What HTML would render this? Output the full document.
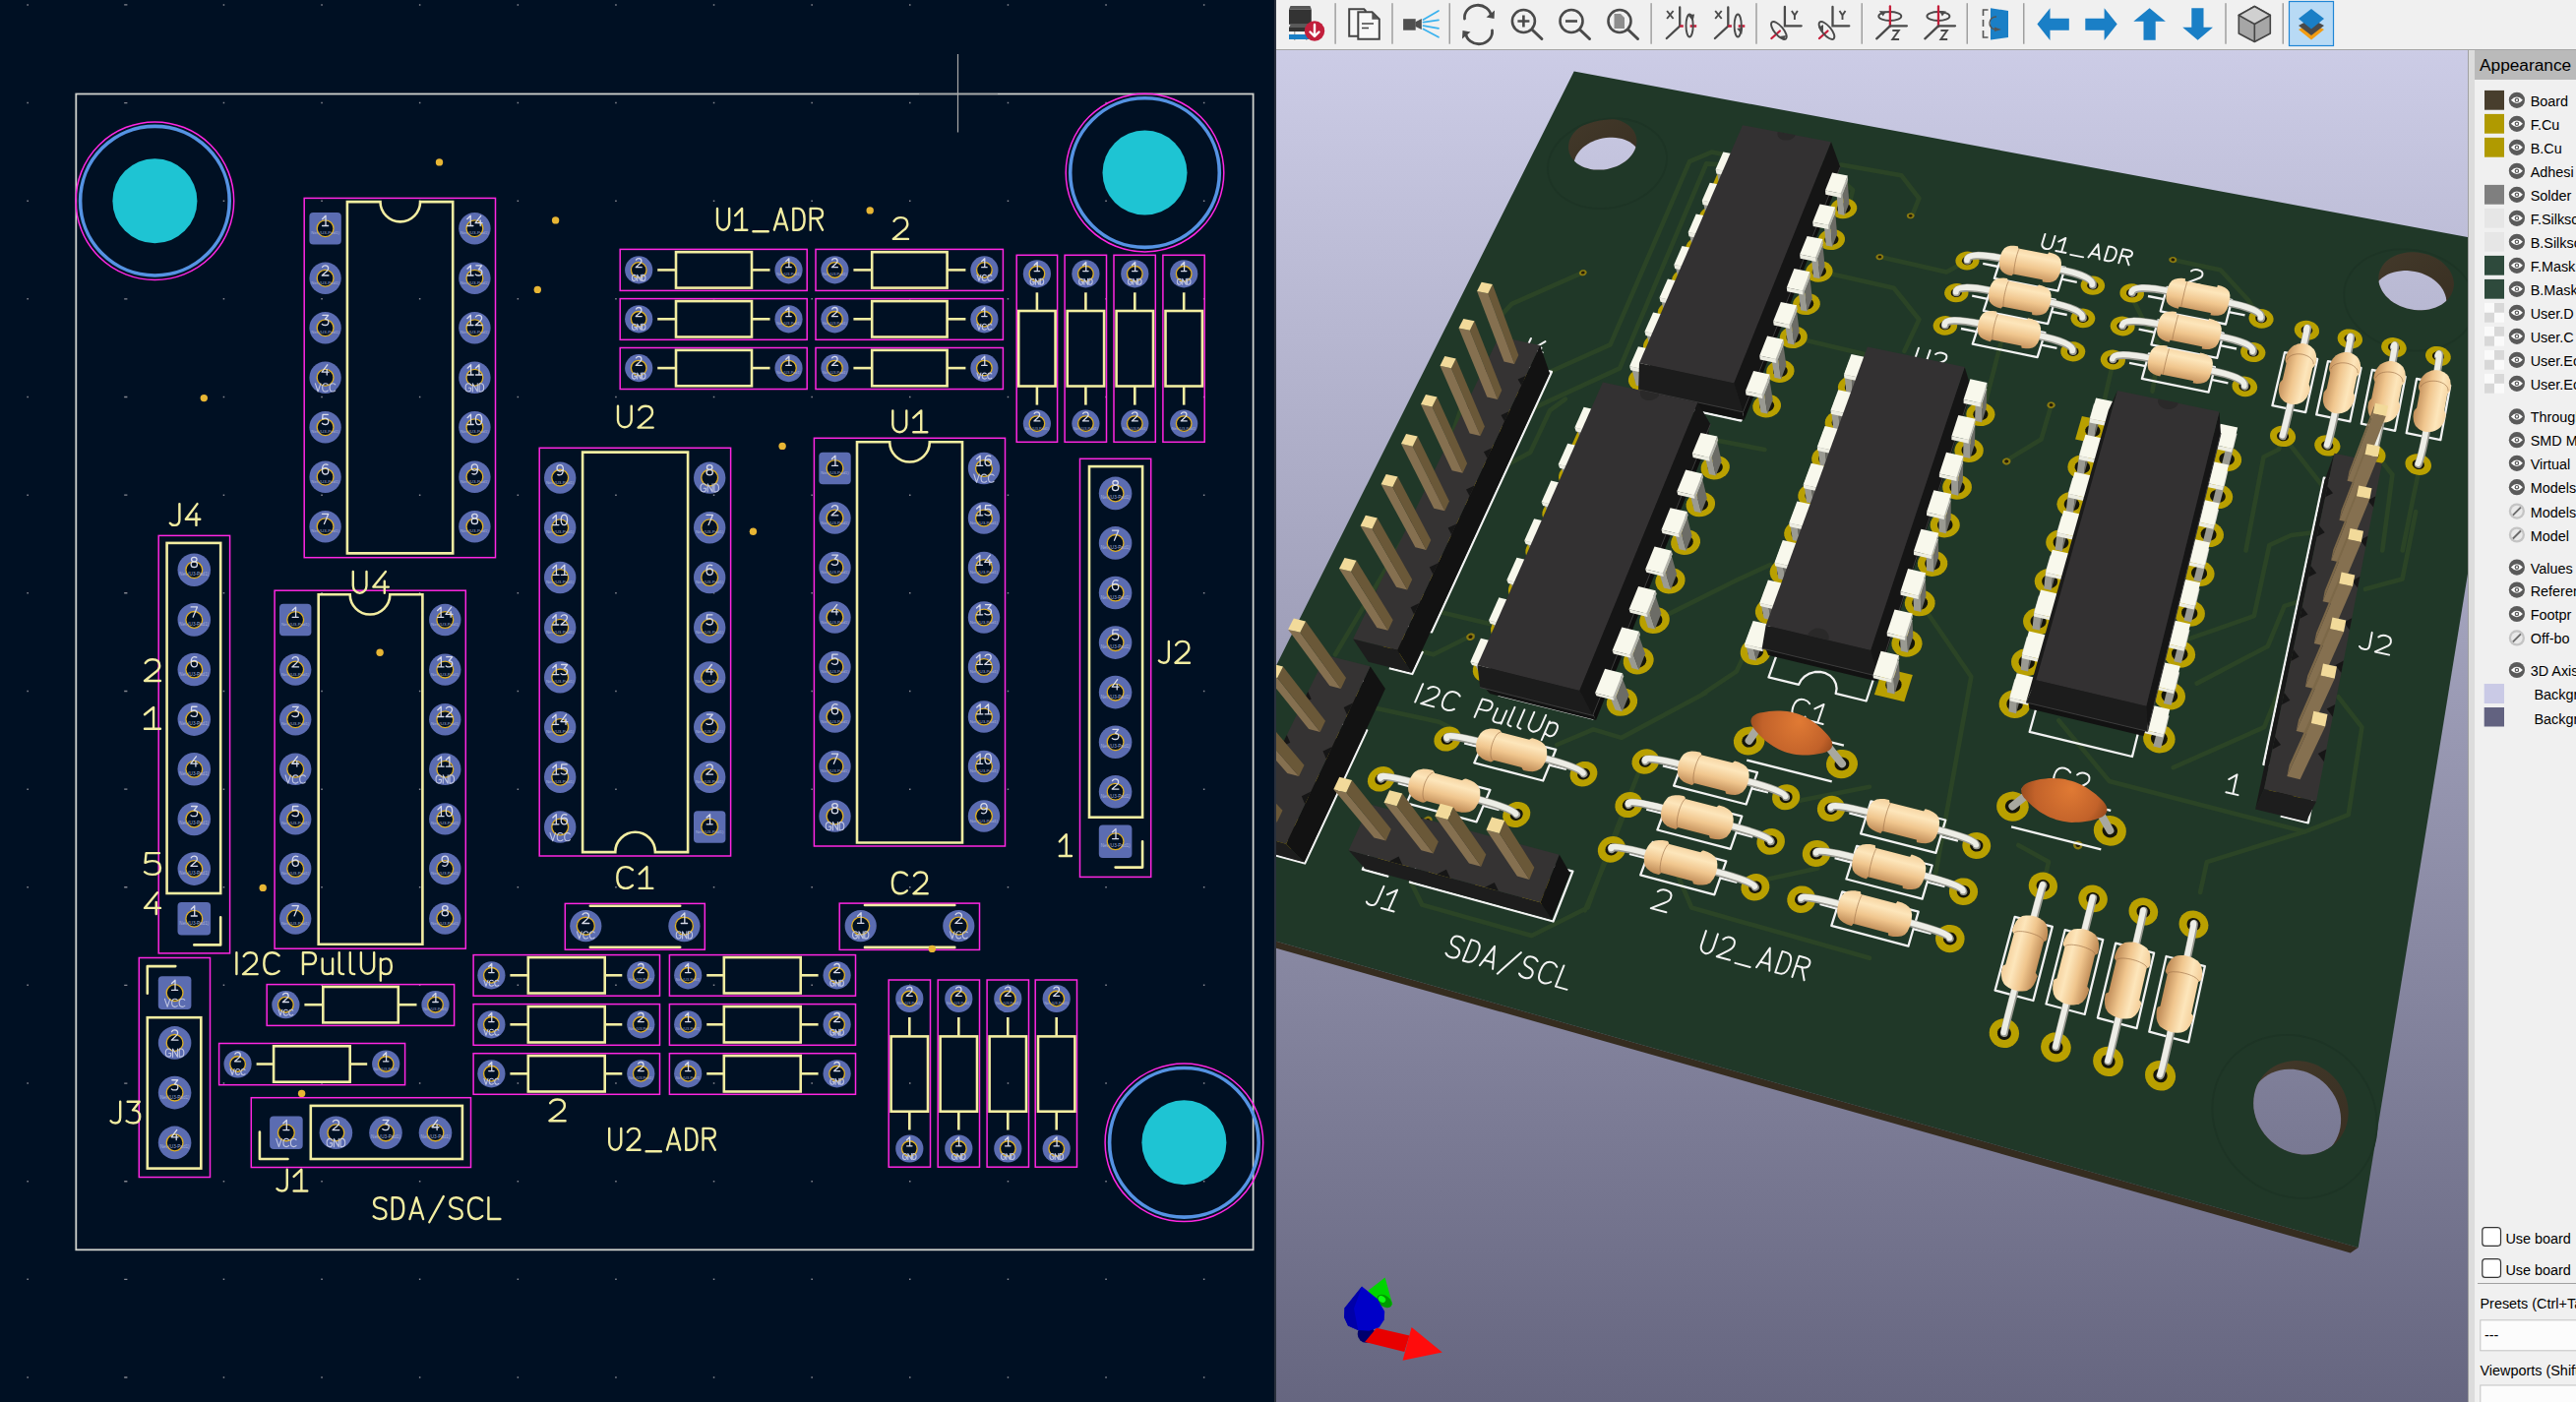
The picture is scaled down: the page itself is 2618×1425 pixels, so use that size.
<!DOCTYPE html><html><head><meta charset="utf-8"><style>
html,body{margin:0;padding:0;width:2618px;height:1425px;overflow:hidden;background:#f0f0f0;font-family:"Liberation Sans",sans-serif}
.abs{position:absolute}
</style></head><body>
<div class="abs" style="left:0;top:0;width:1295px;height:1425px;overflow:hidden">
<svg width="1295" height="1425" viewBox="0 0 1295 1425" style="position:absolute;left:0;top:0">
<rect width="1295" height="1425" fill="#001023"/>
<path d="M27.4 4.2h1.5v1.5h-1.5zM27.4 103.8h1.5v1.5h-1.5zM27.4 203.5h1.5v1.5h-1.5zM27.4 303.1h1.5v1.5h-1.5zM27.4 402.8h1.5v1.5h-1.5zM27.4 502.4h1.5v1.5h-1.5zM27.4 602.1h1.5v1.5h-1.5zM27.4 701.7h1.5v1.5h-1.5zM27.4 801.4h1.5v1.5h-1.5zM27.4 901h1.5v1.5h-1.5zM27.4 1000.6h1.5v1.5h-1.5zM27.4 1100.3h1.5v1.5h-1.5zM27.4 1200h1.5v1.5h-1.5zM27.4 1299.6h1.5v1.5h-1.5zM27.4 1399.3h1.5v1.5h-1.5zM126.2 4.2h3.2v1.4h-3.2zM126.2 103.9h3.2v1.4h-3.2zM126.2 203.5h3.2v1.4h-3.2zM126.2 303.2h3.2v1.4h-3.2zM126.2 402.8h3.2v1.4h-3.2zM126.2 502.4h3.2v1.4h-3.2zM126.2 602.1h3.2v1.4h-3.2zM126.2 701.8h3.2v1.4h-3.2zM126.2 801.4h3.2v1.4h-3.2zM126.2 901h3.2v1.4h-3.2zM126.2 1000.7h3.2v1.4h-3.2zM126.2 1100.4h3.2v1.4h-3.2zM126.2 1200h3.2v1.4h-3.2zM126.2 1299.7h3.2v1.4h-3.2zM126.2 1399.3h3.2v1.4h-3.2zM226.7 4.2h1.5v1.5h-1.5zM226.7 103.8h1.5v1.5h-1.5zM226.7 203.5h1.5v1.5h-1.5zM226.7 303.1h1.5v1.5h-1.5zM226.7 402.8h1.5v1.5h-1.5zM226.7 502.4h1.5v1.5h-1.5zM226.7 602.1h1.5v1.5h-1.5zM226.7 701.7h1.5v1.5h-1.5zM226.7 801.4h1.5v1.5h-1.5zM226.7 901h1.5v1.5h-1.5zM226.7 1000.6h1.5v1.5h-1.5zM226.7 1100.3h1.5v1.5h-1.5zM226.7 1200h1.5v1.5h-1.5zM226.7 1299.6h1.5v1.5h-1.5zM226.7 1399.3h1.5v1.5h-1.5zM326.3 4.2h1.5v1.5h-1.5zM326.3 103.8h1.5v1.5h-1.5zM326.3 203.5h1.5v1.5h-1.5zM326.3 303.1h1.5v1.5h-1.5zM326.3 402.8h1.5v1.5h-1.5zM326.3 502.4h1.5v1.5h-1.5zM326.3 602.1h1.5v1.5h-1.5zM326.3 701.7h1.5v1.5h-1.5zM326.3 801.4h1.5v1.5h-1.5zM326.3 901h1.5v1.5h-1.5zM326.3 1000.6h1.5v1.5h-1.5zM326.3 1100.3h1.5v1.5h-1.5zM326.3 1200h1.5v1.5h-1.5zM326.3 1299.6h1.5v1.5h-1.5zM326.3 1399.3h1.5v1.5h-1.5zM425.9 4.2h1.5v1.5h-1.5zM425.9 103.8h1.5v1.5h-1.5zM425.9 203.5h1.5v1.5h-1.5zM425.9 303.1h1.5v1.5h-1.5zM425.9 402.8h1.5v1.5h-1.5zM425.9 502.4h1.5v1.5h-1.5zM425.9 602.1h1.5v1.5h-1.5zM425.9 701.7h1.5v1.5h-1.5zM425.9 801.4h1.5v1.5h-1.5zM425.9 901h1.5v1.5h-1.5zM425.9 1000.6h1.5v1.5h-1.5zM425.9 1100.3h1.5v1.5h-1.5zM425.9 1200h1.5v1.5h-1.5zM425.9 1299.6h1.5v1.5h-1.5zM425.9 1399.3h1.5v1.5h-1.5zM525.6 4.2h1.5v1.5h-1.5zM525.6 103.8h1.5v1.5h-1.5zM525.6 203.5h1.5v1.5h-1.5zM525.6 303.1h1.5v1.5h-1.5zM525.6 402.8h1.5v1.5h-1.5zM525.6 502.4h1.5v1.5h-1.5zM525.6 602.1h1.5v1.5h-1.5zM525.6 701.7h1.5v1.5h-1.5zM525.6 801.4h1.5v1.5h-1.5zM525.6 901h1.5v1.5h-1.5zM525.6 1000.6h1.5v1.5h-1.5zM525.6 1100.3h1.5v1.5h-1.5zM525.6 1200h1.5v1.5h-1.5zM525.6 1299.6h1.5v1.5h-1.5zM525.6 1399.3h1.5v1.5h-1.5zM625.2 4.2h1.5v1.5h-1.5zM625.2 103.8h1.5v1.5h-1.5zM625.2 203.5h1.5v1.5h-1.5zM625.2 303.1h1.5v1.5h-1.5zM625.2 402.8h1.5v1.5h-1.5zM625.2 502.4h1.5v1.5h-1.5zM625.2 602.1h1.5v1.5h-1.5zM625.2 701.7h1.5v1.5h-1.5zM625.2 801.4h1.5v1.5h-1.5zM625.2 901h1.5v1.5h-1.5zM625.2 1000.6h1.5v1.5h-1.5zM625.2 1100.3h1.5v1.5h-1.5zM625.2 1200h1.5v1.5h-1.5zM625.2 1299.6h1.5v1.5h-1.5zM625.2 1399.3h1.5v1.5h-1.5zM724.8 4.2h1.5v1.5h-1.5zM724.8 103.8h1.5v1.5h-1.5zM724.8 203.5h1.5v1.5h-1.5zM724.8 303.1h1.5v1.5h-1.5zM724.8 402.8h1.5v1.5h-1.5zM724.8 502.4h1.5v1.5h-1.5zM724.8 602.1h1.5v1.5h-1.5zM724.8 701.7h1.5v1.5h-1.5zM724.8 801.4h1.5v1.5h-1.5zM724.8 901h1.5v1.5h-1.5zM724.8 1000.6h1.5v1.5h-1.5zM724.8 1100.3h1.5v1.5h-1.5zM724.8 1200h1.5v1.5h-1.5zM724.8 1299.6h1.5v1.5h-1.5zM724.8 1399.3h1.5v1.5h-1.5zM824.4 4.2h1.5v1.5h-1.5zM824.4 103.8h1.5v1.5h-1.5zM824.4 203.5h1.5v1.5h-1.5zM824.4 303.1h1.5v1.5h-1.5zM824.4 402.8h1.5v1.5h-1.5zM824.4 502.4h1.5v1.5h-1.5zM824.4 602.1h1.5v1.5h-1.5zM824.4 701.7h1.5v1.5h-1.5zM824.4 801.4h1.5v1.5h-1.5zM824.4 901h1.5v1.5h-1.5zM824.4 1000.6h1.5v1.5h-1.5zM824.4 1100.3h1.5v1.5h-1.5zM824.4 1200h1.5v1.5h-1.5zM824.4 1299.6h1.5v1.5h-1.5zM824.4 1399.3h1.5v1.5h-1.5zM924 4.2h1.5v1.5h-1.5zM924 103.8h1.5v1.5h-1.5zM924 203.5h1.5v1.5h-1.5zM924 303.1h1.5v1.5h-1.5zM924 402.8h1.5v1.5h-1.5zM924 502.4h1.5v1.5h-1.5zM924 602.1h1.5v1.5h-1.5zM924 701.7h1.5v1.5h-1.5zM924 801.4h1.5v1.5h-1.5zM924 901h1.5v1.5h-1.5zM924 1000.6h1.5v1.5h-1.5zM924 1100.3h1.5v1.5h-1.5zM924 1200h1.5v1.5h-1.5zM924 1299.6h1.5v1.5h-1.5zM924 1399.3h1.5v1.5h-1.5zM1023.7 4.2h1.5v1.5h-1.5zM1023.7 103.8h1.5v1.5h-1.5zM1023.7 203.5h1.5v1.5h-1.5zM1023.7 303.1h1.5v1.5h-1.5zM1023.7 402.8h1.5v1.5h-1.5zM1023.7 502.4h1.5v1.5h-1.5zM1023.7 602.1h1.5v1.5h-1.5zM1023.7 701.7h1.5v1.5h-1.5zM1023.7 801.4h1.5v1.5h-1.5zM1023.7 901h1.5v1.5h-1.5zM1023.7 1000.6h1.5v1.5h-1.5zM1023.7 1100.3h1.5v1.5h-1.5zM1023.7 1200h1.5v1.5h-1.5zM1023.7 1299.6h1.5v1.5h-1.5zM1023.7 1399.3h1.5v1.5h-1.5zM1123.3 4.2h1.5v1.5h-1.5zM1123.3 103.8h1.5v1.5h-1.5zM1123.3 203.5h1.5v1.5h-1.5zM1123.3 303.1h1.5v1.5h-1.5zM1123.3 402.8h1.5v1.5h-1.5zM1123.3 502.4h1.5v1.5h-1.5zM1123.3 602.1h1.5v1.5h-1.5zM1123.3 701.7h1.5v1.5h-1.5zM1123.3 801.4h1.5v1.5h-1.5zM1123.3 901h1.5v1.5h-1.5zM1123.3 1000.6h1.5v1.5h-1.5zM1123.3 1100.3h1.5v1.5h-1.5zM1123.3 1200h1.5v1.5h-1.5zM1123.3 1299.6h1.5v1.5h-1.5zM1123.3 1399.3h1.5v1.5h-1.5zM1222.9 4.2h1.5v1.5h-1.5zM1222.9 103.8h1.5v1.5h-1.5zM1222.9 203.5h1.5v1.5h-1.5zM1222.9 303.1h1.5v1.5h-1.5zM1222.9 402.8h1.5v1.5h-1.5zM1222.9 502.4h1.5v1.5h-1.5zM1222.9 602.1h1.5v1.5h-1.5zM1222.9 701.7h1.5v1.5h-1.5zM1222.9 801.4h1.5v1.5h-1.5zM1222.9 901h1.5v1.5h-1.5zM1222.9 1000.6h1.5v1.5h-1.5zM1222.9 1100.3h1.5v1.5h-1.5zM1222.9 1200h1.5v1.5h-1.5zM1222.9 1299.6h1.5v1.5h-1.5zM1222.9 1399.3h1.5v1.5h-1.5z" fill="#858891"/>
<rect x="77.3" y="95.5" width="1196.3" height="1174.8" fill="none" stroke="#d0d2cd" stroke-width="1.8"/>
<rect x="309.2" y="201.4" width="194.3" height="365.3" fill="none" stroke="#ff26e2" stroke-width="1.5"/>
<rect x="279.1" y="600.2" width="194.2" height="364" fill="none" stroke="#ff26e2" stroke-width="1.5"/>
<rect x="548.2" y="455.3" width="194.4" height="414.7" fill="none" stroke="#ff26e2" stroke-width="1.5"/>
<rect x="827.4" y="445.3" width="194.1" height="414.7" fill="none" stroke="#ff26e2" stroke-width="1.5"/>
<rect x="161.2" y="544.4" width="72.4" height="424.5" fill="none" stroke="#ff26e2" stroke-width="1.5"/>
<rect x="1097.5" y="466.3" width="72.2" height="425.1" fill="none" stroke="#ff26e2" stroke-width="1.5"/>
<rect x="141.3" y="973.5" width="72.2" height="223" fill="none" stroke="#ff26e2" stroke-width="1.5"/>
<rect x="255.3" y="1115.7" width="223.2" height="70.8" fill="none" stroke="#ff26e2" stroke-width="1.5"/>
<rect x="630.2" y="253.4" width="190" height="42" fill="none" stroke="#ff26e2" stroke-width="1.5"/>
<rect x="829" y="253.4" width="190.4" height="42" fill="none" stroke="#ff26e2" stroke-width="1.5"/>
<rect x="630.2" y="303.6" width="190" height="41.7" fill="none" stroke="#ff26e2" stroke-width="1.5"/>
<rect x="829" y="303.6" width="190.4" height="41.7" fill="none" stroke="#ff26e2" stroke-width="1.5"/>
<rect x="630.2" y="353.5" width="190" height="42" fill="none" stroke="#ff26e2" stroke-width="1.5"/>
<rect x="829" y="353.5" width="190.4" height="42" fill="none" stroke="#ff26e2" stroke-width="1.5"/>
<rect x="1033.2" y="259.3" width="41.4" height="190" fill="none" stroke="#ff26e2" stroke-width="1.5"/>
<rect x="1082.1" y="259.3" width="42.4" height="190" fill="none" stroke="#ff26e2" stroke-width="1.5"/>
<rect x="1132" y="259.3" width="42.3" height="190" fill="none" stroke="#ff26e2" stroke-width="1.5"/>
<rect x="1181.9" y="259.3" width="42.3" height="190" fill="none" stroke="#ff26e2" stroke-width="1.5"/>
<rect x="903.2" y="996" width="42.3" height="190.2" fill="none" stroke="#ff26e2" stroke-width="1.5"/>
<rect x="953.2" y="996" width="42.3" height="190.2" fill="none" stroke="#ff26e2" stroke-width="1.5"/>
<rect x="1003.1" y="996" width="42.4" height="190.2" fill="none" stroke="#ff26e2" stroke-width="1.5"/>
<rect x="1052.2" y="996" width="42.3" height="190.2" fill="none" stroke="#ff26e2" stroke-width="1.5"/>
<rect x="481.1" y="970.6" width="189.4" height="41.6" fill="none" stroke="#ff26e2" stroke-width="1.5"/>
<rect x="680.4" y="970.6" width="189.1" height="41.6" fill="none" stroke="#ff26e2" stroke-width="1.5"/>
<rect x="481.1" y="1020.6" width="189.4" height="41.7" fill="none" stroke="#ff26e2" stroke-width="1.5"/>
<rect x="680.4" y="1020.6" width="189.1" height="41.7" fill="none" stroke="#ff26e2" stroke-width="1.5"/>
<rect x="481.1" y="1070.7" width="189.4" height="41.6" fill="none" stroke="#ff26e2" stroke-width="1.5"/>
<rect x="680.4" y="1070.7" width="189.1" height="41.6" fill="none" stroke="#ff26e2" stroke-width="1.5"/>
<rect x="271.2" y="1000.6" width="190.4" height="41.8" fill="none" stroke="#ff26e2" stroke-width="1.5"/>
<rect x="222.6" y="1060.5" width="189" height="42.2" fill="none" stroke="#ff26e2" stroke-width="1.5"/>
<rect x="574.3" y="918.4" width="142" height="46.8" fill="none" stroke="#ff26e2" stroke-width="1.5"/>
<rect x="853.2" y="918.1" width="142.3" height="47.3" fill="none" stroke="#ff26e2" stroke-width="1.5"/>
<path d="M352.9 205.1 H386.5 A20.3 20.3 0 0 0 427.1 205.1 H460.2 V562.4 H352.9 Z" fill="none" stroke="#f2eda1" stroke-width="2.6"/>
<path d="M323.7 604.3 H355.7 A20.3 20.3 0 0 0 396.3 604.3 H429.4 V959.8 H323.7 Z" fill="none" stroke="#f2eda1" stroke-width="2.6"/>
<path d="M592.1 459.6 H699.1 V866.1 H665.9 A20.3 20.3 0 0 0 625.3 866.1 H592.1 Z" fill="none" stroke="#f2eda1" stroke-width="2.6"/>
<path d="M871 449.2 H904.2 A20.3 20.3 0 0 0 944.8 449.2 H978 V856.5 H871 Z" fill="none" stroke="#f2eda1" stroke-width="2.6"/>
<rect x="169.6" y="551.9" width="54.6" height="356.1" fill="none" stroke="#f2eda1" stroke-width="2.6"/>
<polyline points="197.3,960.4 224.2,960.4 224.2,932.2" fill="none" stroke="#f2eda1" stroke-width="2.6" stroke-linecap="round" stroke-linejoin="round"/>
<rect x="1107" y="474.1" width="54.1" height="356.6" fill="none" stroke="#f2eda1" stroke-width="2.6"/>
<polyline points="1133.6,881.6 1161.1,881.6 1161.1,855.3" fill="none" stroke="#f2eda1" stroke-width="2.6" stroke-linecap="round" stroke-linejoin="round"/>
<rect x="149.8" y="1034.2" width="54.5" height="153.4" fill="none" stroke="#f2eda1" stroke-width="2.6"/>
<polyline points="149.8,1009.8 149.8,982.1 178.3,982.1" fill="none" stroke="#f2eda1" stroke-width="2.6" stroke-linecap="round" stroke-linejoin="round"/>
<rect x="315.8" y="1123.9" width="154.1" height="54.1" fill="none" stroke="#f2eda1" stroke-width="2.6"/>
<polyline points="263.9,1150.6 263.9,1178 292.5,1178" fill="none" stroke="#f2eda1" stroke-width="2.6" stroke-linecap="round" stroke-linejoin="round"/>
<rect x="687" y="256.2" width="77" height="36.4" fill="none" stroke="#f2eda1" stroke-width="2.6"/>
<polyline points="668.2,274.4 687,274.4" fill="none" stroke="#f2eda1" stroke-width="2.6" stroke-linecap="butt" stroke-linejoin="round"/>
<polyline points="764,274.4 782.5,274.4" fill="none" stroke="#f2eda1" stroke-width="2.6" stroke-linecap="butt" stroke-linejoin="round"/>
<rect x="886.2" y="256.2" width="76.4" height="36.4" fill="none" stroke="#f2eda1" stroke-width="2.6"/>
<polyline points="867.4,274.4 886.2,274.4" fill="none" stroke="#f2eda1" stroke-width="2.6" stroke-linecap="butt" stroke-linejoin="round"/>
<polyline points="962.6,274.4 981.4,274.4" fill="none" stroke="#f2eda1" stroke-width="2.6" stroke-linecap="butt" stroke-linejoin="round"/>
<rect x="687" y="306.1" width="77" height="36.4" fill="none" stroke="#f2eda1" stroke-width="2.6"/>
<polyline points="668.2,324.3 687,324.3" fill="none" stroke="#f2eda1" stroke-width="2.6" stroke-linecap="butt" stroke-linejoin="round"/>
<polyline points="764,324.3 782.5,324.3" fill="none" stroke="#f2eda1" stroke-width="2.6" stroke-linecap="butt" stroke-linejoin="round"/>
<rect x="886.2" y="306.1" width="76.4" height="36.4" fill="none" stroke="#f2eda1" stroke-width="2.6"/>
<polyline points="867.4,324.3 886.2,324.3" fill="none" stroke="#f2eda1" stroke-width="2.6" stroke-linecap="butt" stroke-linejoin="round"/>
<polyline points="962.6,324.3 981.4,324.3" fill="none" stroke="#f2eda1" stroke-width="2.6" stroke-linecap="butt" stroke-linejoin="round"/>
<rect x="687" y="355.9" width="77" height="36.4" fill="none" stroke="#f2eda1" stroke-width="2.6"/>
<polyline points="668.2,374.1 687,374.1" fill="none" stroke="#f2eda1" stroke-width="2.6" stroke-linecap="butt" stroke-linejoin="round"/>
<polyline points="764,374.1 782.5,374.1" fill="none" stroke="#f2eda1" stroke-width="2.6" stroke-linecap="butt" stroke-linejoin="round"/>
<rect x="886.2" y="355.9" width="76.4" height="36.4" fill="none" stroke="#f2eda1" stroke-width="2.6"/>
<polyline points="867.4,374.1 886.2,374.1" fill="none" stroke="#f2eda1" stroke-width="2.6" stroke-linecap="butt" stroke-linejoin="round"/>
<polyline points="962.6,374.1 981.4,374.1" fill="none" stroke="#f2eda1" stroke-width="2.6" stroke-linecap="butt" stroke-linejoin="round"/>
<rect x="1035.2" y="316" width="37.4" height="76.5" fill="none" stroke="#f2eda1" stroke-width="2.6"/>
<polyline points="1053.9,297.3 1053.9,316" fill="none" stroke="#f2eda1" stroke-width="2.6" stroke-linecap="butt" stroke-linejoin="round"/>
<polyline points="1053.9,392.5 1053.9,411.6" fill="none" stroke="#f2eda1" stroke-width="2.6" stroke-linecap="butt" stroke-linejoin="round"/>
<rect x="1084.7" y="316" width="37.4" height="76.5" fill="none" stroke="#f2eda1" stroke-width="2.6"/>
<polyline points="1103.4,297.3 1103.4,316" fill="none" stroke="#f2eda1" stroke-width="2.6" stroke-linecap="butt" stroke-linejoin="round"/>
<polyline points="1103.4,392.5 1103.4,411.6" fill="none" stroke="#f2eda1" stroke-width="2.6" stroke-linecap="butt" stroke-linejoin="round"/>
<rect x="1134.6" y="316" width="37.4" height="76.5" fill="none" stroke="#f2eda1" stroke-width="2.6"/>
<polyline points="1153.3,297.3 1153.3,316" fill="none" stroke="#f2eda1" stroke-width="2.6" stroke-linecap="butt" stroke-linejoin="round"/>
<polyline points="1153.3,392.5 1153.3,411.6" fill="none" stroke="#f2eda1" stroke-width="2.6" stroke-linecap="butt" stroke-linejoin="round"/>
<rect x="1184.5" y="316" width="37.4" height="76.5" fill="none" stroke="#f2eda1" stroke-width="2.6"/>
<polyline points="1203.2,297.3 1203.2,316" fill="none" stroke="#f2eda1" stroke-width="2.6" stroke-linecap="butt" stroke-linejoin="round"/>
<polyline points="1203.2,392.5 1203.2,411.6" fill="none" stroke="#f2eda1" stroke-width="2.6" stroke-linecap="butt" stroke-linejoin="round"/>
<rect x="905.6" y="1053.4" width="37.4" height="76.3" fill="none" stroke="#f2eda1" stroke-width="2.6"/>
<polyline points="924.3,1034 924.3,1053.4" fill="none" stroke="#f2eda1" stroke-width="2.6" stroke-linecap="butt" stroke-linejoin="round"/>
<polyline points="924.3,1129.7 924.3,1148.5" fill="none" stroke="#f2eda1" stroke-width="2.6" stroke-linecap="butt" stroke-linejoin="round"/>
<rect x="955.6" y="1053.4" width="37.4" height="76.3" fill="none" stroke="#f2eda1" stroke-width="2.6"/>
<polyline points="974.3,1034 974.3,1053.4" fill="none" stroke="#f2eda1" stroke-width="2.6" stroke-linecap="butt" stroke-linejoin="round"/>
<polyline points="974.3,1129.7 974.3,1148.5" fill="none" stroke="#f2eda1" stroke-width="2.6" stroke-linecap="butt" stroke-linejoin="round"/>
<rect x="1005.6" y="1053.4" width="37.4" height="76.3" fill="none" stroke="#f2eda1" stroke-width="2.6"/>
<polyline points="1024.3,1034 1024.3,1053.4" fill="none" stroke="#f2eda1" stroke-width="2.6" stroke-linecap="butt" stroke-linejoin="round"/>
<polyline points="1024.3,1129.7 1024.3,1148.5" fill="none" stroke="#f2eda1" stroke-width="2.6" stroke-linecap="butt" stroke-linejoin="round"/>
<rect x="1055" y="1053.4" width="37.4" height="76.3" fill="none" stroke="#f2eda1" stroke-width="2.6"/>
<polyline points="1073.7,1034 1073.7,1053.4" fill="none" stroke="#f2eda1" stroke-width="2.6" stroke-linecap="butt" stroke-linejoin="round"/>
<polyline points="1073.7,1129.7 1073.7,1148.5" fill="none" stroke="#f2eda1" stroke-width="2.6" stroke-linecap="butt" stroke-linejoin="round"/>
<rect x="536.8" y="973.1" width="77.9" height="36.4" fill="none" stroke="#f2eda1" stroke-width="2.6"/>
<polyline points="518.4,991.3 536.8,991.3" fill="none" stroke="#f2eda1" stroke-width="2.6" stroke-linecap="butt" stroke-linejoin="round"/>
<polyline points="614.7,991.3 632.3,991.3" fill="none" stroke="#f2eda1" stroke-width="2.6" stroke-linecap="butt" stroke-linejoin="round"/>
<rect x="735.8" y="973.1" width="77.9" height="36.4" fill="none" stroke="#f2eda1" stroke-width="2.6"/>
<polyline points="718.2,991.3 735.8,991.3" fill="none" stroke="#f2eda1" stroke-width="2.6" stroke-linecap="butt" stroke-linejoin="round"/>
<polyline points="813.7,991.3 831.6,991.3" fill="none" stroke="#f2eda1" stroke-width="2.6" stroke-linecap="butt" stroke-linejoin="round"/>
<rect x="536.8" y="1023.1" width="77.9" height="36.4" fill="none" stroke="#f2eda1" stroke-width="2.6"/>
<polyline points="518.4,1041.3 536.8,1041.3" fill="none" stroke="#f2eda1" stroke-width="2.6" stroke-linecap="butt" stroke-linejoin="round"/>
<polyline points="614.7,1041.3 632.3,1041.3" fill="none" stroke="#f2eda1" stroke-width="2.6" stroke-linecap="butt" stroke-linejoin="round"/>
<rect x="735.8" y="1023.1" width="77.9" height="36.4" fill="none" stroke="#f2eda1" stroke-width="2.6"/>
<polyline points="718.2,1041.3 735.8,1041.3" fill="none" stroke="#f2eda1" stroke-width="2.6" stroke-linecap="butt" stroke-linejoin="round"/>
<polyline points="813.7,1041.3 831.6,1041.3" fill="none" stroke="#f2eda1" stroke-width="2.6" stroke-linecap="butt" stroke-linejoin="round"/>
<rect x="536.8" y="1073.1" width="77.9" height="36.4" fill="none" stroke="#f2eda1" stroke-width="2.6"/>
<polyline points="518.4,1091.3 536.8,1091.3" fill="none" stroke="#f2eda1" stroke-width="2.6" stroke-linecap="butt" stroke-linejoin="round"/>
<polyline points="614.7,1091.3 632.3,1091.3" fill="none" stroke="#f2eda1" stroke-width="2.6" stroke-linecap="butt" stroke-linejoin="round"/>
<rect x="735.8" y="1073.1" width="77.9" height="36.4" fill="none" stroke="#f2eda1" stroke-width="2.6"/>
<polyline points="718.2,1091.3 735.8,1091.3" fill="none" stroke="#f2eda1" stroke-width="2.6" stroke-linecap="butt" stroke-linejoin="round"/>
<polyline points="813.7,1091.3 831.6,1091.3" fill="none" stroke="#f2eda1" stroke-width="2.6" stroke-linecap="butt" stroke-linejoin="round"/>
<rect x="328.3" y="1003" width="76.5" height="36.4" fill="none" stroke="#f2eda1" stroke-width="2.6"/>
<polyline points="309.4,1021.2 328.3,1021.2" fill="none" stroke="#f2eda1" stroke-width="2.6" stroke-linecap="butt" stroke-linejoin="round"/>
<polyline points="404.8,1021.2 423.5,1021.2" fill="none" stroke="#f2eda1" stroke-width="2.6" stroke-linecap="butt" stroke-linejoin="round"/>
<rect x="278.1" y="1063.3" width="77.6" height="36.4" fill="none" stroke="#f2eda1" stroke-width="2.6"/>
<polyline points="260.6,1081.5 278.1,1081.5" fill="none" stroke="#f2eda1" stroke-width="2.6" stroke-linecap="butt" stroke-linejoin="round"/>
<polyline points="355.7,1081.5 373.2,1081.5" fill="none" stroke="#f2eda1" stroke-width="2.6" stroke-linecap="butt" stroke-linejoin="round"/>
<polyline points="599.8,920.8 691.2,920.8" fill="none" stroke="#f2eda1" stroke-width="2.6" stroke-linecap="round" stroke-linejoin="round"/>
<polyline points="599.8,962.8 691.2,962.8" fill="none" stroke="#f2eda1" stroke-width="2.6" stroke-linecap="round" stroke-linejoin="round"/>
<polyline points="878.9,920 970.3,920" fill="none" stroke="#f2eda1" stroke-width="2.6" stroke-linecap="round" stroke-linejoin="round"/>
<polyline points="878.9,962.9 970.3,962.9" fill="none" stroke="#f2eda1" stroke-width="2.6" stroke-linecap="round" stroke-linejoin="round"/>
<rect x="314.4" y="216" width="32.4" height="32.4" rx="4" fill="#5b6cb1"/>
<circle cx="330.6" cy="232.2" r="8.4" fill="#001023" stroke="#dcae26" stroke-width="1.35"/>
<path d="M327.54 222.67L331.01 219.30V229.50M327.54 229.50H333.66" fill="none" stroke="#d8dbea" stroke-width="1.3" stroke-linecap="round" stroke-linejoin="round"/>
<text x="330.6" y="238.2" font-size="4.4" text-anchor="middle" fill="#a6add4" font-family='"Liberation Sans", sans-serif'>Net-(U3-Pad1)</text>
<circle cx="330.6" cy="282.7" r="16.2" fill="#5b6cb1"/>
<circle cx="330.6" cy="282.7" r="8.4" fill="#001023" stroke="#dcae26" stroke-width="1.35"/>
<path d="M327.54 271.53Q328.56 269.80 330.60 269.80Q333.66 269.80 333.66 272.86Q333.66 274.39 331.82 275.92L327.23 280.00H333.97" fill="none" stroke="#d8dbea" stroke-width="1.3" stroke-linecap="round" stroke-linejoin="round"/>
<text x="330.6" y="288.7" font-size="4.4" text-anchor="middle" fill="#a6add4" font-family='"Liberation Sans", sans-serif'>Net-(U3-Pad1)</text>
<circle cx="330.6" cy="333.2" r="16.2" fill="#5b6cb1"/>
<circle cx="330.6" cy="333.2" r="8.4" fill="#001023" stroke="#dcae26" stroke-width="1.35"/>
<path d="M327.85 320.30H333.66L330.40 324.38Q333.86 324.38 333.86 327.44Q333.86 330.50 330.60 330.50Q328.56 330.50 327.34 329.48" fill="none" stroke="#d8dbea" stroke-width="1.3" stroke-linecap="round" stroke-linejoin="round"/>
<text x="330.6" y="339.2" font-size="4.4" text-anchor="middle" fill="#a6add4" font-family='"Liberation Sans", sans-serif'>Net-(U3-Pad1)</text>
<circle cx="330.6" cy="383.7" r="16.2" fill="#5b6cb1"/>
<circle cx="330.6" cy="383.7" r="8.4" fill="#001023" stroke="#dcae26" stroke-width="1.35"/>
<path d="M332.74 370.80L327.13 378.14H334.07M332.23 375.39V381.00" fill="none" stroke="#d8dbea" stroke-width="1.3" stroke-linecap="round" stroke-linejoin="round"/>
<path d="M320.43 389.80L323.14 398.00L325.84 389.80M333.31 390.95Q332.24 389.80 330.76 389.80Q327.65 389.80 327.65 393.90Q327.65 398.00 330.76 398.00Q332.24 398.00 333.31 396.85M340.77 390.95Q339.70 389.80 338.23 389.80Q335.11 389.80 335.11 393.90Q335.11 398.00 338.23 398.00Q339.70 398.00 340.77 396.85" fill="none" stroke="#c0c6e2" stroke-width="1.1" stroke-linecap="round" stroke-linejoin="round"/>
<circle cx="330.6" cy="434.2" r="16.2" fill="#5b6cb1"/>
<circle cx="330.6" cy="434.2" r="8.4" fill="#001023" stroke="#dcae26" stroke-width="1.35"/>
<path d="M333.35 421.30H328.05L327.64 425.89Q328.97 425.07 330.50 425.07Q333.76 425.07 333.76 428.24Q333.76 431.50 330.50 431.50Q328.46 431.50 327.44 430.28" fill="none" stroke="#d8dbea" stroke-width="1.3" stroke-linecap="round" stroke-linejoin="round"/>
<text x="330.6" y="440.2" font-size="4.4" text-anchor="middle" fill="#a6add4" font-family='"Liberation Sans", sans-serif'>Net-(U3-Pad1)</text>
<circle cx="330.6" cy="484.7" r="16.2" fill="#5b6cb1"/>
<circle cx="330.6" cy="484.7" r="8.4" fill="#001023" stroke="#dcae26" stroke-width="1.35"/>
<path d="M333.05 472.31Q332.03 471.80 331.01 471.80Q327.44 471.80 327.44 477.92Q327.44 482.00 330.70 482.00Q333.76 482.00 333.76 478.74Q333.76 475.68 330.70 475.68Q328.46 475.68 327.44 477.41" fill="none" stroke="#d8dbea" stroke-width="1.3" stroke-linecap="round" stroke-linejoin="round"/>
<text x="330.6" y="490.7" font-size="4.4" text-anchor="middle" fill="#a6add4" font-family='"Liberation Sans", sans-serif'>Net-(U3-Pad1)</text>
<circle cx="330.6" cy="535.2" r="16.2" fill="#5b6cb1"/>
<circle cx="330.6" cy="535.2" r="8.4" fill="#001023" stroke="#dcae26" stroke-width="1.35"/>
<path d="M327.44 522.30H333.76L329.48 532.50" fill="none" stroke="#d8dbea" stroke-width="1.3" stroke-linecap="round" stroke-linejoin="round"/>
<text x="330.6" y="541.2" font-size="4.4" text-anchor="middle" fill="#a6add4" font-family='"Liberation Sans", sans-serif'>Net-(U3-Pad1)</text>
<circle cx="482.4" cy="535.2" r="16.2" fill="#5b6cb1"/>
<circle cx="482.4" cy="535.2" r="8.4" fill="#001023" stroke="#dcae26" stroke-width="1.35"/>
<path d="M482.40 526.89Q479.65 526.89 479.65 524.54Q479.65 522.30 482.40 522.30Q485.15 522.30 485.15 524.54Q485.15 526.89 482.40 526.89Q479.24 527.09 479.24 529.64Q479.24 532.50 482.40 532.50Q485.56 532.50 485.56 529.64Q485.56 527.09 482.40 526.89Z" fill="none" stroke="#d8dbea" stroke-width="1.3" stroke-linecap="round" stroke-linejoin="round"/>
<text x="482.4" y="541.2" font-size="4.4" text-anchor="middle" fill="#a6add4" font-family='"Liberation Sans", sans-serif'>Net-(U3-Pad1)</text>
<circle cx="482.4" cy="484.7" r="16.2" fill="#5b6cb1"/>
<circle cx="482.4" cy="484.7" r="8.4" fill="#001023" stroke="#dcae26" stroke-width="1.35"/>
<path d="M485.56 476.39Q484.54 478.12 482.30 478.12Q479.24 478.12 479.24 474.96Q479.24 471.80 482.40 471.80Q485.56 471.80 485.56 475.88Q485.56 482.00 482.09 482.00Q480.77 482.00 479.95 481.49" fill="none" stroke="#d8dbea" stroke-width="1.3" stroke-linecap="round" stroke-linejoin="round"/>
<text x="482.4" y="490.7" font-size="4.4" text-anchor="middle" fill="#a6add4" font-family='"Liberation Sans", sans-serif'>Net-(U3-Pad1)</text>
<circle cx="482.4" cy="434.2" r="16.2" fill="#5b6cb1"/>
<circle cx="482.4" cy="434.2" r="8.4" fill="#001023" stroke="#dcae26" stroke-width="1.35"/>
<path d="M475.06 424.67L478.52 421.30V431.50M475.06 431.50H481.18M486.58 421.30Q489.74 421.30 489.74 426.40Q489.74 431.50 486.58 431.50Q483.42 431.50 483.42 426.40Q483.42 421.30 486.58 421.30Z" fill="none" stroke="#d8dbea" stroke-width="1.3" stroke-linecap="round" stroke-linejoin="round"/>
<text x="482.4" y="440.2" font-size="4.4" text-anchor="middle" fill="#a6add4" font-family='"Liberation Sans", sans-serif'>Net-(U3-Pad1)</text>
<circle cx="482.4" cy="383.7" r="16.2" fill="#5b6cb1"/>
<circle cx="482.4" cy="383.7" r="8.4" fill="#001023" stroke="#dcae26" stroke-width="1.35"/>
<path d="M475.16 374.17L478.63 370.80V381.00M475.16 381.00H481.28M483.52 374.17L486.99 370.80V381.00M483.52 381.00H489.64" fill="none" stroke="#d8dbea" stroke-width="1.3" stroke-linecap="round" stroke-linejoin="round"/>
<path d="M478.55 390.95Q477.64 389.80 476.09 389.80Q473.13 389.80 473.13 393.90Q473.13 398.00 476.09 398.00Q478.55 398.00 478.55 395.54V394.31H476.41M480.35 398.00V389.80L485.27 398.00V389.80M487.07 398.00V389.80H488.71Q491.67 389.80 491.67 393.90Q491.67 398.00 488.71 398.00Z" fill="none" stroke="#c0c6e2" stroke-width="1.1" stroke-linecap="round" stroke-linejoin="round"/>
<circle cx="482.4" cy="333.2" r="16.2" fill="#5b6cb1"/>
<circle cx="482.4" cy="333.2" r="8.4" fill="#001023" stroke="#dcae26" stroke-width="1.35"/>
<path d="M474.85 323.67L478.32 320.30V330.50M474.85 330.50H480.97M483.52 322.03Q484.54 320.30 486.58 320.30Q489.64 320.30 489.64 323.36Q489.64 324.89 487.81 326.42L483.22 330.50H489.95" fill="none" stroke="#d8dbea" stroke-width="1.3" stroke-linecap="round" stroke-linejoin="round"/>
<text x="482.4" y="339.2" font-size="4.4" text-anchor="middle" fill="#a6add4" font-family='"Liberation Sans", sans-serif'>Net-(U3-Pad1)</text>
<circle cx="482.4" cy="282.7" r="16.2" fill="#5b6cb1"/>
<circle cx="482.4" cy="282.7" r="8.4" fill="#001023" stroke="#dcae26" stroke-width="1.35"/>
<path d="M474.95 273.17L478.42 269.80V280.00M474.95 280.00H481.07M483.83 269.80H489.64L486.38 273.88Q489.85 273.88 489.85 276.94Q489.85 280.00 486.58 280.00Q484.54 280.00 483.32 278.98" fill="none" stroke="#d8dbea" stroke-width="1.3" stroke-linecap="round" stroke-linejoin="round"/>
<text x="482.4" y="288.7" font-size="4.4" text-anchor="middle" fill="#a6add4" font-family='"Liberation Sans", sans-serif'>Net-(U3-Pad1)</text>
<circle cx="482.4" cy="232.2" r="16.2" fill="#5b6cb1"/>
<circle cx="482.4" cy="232.2" r="8.4" fill="#001023" stroke="#dcae26" stroke-width="1.35"/>
<path d="M474.75 222.67L478.22 219.30V229.50M474.75 229.50H480.87M488.72 219.30L483.11 226.64H490.05M488.21 223.89V229.50" fill="none" stroke="#d8dbea" stroke-width="1.3" stroke-linecap="round" stroke-linejoin="round"/>
<text x="482.4" y="238.2" font-size="4.4" text-anchor="middle" fill="#a6add4" font-family='"Liberation Sans", sans-serif'>Net-(U3-Pad1)</text>
<rect x="284" y="613.8" width="32.4" height="32.4" rx="4" fill="#5b6cb1"/>
<circle cx="300.2" cy="630" r="8.4" fill="#001023" stroke="#dcae26" stroke-width="1.35"/>
<path d="M297.14 620.47L300.61 617.10V627.30M297.14 627.30H303.26" fill="none" stroke="#d8dbea" stroke-width="1.3" stroke-linecap="round" stroke-linejoin="round"/>
<text x="300.2" y="636" font-size="4.4" text-anchor="middle" fill="#a6add4" font-family='"Liberation Sans", sans-serif'>Net-(U3-Pad1)</text>
<circle cx="300.2" cy="680.6" r="16.2" fill="#5b6cb1"/>
<circle cx="300.2" cy="680.6" r="8.4" fill="#001023" stroke="#dcae26" stroke-width="1.35"/>
<path d="M297.14 669.43Q298.16 667.70 300.20 667.70Q303.26 667.70 303.26 670.76Q303.26 672.29 301.42 673.82L296.83 677.90H303.57" fill="none" stroke="#d8dbea" stroke-width="1.3" stroke-linecap="round" stroke-linejoin="round"/>
<text x="300.2" y="686.6" font-size="4.4" text-anchor="middle" fill="#a6add4" font-family='"Liberation Sans", sans-serif'>Net-(U3-Pad1)</text>
<circle cx="300.2" cy="731.2" r="16.2" fill="#5b6cb1"/>
<circle cx="300.2" cy="731.2" r="8.4" fill="#001023" stroke="#dcae26" stroke-width="1.35"/>
<path d="M297.45 718.30H303.26L300.00 722.38Q303.46 722.38 303.46 725.44Q303.46 728.50 300.20 728.50Q298.16 728.50 296.94 727.48" fill="none" stroke="#d8dbea" stroke-width="1.3" stroke-linecap="round" stroke-linejoin="round"/>
<text x="300.2" y="737.2" font-size="4.4" text-anchor="middle" fill="#a6add4" font-family='"Liberation Sans", sans-serif'>Net-(U3-Pad1)</text>
<circle cx="300.2" cy="781.8" r="16.2" fill="#5b6cb1"/>
<circle cx="300.2" cy="781.8" r="8.4" fill="#001023" stroke="#dcae26" stroke-width="1.35"/>
<path d="M302.34 768.90L296.73 776.24H303.67M301.83 773.49V779.10" fill="none" stroke="#d8dbea" stroke-width="1.3" stroke-linecap="round" stroke-linejoin="round"/>
<path d="M290.03 787.90L292.74 796.10L295.44 787.90M302.91 789.05Q301.84 787.90 300.36 787.90Q297.25 787.90 297.25 792.00Q297.25 796.10 300.36 796.10Q301.84 796.10 302.91 794.95M310.37 789.05Q309.30 787.90 307.83 787.90Q304.71 787.90 304.71 792.00Q304.71 796.10 307.83 796.10Q309.30 796.10 310.37 794.95" fill="none" stroke="#c0c6e2" stroke-width="1.1" stroke-linecap="round" stroke-linejoin="round"/>
<circle cx="300.2" cy="832.4" r="16.2" fill="#5b6cb1"/>
<circle cx="300.2" cy="832.4" r="8.4" fill="#001023" stroke="#dcae26" stroke-width="1.35"/>
<path d="M302.95 819.50H297.65L297.24 824.09Q298.57 823.27 300.10 823.27Q303.36 823.27 303.36 826.44Q303.36 829.70 300.10 829.70Q298.06 829.70 297.04 828.48" fill="none" stroke="#d8dbea" stroke-width="1.3" stroke-linecap="round" stroke-linejoin="round"/>
<text x="300.2" y="838.4" font-size="4.4" text-anchor="middle" fill="#a6add4" font-family='"Liberation Sans", sans-serif'>Net-(U3-Pad1)</text>
<circle cx="300.2" cy="883" r="16.2" fill="#5b6cb1"/>
<circle cx="300.2" cy="883" r="8.4" fill="#001023" stroke="#dcae26" stroke-width="1.35"/>
<path d="M302.65 870.61Q301.63 870.10 300.61 870.10Q297.04 870.10 297.04 876.22Q297.04 880.30 300.30 880.30Q303.36 880.30 303.36 877.04Q303.36 873.98 300.30 873.98Q298.06 873.98 297.04 875.71" fill="none" stroke="#d8dbea" stroke-width="1.3" stroke-linecap="round" stroke-linejoin="round"/>
<text x="300.2" y="889" font-size="4.4" text-anchor="middle" fill="#a6add4" font-family='"Liberation Sans", sans-serif'>Net-(U3-Pad1)</text>
<circle cx="300.2" cy="933.6" r="16.2" fill="#5b6cb1"/>
<circle cx="300.2" cy="933.6" r="8.4" fill="#001023" stroke="#dcae26" stroke-width="1.35"/>
<path d="M297.04 920.70H303.36L299.08 930.90" fill="none" stroke="#d8dbea" stroke-width="1.3" stroke-linecap="round" stroke-linejoin="round"/>
<text x="300.2" y="939.6" font-size="4.4" text-anchor="middle" fill="#a6add4" font-family='"Liberation Sans", sans-serif'>Net-(U3-Pad1)</text>
<circle cx="452.3" cy="933.6" r="16.2" fill="#5b6cb1"/>
<circle cx="452.3" cy="933.6" r="8.4" fill="#001023" stroke="#dcae26" stroke-width="1.35"/>
<path d="M452.30 925.29Q449.55 925.29 449.55 922.94Q449.55 920.70 452.30 920.70Q455.05 920.70 455.05 922.94Q455.05 925.29 452.30 925.29Q449.14 925.49 449.14 928.04Q449.14 930.90 452.30 930.90Q455.46 930.90 455.46 928.04Q455.46 925.49 452.30 925.29Z" fill="none" stroke="#d8dbea" stroke-width="1.3" stroke-linecap="round" stroke-linejoin="round"/>
<text x="452.3" y="939.6" font-size="4.4" text-anchor="middle" fill="#a6add4" font-family='"Liberation Sans", sans-serif'>Net-(U3-Pad1)</text>
<circle cx="452.3" cy="883" r="16.2" fill="#5b6cb1"/>
<circle cx="452.3" cy="883" r="8.4" fill="#001023" stroke="#dcae26" stroke-width="1.35"/>
<path d="M455.46 874.69Q454.44 876.42 452.20 876.42Q449.14 876.42 449.14 873.26Q449.14 870.10 452.30 870.10Q455.46 870.10 455.46 874.18Q455.46 880.30 451.99 880.30Q450.67 880.30 449.85 879.79" fill="none" stroke="#d8dbea" stroke-width="1.3" stroke-linecap="round" stroke-linejoin="round"/>
<text x="452.3" y="889" font-size="4.4" text-anchor="middle" fill="#a6add4" font-family='"Liberation Sans", sans-serif'>Net-(U3-Pad1)</text>
<circle cx="452.3" cy="832.4" r="16.2" fill="#5b6cb1"/>
<circle cx="452.3" cy="832.4" r="8.4" fill="#001023" stroke="#dcae26" stroke-width="1.35"/>
<path d="M444.96 822.87L448.42 819.50V829.70M444.96 829.70H451.08M456.48 819.50Q459.64 819.50 459.64 824.60Q459.64 829.70 456.48 829.70Q453.32 829.70 453.32 824.60Q453.32 819.50 456.48 819.50Z" fill="none" stroke="#d8dbea" stroke-width="1.3" stroke-linecap="round" stroke-linejoin="round"/>
<text x="452.3" y="838.4" font-size="4.4" text-anchor="middle" fill="#a6add4" font-family='"Liberation Sans", sans-serif'>Net-(U3-Pad1)</text>
<circle cx="452.3" cy="781.8" r="16.2" fill="#5b6cb1"/>
<circle cx="452.3" cy="781.8" r="8.4" fill="#001023" stroke="#dcae26" stroke-width="1.35"/>
<path d="M445.06 772.27L448.53 768.90V779.10M445.06 779.10H451.18M453.42 772.27L456.89 768.90V779.10M453.42 779.10H459.54" fill="none" stroke="#d8dbea" stroke-width="1.3" stroke-linecap="round" stroke-linejoin="round"/>
<path d="M448.45 789.05Q447.54 787.90 445.99 787.90Q443.03 787.90 443.03 792.00Q443.03 796.10 445.99 796.10Q448.45 796.10 448.45 793.64V792.41H446.31M450.25 796.10V787.90L455.17 796.10V787.90M456.97 796.10V787.90H458.61Q461.57 787.90 461.57 792.00Q461.57 796.10 458.61 796.10Z" fill="none" stroke="#c0c6e2" stroke-width="1.1" stroke-linecap="round" stroke-linejoin="round"/>
<circle cx="452.3" cy="731.2" r="16.2" fill="#5b6cb1"/>
<circle cx="452.3" cy="731.2" r="8.4" fill="#001023" stroke="#dcae26" stroke-width="1.35"/>
<path d="M444.75 721.67L448.22 718.30V728.50M444.75 728.50H450.87M453.42 720.03Q454.44 718.30 456.48 718.30Q459.54 718.30 459.54 721.36Q459.54 722.89 457.71 724.42L453.12 728.50H459.85" fill="none" stroke="#d8dbea" stroke-width="1.3" stroke-linecap="round" stroke-linejoin="round"/>
<text x="452.3" y="737.2" font-size="4.4" text-anchor="middle" fill="#a6add4" font-family='"Liberation Sans", sans-serif'>Net-(U3-Pad1)</text>
<circle cx="452.3" cy="680.6" r="16.2" fill="#5b6cb1"/>
<circle cx="452.3" cy="680.6" r="8.4" fill="#001023" stroke="#dcae26" stroke-width="1.35"/>
<path d="M444.85 671.07L448.32 667.70V677.90M444.85 677.90H450.97M453.73 667.70H459.54L456.28 671.78Q459.75 671.78 459.75 674.84Q459.75 677.90 456.48 677.90Q454.44 677.90 453.22 676.88" fill="none" stroke="#d8dbea" stroke-width="1.3" stroke-linecap="round" stroke-linejoin="round"/>
<text x="452.3" y="686.6" font-size="4.4" text-anchor="middle" fill="#a6add4" font-family='"Liberation Sans", sans-serif'>Net-(U3-Pad1)</text>
<circle cx="452.3" cy="630" r="16.2" fill="#5b6cb1"/>
<circle cx="452.3" cy="630" r="8.4" fill="#001023" stroke="#dcae26" stroke-width="1.35"/>
<path d="M444.65 620.47L448.12 617.10V627.30M444.65 627.30H450.77M458.62 617.10L453.01 624.44H459.95M458.11 621.69V627.30" fill="none" stroke="#d8dbea" stroke-width="1.3" stroke-linecap="round" stroke-linejoin="round"/>
<text x="452.3" y="636" font-size="4.4" text-anchor="middle" fill="#a6add4" font-family='"Liberation Sans", sans-serif'>Net-(U3-Pad1)</text>
<rect x="705" y="824.3" width="32.4" height="32.4" rx="4" fill="#5b6cb1"/>
<circle cx="721.2" cy="840.5" r="8.4" fill="#001023" stroke="#dcae26" stroke-width="1.35"/>
<path d="M718.14 830.97L721.61 827.60V837.80M718.14 837.80H724.26" fill="none" stroke="#d8dbea" stroke-width="1.3" stroke-linecap="round" stroke-linejoin="round"/>
<text x="721.2" y="846.5" font-size="4.4" text-anchor="middle" fill="#a6add4" font-family='"Liberation Sans", sans-serif'>Net-(U3-Pad1)</text>
<circle cx="721.2" cy="789.8" r="16.2" fill="#5b6cb1"/>
<circle cx="721.2" cy="789.8" r="8.4" fill="#001023" stroke="#dcae26" stroke-width="1.35"/>
<path d="M718.14 778.63Q719.16 776.90 721.20 776.90Q724.26 776.90 724.26 779.96Q724.26 781.49 722.42 783.02L717.83 787.10H724.57" fill="none" stroke="#d8dbea" stroke-width="1.3" stroke-linecap="round" stroke-linejoin="round"/>
<text x="721.2" y="795.8" font-size="4.4" text-anchor="middle" fill="#a6add4" font-family='"Liberation Sans", sans-serif'>Net-(U3-Pad1)</text>
<circle cx="721.2" cy="739.1" r="16.2" fill="#5b6cb1"/>
<circle cx="721.2" cy="739.1" r="8.4" fill="#001023" stroke="#dcae26" stroke-width="1.35"/>
<path d="M718.45 726.20H724.26L721.00 730.28Q724.46 730.28 724.46 733.34Q724.46 736.40 721.20 736.40Q719.16 736.40 717.94 735.38" fill="none" stroke="#d8dbea" stroke-width="1.3" stroke-linecap="round" stroke-linejoin="round"/>
<text x="721.2" y="745.1" font-size="4.4" text-anchor="middle" fill="#a6add4" font-family='"Liberation Sans", sans-serif'>Net-(U3-Pad1)</text>
<circle cx="721.2" cy="688.4" r="16.2" fill="#5b6cb1"/>
<circle cx="721.2" cy="688.4" r="8.4" fill="#001023" stroke="#dcae26" stroke-width="1.35"/>
<path d="M723.34 675.50L717.73 682.84H724.67M722.83 680.09V685.70" fill="none" stroke="#d8dbea" stroke-width="1.3" stroke-linecap="round" stroke-linejoin="round"/>
<text x="721.2" y="694.4" font-size="4.4" text-anchor="middle" fill="#a6add4" font-family='"Liberation Sans", sans-serif'>Net-(U3-Pad1)</text>
<circle cx="721.2" cy="637.7" r="16.2" fill="#5b6cb1"/>
<circle cx="721.2" cy="637.7" r="8.4" fill="#001023" stroke="#dcae26" stroke-width="1.35"/>
<path d="M723.95 624.80H718.65L718.24 629.39Q719.57 628.57 721.10 628.57Q724.36 628.57 724.36 631.74Q724.36 635.00 721.10 635.00Q719.06 635.00 718.04 633.78" fill="none" stroke="#d8dbea" stroke-width="1.3" stroke-linecap="round" stroke-linejoin="round"/>
<text x="721.2" y="643.7" font-size="4.4" text-anchor="middle" fill="#a6add4" font-family='"Liberation Sans", sans-serif'>Net-(U3-Pad1)</text>
<circle cx="721.2" cy="587" r="16.2" fill="#5b6cb1"/>
<circle cx="721.2" cy="587" r="8.4" fill="#001023" stroke="#dcae26" stroke-width="1.35"/>
<path d="M723.65 574.61Q722.63 574.10 721.61 574.10Q718.04 574.10 718.04 580.22Q718.04 584.30 721.30 584.30Q724.36 584.30 724.36 581.04Q724.36 577.98 721.30 577.98Q719.06 577.98 718.04 579.71" fill="none" stroke="#d8dbea" stroke-width="1.3" stroke-linecap="round" stroke-linejoin="round"/>
<text x="721.2" y="593" font-size="4.4" text-anchor="middle" fill="#a6add4" font-family='"Liberation Sans", sans-serif'>Net-(U3-Pad1)</text>
<circle cx="721.2" cy="536.3" r="16.2" fill="#5b6cb1"/>
<circle cx="721.2" cy="536.3" r="8.4" fill="#001023" stroke="#dcae26" stroke-width="1.35"/>
<path d="M718.04 523.40H724.36L720.08 533.60" fill="none" stroke="#d8dbea" stroke-width="1.3" stroke-linecap="round" stroke-linejoin="round"/>
<text x="721.2" y="542.3" font-size="4.4" text-anchor="middle" fill="#a6add4" font-family='"Liberation Sans", sans-serif'>Net-(U3-Pad1)</text>
<circle cx="721.2" cy="485.6" r="16.2" fill="#5b6cb1"/>
<circle cx="721.2" cy="485.6" r="8.4" fill="#001023" stroke="#dcae26" stroke-width="1.35"/>
<path d="M721.20 477.29Q718.45 477.29 718.45 474.94Q718.45 472.70 721.20 472.70Q723.95 472.70 723.95 474.94Q723.95 477.29 721.20 477.29Q718.04 477.49 718.04 480.04Q718.04 482.90 721.20 482.90Q724.36 482.90 724.36 480.04Q724.36 477.49 721.20 477.29Z" fill="none" stroke="#d8dbea" stroke-width="1.3" stroke-linecap="round" stroke-linejoin="round"/>
<path d="M717.35 492.85Q716.44 491.70 714.89 491.70Q711.93 491.70 711.93 495.80Q711.93 499.90 714.89 499.90Q717.35 499.90 717.35 497.44V496.21H715.21M719.15 499.90V491.70L724.07 499.90V491.70M725.87 499.90V491.70H727.51Q730.47 491.70 730.47 495.80Q730.47 499.90 727.51 499.90Z" fill="none" stroke="#c0c6e2" stroke-width="1.1" stroke-linecap="round" stroke-linejoin="round"/>
<circle cx="569.2" cy="485.6" r="16.2" fill="#5b6cb1"/>
<circle cx="569.2" cy="485.6" r="8.4" fill="#001023" stroke="#dcae26" stroke-width="1.35"/>
<path d="M572.36 477.29Q571.34 479.02 569.10 479.02Q566.04 479.02 566.04 475.86Q566.04 472.70 569.20 472.70Q572.36 472.70 572.36 476.78Q572.36 482.90 568.89 482.90Q567.57 482.90 566.75 482.39" fill="none" stroke="#d8dbea" stroke-width="1.3" stroke-linecap="round" stroke-linejoin="round"/>
<text x="569.2" y="491.6" font-size="4.4" text-anchor="middle" fill="#a6add4" font-family='"Liberation Sans", sans-serif'>Net-(U3-Pad1)</text>
<circle cx="569.2" cy="536.3" r="16.2" fill="#5b6cb1"/>
<circle cx="569.2" cy="536.3" r="8.4" fill="#001023" stroke="#dcae26" stroke-width="1.35"/>
<path d="M561.86 526.77L565.32 523.40V533.60M561.86 533.60H567.98M573.38 523.40Q576.54 523.40 576.54 528.50Q576.54 533.60 573.38 533.60Q570.22 533.60 570.22 528.50Q570.22 523.40 573.38 523.40Z" fill="none" stroke="#d8dbea" stroke-width="1.3" stroke-linecap="round" stroke-linejoin="round"/>
<text x="569.2" y="542.3" font-size="4.4" text-anchor="middle" fill="#a6add4" font-family='"Liberation Sans", sans-serif'>Net-(U3-Pad1)</text>
<circle cx="569.2" cy="587" r="16.2" fill="#5b6cb1"/>
<circle cx="569.2" cy="587" r="8.4" fill="#001023" stroke="#dcae26" stroke-width="1.35"/>
<path d="M561.96 577.47L565.43 574.10V584.30M561.96 584.30H568.08M570.32 577.47L573.79 574.10V584.30M570.32 584.30H576.44" fill="none" stroke="#d8dbea" stroke-width="1.3" stroke-linecap="round" stroke-linejoin="round"/>
<text x="569.2" y="593" font-size="4.4" text-anchor="middle" fill="#a6add4" font-family='"Liberation Sans", sans-serif'>Net-(U3-Pad1)</text>
<circle cx="569.2" cy="637.7" r="16.2" fill="#5b6cb1"/>
<circle cx="569.2" cy="637.7" r="8.4" fill="#001023" stroke="#dcae26" stroke-width="1.35"/>
<path d="M561.65 628.17L565.12 624.80V635.00M561.65 635.00H567.77M570.32 626.53Q571.34 624.80 573.38 624.80Q576.44 624.80 576.44 627.86Q576.44 629.39 574.61 630.92L570.02 635.00H576.75" fill="none" stroke="#d8dbea" stroke-width="1.3" stroke-linecap="round" stroke-linejoin="round"/>
<text x="569.2" y="643.7" font-size="4.4" text-anchor="middle" fill="#a6add4" font-family='"Liberation Sans", sans-serif'>Net-(U3-Pad1)</text>
<circle cx="569.2" cy="688.4" r="16.2" fill="#5b6cb1"/>
<circle cx="569.2" cy="688.4" r="8.4" fill="#001023" stroke="#dcae26" stroke-width="1.35"/>
<path d="M561.75 678.87L565.22 675.50V685.70M561.75 685.70H567.87M570.63 675.50H576.44L573.18 679.58Q576.65 679.58 576.65 682.64Q576.65 685.70 573.38 685.70Q571.34 685.70 570.12 684.68" fill="none" stroke="#d8dbea" stroke-width="1.3" stroke-linecap="round" stroke-linejoin="round"/>
<text x="569.2" y="694.4" font-size="4.4" text-anchor="middle" fill="#a6add4" font-family='"Liberation Sans", sans-serif'>Net-(U3-Pad1)</text>
<circle cx="569.2" cy="739.1" r="16.2" fill="#5b6cb1"/>
<circle cx="569.2" cy="739.1" r="8.4" fill="#001023" stroke="#dcae26" stroke-width="1.35"/>
<path d="M561.55 729.57L565.02 726.20V736.40M561.55 736.40H567.67M575.52 726.20L569.91 733.54H576.85M575.01 730.79V736.40" fill="none" stroke="#d8dbea" stroke-width="1.3" stroke-linecap="round" stroke-linejoin="round"/>
<text x="569.2" y="745.1" font-size="4.4" text-anchor="middle" fill="#a6add4" font-family='"Liberation Sans", sans-serif'>Net-(U3-Pad1)</text>
<circle cx="569.2" cy="789.8" r="16.2" fill="#5b6cb1"/>
<circle cx="569.2" cy="789.8" r="8.4" fill="#001023" stroke="#dcae26" stroke-width="1.35"/>
<path d="M561.86 780.27L565.32 776.90V787.10M561.86 787.10H567.98M576.14 776.90H570.83L570.42 781.49Q571.75 780.67 573.28 780.67Q576.54 780.67 576.54 783.84Q576.54 787.10 573.28 787.10Q571.24 787.10 570.22 785.88" fill="none" stroke="#d8dbea" stroke-width="1.3" stroke-linecap="round" stroke-linejoin="round"/>
<text x="569.2" y="795.8" font-size="4.4" text-anchor="middle" fill="#a6add4" font-family='"Liberation Sans", sans-serif'>Net-(U3-Pad1)</text>
<circle cx="569.2" cy="840.5" r="16.2" fill="#5b6cb1"/>
<circle cx="569.2" cy="840.5" r="8.4" fill="#001023" stroke="#dcae26" stroke-width="1.35"/>
<path d="M561.86 830.97L565.32 827.60V837.80M561.86 837.80H567.98M575.83 828.11Q574.81 827.60 573.79 827.60Q570.22 827.60 570.22 833.72Q570.22 837.80 573.48 837.80Q576.54 837.80 576.54 834.54Q576.54 831.48 573.48 831.48Q571.24 831.48 570.22 833.21" fill="none" stroke="#d8dbea" stroke-width="1.3" stroke-linecap="round" stroke-linejoin="round"/>
<path d="M559.03 846.60L561.74 854.80L564.44 846.60M571.91 847.75Q570.84 846.60 569.36 846.60Q566.25 846.60 566.25 850.70Q566.25 854.80 569.36 854.80Q570.84 854.80 571.91 853.65M579.37 847.75Q578.30 846.60 576.83 846.60Q573.71 846.60 573.71 850.70Q573.71 854.80 576.83 854.80Q578.30 854.80 579.37 853.65" fill="none" stroke="#c0c6e2" stroke-width="1.1" stroke-linecap="round" stroke-linejoin="round"/>
<rect x="832.3" y="459.8" width="32.4" height="32.4" rx="4" fill="#5b6cb1"/>
<circle cx="848.5" cy="476" r="8.4" fill="#001023" stroke="#dcae26" stroke-width="1.35"/>
<path d="M845.44 466.47L848.91 463.10V473.30M845.44 473.30H851.56" fill="none" stroke="#d8dbea" stroke-width="1.3" stroke-linecap="round" stroke-linejoin="round"/>
<text x="848.5" y="482" font-size="4.4" text-anchor="middle" fill="#a6add4" font-family='"Liberation Sans", sans-serif'>Net-(U3-Pad1)</text>
<circle cx="848.5" cy="526.5" r="16.2" fill="#5b6cb1"/>
<circle cx="848.5" cy="526.5" r="8.4" fill="#001023" stroke="#dcae26" stroke-width="1.35"/>
<path d="M845.44 515.33Q846.46 513.60 848.50 513.60Q851.56 513.60 851.56 516.66Q851.56 518.19 849.72 519.72L845.13 523.80H851.87" fill="none" stroke="#d8dbea" stroke-width="1.3" stroke-linecap="round" stroke-linejoin="round"/>
<text x="848.5" y="532.5" font-size="4.4" text-anchor="middle" fill="#a6add4" font-family='"Liberation Sans", sans-serif'>Net-(U3-Pad1)</text>
<circle cx="848.5" cy="577" r="16.2" fill="#5b6cb1"/>
<circle cx="848.5" cy="577" r="8.4" fill="#001023" stroke="#dcae26" stroke-width="1.35"/>
<path d="M845.75 564.10H851.56L848.30 568.18Q851.76 568.18 851.76 571.24Q851.76 574.30 848.50 574.30Q846.46 574.30 845.24 573.28" fill="none" stroke="#d8dbea" stroke-width="1.3" stroke-linecap="round" stroke-linejoin="round"/>
<text x="848.5" y="583" font-size="4.4" text-anchor="middle" fill="#a6add4" font-family='"Liberation Sans", sans-serif'>Net-(U3-Pad1)</text>
<circle cx="848.5" cy="627.5" r="16.2" fill="#5b6cb1"/>
<circle cx="848.5" cy="627.5" r="8.4" fill="#001023" stroke="#dcae26" stroke-width="1.35"/>
<path d="M850.64 614.60L845.03 621.94H851.97M850.13 619.19V624.80" fill="none" stroke="#d8dbea" stroke-width="1.3" stroke-linecap="round" stroke-linejoin="round"/>
<text x="848.5" y="633.5" font-size="4.4" text-anchor="middle" fill="#a6add4" font-family='"Liberation Sans", sans-serif'>Net-(U3-Pad1)</text>
<circle cx="848.5" cy="678" r="16.2" fill="#5b6cb1"/>
<circle cx="848.5" cy="678" r="8.4" fill="#001023" stroke="#dcae26" stroke-width="1.35"/>
<path d="M851.25 665.10H845.95L845.54 669.69Q846.87 668.87 848.40 668.87Q851.66 668.87 851.66 672.04Q851.66 675.30 848.40 675.30Q846.36 675.30 845.34 674.08" fill="none" stroke="#d8dbea" stroke-width="1.3" stroke-linecap="round" stroke-linejoin="round"/>
<text x="848.5" y="684" font-size="4.4" text-anchor="middle" fill="#a6add4" font-family='"Liberation Sans", sans-serif'>Net-(U3-Pad1)</text>
<circle cx="848.5" cy="728.5" r="16.2" fill="#5b6cb1"/>
<circle cx="848.5" cy="728.5" r="8.4" fill="#001023" stroke="#dcae26" stroke-width="1.35"/>
<path d="M850.95 716.11Q849.93 715.60 848.91 715.60Q845.34 715.60 845.34 721.72Q845.34 725.80 848.60 725.80Q851.66 725.80 851.66 722.54Q851.66 719.48 848.60 719.48Q846.36 719.48 845.34 721.21" fill="none" stroke="#d8dbea" stroke-width="1.3" stroke-linecap="round" stroke-linejoin="round"/>
<text x="848.5" y="734.5" font-size="4.4" text-anchor="middle" fill="#a6add4" font-family='"Liberation Sans", sans-serif'>Net-(U3-Pad1)</text>
<circle cx="848.5" cy="779" r="16.2" fill="#5b6cb1"/>
<circle cx="848.5" cy="779" r="8.4" fill="#001023" stroke="#dcae26" stroke-width="1.35"/>
<path d="M845.34 766.10H851.66L847.38 776.30" fill="none" stroke="#d8dbea" stroke-width="1.3" stroke-linecap="round" stroke-linejoin="round"/>
<text x="848.5" y="785" font-size="4.4" text-anchor="middle" fill="#a6add4" font-family='"Liberation Sans", sans-serif'>Net-(U3-Pad1)</text>
<circle cx="848.5" cy="829.5" r="16.2" fill="#5b6cb1"/>
<circle cx="848.5" cy="829.5" r="8.4" fill="#001023" stroke="#dcae26" stroke-width="1.35"/>
<path d="M848.50 821.19Q845.75 821.19 845.75 818.84Q845.75 816.60 848.50 816.60Q851.25 816.60 851.25 818.84Q851.25 821.19 848.50 821.19Q845.34 821.39 845.34 823.94Q845.34 826.80 848.50 826.80Q851.66 826.80 851.66 823.94Q851.66 821.39 848.50 821.19Z" fill="none" stroke="#d8dbea" stroke-width="1.3" stroke-linecap="round" stroke-linejoin="round"/>
<path d="M844.65 836.75Q843.74 835.60 842.19 835.60Q839.23 835.60 839.23 839.70Q839.23 843.80 842.19 843.80Q844.65 843.80 844.65 841.34V840.11H842.51M846.45 843.80V835.60L851.37 843.80V835.60M853.17 843.80V835.60H854.81Q857.77 835.60 857.77 839.70Q857.77 843.80 854.81 843.80Z" fill="none" stroke="#c0c6e2" stroke-width="1.1" stroke-linecap="round" stroke-linejoin="round"/>
<circle cx="1000" cy="829.5" r="16.2" fill="#5b6cb1"/>
<circle cx="1000" cy="829.5" r="8.4" fill="#001023" stroke="#dcae26" stroke-width="1.35"/>
<path d="M1003.16 821.19Q1002.14 822.92 999.90 822.92Q996.84 822.92 996.84 819.76Q996.84 816.60 1000.00 816.60Q1003.16 816.60 1003.16 820.68Q1003.16 826.80 999.69 826.80Q998.37 826.80 997.55 826.29" fill="none" stroke="#d8dbea" stroke-width="1.3" stroke-linecap="round" stroke-linejoin="round"/>
<text x="1000" y="835.5" font-size="4.4" text-anchor="middle" fill="#a6add4" font-family='"Liberation Sans", sans-serif'>Net-(U3-Pad1)</text>
<circle cx="1000" cy="779" r="16.2" fill="#5b6cb1"/>
<circle cx="1000" cy="779" r="8.4" fill="#001023" stroke="#dcae26" stroke-width="1.35"/>
<path d="M992.66 769.47L996.12 766.10V776.30M992.66 776.30H998.78M1004.18 766.10Q1007.34 766.10 1007.34 771.20Q1007.34 776.30 1004.18 776.30Q1001.02 776.30 1001.02 771.20Q1001.02 766.10 1004.18 766.10Z" fill="none" stroke="#d8dbea" stroke-width="1.3" stroke-linecap="round" stroke-linejoin="round"/>
<text x="1000" y="785" font-size="4.4" text-anchor="middle" fill="#a6add4" font-family='"Liberation Sans", sans-serif'>Net-(U3-Pad1)</text>
<circle cx="1000" cy="728.5" r="16.2" fill="#5b6cb1"/>
<circle cx="1000" cy="728.5" r="8.4" fill="#001023" stroke="#dcae26" stroke-width="1.35"/>
<path d="M992.76 718.97L996.23 715.60V725.80M992.76 725.80H998.88M1001.12 718.97L1004.59 715.60V725.80M1001.12 725.80H1007.24" fill="none" stroke="#d8dbea" stroke-width="1.3" stroke-linecap="round" stroke-linejoin="round"/>
<text x="1000" y="734.5" font-size="4.4" text-anchor="middle" fill="#a6add4" font-family='"Liberation Sans", sans-serif'>Net-(U3-Pad1)</text>
<circle cx="1000" cy="678" r="16.2" fill="#5b6cb1"/>
<circle cx="1000" cy="678" r="8.4" fill="#001023" stroke="#dcae26" stroke-width="1.35"/>
<path d="M992.45 668.47L995.92 665.10V675.30M992.45 675.30H998.57M1001.12 666.83Q1002.14 665.10 1004.18 665.10Q1007.24 665.10 1007.24 668.16Q1007.24 669.69 1005.41 671.22L1000.82 675.30H1007.55" fill="none" stroke="#d8dbea" stroke-width="1.3" stroke-linecap="round" stroke-linejoin="round"/>
<text x="1000" y="684" font-size="4.4" text-anchor="middle" fill="#a6add4" font-family='"Liberation Sans", sans-serif'>Net-(U3-Pad1)</text>
<circle cx="1000" cy="627.5" r="16.2" fill="#5b6cb1"/>
<circle cx="1000" cy="627.5" r="8.4" fill="#001023" stroke="#dcae26" stroke-width="1.35"/>
<path d="M992.55 617.97L996.02 614.60V624.80M992.55 624.80H998.67M1001.43 614.60H1007.24L1003.98 618.68Q1007.45 618.68 1007.45 621.74Q1007.45 624.80 1004.18 624.80Q1002.14 624.80 1000.92 623.78" fill="none" stroke="#d8dbea" stroke-width="1.3" stroke-linecap="round" stroke-linejoin="round"/>
<text x="1000" y="633.5" font-size="4.4" text-anchor="middle" fill="#a6add4" font-family='"Liberation Sans", sans-serif'>Net-(U3-Pad1)</text>
<circle cx="1000" cy="577" r="16.2" fill="#5b6cb1"/>
<circle cx="1000" cy="577" r="8.4" fill="#001023" stroke="#dcae26" stroke-width="1.35"/>
<path d="M992.35 567.47L995.82 564.10V574.30M992.35 574.30H998.47M1006.32 564.10L1000.71 571.44H1007.65M1005.81 568.69V574.30" fill="none" stroke="#d8dbea" stroke-width="1.3" stroke-linecap="round" stroke-linejoin="round"/>
<text x="1000" y="583" font-size="4.4" text-anchor="middle" fill="#a6add4" font-family='"Liberation Sans", sans-serif'>Net-(U3-Pad1)</text>
<circle cx="1000" cy="526.5" r="16.2" fill="#5b6cb1"/>
<circle cx="1000" cy="526.5" r="8.4" fill="#001023" stroke="#dcae26" stroke-width="1.35"/>
<path d="M992.66 516.97L996.12 513.60V523.80M992.66 523.80H998.78M1006.94 513.60H1001.63L1001.22 518.19Q1002.55 517.37 1004.08 517.37Q1007.34 517.37 1007.34 520.54Q1007.34 523.80 1004.08 523.80Q1002.04 523.80 1001.02 522.58" fill="none" stroke="#d8dbea" stroke-width="1.3" stroke-linecap="round" stroke-linejoin="round"/>
<text x="1000" y="532.5" font-size="4.4" text-anchor="middle" fill="#a6add4" font-family='"Liberation Sans", sans-serif'>Net-(U3-Pad1)</text>
<circle cx="1000" cy="476" r="16.2" fill="#5b6cb1"/>
<circle cx="1000" cy="476" r="8.4" fill="#001023" stroke="#dcae26" stroke-width="1.35"/>
<path d="M992.66 466.47L996.12 463.10V473.30M992.66 473.30H998.78M1006.63 463.61Q1005.61 463.10 1004.59 463.10Q1001.02 463.10 1001.02 469.22Q1001.02 473.30 1004.28 473.30Q1007.34 473.30 1007.34 470.04Q1007.34 466.98 1004.28 466.98Q1002.04 466.98 1001.02 468.71" fill="none" stroke="#d8dbea" stroke-width="1.3" stroke-linecap="round" stroke-linejoin="round"/>
<path d="M989.83 482.10L992.54 490.30L995.24 482.10M1002.71 483.25Q1001.64 482.10 1000.16 482.10Q997.05 482.10 997.05 486.20Q997.05 490.30 1000.16 490.30Q1001.64 490.30 1002.71 489.15M1010.17 483.25Q1009.10 482.10 1007.63 482.10Q1004.51 482.10 1004.51 486.20Q1004.51 490.30 1007.63 490.30Q1009.10 490.30 1010.17 489.15" fill="none" stroke="#c0c6e2" stroke-width="1.1" stroke-linecap="round" stroke-linejoin="round"/>
<rect x="180.5" y="916.9" width="33.6" height="33.6" rx="4" fill="#5b6cb1"/>
<circle cx="197.3" cy="933.7" r="8.4" fill="#001023" stroke="#dcae26" stroke-width="1.35"/>
<path d="M194.24 924.17L197.71 920.80V931.00M194.24 931.00H200.36" fill="none" stroke="#d8dbea" stroke-width="1.3" stroke-linecap="round" stroke-linejoin="round"/>
<text x="197.3" y="939.7" font-size="4.6" text-anchor="middle" fill="#a6add4" font-family='"Liberation Sans", sans-serif'>Net-(U3-Pad1)</text>
<circle cx="197.3" cy="883.1" r="16.8" fill="#5b6cb1"/>
<circle cx="197.3" cy="883.1" r="8.4" fill="#001023" stroke="#dcae26" stroke-width="1.35"/>
<path d="M194.24 871.89Q195.26 870.16 197.30 870.16Q200.36 870.16 200.36 873.22Q200.36 874.75 198.52 876.28L193.93 880.36H200.67" fill="none" stroke="#d8dbea" stroke-width="1.3" stroke-linecap="round" stroke-linejoin="round"/>
<text x="197.3" y="889.1" font-size="4.6" text-anchor="middle" fill="#a6add4" font-family='"Liberation Sans", sans-serif'>Net-(U3-Pad1)</text>
<circle cx="197.3" cy="832.4" r="16.8" fill="#5b6cb1"/>
<circle cx="197.3" cy="832.4" r="8.4" fill="#001023" stroke="#dcae26" stroke-width="1.35"/>
<path d="M194.55 819.52H200.36L197.10 823.60Q200.56 823.60 200.56 826.66Q200.56 829.72 197.30 829.72Q195.26 829.72 194.04 828.70" fill="none" stroke="#d8dbea" stroke-width="1.3" stroke-linecap="round" stroke-linejoin="round"/>
<text x="197.3" y="838.4" font-size="4.6" text-anchor="middle" fill="#a6add4" font-family='"Liberation Sans", sans-serif'>Net-(U3-Pad1)</text>
<circle cx="197.3" cy="781.8" r="16.8" fill="#5b6cb1"/>
<circle cx="197.3" cy="781.8" r="8.4" fill="#001023" stroke="#dcae26" stroke-width="1.35"/>
<path d="M199.44 768.88L193.83 776.22H200.77M198.93 773.47V779.08" fill="none" stroke="#d8dbea" stroke-width="1.3" stroke-linecap="round" stroke-linejoin="round"/>
<text x="197.3" y="787.8" font-size="4.6" text-anchor="middle" fill="#a6add4" font-family='"Liberation Sans", sans-serif'>Net-(U3-Pad1)</text>
<circle cx="197.3" cy="731.1" r="16.8" fill="#5b6cb1"/>
<circle cx="197.3" cy="731.1" r="8.4" fill="#001023" stroke="#dcae26" stroke-width="1.35"/>
<path d="M200.05 718.24H194.75L194.34 722.83Q195.67 722.01 197.20 722.01Q200.46 722.01 200.46 725.18Q200.46 728.44 197.20 728.44Q195.16 728.44 194.14 727.22" fill="none" stroke="#d8dbea" stroke-width="1.3" stroke-linecap="round" stroke-linejoin="round"/>
<text x="197.3" y="737.1" font-size="4.6" text-anchor="middle" fill="#a6add4" font-family='"Liberation Sans", sans-serif'>Net-(U3-Pad1)</text>
<circle cx="197.3" cy="680.5" r="16.8" fill="#5b6cb1"/>
<circle cx="197.3" cy="680.5" r="8.4" fill="#001023" stroke="#dcae26" stroke-width="1.35"/>
<path d="M199.75 668.11Q198.73 667.60 197.71 667.60Q194.14 667.60 194.14 673.72Q194.14 677.80 197.40 677.80Q200.46 677.80 200.46 674.54Q200.46 671.48 197.40 671.48Q195.16 671.48 194.14 673.21" fill="none" stroke="#d8dbea" stroke-width="1.3" stroke-linecap="round" stroke-linejoin="round"/>
<text x="197.3" y="686.5" font-size="4.6" text-anchor="middle" fill="#a6add4" font-family='"Liberation Sans", sans-serif'>Net-(U3-Pad1)</text>
<circle cx="197.3" cy="629.9" r="16.8" fill="#5b6cb1"/>
<circle cx="197.3" cy="629.9" r="8.4" fill="#001023" stroke="#dcae26" stroke-width="1.35"/>
<path d="M194.14 616.96H200.46L196.18 627.16" fill="none" stroke="#d8dbea" stroke-width="1.3" stroke-linecap="round" stroke-linejoin="round"/>
<text x="197.3" y="635.9" font-size="4.6" text-anchor="middle" fill="#a6add4" font-family='"Liberation Sans", sans-serif'>Net-(U3-Pad1)</text>
<circle cx="197.3" cy="579.2" r="16.8" fill="#5b6cb1"/>
<circle cx="197.3" cy="579.2" r="8.4" fill="#001023" stroke="#dcae26" stroke-width="1.35"/>
<path d="M197.30 570.91Q194.55 570.91 194.55 568.56Q194.55 566.32 197.30 566.32Q200.05 566.32 200.05 568.56Q200.05 570.91 197.30 570.91Q194.14 571.11 194.14 573.66Q194.14 576.52 197.30 576.52Q200.46 576.52 200.46 573.66Q200.46 571.11 197.30 570.91Z" fill="none" stroke="#d8dbea" stroke-width="1.3" stroke-linecap="round" stroke-linejoin="round"/>
<text x="197.3" y="585.2" font-size="4.6" text-anchor="middle" fill="#a6add4" font-family='"Liberation Sans", sans-serif'>Net-(U3-Pad1)</text>
<rect x="1116.8" y="838.5" width="33.6" height="33.6" rx="4" fill="#5b6cb1"/>
<circle cx="1133.6" cy="855.3" r="8.4" fill="#001023" stroke="#dcae26" stroke-width="1.35"/>
<path d="M1130.54 845.77L1134.01 842.40V852.60M1130.54 852.60H1136.66" fill="none" stroke="#d8dbea" stroke-width="1.3" stroke-linecap="round" stroke-linejoin="round"/>
<text x="1133.6" y="861.3" font-size="4.6" text-anchor="middle" fill="#a6add4" font-family='"Liberation Sans", sans-serif'>Net-(U3-Pad1)</text>
<circle cx="1133.6" cy="804.7" r="16.8" fill="#5b6cb1"/>
<circle cx="1133.6" cy="804.7" r="8.4" fill="#001023" stroke="#dcae26" stroke-width="1.35"/>
<path d="M1130.54 793.57Q1131.56 791.84 1133.60 791.84Q1136.66 791.84 1136.66 794.90Q1136.66 796.43 1134.82 797.96L1130.23 802.04H1136.97" fill="none" stroke="#d8dbea" stroke-width="1.3" stroke-linecap="round" stroke-linejoin="round"/>
<text x="1133.6" y="810.7" font-size="4.6" text-anchor="middle" fill="#a6add4" font-family='"Liberation Sans", sans-serif'>Net-(U3-Pad1)</text>
<circle cx="1133.6" cy="754.2" r="16.8" fill="#5b6cb1"/>
<circle cx="1133.6" cy="754.2" r="8.4" fill="#001023" stroke="#dcae26" stroke-width="1.35"/>
<path d="M1130.85 741.28H1136.66L1133.40 745.36Q1136.86 745.36 1136.86 748.42Q1136.86 751.48 1133.60 751.48Q1131.56 751.48 1130.34 750.46" fill="none" stroke="#d8dbea" stroke-width="1.3" stroke-linecap="round" stroke-linejoin="round"/>
<text x="1133.6" y="760.2" font-size="4.6" text-anchor="middle" fill="#a6add4" font-family='"Liberation Sans", sans-serif'>Net-(U3-Pad1)</text>
<circle cx="1133.6" cy="703.6" r="16.8" fill="#5b6cb1"/>
<circle cx="1133.6" cy="703.6" r="8.4" fill="#001023" stroke="#dcae26" stroke-width="1.35"/>
<path d="M1135.74 690.72L1130.13 698.06H1137.07M1135.23 695.31V700.92" fill="none" stroke="#d8dbea" stroke-width="1.3" stroke-linecap="round" stroke-linejoin="round"/>
<text x="1133.6" y="709.6" font-size="4.6" text-anchor="middle" fill="#a6add4" font-family='"Liberation Sans", sans-serif'>Net-(U3-Pad1)</text>
<circle cx="1133.6" cy="653.1" r="16.8" fill="#5b6cb1"/>
<circle cx="1133.6" cy="653.1" r="8.4" fill="#001023" stroke="#dcae26" stroke-width="1.35"/>
<path d="M1136.35 640.16H1131.05L1130.64 644.75Q1131.97 643.93 1133.50 643.93Q1136.76 643.93 1136.76 647.10Q1136.76 650.36 1133.50 650.36Q1131.46 650.36 1130.44 649.14" fill="none" stroke="#d8dbea" stroke-width="1.3" stroke-linecap="round" stroke-linejoin="round"/>
<text x="1133.6" y="659.1" font-size="4.6" text-anchor="middle" fill="#a6add4" font-family='"Liberation Sans", sans-serif'>Net-(U3-Pad1)</text>
<circle cx="1133.6" cy="602.5" r="16.8" fill="#5b6cb1"/>
<circle cx="1133.6" cy="602.5" r="8.4" fill="#001023" stroke="#dcae26" stroke-width="1.35"/>
<path d="M1136.05 590.11Q1135.03 589.60 1134.01 589.60Q1130.44 589.60 1130.44 595.72Q1130.44 599.80 1133.70 599.80Q1136.76 599.80 1136.76 596.54Q1136.76 593.48 1133.70 593.48Q1131.46 593.48 1130.44 595.21" fill="none" stroke="#d8dbea" stroke-width="1.3" stroke-linecap="round" stroke-linejoin="round"/>
<text x="1133.6" y="608.5" font-size="4.6" text-anchor="middle" fill="#a6add4" font-family='"Liberation Sans", sans-serif'>Net-(U3-Pad1)</text>
<circle cx="1133.6" cy="551.9" r="16.8" fill="#5b6cb1"/>
<circle cx="1133.6" cy="551.9" r="8.4" fill="#001023" stroke="#dcae26" stroke-width="1.35"/>
<path d="M1130.44 539.04H1136.76L1132.48 549.24" fill="none" stroke="#d8dbea" stroke-width="1.3" stroke-linecap="round" stroke-linejoin="round"/>
<text x="1133.6" y="557.9" font-size="4.6" text-anchor="middle" fill="#a6add4" font-family='"Liberation Sans", sans-serif'>Net-(U3-Pad1)</text>
<circle cx="1133.6" cy="501.4" r="16.8" fill="#5b6cb1"/>
<circle cx="1133.6" cy="501.4" r="8.4" fill="#001023" stroke="#dcae26" stroke-width="1.35"/>
<path d="M1133.60 493.07Q1130.85 493.07 1130.85 490.72Q1130.85 488.48 1133.60 488.48Q1136.35 488.48 1136.35 490.72Q1136.35 493.07 1133.60 493.07Q1130.44 493.27 1130.44 495.82Q1130.44 498.68 1133.60 498.68Q1136.76 498.68 1136.76 495.82Q1136.76 493.27 1133.60 493.07Z" fill="none" stroke="#d8dbea" stroke-width="1.3" stroke-linecap="round" stroke-linejoin="round"/>
<text x="1133.6" y="507.4" font-size="4.6" text-anchor="middle" fill="#a6add4" font-family='"Liberation Sans", sans-serif'>Net-(U3-Pad1)</text>
<rect x="160.8" y="992.3" width="33.6" height="33.6" rx="4" fill="#5b6cb1"/>
<circle cx="177.6" cy="1009.1" r="8.4" fill="#001023" stroke="#dcae26" stroke-width="1.35"/>
<path d="M174.54 999.57L178.01 996.20V1006.40M174.54 1006.40H180.66" fill="none" stroke="#d8dbea" stroke-width="1.3" stroke-linecap="round" stroke-linejoin="round"/>
<path d="M167.43 1015.20L170.14 1023.40L172.84 1015.20M180.31 1016.35Q179.24 1015.20 177.76 1015.20Q174.65 1015.20 174.65 1019.30Q174.65 1023.40 177.76 1023.40Q179.24 1023.40 180.31 1022.25M187.77 1016.35Q186.70 1015.20 185.23 1015.20Q182.11 1015.20 182.11 1019.30Q182.11 1023.40 185.23 1023.40Q186.70 1023.40 187.77 1022.25" fill="none" stroke="#c0c6e2" stroke-width="1.1" stroke-linecap="round" stroke-linejoin="round"/>
<circle cx="177.6" cy="1059.9" r="16.8" fill="#5b6cb1"/>
<circle cx="177.6" cy="1059.9" r="8.4" fill="#001023" stroke="#dcae26" stroke-width="1.35"/>
<path d="M174.54 1048.70Q175.56 1046.97 177.60 1046.97Q180.66 1046.97 180.66 1050.03Q180.66 1051.56 178.82 1053.09L174.23 1057.17H180.97" fill="none" stroke="#d8dbea" stroke-width="1.3" stroke-linecap="round" stroke-linejoin="round"/>
<path d="M173.75 1067.12Q172.84 1065.97 171.29 1065.97Q168.33 1065.97 168.33 1070.07Q168.33 1074.17 171.29 1074.17Q173.75 1074.17 173.75 1071.71V1070.48H171.61M175.55 1074.17V1065.97L180.47 1074.17V1065.97M182.27 1074.17V1065.97H183.91Q186.87 1065.97 186.87 1070.07Q186.87 1074.17 183.91 1074.17Z" fill="none" stroke="#c0c6e2" stroke-width="1.1" stroke-linecap="round" stroke-linejoin="round"/>
<circle cx="177.6" cy="1110.6" r="16.8" fill="#5b6cb1"/>
<circle cx="177.6" cy="1110.6" r="8.4" fill="#001023" stroke="#dcae26" stroke-width="1.35"/>
<path d="M174.85 1097.74H180.66L177.40 1101.82Q180.86 1101.82 180.86 1104.88Q180.86 1107.94 177.60 1107.94Q175.56 1107.94 174.34 1106.92" fill="none" stroke="#d8dbea" stroke-width="1.3" stroke-linecap="round" stroke-linejoin="round"/>
<text x="177.6" y="1116.6" font-size="4.6" text-anchor="middle" fill="#a6add4" font-family='"Liberation Sans", sans-serif'>Net-(U3-Pad1)</text>
<circle cx="177.6" cy="1161.4" r="16.8" fill="#5b6cb1"/>
<circle cx="177.6" cy="1161.4" r="8.4" fill="#001023" stroke="#dcae26" stroke-width="1.35"/>
<path d="M179.74 1148.51L174.13 1155.85H181.07M179.23 1153.10V1158.71" fill="none" stroke="#d8dbea" stroke-width="1.3" stroke-linecap="round" stroke-linejoin="round"/>
<text x="177.6" y="1167.4" font-size="4.6" text-anchor="middle" fill="#a6add4" font-family='"Liberation Sans", sans-serif'>Net-(U3-Pad1)</text>
<rect x="274.1" y="1134.5" width="33.6" height="33.6" rx="4" fill="#5b6cb1"/>
<circle cx="290.9" cy="1151.3" r="8.4" fill="#001023" stroke="#dcae26" stroke-width="1.35"/>
<path d="M287.84 1141.77L291.31 1138.40V1148.60M287.84 1148.60H293.96" fill="none" stroke="#d8dbea" stroke-width="1.3" stroke-linecap="round" stroke-linejoin="round"/>
<path d="M280.73 1157.40L283.44 1165.60L286.14 1157.40M293.61 1158.55Q292.54 1157.40 291.06 1157.40Q287.95 1157.40 287.95 1161.50Q287.95 1165.60 291.06 1165.60Q292.54 1165.60 293.61 1164.45M301.07 1158.55Q300.00 1157.40 298.53 1157.40Q295.41 1157.40 295.41 1161.50Q295.41 1165.60 298.53 1165.60Q300.00 1165.60 301.07 1164.45" fill="none" stroke="#c0c6e2" stroke-width="1.1" stroke-linecap="round" stroke-linejoin="round"/>
<circle cx="341.4" cy="1151.3" r="16.8" fill="#5b6cb1"/>
<circle cx="341.4" cy="1151.3" r="8.4" fill="#001023" stroke="#dcae26" stroke-width="1.35"/>
<path d="M338.37 1140.13Q339.39 1138.40 341.43 1138.40Q344.49 1138.40 344.49 1141.46Q344.49 1142.99 342.65 1144.52L338.06 1148.60H344.80" fill="none" stroke="#d8dbea" stroke-width="1.3" stroke-linecap="round" stroke-linejoin="round"/>
<path d="M337.58 1158.55Q336.67 1157.40 335.12 1157.40Q332.16 1157.40 332.16 1161.50Q332.16 1165.60 335.12 1165.60Q337.58 1165.60 337.58 1163.14V1161.91H335.44M339.38 1165.60V1157.40L344.30 1165.60V1157.40M346.10 1165.60V1157.40H347.74Q350.70 1157.40 350.70 1161.50Q350.70 1165.60 347.74 1165.60Z" fill="none" stroke="#c0c6e2" stroke-width="1.1" stroke-linecap="round" stroke-linejoin="round"/>
<circle cx="392" cy="1151.3" r="16.8" fill="#5b6cb1"/>
<circle cx="392" cy="1151.3" r="8.4" fill="#001023" stroke="#dcae26" stroke-width="1.35"/>
<path d="M389.21 1138.40H395.02L391.76 1142.48Q395.22 1142.48 395.22 1145.54Q395.22 1148.60 391.96 1148.60Q389.92 1148.60 388.70 1147.58" fill="none" stroke="#d8dbea" stroke-width="1.3" stroke-linecap="round" stroke-linejoin="round"/>
<text x="392" y="1157.3" font-size="4.6" text-anchor="middle" fill="#a6add4" font-family='"Liberation Sans", sans-serif'>Net-(U3-Pad1)</text>
<circle cx="442.5" cy="1151.3" r="16.8" fill="#5b6cb1"/>
<circle cx="442.5" cy="1151.3" r="8.4" fill="#001023" stroke="#dcae26" stroke-width="1.35"/>
<path d="M444.63 1138.40L439.02 1145.74H445.96M444.12 1142.99V1148.60" fill="none" stroke="#d8dbea" stroke-width="1.3" stroke-linecap="round" stroke-linejoin="round"/>
<text x="442.5" y="1157.3" font-size="4.6" text-anchor="middle" fill="#a6add4" font-family='"Liberation Sans", sans-serif'>Net-(U3-Pad1)</text>
<circle cx="649.2" cy="274.4" r="14.1" fill="#5b6cb1"/>
<circle cx="649.2" cy="274.4" r="7.8" fill="#001023" stroke="#dcae26" stroke-width="1.35"/>
<path d="M646.47 264.15Q647.38 262.60 649.20 262.60Q651.93 262.60 651.93 265.33Q651.93 266.69 650.29 268.06L646.20 271.70H652.20" fill="none" stroke="#d8dbea" stroke-width="1.3" stroke-linecap="round" stroke-linejoin="round"/>
<path d="M646.38 280.24Q645.72 279.40 644.58 279.40Q642.42 279.40 642.42 282.40Q642.42 285.40 644.58 285.40Q646.38 285.40 646.38 283.60V282.70H644.82M647.70 285.40V279.40L651.30 285.40V279.40M652.62 285.40V279.40H653.82Q655.98 279.40 655.98 282.40Q655.98 285.40 653.82 285.40Z" fill="none" stroke="#c0c6e2" stroke-width="1.1" stroke-linecap="round" stroke-linejoin="round"/>
<circle cx="801.5" cy="274.4" r="14.1" fill="#5b6cb1"/>
<circle cx="801.5" cy="274.4" r="7.8" fill="#001023" stroke="#dcae26" stroke-width="1.35"/>
<path d="M798.77 265.60L801.86 262.60V271.70M798.77 271.70H804.23" fill="none" stroke="#d8dbea" stroke-width="1.3" stroke-linecap="round" stroke-linejoin="round"/>
<text x="801.5" y="280.4" font-size="3.8" text-anchor="middle" fill="#a6add4" font-family='"Liberation Sans", sans-serif'>Net-(U3-Pad1)</text>
<circle cx="848.4" cy="274.4" r="14.1" fill="#5b6cb1"/>
<circle cx="848.4" cy="274.4" r="7.8" fill="#001023" stroke="#dcae26" stroke-width="1.35"/>
<path d="M845.67 264.15Q846.58 262.60 848.40 262.60Q851.13 262.60 851.13 265.33Q851.13 266.69 849.49 268.06L845.40 271.70H851.40" fill="none" stroke="#d8dbea" stroke-width="1.3" stroke-linecap="round" stroke-linejoin="round"/>
<text x="848.4" y="280.4" font-size="3.8" text-anchor="middle" fill="#a6add4" font-family='"Liberation Sans", sans-serif'>Net-(U3-Pad1)</text>
<circle cx="1000.4" cy="274.4" r="14.1" fill="#5b6cb1"/>
<circle cx="1000.4" cy="274.4" r="7.8" fill="#001023" stroke="#dcae26" stroke-width="1.35"/>
<path d="M997.67 265.60L1000.76 262.60V271.70M997.67 271.70H1003.13" fill="none" stroke="#d8dbea" stroke-width="1.3" stroke-linecap="round" stroke-linejoin="round"/>
<path d="M992.96 279.40L994.94 285.40L996.92 279.40M1002.38 280.24Q1001.60 279.40 1000.52 279.40Q998.24 279.40 998.24 282.40Q998.24 285.40 1000.52 285.40Q1001.60 285.40 1002.38 284.56M1007.84 280.24Q1007.06 279.40 1005.98 279.40Q1003.70 279.40 1003.70 282.40Q1003.70 285.40 1005.98 285.40Q1007.06 285.40 1007.84 284.56" fill="none" stroke="#c0c6e2" stroke-width="1.1" stroke-linecap="round" stroke-linejoin="round"/>
<circle cx="649.2" cy="324.3" r="14.1" fill="#5b6cb1"/>
<circle cx="649.2" cy="324.3" r="7.8" fill="#001023" stroke="#dcae26" stroke-width="1.35"/>
<path d="M646.47 314.05Q647.38 312.50 649.20 312.50Q651.93 312.50 651.93 315.23Q651.93 316.60 650.29 317.96L646.20 321.60H652.20" fill="none" stroke="#d8dbea" stroke-width="1.3" stroke-linecap="round" stroke-linejoin="round"/>
<path d="M646.38 330.14Q645.72 329.30 644.58 329.30Q642.42 329.30 642.42 332.30Q642.42 335.30 644.58 335.30Q646.38 335.30 646.38 333.50V332.60H644.82M647.70 335.30V329.30L651.30 335.30V329.30M652.62 335.30V329.30H653.82Q655.98 329.30 655.98 332.30Q655.98 335.30 653.82 335.30Z" fill="none" stroke="#c0c6e2" stroke-width="1.1" stroke-linecap="round" stroke-linejoin="round"/>
<circle cx="801.5" cy="324.3" r="14.1" fill="#5b6cb1"/>
<circle cx="801.5" cy="324.3" r="7.8" fill="#001023" stroke="#dcae26" stroke-width="1.35"/>
<path d="M798.77 315.50L801.86 312.50V321.60M798.77 321.60H804.23" fill="none" stroke="#d8dbea" stroke-width="1.3" stroke-linecap="round" stroke-linejoin="round"/>
<text x="801.5" y="330.3" font-size="3.8" text-anchor="middle" fill="#a6add4" font-family='"Liberation Sans", sans-serif'>Net-(U3-Pad1)</text>
<circle cx="848.4" cy="324.3" r="14.1" fill="#5b6cb1"/>
<circle cx="848.4" cy="324.3" r="7.8" fill="#001023" stroke="#dcae26" stroke-width="1.35"/>
<path d="M845.67 314.05Q846.58 312.50 848.40 312.50Q851.13 312.50 851.13 315.23Q851.13 316.60 849.49 317.96L845.40 321.60H851.40" fill="none" stroke="#d8dbea" stroke-width="1.3" stroke-linecap="round" stroke-linejoin="round"/>
<text x="848.4" y="330.3" font-size="3.8" text-anchor="middle" fill="#a6add4" font-family='"Liberation Sans", sans-serif'>Net-(U3-Pad1)</text>
<circle cx="1000.4" cy="324.3" r="14.1" fill="#5b6cb1"/>
<circle cx="1000.4" cy="324.3" r="7.8" fill="#001023" stroke="#dcae26" stroke-width="1.35"/>
<path d="M997.67 315.50L1000.76 312.50V321.60M997.67 321.60H1003.13" fill="none" stroke="#d8dbea" stroke-width="1.3" stroke-linecap="round" stroke-linejoin="round"/>
<path d="M992.96 329.30L994.94 335.30L996.92 329.30M1002.38 330.14Q1001.60 329.30 1000.52 329.30Q998.24 329.30 998.24 332.30Q998.24 335.30 1000.52 335.30Q1001.60 335.30 1002.38 334.46M1007.84 330.14Q1007.06 329.30 1005.98 329.30Q1003.70 329.30 1003.70 332.30Q1003.70 335.30 1005.98 335.30Q1007.06 335.30 1007.84 334.46" fill="none" stroke="#c0c6e2" stroke-width="1.1" stroke-linecap="round" stroke-linejoin="round"/>
<circle cx="649.2" cy="374.1" r="14.1" fill="#5b6cb1"/>
<circle cx="649.2" cy="374.1" r="7.8" fill="#001023" stroke="#dcae26" stroke-width="1.35"/>
<path d="M646.47 363.85Q647.38 362.30 649.20 362.30Q651.93 362.30 651.93 365.03Q651.93 366.40 650.29 367.76L646.20 371.40H652.20" fill="none" stroke="#d8dbea" stroke-width="1.3" stroke-linecap="round" stroke-linejoin="round"/>
<path d="M646.38 379.94Q645.72 379.10 644.58 379.10Q642.42 379.10 642.42 382.10Q642.42 385.10 644.58 385.10Q646.38 385.10 646.38 383.30V382.40H644.82M647.70 385.10V379.10L651.30 385.10V379.10M652.62 385.10V379.10H653.82Q655.98 379.10 655.98 382.10Q655.98 385.10 653.82 385.10Z" fill="none" stroke="#c0c6e2" stroke-width="1.1" stroke-linecap="round" stroke-linejoin="round"/>
<circle cx="801.5" cy="374.1" r="14.1" fill="#5b6cb1"/>
<circle cx="801.5" cy="374.1" r="7.8" fill="#001023" stroke="#dcae26" stroke-width="1.35"/>
<path d="M798.77 365.30L801.86 362.30V371.40M798.77 371.40H804.23" fill="none" stroke="#d8dbea" stroke-width="1.3" stroke-linecap="round" stroke-linejoin="round"/>
<text x="801.5" y="380.1" font-size="3.8" text-anchor="middle" fill="#a6add4" font-family='"Liberation Sans", sans-serif'>Net-(U3-Pad1)</text>
<circle cx="848.4" cy="374.1" r="14.1" fill="#5b6cb1"/>
<circle cx="848.4" cy="374.1" r="7.8" fill="#001023" stroke="#dcae26" stroke-width="1.35"/>
<path d="M845.67 363.85Q846.58 362.30 848.40 362.30Q851.13 362.30 851.13 365.03Q851.13 366.40 849.49 367.76L845.40 371.40H851.40" fill="none" stroke="#d8dbea" stroke-width="1.3" stroke-linecap="round" stroke-linejoin="round"/>
<text x="848.4" y="380.1" font-size="3.8" text-anchor="middle" fill="#a6add4" font-family='"Liberation Sans", sans-serif'>Net-(U3-Pad1)</text>
<circle cx="1000.4" cy="374.1" r="14.1" fill="#5b6cb1"/>
<circle cx="1000.4" cy="374.1" r="7.8" fill="#001023" stroke="#dcae26" stroke-width="1.35"/>
<path d="M997.67 365.30L1000.76 362.30V371.40M997.67 371.40H1003.13" fill="none" stroke="#d8dbea" stroke-width="1.3" stroke-linecap="round" stroke-linejoin="round"/>
<path d="M992.96 379.10L994.94 385.10L996.92 379.10M1002.38 379.94Q1001.60 379.10 1000.52 379.10Q998.24 379.10 998.24 382.10Q998.24 385.10 1000.52 385.10Q1001.60 385.10 1002.38 384.26M1007.84 379.94Q1007.06 379.10 1005.98 379.10Q1003.70 379.10 1003.70 382.10Q1003.70 385.10 1005.98 385.10Q1007.06 385.10 1007.84 384.26" fill="none" stroke="#c0c6e2" stroke-width="1.1" stroke-linecap="round" stroke-linejoin="round"/>
<circle cx="1053.9" cy="278.3" r="14.1" fill="#5b6cb1"/>
<circle cx="1053.9" cy="278.3" r="7.8" fill="#001023" stroke="#dcae26" stroke-width="1.35"/>
<path d="M1051.17 269.50L1054.26 266.50V275.60M1051.17 275.60H1056.63" fill="none" stroke="#d8dbea" stroke-width="1.3" stroke-linecap="round" stroke-linejoin="round"/>
<path d="M1051.08 284.14Q1050.42 283.30 1049.28 283.30Q1047.12 283.30 1047.12 286.30Q1047.12 289.30 1049.28 289.30Q1051.08 289.30 1051.08 287.50V286.60H1049.52M1052.40 289.30V283.30L1056.00 289.30V283.30M1057.32 289.30V283.30H1058.52Q1060.68 283.30 1060.68 286.30Q1060.68 289.30 1058.52 289.30Z" fill="none" stroke="#c0c6e2" stroke-width="1.1" stroke-linecap="round" stroke-linejoin="round"/>
<circle cx="1053.9" cy="430.6" r="14.1" fill="#5b6cb1"/>
<circle cx="1053.9" cy="430.6" r="7.8" fill="#001023" stroke="#dcae26" stroke-width="1.35"/>
<path d="M1051.17 420.35Q1052.08 418.80 1053.90 418.80Q1056.63 418.80 1056.63 421.53Q1056.63 422.90 1054.99 424.26L1050.90 427.90H1056.90" fill="none" stroke="#d8dbea" stroke-width="1.3" stroke-linecap="round" stroke-linejoin="round"/>
<text x="1053.9" y="436.6" font-size="3.8" text-anchor="middle" fill="#a6add4" font-family='"Liberation Sans", sans-serif'>Net-(U3-Pad1)</text>
<circle cx="1103.4" cy="278.3" r="14.1" fill="#5b6cb1"/>
<circle cx="1103.4" cy="278.3" r="7.8" fill="#001023" stroke="#dcae26" stroke-width="1.35"/>
<path d="M1100.67 269.50L1103.76 266.50V275.60M1100.67 275.60H1106.13" fill="none" stroke="#d8dbea" stroke-width="1.3" stroke-linecap="round" stroke-linejoin="round"/>
<path d="M1100.58 284.14Q1099.92 283.30 1098.78 283.30Q1096.62 283.30 1096.62 286.30Q1096.62 289.30 1098.78 289.30Q1100.58 289.30 1100.58 287.50V286.60H1099.02M1101.90 289.30V283.30L1105.50 289.30V283.30M1106.82 289.30V283.30H1108.02Q1110.18 283.30 1110.18 286.30Q1110.18 289.30 1108.02 289.30Z" fill="none" stroke="#c0c6e2" stroke-width="1.1" stroke-linecap="round" stroke-linejoin="round"/>
<circle cx="1103.4" cy="430.6" r="14.1" fill="#5b6cb1"/>
<circle cx="1103.4" cy="430.6" r="7.8" fill="#001023" stroke="#dcae26" stroke-width="1.35"/>
<path d="M1100.67 420.35Q1101.58 418.80 1103.40 418.80Q1106.13 418.80 1106.13 421.53Q1106.13 422.90 1104.49 424.26L1100.40 427.90H1106.40" fill="none" stroke="#d8dbea" stroke-width="1.3" stroke-linecap="round" stroke-linejoin="round"/>
<text x="1103.4" y="436.6" font-size="3.8" text-anchor="middle" fill="#a6add4" font-family='"Liberation Sans", sans-serif'>Net-(U3-Pad1)</text>
<circle cx="1153.3" cy="278.3" r="14.1" fill="#5b6cb1"/>
<circle cx="1153.3" cy="278.3" r="7.8" fill="#001023" stroke="#dcae26" stroke-width="1.35"/>
<path d="M1150.57 269.50L1153.66 266.50V275.60M1150.57 275.60H1156.03" fill="none" stroke="#d8dbea" stroke-width="1.3" stroke-linecap="round" stroke-linejoin="round"/>
<path d="M1150.48 284.14Q1149.82 283.30 1148.68 283.30Q1146.52 283.30 1146.52 286.30Q1146.52 289.30 1148.68 289.30Q1150.48 289.30 1150.48 287.50V286.60H1148.92M1151.80 289.30V283.30L1155.40 289.30V283.30M1156.72 289.30V283.30H1157.92Q1160.08 283.30 1160.08 286.30Q1160.08 289.30 1157.92 289.30Z" fill="none" stroke="#c0c6e2" stroke-width="1.1" stroke-linecap="round" stroke-linejoin="round"/>
<circle cx="1153.3" cy="430.6" r="14.1" fill="#5b6cb1"/>
<circle cx="1153.3" cy="430.6" r="7.8" fill="#001023" stroke="#dcae26" stroke-width="1.35"/>
<path d="M1150.57 420.35Q1151.48 418.80 1153.30 418.80Q1156.03 418.80 1156.03 421.53Q1156.03 422.90 1154.39 424.26L1150.30 427.90H1156.30" fill="none" stroke="#d8dbea" stroke-width="1.3" stroke-linecap="round" stroke-linejoin="round"/>
<text x="1153.3" y="436.6" font-size="3.8" text-anchor="middle" fill="#a6add4" font-family='"Liberation Sans", sans-serif'>Net-(U3-Pad1)</text>
<circle cx="1203.2" cy="278.3" r="14.1" fill="#5b6cb1"/>
<circle cx="1203.2" cy="278.3" r="7.8" fill="#001023" stroke="#dcae26" stroke-width="1.35"/>
<path d="M1200.47 269.50L1203.56 266.50V275.60M1200.47 275.60H1205.93" fill="none" stroke="#d8dbea" stroke-width="1.3" stroke-linecap="round" stroke-linejoin="round"/>
<path d="M1200.38 284.14Q1199.72 283.30 1198.58 283.30Q1196.42 283.30 1196.42 286.30Q1196.42 289.30 1198.58 289.30Q1200.38 289.30 1200.38 287.50V286.60H1198.82M1201.70 289.30V283.30L1205.30 289.30V283.30M1206.62 289.30V283.30H1207.82Q1209.98 283.30 1209.98 286.30Q1209.98 289.30 1207.82 289.30Z" fill="none" stroke="#c0c6e2" stroke-width="1.1" stroke-linecap="round" stroke-linejoin="round"/>
<circle cx="1203.2" cy="430.6" r="14.1" fill="#5b6cb1"/>
<circle cx="1203.2" cy="430.6" r="7.8" fill="#001023" stroke="#dcae26" stroke-width="1.35"/>
<path d="M1200.47 420.35Q1201.38 418.80 1203.20 418.80Q1205.93 418.80 1205.93 421.53Q1205.93 422.90 1204.29 424.26L1200.20 427.90H1206.20" fill="none" stroke="#d8dbea" stroke-width="1.3" stroke-linecap="round" stroke-linejoin="round"/>
<text x="1203.2" y="436.6" font-size="3.8" text-anchor="middle" fill="#a6add4" font-family='"Liberation Sans", sans-serif'>Net-(U3-Pad1)</text>
<circle cx="924.3" cy="1015" r="14.1" fill="#5b6cb1"/>
<circle cx="924.3" cy="1015" r="7.8" fill="#001023" stroke="#dcae26" stroke-width="1.35"/>
<path d="M921.57 1004.75Q922.48 1003.20 924.30 1003.20Q927.03 1003.20 927.03 1005.93Q927.03 1007.29 925.39 1008.66L921.30 1012.30H927.30" fill="none" stroke="#d8dbea" stroke-width="1.3" stroke-linecap="round" stroke-linejoin="round"/>
<text x="924.3" y="1021" font-size="3.8" text-anchor="middle" fill="#a6add4" font-family='"Liberation Sans", sans-serif'>Net-(U3-Pad1)</text>
<circle cx="924.3" cy="1167.5" r="14.1" fill="#5b6cb1"/>
<circle cx="924.3" cy="1167.5" r="7.8" fill="#001023" stroke="#dcae26" stroke-width="1.35"/>
<path d="M921.57 1158.70L924.66 1155.70V1164.80M921.57 1164.80H927.03" fill="none" stroke="#d8dbea" stroke-width="1.3" stroke-linecap="round" stroke-linejoin="round"/>
<path d="M921.48 1173.34Q920.82 1172.50 919.68 1172.50Q917.52 1172.50 917.52 1175.50Q917.52 1178.50 919.68 1178.50Q921.48 1178.50 921.48 1176.70V1175.80H919.92M922.80 1178.50V1172.50L926.40 1178.50V1172.50M927.72 1178.50V1172.50H928.92Q931.08 1172.50 931.08 1175.50Q931.08 1178.50 928.92 1178.50Z" fill="none" stroke="#c0c6e2" stroke-width="1.1" stroke-linecap="round" stroke-linejoin="round"/>
<circle cx="974.3" cy="1015" r="14.1" fill="#5b6cb1"/>
<circle cx="974.3" cy="1015" r="7.8" fill="#001023" stroke="#dcae26" stroke-width="1.35"/>
<path d="M971.57 1004.75Q972.48 1003.20 974.30 1003.20Q977.03 1003.20 977.03 1005.93Q977.03 1007.29 975.39 1008.66L971.30 1012.30H977.30" fill="none" stroke="#d8dbea" stroke-width="1.3" stroke-linecap="round" stroke-linejoin="round"/>
<text x="974.3" y="1021" font-size="3.8" text-anchor="middle" fill="#a6add4" font-family='"Liberation Sans", sans-serif'>Net-(U3-Pad1)</text>
<circle cx="974.3" cy="1167.5" r="14.1" fill="#5b6cb1"/>
<circle cx="974.3" cy="1167.5" r="7.8" fill="#001023" stroke="#dcae26" stroke-width="1.35"/>
<path d="M971.57 1158.70L974.66 1155.70V1164.80M971.57 1164.80H977.03" fill="none" stroke="#d8dbea" stroke-width="1.3" stroke-linecap="round" stroke-linejoin="round"/>
<path d="M971.48 1173.34Q970.82 1172.50 969.68 1172.50Q967.52 1172.50 967.52 1175.50Q967.52 1178.50 969.68 1178.50Q971.48 1178.50 971.48 1176.70V1175.80H969.92M972.80 1178.50V1172.50L976.40 1178.50V1172.50M977.72 1178.50V1172.50H978.92Q981.08 1172.50 981.08 1175.50Q981.08 1178.50 978.92 1178.50Z" fill="none" stroke="#c0c6e2" stroke-width="1.1" stroke-linecap="round" stroke-linejoin="round"/>
<circle cx="1024.3" cy="1015" r="14.1" fill="#5b6cb1"/>
<circle cx="1024.3" cy="1015" r="7.8" fill="#001023" stroke="#dcae26" stroke-width="1.35"/>
<path d="M1021.57 1004.75Q1022.48 1003.20 1024.30 1003.20Q1027.03 1003.20 1027.03 1005.93Q1027.03 1007.29 1025.39 1008.66L1021.30 1012.30H1027.30" fill="none" stroke="#d8dbea" stroke-width="1.3" stroke-linecap="round" stroke-linejoin="round"/>
<text x="1024.3" y="1021" font-size="3.8" text-anchor="middle" fill="#a6add4" font-family='"Liberation Sans", sans-serif'>Net-(U3-Pad1)</text>
<circle cx="1024.3" cy="1167.5" r="14.1" fill="#5b6cb1"/>
<circle cx="1024.3" cy="1167.5" r="7.8" fill="#001023" stroke="#dcae26" stroke-width="1.35"/>
<path d="M1021.57 1158.70L1024.66 1155.70V1164.80M1021.57 1164.80H1027.03" fill="none" stroke="#d8dbea" stroke-width="1.3" stroke-linecap="round" stroke-linejoin="round"/>
<path d="M1021.48 1173.34Q1020.82 1172.50 1019.68 1172.50Q1017.52 1172.50 1017.52 1175.50Q1017.52 1178.50 1019.68 1178.50Q1021.48 1178.50 1021.48 1176.70V1175.80H1019.92M1022.80 1178.50V1172.50L1026.40 1178.50V1172.50M1027.72 1178.50V1172.50H1028.92Q1031.08 1172.50 1031.08 1175.50Q1031.08 1178.50 1028.92 1178.50Z" fill="none" stroke="#c0c6e2" stroke-width="1.1" stroke-linecap="round" stroke-linejoin="round"/>
<circle cx="1073.7" cy="1015" r="14.1" fill="#5b6cb1"/>
<circle cx="1073.7" cy="1015" r="7.8" fill="#001023" stroke="#dcae26" stroke-width="1.35"/>
<path d="M1070.97 1004.75Q1071.88 1003.20 1073.70 1003.20Q1076.43 1003.20 1076.43 1005.93Q1076.43 1007.29 1074.79 1008.66L1070.70 1012.30H1076.70" fill="none" stroke="#d8dbea" stroke-width="1.3" stroke-linecap="round" stroke-linejoin="round"/>
<text x="1073.7" y="1021" font-size="3.8" text-anchor="middle" fill="#a6add4" font-family='"Liberation Sans", sans-serif'>Net-(U3-Pad1)</text>
<circle cx="1073.7" cy="1167.5" r="14.1" fill="#5b6cb1"/>
<circle cx="1073.7" cy="1167.5" r="7.8" fill="#001023" stroke="#dcae26" stroke-width="1.35"/>
<path d="M1070.97 1158.70L1074.06 1155.70V1164.80M1070.97 1164.80H1076.43" fill="none" stroke="#d8dbea" stroke-width="1.3" stroke-linecap="round" stroke-linejoin="round"/>
<path d="M1070.88 1173.34Q1070.22 1172.50 1069.08 1172.50Q1066.92 1172.50 1066.92 1175.50Q1066.92 1178.50 1069.08 1178.50Q1070.88 1178.50 1070.88 1176.70V1175.80H1069.32M1072.20 1178.50V1172.50L1075.80 1178.50V1172.50M1077.12 1178.50V1172.50H1078.32Q1080.48 1172.50 1080.48 1175.50Q1080.48 1178.50 1078.32 1178.50Z" fill="none" stroke="#c0c6e2" stroke-width="1.1" stroke-linecap="round" stroke-linejoin="round"/>
<circle cx="499.4" cy="991.3" r="14.1" fill="#5b6cb1"/>
<circle cx="499.4" cy="991.3" r="7.8" fill="#001023" stroke="#dcae26" stroke-width="1.35"/>
<path d="M496.67 982.50L499.76 979.50V988.60M496.67 988.60H502.13" fill="none" stroke="#d8dbea" stroke-width="1.3" stroke-linecap="round" stroke-linejoin="round"/>
<path d="M491.96 996.30L493.94 1002.30L495.92 996.30M501.38 997.14Q500.60 996.30 499.52 996.30Q497.24 996.30 497.24 999.30Q497.24 1002.30 499.52 1002.30Q500.60 1002.30 501.38 1001.46M506.84 997.14Q506.06 996.30 504.98 996.30Q502.70 996.30 502.70 999.30Q502.70 1002.30 504.98 1002.30Q506.06 1002.30 506.84 1001.46" fill="none" stroke="#c0c6e2" stroke-width="1.1" stroke-linecap="round" stroke-linejoin="round"/>
<circle cx="651.3" cy="991.3" r="14.1" fill="#5b6cb1"/>
<circle cx="651.3" cy="991.3" r="7.8" fill="#001023" stroke="#dcae26" stroke-width="1.35"/>
<path d="M648.57 981.05Q649.48 979.50 651.30 979.50Q654.03 979.50 654.03 982.23Q654.03 983.59 652.39 984.96L648.30 988.60H654.30" fill="none" stroke="#d8dbea" stroke-width="1.3" stroke-linecap="round" stroke-linejoin="round"/>
<text x="651.3" y="997.3" font-size="3.8" text-anchor="middle" fill="#a6add4" font-family='"Liberation Sans", sans-serif'>Net-(U3-Pad1)</text>
<circle cx="699.2" cy="991.3" r="14.1" fill="#5b6cb1"/>
<circle cx="699.2" cy="991.3" r="7.8" fill="#001023" stroke="#dcae26" stroke-width="1.35"/>
<path d="M696.47 982.50L699.56 979.50V988.60M696.47 988.60H701.93" fill="none" stroke="#d8dbea" stroke-width="1.3" stroke-linecap="round" stroke-linejoin="round"/>
<text x="699.2" y="997.3" font-size="3.8" text-anchor="middle" fill="#a6add4" font-family='"Liberation Sans", sans-serif'>Net-(U3-Pad1)</text>
<circle cx="850.6" cy="991.3" r="14.1" fill="#5b6cb1"/>
<circle cx="850.6" cy="991.3" r="7.8" fill="#001023" stroke="#dcae26" stroke-width="1.35"/>
<path d="M847.87 981.05Q848.78 979.50 850.60 979.50Q853.33 979.50 853.33 982.23Q853.33 983.59 851.69 984.96L847.60 988.60H853.60" fill="none" stroke="#d8dbea" stroke-width="1.3" stroke-linecap="round" stroke-linejoin="round"/>
<path d="M847.78 997.14Q847.12 996.30 845.98 996.30Q843.82 996.30 843.82 999.30Q843.82 1002.30 845.98 1002.30Q847.78 1002.30 847.78 1000.50V999.60H846.22M849.10 1002.30V996.30L852.70 1002.30V996.30M854.02 1002.30V996.30H855.22Q857.38 996.30 857.38 999.30Q857.38 1002.30 855.22 1002.30Z" fill="none" stroke="#c0c6e2" stroke-width="1.1" stroke-linecap="round" stroke-linejoin="round"/>
<circle cx="499.4" cy="1041.3" r="14.1" fill="#5b6cb1"/>
<circle cx="499.4" cy="1041.3" r="7.8" fill="#001023" stroke="#dcae26" stroke-width="1.35"/>
<path d="M496.67 1032.50L499.76 1029.50V1038.60M496.67 1038.60H502.13" fill="none" stroke="#d8dbea" stroke-width="1.3" stroke-linecap="round" stroke-linejoin="round"/>
<path d="M491.96 1046.30L493.94 1052.30L495.92 1046.30M501.38 1047.14Q500.60 1046.30 499.52 1046.30Q497.24 1046.30 497.24 1049.30Q497.24 1052.30 499.52 1052.30Q500.60 1052.30 501.38 1051.46M506.84 1047.14Q506.06 1046.30 504.98 1046.30Q502.70 1046.30 502.70 1049.30Q502.70 1052.30 504.98 1052.30Q506.06 1052.30 506.84 1051.46" fill="none" stroke="#c0c6e2" stroke-width="1.1" stroke-linecap="round" stroke-linejoin="round"/>
<circle cx="651.3" cy="1041.3" r="14.1" fill="#5b6cb1"/>
<circle cx="651.3" cy="1041.3" r="7.8" fill="#001023" stroke="#dcae26" stroke-width="1.35"/>
<path d="M648.57 1031.05Q649.48 1029.50 651.30 1029.50Q654.03 1029.50 654.03 1032.23Q654.03 1033.60 652.39 1034.96L648.30 1038.60H654.30" fill="none" stroke="#d8dbea" stroke-width="1.3" stroke-linecap="round" stroke-linejoin="round"/>
<text x="651.3" y="1047.3" font-size="3.8" text-anchor="middle" fill="#a6add4" font-family='"Liberation Sans", sans-serif'>Net-(U3-Pad1)</text>
<circle cx="699.2" cy="1041.3" r="14.1" fill="#5b6cb1"/>
<circle cx="699.2" cy="1041.3" r="7.8" fill="#001023" stroke="#dcae26" stroke-width="1.35"/>
<path d="M696.47 1032.50L699.56 1029.50V1038.60M696.47 1038.60H701.93" fill="none" stroke="#d8dbea" stroke-width="1.3" stroke-linecap="round" stroke-linejoin="round"/>
<text x="699.2" y="1047.3" font-size="3.8" text-anchor="middle" fill="#a6add4" font-family='"Liberation Sans", sans-serif'>Net-(U3-Pad1)</text>
<circle cx="850.6" cy="1041.3" r="14.1" fill="#5b6cb1"/>
<circle cx="850.6" cy="1041.3" r="7.8" fill="#001023" stroke="#dcae26" stroke-width="1.35"/>
<path d="M847.87 1031.05Q848.78 1029.50 850.60 1029.50Q853.33 1029.50 853.33 1032.23Q853.33 1033.60 851.69 1034.96L847.60 1038.60H853.60" fill="none" stroke="#d8dbea" stroke-width="1.3" stroke-linecap="round" stroke-linejoin="round"/>
<path d="M847.78 1047.14Q847.12 1046.30 845.98 1046.30Q843.82 1046.30 843.82 1049.30Q843.82 1052.30 845.98 1052.30Q847.78 1052.30 847.78 1050.50V1049.60H846.22M849.10 1052.30V1046.30L852.70 1052.30V1046.30M854.02 1052.30V1046.30H855.22Q857.38 1046.30 857.38 1049.30Q857.38 1052.30 855.22 1052.30Z" fill="none" stroke="#c0c6e2" stroke-width="1.1" stroke-linecap="round" stroke-linejoin="round"/>
<circle cx="499.4" cy="1091.3" r="14.1" fill="#5b6cb1"/>
<circle cx="499.4" cy="1091.3" r="7.8" fill="#001023" stroke="#dcae26" stroke-width="1.35"/>
<path d="M496.67 1082.50L499.76 1079.50V1088.60M496.67 1088.60H502.13" fill="none" stroke="#d8dbea" stroke-width="1.3" stroke-linecap="round" stroke-linejoin="round"/>
<path d="M491.96 1096.30L493.94 1102.30L495.92 1096.30M501.38 1097.14Q500.60 1096.30 499.52 1096.30Q497.24 1096.30 497.24 1099.30Q497.24 1102.30 499.52 1102.30Q500.60 1102.30 501.38 1101.46M506.84 1097.14Q506.06 1096.30 504.98 1096.30Q502.70 1096.30 502.70 1099.30Q502.70 1102.30 504.98 1102.30Q506.06 1102.30 506.84 1101.46" fill="none" stroke="#c0c6e2" stroke-width="1.1" stroke-linecap="round" stroke-linejoin="round"/>
<circle cx="651.3" cy="1091.3" r="14.1" fill="#5b6cb1"/>
<circle cx="651.3" cy="1091.3" r="7.8" fill="#001023" stroke="#dcae26" stroke-width="1.35"/>
<path d="M648.57 1081.05Q649.48 1079.50 651.30 1079.50Q654.03 1079.50 654.03 1082.23Q654.03 1083.60 652.39 1084.96L648.30 1088.60H654.30" fill="none" stroke="#d8dbea" stroke-width="1.3" stroke-linecap="round" stroke-linejoin="round"/>
<text x="651.3" y="1097.3" font-size="3.8" text-anchor="middle" fill="#a6add4" font-family='"Liberation Sans", sans-serif'>Net-(U3-Pad1)</text>
<circle cx="699.2" cy="1091.3" r="14.1" fill="#5b6cb1"/>
<circle cx="699.2" cy="1091.3" r="7.8" fill="#001023" stroke="#dcae26" stroke-width="1.35"/>
<path d="M696.47 1082.50L699.56 1079.50V1088.60M696.47 1088.60H701.93" fill="none" stroke="#d8dbea" stroke-width="1.3" stroke-linecap="round" stroke-linejoin="round"/>
<text x="699.2" y="1097.3" font-size="3.8" text-anchor="middle" fill="#a6add4" font-family='"Liberation Sans", sans-serif'>Net-(U3-Pad1)</text>
<circle cx="850.6" cy="1091.3" r="14.1" fill="#5b6cb1"/>
<circle cx="850.6" cy="1091.3" r="7.8" fill="#001023" stroke="#dcae26" stroke-width="1.35"/>
<path d="M847.87 1081.05Q848.78 1079.50 850.60 1079.50Q853.33 1079.50 853.33 1082.23Q853.33 1083.60 851.69 1084.96L847.60 1088.60H853.60" fill="none" stroke="#d8dbea" stroke-width="1.3" stroke-linecap="round" stroke-linejoin="round"/>
<path d="M847.78 1097.14Q847.12 1096.30 845.98 1096.30Q843.82 1096.30 843.82 1099.30Q843.82 1102.30 845.98 1102.30Q847.78 1102.30 847.78 1100.50V1099.60H846.22M849.10 1102.30V1096.30L852.70 1102.30V1096.30M854.02 1102.30V1096.30H855.22Q857.38 1096.30 857.38 1099.30Q857.38 1102.30 855.22 1102.30Z" fill="none" stroke="#c0c6e2" stroke-width="1.1" stroke-linecap="round" stroke-linejoin="round"/>
<circle cx="290.4" cy="1021.2" r="14.1" fill="#5b6cb1"/>
<circle cx="290.4" cy="1021.2" r="7.8" fill="#001023" stroke="#dcae26" stroke-width="1.35"/>
<path d="M287.67 1010.95Q288.58 1009.40 290.40 1009.40Q293.13 1009.40 293.13 1012.13Q293.13 1013.50 291.49 1014.86L287.40 1018.50H293.40" fill="none" stroke="#d8dbea" stroke-width="1.3" stroke-linecap="round" stroke-linejoin="round"/>
<path d="M282.96 1026.20L284.94 1032.20L286.92 1026.20M292.38 1027.04Q291.60 1026.20 290.52 1026.20Q288.24 1026.20 288.24 1029.20Q288.24 1032.20 290.52 1032.20Q291.60 1032.20 292.38 1031.36M297.84 1027.04Q297.06 1026.20 295.98 1026.20Q293.70 1026.20 293.70 1029.20Q293.70 1032.20 295.98 1032.20Q297.06 1032.20 297.84 1031.36" fill="none" stroke="#c0c6e2" stroke-width="1.1" stroke-linecap="round" stroke-linejoin="round"/>
<circle cx="442.5" cy="1021.2" r="14.1" fill="#5b6cb1"/>
<circle cx="442.5" cy="1021.2" r="7.8" fill="#001023" stroke="#dcae26" stroke-width="1.35"/>
<path d="M439.77 1012.40L442.86 1009.40V1018.50M439.77 1018.50H445.23" fill="none" stroke="#d8dbea" stroke-width="1.3" stroke-linecap="round" stroke-linejoin="round"/>
<text x="442.5" y="1027.2" font-size="3.8" text-anchor="middle" fill="#a6add4" font-family='"Liberation Sans", sans-serif'>Net-(U3-Pad1)</text>
<circle cx="241.6" cy="1081.5" r="14.1" fill="#5b6cb1"/>
<circle cx="241.6" cy="1081.5" r="7.8" fill="#001023" stroke="#dcae26" stroke-width="1.35"/>
<path d="M238.87 1071.25Q239.78 1069.70 241.60 1069.70Q244.33 1069.70 244.33 1072.43Q244.33 1073.80 242.69 1075.16L238.60 1078.80H244.60" fill="none" stroke="#d8dbea" stroke-width="1.3" stroke-linecap="round" stroke-linejoin="round"/>
<path d="M234.16 1086.50L236.14 1092.50L238.12 1086.50M243.58 1087.34Q242.80 1086.50 241.72 1086.50Q239.44 1086.50 239.44 1089.50Q239.44 1092.50 241.72 1092.50Q242.80 1092.50 243.58 1091.66M249.04 1087.34Q248.26 1086.50 247.18 1086.50Q244.90 1086.50 244.90 1089.50Q244.90 1092.50 247.18 1092.50Q248.26 1092.50 249.04 1091.66" fill="none" stroke="#c0c6e2" stroke-width="1.1" stroke-linecap="round" stroke-linejoin="round"/>
<circle cx="392.2" cy="1081.5" r="14.1" fill="#5b6cb1"/>
<circle cx="392.2" cy="1081.5" r="7.8" fill="#001023" stroke="#dcae26" stroke-width="1.35"/>
<path d="M389.47 1072.70L392.56 1069.70V1078.80M389.47 1078.80H394.93" fill="none" stroke="#d8dbea" stroke-width="1.3" stroke-linecap="round" stroke-linejoin="round"/>
<text x="392.2" y="1087.5" font-size="3.8" text-anchor="middle" fill="#a6add4" font-family='"Liberation Sans", sans-serif'>Net-(U3-Pad1)</text>
<circle cx="595.3" cy="941.2" r="16.1" fill="#5b6cb1"/>
<circle cx="595.3" cy="941.2" r="9.0" fill="#001023" stroke="#dcae26" stroke-width="1.35"/>
<path d="M592.12 929.70Q593.18 927.90 595.30 927.90Q598.48 927.90 598.48 931.08Q598.48 932.67 596.57 934.26L591.80 938.50H598.80" fill="none" stroke="#d8dbea" stroke-width="1.3" stroke-linecap="round" stroke-linejoin="round"/>
<path d="M586.37 946.80L588.75 954.00L591.12 946.80M597.68 947.81Q596.74 946.80 595.44 946.80Q592.71 946.80 592.71 950.40Q592.71 954.00 595.44 954.00Q596.74 954.00 597.68 952.99M604.23 947.81Q603.29 946.80 602.00 946.80Q599.26 946.80 599.26 950.40Q599.26 954.00 602.00 954.00Q603.29 954.00 604.23 952.99" fill="none" stroke="#c0c6e2" stroke-width="1.1" stroke-linecap="round" stroke-linejoin="round"/>
<circle cx="695.4" cy="941.2" r="16.1" fill="#5b6cb1"/>
<circle cx="695.4" cy="941.2" r="9.0" fill="#001023" stroke="#dcae26" stroke-width="1.35"/>
<path d="M692.22 931.40L695.82 927.90V938.50M692.22 938.50H698.58" fill="none" stroke="#d8dbea" stroke-width="1.3" stroke-linecap="round" stroke-linejoin="round"/>
<path d="M692.02 947.81Q691.22 946.80 689.86 946.80Q687.26 946.80 687.26 950.40Q687.26 954.00 689.86 954.00Q692.02 954.00 692.02 951.84V950.76H690.14M693.60 954.00V946.80L697.92 954.00V946.80M699.50 954.00V946.80H700.94Q703.54 946.80 703.54 950.40Q703.54 954.00 700.94 954.00Z" fill="none" stroke="#c0c6e2" stroke-width="1.1" stroke-linecap="round" stroke-linejoin="round"/>
<circle cx="874.7" cy="941.1" r="16.1" fill="#5b6cb1"/>
<circle cx="874.7" cy="941.1" r="9.0" fill="#001023" stroke="#dcae26" stroke-width="1.35"/>
<path d="M871.52 931.30L875.12 927.80V938.40M871.52 938.40H877.88" fill="none" stroke="#d8dbea" stroke-width="1.3" stroke-linecap="round" stroke-linejoin="round"/>
<path d="M871.32 947.71Q870.52 946.70 869.16 946.70Q866.56 946.70 866.56 950.30Q866.56 953.90 869.16 953.90Q871.32 953.90 871.32 951.74V950.66H869.44M872.90 953.90V946.70L877.22 953.90V946.70M878.80 953.90V946.70H880.24Q882.84 946.70 882.84 950.30Q882.84 953.90 880.24 953.90Z" fill="none" stroke="#c0c6e2" stroke-width="1.1" stroke-linecap="round" stroke-linejoin="round"/>
<circle cx="974.3" cy="941.1" r="16.1" fill="#5b6cb1"/>
<circle cx="974.3" cy="941.1" r="9.0" fill="#001023" stroke="#dcae26" stroke-width="1.35"/>
<path d="M971.12 929.60Q972.18 927.80 974.30 927.80Q977.48 927.80 977.48 930.98Q977.48 932.57 975.57 934.16L970.80 938.40H977.80" fill="none" stroke="#d8dbea" stroke-width="1.3" stroke-linecap="round" stroke-linejoin="round"/>
<path d="M965.37 946.70L967.75 953.90L970.12 946.70M976.68 947.71Q975.74 946.70 974.44 946.70Q971.71 946.70 971.71 950.30Q971.71 953.90 974.44 953.90Q975.74 953.90 976.68 952.89M983.23 947.71Q982.29 946.70 981.00 946.70Q978.26 946.70 978.26 950.30Q978.26 953.90 981.00 953.90Q982.29 953.90 983.23 952.89" fill="none" stroke="#c0c6e2" stroke-width="1.1" stroke-linecap="round" stroke-linejoin="round"/>
<circle cx="446.5" cy="164.9" r="3.7" fill="#e8b634"/>
<circle cx="564.6" cy="223.9" r="3.7" fill="#e8b634"/>
<circle cx="546.3" cy="294.4" r="3.7" fill="#e8b634"/>
<circle cx="207.3" cy="404.6" r="3.7" fill="#e8b634"/>
<circle cx="884.2" cy="213.9" r="3.7" fill="#e8b634"/>
<circle cx="795.1" cy="453.4" r="3.7" fill="#e8b634"/>
<circle cx="765.4" cy="540.2" r="3.7" fill="#e8b634"/>
<circle cx="386.1" cy="663.3" r="3.7" fill="#e8b634"/>
<circle cx="267.2" cy="902.4" r="3.7" fill="#e8b634"/>
<circle cx="306.6" cy="1111.4" r="3.7" fill="#e8b634"/>
<circle cx="947.3" cy="964.4" r="3.7" fill="#e8b634"/>
<path d="M358.80 580.90V595.29A6.85 7.41 0 0 0 372.51 595.29V580.90M391.93 580.90L379.36 596.60H394.90M390.79 590.71V602.70" fill="none" stroke="#f2eda1" stroke-width="2.4" stroke-linecap="round" stroke-linejoin="round"/>
<path d="M628.00 412.80V427.19A6.87 7.41 0 0 0 641.73 427.19V412.80M649.28 416.51Q651.57 412.80 656.15 412.80Q663.01 412.80 663.01 419.34Q663.01 422.61 658.89 425.88L648.60 434.60H663.70" fill="none" stroke="#f2eda1" stroke-width="2.4" stroke-linecap="round" stroke-linejoin="round"/>
<path d="M907.30 417.40V431.79A7.00 7.41 0 0 0 921.30 431.79V417.40M928.30 424.59L936.23 417.40V439.20M928.30 439.20H942.30" fill="none" stroke="#f2eda1" stroke-width="2.4" stroke-linecap="round" stroke-linejoin="round"/>
<path d="M182.40 512.10V528.23Q182.40 533.90 177.49 533.90Q174.29 533.90 172.80 531.72M200.53 512.10L188.80 527.80H203.30M199.46 521.91V533.90" fill="none" stroke="#f2eda1" stroke-width="2.4" stroke-linecap="round" stroke-linejoin="round"/>
<path d="M1187.83 651.90V668.03Q1187.83 673.70 1182.75 673.70Q1179.44 673.70 1177.90 671.52M1195.10 655.61Q1197.31 651.90 1201.72 651.90Q1208.34 651.90 1208.34 658.44Q1208.34 661.71 1204.37 664.98L1194.44 673.70H1209.00" fill="none" stroke="#f2eda1" stroke-width="2.4" stroke-linecap="round" stroke-linejoin="round"/>
<path d="M122.18 1119.70V1135.83Q122.18 1141.50 117.28 1141.50Q114.09 1141.50 112.60 1139.32M129.64 1119.70H141.77L134.96 1128.42Q142.20 1128.42 142.20 1134.96Q142.20 1141.50 135.39 1141.50Q131.13 1141.50 128.57 1139.32" fill="none" stroke="#f2eda1" stroke-width="2.4" stroke-linecap="round" stroke-linejoin="round"/>
<path d="M291.77 1188.70V1204.83Q291.77 1210.50 286.52 1210.50Q283.10 1210.50 281.50 1208.32M298.61 1195.89L306.37 1188.70V1210.50M298.61 1210.50H312.30" fill="none" stroke="#f2eda1" stroke-width="2.4" stroke-linecap="round" stroke-linejoin="round"/>
<path d="M642.92 884.15Q639.98 881.10 635.90 881.10Q627.30 881.10 627.30 892.00Q627.30 902.90 635.90 902.90Q639.98 902.90 642.92 899.85M649.72 888.29L657.41 881.10V902.90M649.72 902.90H663.30" fill="none" stroke="#f2eda1" stroke-width="2.4" stroke-linecap="round" stroke-linejoin="round"/>
<path d="M921.87 889.55Q919.05 886.50 915.14 886.50Q906.90 886.50 906.90 897.40Q906.90 908.30 915.14 908.30Q919.05 908.30 921.87 905.25M929.03 890.21Q931.20 886.50 935.54 886.50Q942.05 886.50 942.05 893.04Q942.05 896.31 938.14 899.58L928.38 908.30H942.70" fill="none" stroke="#f2eda1" stroke-width="2.4" stroke-linecap="round" stroke-linejoin="round"/>
<path d="M729.00 211.90V226.29A6.07 7.41 0 0 0 741.14 226.29V211.90M747.20 219.09L754.08 211.90V233.70M747.20 233.70H759.34M765.41 235.23H780.78M786.85 233.70L793.52 211.90L800.20 233.70M789.28 227.60H797.77M806.27 233.70V211.90H810.31Q817.59 211.90 817.59 222.80Q817.59 233.70 810.31 233.70ZM823.66 233.70V211.90H830.13Q836.00 211.90 836.00 216.91Q836.00 221.93 830.13 221.93H823.66M829.73 221.93L836.00 233.70" fill="none" stroke="#f2eda1" stroke-width="2.4" stroke-linecap="round" stroke-linejoin="round"/>
<path d="M908.49 224.81Q910.79 221.10 915.40 221.10Q922.31 221.10 922.31 227.64Q922.31 230.91 918.16 234.18L907.80 242.90H923.00" fill="none" stroke="#f2eda1" stroke-width="2.4" stroke-linecap="round" stroke-linejoin="round"/>
<path d="M147.73 673.91Q150.15 670.20 155.00 670.20Q162.27 670.20 162.27 676.74Q162.27 680.01 157.91 683.28L147.00 692.00H163.00" fill="none" stroke="#f2eda1" stroke-width="2.4" stroke-linecap="round" stroke-linejoin="round"/>
<path d="M147.00 726.19L156.07 719.00V740.80M147.00 740.80H163.00" fill="none" stroke="#f2eda1" stroke-width="2.4" stroke-linecap="round" stroke-linejoin="round"/>
<path d="M161.97 867.10H148.55L147.52 876.91Q150.87 875.17 154.74 875.17Q163.00 875.17 163.00 881.92Q163.00 888.90 154.74 888.90Q149.58 888.90 147.00 886.28" fill="none" stroke="#f2eda1" stroke-width="2.4" stroke-linecap="round" stroke-linejoin="round"/>
<path d="M159.94 907.20L147.00 922.90H163.00M158.76 917.01V929.00" fill="none" stroke="#f2eda1" stroke-width="2.4" stroke-linecap="round" stroke-linejoin="round"/>
<path d="M1076.80 855.39L1083.71 848.20V870.00M1076.80 870.00H1089.00" fill="none" stroke="#f2eda1" stroke-width="2.4" stroke-linecap="round" stroke-linejoin="round"/>
<path d="M240.40 968.30V990.10M247.71 972.01Q249.93 968.30 254.36 968.30Q261.00 968.30 261.00 974.84Q261.00 978.11 257.01 981.38L247.05 990.10H261.67M283.60 971.35Q280.72 968.30 276.73 968.30Q268.31 968.30 268.31 979.20Q268.31 990.10 276.73 990.10Q280.72 990.10 283.60 987.05M307.96 990.10V968.30H314.61Q321.03 968.30 321.03 974.19Q321.03 980.07 314.61 980.07H307.96M327.68 974.40V985.74Q327.68 990.10 332.55 990.10Q336.54 990.10 338.09 987.92M338.09 974.40V990.10M344.74 968.30V986.83Q344.74 990.10 349.17 990.10M355.81 968.30V986.83Q355.81 990.10 360.24 990.10M366.89 968.30V982.69A6.65 7.41 0 0 0 380.18 982.69V968.30M386.82 974.40V996.64M386.82 977.02Q389.04 974.40 392.36 974.40Q397.90 974.40 397.90 982.25Q397.90 990.10 392.36 990.10Q389.04 990.10 386.82 987.48" fill="none" stroke="#f2eda1" stroke-width="2.4" stroke-linecap="round" stroke-linejoin="round"/>
<path d="M392.51 1220.03Q390.03 1217.20 386.31 1217.20Q380.11 1217.20 380.11 1222.65Q380.11 1227.01 386.31 1228.10Q392.51 1229.19 392.51 1233.99Q392.51 1239.00 385.90 1239.00Q382.18 1239.00 379.70 1236.38M398.71 1239.00V1217.20H402.84Q410.27 1217.20 410.27 1228.10Q410.27 1239.00 402.84 1239.00ZM416.47 1239.00L423.29 1217.20L430.11 1239.00M418.95 1232.90H427.63M450.76 1216.11L436.30 1242.27M469.77 1220.03Q467.29 1217.20 463.57 1217.20Q457.37 1217.20 457.37 1222.65Q457.37 1227.01 463.57 1228.10Q469.77 1229.19 469.77 1233.99Q469.77 1239.00 463.16 1239.00Q459.44 1239.00 456.96 1236.38M490.22 1220.25Q487.54 1217.20 483.82 1217.20Q475.97 1217.20 475.97 1228.10Q475.97 1239.00 483.82 1239.00Q487.54 1239.00 490.22 1235.95M496.42 1217.20V1239.00H508.40" fill="none" stroke="#f2eda1" stroke-width="2.4" stroke-linecap="round" stroke-linejoin="round"/>
<path d="M559.14 1121.21Q561.59 1117.50 566.50 1117.50Q573.86 1117.50 573.86 1124.04Q573.86 1127.31 569.45 1130.58L558.40 1139.30H574.60" fill="none" stroke="#f2eda1" stroke-width="2.4" stroke-linecap="round" stroke-linejoin="round"/>
<path d="M619.20 1146.90V1161.29A6.03 7.41 0 0 0 631.27 1161.29V1146.90M637.90 1150.61Q639.92 1146.90 643.94 1146.90Q649.97 1146.90 649.97 1153.44Q649.97 1156.71 646.35 1159.98L637.30 1168.70H650.57M656.61 1170.23H671.89M677.93 1168.70L684.56 1146.90L691.20 1168.70M680.34 1162.60H688.79M697.24 1168.70V1146.90H701.26Q708.50 1146.90 708.50 1157.80Q708.50 1168.70 701.26 1168.70ZM714.53 1168.70V1146.90H720.97Q726.80 1146.90 726.80 1151.91Q726.80 1156.93 720.97 1156.93H714.53M720.57 1156.93L726.80 1168.70" fill="none" stroke="#f2eda1" stroke-width="2.4" stroke-linecap="round" stroke-linejoin="round"/>
<circle cx="157.4" cy="204.2" r="80.3" fill="none" stroke="#ff26e2" stroke-width="1.5"/>
<circle cx="157.4" cy="204.2" r="75.8" fill="none" stroke="#5593e3" stroke-width="3.6"/>
<circle cx="157.4" cy="204.2" r="43" fill="#1ec4d3"/>
<circle cx="1163.5" cy="175.6" r="80.3" fill="none" stroke="#ff26e2" stroke-width="1.5"/>
<circle cx="1163.5" cy="175.6" r="75.8" fill="none" stroke="#5593e3" stroke-width="3.6"/>
<circle cx="1163.5" cy="175.6" r="43" fill="#1ec4d3"/>
<circle cx="1203.4" cy="1161.3" r="80.3" fill="none" stroke="#ff26e2" stroke-width="1.5"/>
<circle cx="1203.4" cy="1161.3" r="75.8" fill="none" stroke="#5593e3" stroke-width="3.6"/>
<circle cx="1203.4" cy="1161.3" r="43" fill="#1ec4d3"/>
<path d="M973.5 55V134.6M934 95.5H1014" stroke="#a8a8a8" stroke-width="1.2"/>
</svg>
</div>
<div class="abs" style="left:1295px;top:0;width:2px;height:1425px;background:#29303c"></div>
<div class="abs" style="left:1297px;top:0;width:1321px;height:50px;background:#f0f0f0;border-bottom:1px solid #a5a5a5"></div>
<svg class="abs" style="left:0;top:0" width="2618" height="50" viewBox="0 0 2618 50"><rect x="1356.5" y="3.2" width="1.2" height="41.5" fill="#8c8c8c"/><rect x="1414.4" y="3.2" width="1.2" height="41.5" fill="#8c8c8c"/><rect x="1472.6" y="3.2" width="1.2" height="41.5" fill="#8c8c8c"/><rect x="1677.5" y="3.2" width="1.2" height="41.5" fill="#8c8c8c"/><rect x="1784.4" y="3.2" width="1.2" height="41.5" fill="#8c8c8c"/><rect x="1891.6" y="3.2" width="1.2" height="41.5" fill="#8c8c8c"/><rect x="1998.6" y="3.2" width="1.2" height="41.5" fill="#8c8c8c"/><rect x="2056.2" y="3.2" width="1.2" height="41.5" fill="#8c8c8c"/><rect x="2261.4" y="3.2" width="1.2" height="41.5" fill="#8c8c8c"/><rect x="2319.6" y="3.2" width="1.2" height="41.5" fill="#8c8c8c"/><path d="M1311.5 6h20l1.3 3.5H1310z" fill="#585858"/><rect x="1310" y="9.5" width="22.8" height="15.3" fill="#333"/><path d="M1311.5 25h20l1.3 3H1310z" fill="#5a5a5a"/><rect x="1310" y="28" width="22.8" height="4" fill="#333"/><rect x="1315" y="32" width="1.4" height="9" fill="#aaa"/><rect x="1327" y="32" width="1.4" height="9" fill="#aaa"/><rect x="1310" y="35" width="20" height="5" fill="#1a7fc6"/><circle cx="1336" cy="31.5" r="10.2" fill="#c21f3c"/><path d="M1336 25v11.5M1331.5 32.5l4.5 4.5l4.5 -4.5" fill="none" stroke="#fff" stroke-width="2.4" stroke-linecap="round" stroke-linejoin="round"/><path d="M1371.2 9.2h15l1.5 1.5v26h-16.5z" fill="#f7f7f7" stroke="#444" stroke-width="2"/><path d="M1380.3 12.2h14.2l7.3 7.3v20.2h-21.5z" fill="#f7f7f7" stroke="#444" stroke-width="2"/><path d="M1394.3 12.2v7.5h7.5z" fill="#555"/><path d="M1384 24h12M1384 28.5h7" stroke="#444" stroke-width="1.6"/><rect x="1426.1" y="19.2" width="12.6" height="11.5" fill="#4f4f4f"/><path d="M1438.5 22.3l6.3 -3.3v11l-6.3 -3z" fill="#4f4f4f"/><path d="M1446.5 20L1462 11M1446.5 22.7L1462 20.3M1446.5 26.2L1462 28.8M1446.5 29.5L1462 37.8" stroke="#3ab2ee" stroke-width="1.7" stroke-linecap="round"/><path d="M1488.5 19a13 12 0 0 1 27 -2.5M1516.5 31a13 12 0 0 1 -27 2.5" fill="none" stroke="#4a4a4a" stroke-width="2.8" stroke-linecap="round"/><path d="M1519 10.5l-0.5 8.5l-8 -1.5z M1486 39.5l0.5 -8.5l8 1.5z" fill="#4a4a4a"/><circle cx="1548.4" cy="21.5" r="11.5" fill="none" stroke="#4a4a4a" stroke-width="2.6"/><path d="M1556.9 30.0L1566.9 39.5" stroke="#4a4a4a" stroke-width="3" stroke-linecap="round"/><path d="M1542.4 21.5h12M1548.4 15.5v12" stroke="#4a4a4a" stroke-width="2.6"/><circle cx="1597.0" cy="21.5" r="11.5" fill="none" stroke="#4a4a4a" stroke-width="2.6"/><path d="M1605.5 30.0L1615.5 39.5" stroke="#4a4a4a" stroke-width="3" stroke-linecap="round"/><path d="M1591.0 21.5h12" stroke="#4a4a4a" stroke-width="2.6"/><circle cx="1646.0" cy="21.5" r="11.5" fill="none" stroke="#4a4a4a" stroke-width="2.6"/><path d="M1654.5 30.0L1664.5 39.5" stroke="#4a4a4a" stroke-width="3" stroke-linecap="round"/><path d="M1640.5 14.0h6.5l4 4v11h-10.5z" fill="#8e8e8e"/><path d="M1707.2 7.5V26.5L1693.8 39" fill="none" stroke="#4a4a4a" stroke-width="2.3" stroke-linecap="round"/><path d="M1707.2 26.5h3.6M1717.6 26.5h6.6" stroke="#c41e3a" stroke-width="2.3"/><path d="M1694.1 11l6.5 8M1700.6 11l-6.5 8" stroke="#4a4a4a" stroke-width="1.9"/><ellipse cx="1717.1" cy="26" rx="3.6" ry="11.5" fill="none" stroke="#4a4a4a" stroke-width="1.9"/><path d="M1715.1 15l7 -0.5l-1.5 7z" fill="#4a4a4a"/><path d="M1756.3 7.5V26.5L1742.9 39" fill="none" stroke="#4a4a4a" stroke-width="2.3" stroke-linecap="round"/><path d="M1756.3 26.5h3.6M1766.7 26.5h6.6" stroke="#c41e3a" stroke-width="2.3"/><path d="M1743.2 11l6.5 8M1749.7 11l-6.5 8" stroke="#4a4a4a" stroke-width="1.9"/><ellipse cx="1766.2" cy="26" rx="3.6" ry="11.5" fill="none" stroke="#4a4a4a" stroke-width="1.9"/><path d="M1765.2 29l6 -1l-1 7z" fill="#4a4a4a"/><path d="M1813.9 7V26.3H1830.7" fill="none" stroke="#4a4a4a" stroke-width="2.3" stroke-linecap="round"/><path d="M1800.4 39L1808.9 31.5" stroke="#c41e3a" stroke-width="2.3" stroke-linecap="round"/><path d="M1820.9 11l3 4.5l3 -4.5M1823.9 15.5v4.5" fill="none" stroke="#4a4a4a" stroke-width="1.9"/><ellipse cx="1807.9" cy="31" rx="4.5" ry="11" transform="rotate(-40 1807.9 31)" fill="none" stroke="#4a4a4a" stroke-width="1.9"/><path d="M1808.4 37l7 -1l-3 5z" fill="#4a4a4a"/><path d="M1862.5 7V26.3H1879.3" fill="none" stroke="#4a4a4a" stroke-width="2.3" stroke-linecap="round"/><path d="M1849.0 39L1857.5 31.5" stroke="#c41e3a" stroke-width="2.3" stroke-linecap="round"/><path d="M1869.5 11l3 4.5l3 -4.5M1872.5 15.5v4.5" fill="none" stroke="#4a4a4a" stroke-width="1.9"/><ellipse cx="1856.5" cy="31" rx="4.5" ry="11" transform="rotate(-40 1856.5 31)" fill="none" stroke="#4a4a4a" stroke-width="1.9"/><path d="M1848.0 28l5 -3l0 7z" fill="#4a4a4a"/><ellipse cx="1920.8" cy="16.5" rx="11.5" ry="4.5" fill="none" stroke="#4a4a4a" stroke-width="1.9"/><path d="M1920.9 6.5V27" stroke="#c41e3a" stroke-width="2.3" stroke-linecap="round"/><path d="M1920.9 26.3H1937.9M1920.9 26.3L1907.2 39.3" fill="none" stroke="#4a4a4a" stroke-width="2.3" stroke-linecap="round"/><path d="M1923.3 31h6.5l-6.5 9h6.8" fill="none" stroke="#4a4a4a" stroke-width="1.9"/><path d="M1909.8 11l7 0.5l-3 5z" fill="#4a4a4a"/><ellipse cx="1969.9" cy="16.5" rx="11.5" ry="4.5" fill="none" stroke="#4a4a4a" stroke-width="1.9"/><path d="M1970.0 6.5V27" stroke="#c41e3a" stroke-width="2.3" stroke-linecap="round"/><path d="M1970.0 26.3H1987.0M1970.0 26.3L1956.3 39.3" fill="none" stroke="#4a4a4a" stroke-width="2.3" stroke-linecap="round"/><path d="M1972.4 31h6.5l-6.5 9h6.8" fill="none" stroke="#4a4a4a" stroke-width="1.9"/><path d="M1970.9 11l7 0.5l-4 5z" fill="#4a4a4a"/><path d="M2023 8.2l18 2.8v27l-18 2.5z" fill="#1a7fc6"/><path d="M2020.5 10h-5v6M2015.5 20v7M2015.5 31v7h5" fill="none" stroke="#555" stroke-width="1.6"/><path d="M2029 17a6 6 0 0 0 -1 13" fill="none" stroke="#555" stroke-width="1.4"/><path d="M2027 27.5l7 2.5l-7 2z" fill="#555"/><path d="M2070.4 24.5l13.1 -16.3v10.5h19.3v12h-19.3v10.2z" fill="#1a7fc6"/><path d="M2151.7 24.5l-13.1 -16.3v10.5h-19.3v12h19.3v10.2z" fill="#1a7fc6"/><path d="M2184.6 8.2l16.3 13.5h-10.2v19.1h-12.2v-19.1h-10.2z" fill="#1a7fc6"/><path d="M2233.6 40.8l15.4 -13h-9.5v-19.6h-12.2v19.6h-9.1z" fill="#1a7fc6"/><path d="M2291.3 6.5l16 9v18.5l-16 8.5l-16 -8.5v-18.5z" fill="#a6a6a6" stroke="#444" stroke-width="1.6" stroke-linejoin="round"/><path d="M2275.3 15.5l16 9l16 -9l-16 -9z" fill="#d0d0d0" stroke="#444" stroke-width="1.6" stroke-linejoin="round"/><path d="M2291.3 24.5v18" stroke="#444" stroke-width="1.6"/><rect x="2326.5" y="1.5" width="45" height="45" fill="#b8daf5" stroke="#1f86d6" stroke-width="1.2"/><path d="M2349 23.5l13 6.5l-13 10.5l-13 -10.5z" fill="#f39c12"/><path d="M2349 19l13 7l-13 10l-13 -10z" fill="#4a4a4a"/><path d="M2349 9l13 10l-13 10.5l-13 -10.5z" fill="#1a7fc6"/></svg>
<div class="abs" style="left:1297px;top:51px;width:1212px;height:1374px;overflow:hidden">
<svg width="1212" height="1374" viewBox="1297 51 1212 1374" style="position:absolute;left:0;top:0">
<defs><linearGradient id="bg" gradientUnits="userSpaceOnUse" x1="0" y1="51" x2="0" y2="1425"><stop offset="0" stop-color="#ccccE6"/><stop offset="1" stop-color="#666680"/></linearGradient><linearGradient id="wall" x1="0" y1="0" x2="1" y2="1"><stop offset="0" stop-color="#43392a"/><stop offset="1" stop-color="#382f22"/></linearGradient></defs>
<rect x="1297" y="51" width="1212" height="1374" fill="url(#bg)"/>
<polygon points="1174.0,922.0 2396.7,1268.0 2388.7,1273.4 1187.7,932.7" fill="#352c1f"/>
<polygon points="1599.7,72.5 2562.0,251.0 2396.7,1268.0 1174.0,922.0" fill="#203828"/>
<clipPath id="hc0"><polygon points="1661.3,152.6 1660.0,155.0 1658.3,157.4 1656.4,159.7 1654.2,161.9 1651.8,163.9 1649.1,165.7 1646.2,167.4 1643.2,168.9 1640.0,170.1 1636.7,171.1 1633.3,171.9 1629.9,172.4 1626.5,172.6 1623.1,172.6 1619.7,172.4 1616.4,171.9 1613.3,171.1 1610.3,170.2 1607.5,168.9 1604.9,167.5 1602.5,165.9 1600.4,164.0 1598.5,162.0 1597.0,159.9 1595.8,157.6 1594.8,155.2 1594.3,152.8 1594.0,150.2 1594.1,147.7 1594.5,145.1 1595.2,142.6 1596.3,140.1 1597.7,137.6 1599.3,135.3 1601.3,133.0 1603.5,130.9 1605.9,128.9 1608.6,127.1 1611.4,125.5 1614.4,124.1 1617.6,122.9 1620.8,121.9 1624.1,121.2 1627.5,120.7 1630.9,120.4 1634.2,120.4 1637.5,120.6 1640.8,121.1 1643.9,121.8 1646.8,122.8 1649.6,124.0 1652.2,125.4 1654.6,127.0 1656.7,128.7 1658.6,130.7 1660.2,132.8 1661.4,135.1 1662.4,137.4 1663.1,139.8 1663.4,142.4 1663.3,144.9 1663.0,147.5 1662.3,150.0"/></clipPath>
<polygon points="1661.3,152.6 1660.0,155.0 1658.3,157.4 1656.4,159.7 1654.2,161.9 1651.8,163.9 1649.1,165.7 1646.2,167.4 1643.2,168.9 1640.0,170.1 1636.7,171.1 1633.3,171.9 1629.9,172.4 1626.5,172.6 1623.1,172.6 1619.7,172.4 1616.4,171.9 1613.3,171.1 1610.3,170.2 1607.5,168.9 1604.9,167.5 1602.5,165.9 1600.4,164.0 1598.5,162.0 1597.0,159.9 1595.8,157.6 1594.8,155.2 1594.3,152.8 1594.0,150.2 1594.1,147.7 1594.5,145.1 1595.2,142.6 1596.3,140.1 1597.7,137.6 1599.3,135.3 1601.3,133.0 1603.5,130.9 1605.9,128.9 1608.6,127.1 1611.4,125.5 1614.4,124.1 1617.6,122.9 1620.8,121.9 1624.1,121.2 1627.5,120.7 1630.9,120.4 1634.2,120.4 1637.5,120.6 1640.8,121.1 1643.9,121.8 1646.8,122.8 1649.6,124.0 1652.2,125.4 1654.6,127.0 1656.7,128.7 1658.6,130.7 1660.2,132.8 1661.4,135.1 1662.4,137.4 1663.1,139.8 1663.4,142.4 1663.3,144.9 1663.0,147.5 1662.3,150.0" fill="url(#wall)"/>
<polygon points="1665.7,171.7 1664.3,174.1 1662.7,176.5 1660.8,178.8 1658.7,180.9 1656.3,182.9 1653.6,184.7 1650.8,186.4 1647.8,187.8 1644.7,189.0 1641.4,190.0 1638.1,190.8 1634.7,191.3 1631.3,191.6 1628.0,191.6 1624.6,191.3 1621.4,190.8 1618.3,190.1 1615.4,189.1 1612.6,187.9 1610.0,186.4 1607.7,184.8 1605.6,183.0 1603.8,181.0 1602.2,178.9 1601.0,176.6 1600.1,174.3 1599.5,171.8 1599.3,169.3 1599.3,166.8 1599.7,164.2 1600.5,161.7 1601.5,159.2 1602.9,156.8 1604.5,154.4 1606.4,152.2 1608.6,150.1 1611.0,148.2 1613.6,146.4 1616.4,144.8 1619.4,143.4 1622.5,142.2 1625.7,141.2 1628.9,140.5 1632.3,140.0 1635.6,139.7 1638.9,139.7 1642.2,139.9 1645.3,140.4 1648.4,141.1 1651.3,142.1 1654.1,143.3 1656.6,144.6 1659.0,146.2 1661.1,148.0 1662.9,149.9 1664.5,152.0 1665.8,154.3 1666.7,156.6 1667.4,159.0 1667.7,161.5 1667.7,164.1 1667.3,166.6 1666.6,169.1" fill="url(#bg)" clip-path="url(#hc0)"/>
<polygon points="1690.5,176.5 1688.2,180.8 1685.4,185.1 1682.1,189.1 1678.2,192.9 1674.0,196.5 1669.3,199.8 1664.3,202.7 1659.0,205.3 1653.4,207.5 1647.6,209.2 1641.7,210.6 1635.7,211.5 1629.6,212.0 1623.7,212.0 1617.8,211.5 1612.0,210.6 1606.5,209.3 1601.3,207.5 1596.3,205.3 1591.8,202.8 1587.6,199.9 1584.0,196.6 1580.8,193.1 1578.1,189.3 1576.0,185.3 1574.4,181.1 1573.4,176.7 1573.0,172.3 1573.2,167.8 1573.9,163.3 1575.2,158.9 1577.1,154.5 1579.5,150.2 1582.4,146.1 1585.8,142.2 1589.7,138.5 1593.9,135.1 1598.5,131.9 1603.5,129.1 1608.7,126.7 1614.1,124.6 1619.8,122.9 1625.5,121.6 1631.3,120.8 1637.2,120.3 1643.0,120.3 1648.7,120.7 1654.3,121.5 1659.7,122.8 1664.8,124.4 1669.7,126.5 1674.2,128.9 1678.4,131.7 1682.1,134.8 1685.4,138.2 1688.2,141.9 1690.4,145.8 1692.1,149.9 1693.3,154.1 1693.9,158.5 1693.9,163.0 1693.4,167.5 1692.2,172.0" fill="none" stroke="#1d3425" stroke-width="1.8"/>
<clipPath id="hc1"><polygon points="2493.5,292.7 2492.8,295.5 2491.8,298.2 2490.4,300.8 2488.6,303.2 2486.5,305.5 2484.2,307.5 2481.5,309.4 2478.6,311.0 2475.4,312.4 2472.1,313.5 2468.6,314.4 2465.0,314.9 2461.3,315.2 2457.5,315.2 2453.7,314.9 2449.9,314.3 2446.2,313.5 2442.6,312.3 2439.1,310.9 2435.8,309.3 2432.6,307.4 2429.7,305.4 2427.1,303.1 2424.7,300.7 2422.6,298.1 2420.9,295.4 2419.5,292.6 2418.4,289.8 2417.7,286.9 2417.4,284.0 2417.4,281.1 2417.8,278.3 2418.6,275.6 2419.7,272.9 2421.1,270.4 2422.9,268.0 2425.0,265.8 2427.4,263.8 2430.0,262.0 2432.9,260.4 2436.0,259.1 2439.3,258.0 2442.7,257.2 2446.3,256.6 2449.9,256.3 2453.6,256.3 2457.3,256.6 2461.0,257.2 2464.7,258.0 2468.3,259.1 2471.7,260.4 2475.0,262.0 2478.1,263.8 2481.1,265.8 2483.7,268.1 2486.1,270.4 2488.2,273.0 2490.0,275.6 2491.5,278.4 2492.6,281.2 2493.4,284.1 2493.8,287.0 2493.9,289.9"/></clipPath>
<polygon points="2493.5,292.7 2492.8,295.5 2491.8,298.2 2490.4,300.8 2488.6,303.2 2486.5,305.5 2484.2,307.5 2481.5,309.4 2478.6,311.0 2475.4,312.4 2472.1,313.5 2468.6,314.4 2465.0,314.9 2461.3,315.2 2457.5,315.2 2453.7,314.9 2449.9,314.3 2446.2,313.5 2442.6,312.3 2439.1,310.9 2435.8,309.3 2432.6,307.4 2429.7,305.4 2427.1,303.1 2424.7,300.7 2422.6,298.1 2420.9,295.4 2419.5,292.6 2418.4,289.8 2417.7,286.9 2417.4,284.0 2417.4,281.1 2417.8,278.3 2418.6,275.6 2419.7,272.9 2421.1,270.4 2422.9,268.0 2425.0,265.8 2427.4,263.8 2430.0,262.0 2432.9,260.4 2436.0,259.1 2439.3,258.0 2442.7,257.2 2446.3,256.6 2449.9,256.3 2453.6,256.3 2457.3,256.6 2461.0,257.2 2464.7,258.0 2468.3,259.1 2471.7,260.4 2475.0,262.0 2478.1,263.8 2481.1,265.8 2483.7,268.1 2486.1,270.4 2488.2,273.0 2490.0,275.6 2491.5,278.4 2492.6,281.2 2493.4,284.1 2493.8,287.0 2493.9,289.9" fill="url(#wall)"/>
<polygon points="2486.0,311.2 2485.3,314.0 2484.2,316.6 2482.8,319.2 2481.1,321.6 2479.1,323.8 2476.7,325.9 2474.1,327.7 2471.2,329.3 2468.1,330.7 2464.8,331.8 2461.4,332.6 2457.8,333.2 2454.1,333.5 2450.4,333.5 2446.7,333.2 2443.0,332.6 2439.3,331.7 2435.7,330.6 2432.3,329.2 2429.0,327.6 2426.0,325.7 2423.1,323.7 2420.5,321.4 2418.2,319.0 2416.1,316.5 2414.4,313.8 2413.0,311.0 2412.0,308.2 2411.3,305.4 2411.0,302.5 2411.0,299.7 2411.4,296.9 2412.2,294.1 2413.3,291.5 2414.7,289.0 2416.4,286.7 2418.5,284.5 2420.9,282.5 2423.5,280.7 2426.3,279.1 2429.4,277.8 2432.6,276.7 2436.0,275.9 2439.5,275.4 2443.1,275.1 2446.7,275.1 2450.4,275.4 2454.1,275.9 2457.7,276.7 2461.2,277.8 2464.6,279.2 2467.8,280.7 2470.9,282.5 2473.7,284.5 2476.4,286.7 2478.7,289.1 2480.8,291.6 2482.6,294.2 2484.0,297.0 2485.1,299.8 2485.9,302.6 2486.3,305.5 2486.3,308.4" fill="url(#bg)" clip-path="url(#hc1)"/>
<polygon points="2514.9,316.8 2513.7,321.7 2511.9,326.4 2509.4,330.9 2506.4,335.2 2502.8,339.2 2498.6,342.9 2494.0,346.2 2488.9,349.1 2483.4,351.5 2477.5,353.5 2471.4,355.0 2465.0,356.0 2458.5,356.5 2451.9,356.5 2445.2,355.9 2438.6,354.9 2432.1,353.3 2425.8,351.3 2419.7,348.8 2413.9,345.9 2408.4,342.6 2403.4,338.9 2398.8,334.9 2394.7,330.6 2391.1,326.1 2388.1,321.3 2385.7,316.5 2383.9,311.5 2382.7,306.4 2382.2,301.3 2382.3,296.3 2383.1,291.4 2384.4,286.6 2386.4,282.0 2389.0,277.6 2392.1,273.5 2395.7,269.7 2399.9,266.2 2404.5,263.0 2409.5,260.3 2414.9,258.0 2420.6,256.1 2426.5,254.7 2432.7,253.7 2439.0,253.3 2445.4,253.3 2451.8,253.8 2458.2,254.7 2464.5,256.1 2470.7,258.0 2476.7,260.4 2482.4,263.1 2487.8,266.2 2492.9,269.7 2497.5,273.6 2501.7,277.7 2505.4,282.2 2508.6,286.8 2511.2,291.6 2513.2,296.6 2514.5,301.6 2515.3,306.7 2515.4,311.7" fill="none" stroke="#1d3425" stroke-width="1.8"/>
<clipPath id="hc2"><polygon points="2386.0,1138.2 2385.0,1142.7 2383.6,1147.0 2381.7,1151.1 2379.3,1155.0 2376.6,1158.6 2373.5,1161.9 2370.0,1164.8 2366.3,1167.3 2362.2,1169.5 2358.0,1171.2 2353.5,1172.4 2348.9,1173.2 2344.1,1173.6 2339.3,1173.4 2334.6,1172.8 2329.8,1171.7 2325.1,1170.2 2320.6,1168.3 2316.3,1165.9 2312.1,1163.1 2308.2,1160.0 2304.7,1156.5 2301.4,1152.8 2298.6,1148.8 2296.1,1144.5 2294.0,1140.1 2292.4,1135.6 2291.2,1130.9 2290.4,1126.3 2290.2,1121.6 2290.4,1117.0 2291.0,1112.4 2292.1,1108.0 2293.6,1103.8 2295.6,1099.8 2298.0,1096.0 2300.7,1092.5 2303.8,1089.4 2307.2,1086.5 2311.0,1084.1 2314.9,1082.1 2319.1,1080.4 2323.5,1079.2 2328.0,1078.4 2332.6,1078.1 2337.3,1078.2 2342.0,1078.8 2346.6,1079.8 2351.2,1081.3 2355.7,1083.1 2359.9,1085.4 2364.0,1088.1 2367.9,1091.1 2371.5,1094.4 2374.7,1098.1 2377.7,1102.0 2380.2,1106.1 2382.4,1110.5 2384.1,1115.0 2385.4,1119.6 2386.3,1124.2 2386.7,1128.9 2386.6,1133.6"/></clipPath>
<polygon points="2386.0,1138.2 2385.0,1142.7 2383.6,1147.0 2381.7,1151.1 2379.3,1155.0 2376.6,1158.6 2373.5,1161.9 2370.0,1164.8 2366.3,1167.3 2362.2,1169.5 2358.0,1171.2 2353.5,1172.4 2348.9,1173.2 2344.1,1173.6 2339.3,1173.4 2334.6,1172.8 2329.8,1171.7 2325.1,1170.2 2320.6,1168.3 2316.3,1165.9 2312.1,1163.1 2308.2,1160.0 2304.7,1156.5 2301.4,1152.8 2298.6,1148.8 2296.1,1144.5 2294.0,1140.1 2292.4,1135.6 2291.2,1130.9 2290.4,1126.3 2290.2,1121.6 2290.4,1117.0 2291.0,1112.4 2292.1,1108.0 2293.6,1103.8 2295.6,1099.8 2298.0,1096.0 2300.7,1092.5 2303.8,1089.4 2307.2,1086.5 2311.0,1084.1 2314.9,1082.1 2319.1,1080.4 2323.5,1079.2 2328.0,1078.4 2332.6,1078.1 2337.3,1078.2 2342.0,1078.8 2346.6,1079.8 2351.2,1081.3 2355.7,1083.1 2359.9,1085.4 2364.0,1088.1 2367.9,1091.1 2371.5,1094.4 2374.7,1098.1 2377.7,1102.0 2380.2,1106.1 2382.4,1110.5 2384.1,1115.0 2385.4,1119.6 2386.3,1124.2 2386.7,1128.9 2386.6,1133.6" fill="url(#wall)"/>
<polygon points="2378.5,1145.8 2377.5,1150.2 2376.0,1154.5 2374.2,1158.5 2371.9,1162.3 2369.2,1165.9 2366.1,1169.1 2362.7,1172.0 2359.0,1174.5 2355.1,1176.6 2350.9,1178.2 2346.5,1179.5 2341.9,1180.3 2337.3,1180.6 2332.6,1180.5 2327.9,1179.9 2323.2,1178.8 2318.7,1177.3 2314.2,1175.4 2310.0,1173.0 2305.9,1170.3 2302.1,1167.2 2298.6,1163.8 2295.4,1160.1 2292.6,1156.2 2290.2,1152.0 2288.2,1147.7 2286.6,1143.2 2285.4,1138.7 2284.7,1134.1 2284.4,1129.5 2284.6,1124.9 2285.3,1120.5 2286.3,1116.1 2287.9,1112.0 2289.8,1108.0 2292.1,1104.3 2294.8,1100.9 2297.9,1097.8 2301.2,1095.0 2304.9,1092.6 2308.8,1090.6 2312.9,1089.0 2317.2,1087.8 2321.6,1087.0 2326.2,1086.7 2330.8,1086.8 2335.3,1087.4 2339.9,1088.4 2344.4,1089.8 2348.8,1091.7 2353.0,1093.9 2357.0,1096.5 2360.8,1099.5 2364.3,1102.8 2367.5,1106.4 2370.3,1110.2 2372.8,1114.3 2374.9,1118.6 2376.6,1123.0 2377.9,1127.5 2378.7,1132.1 2379.1,1136.7 2379.0,1141.3" fill="url(#bg)" clip-path="url(#hc2)"/>
<polygon points="2414.7,1155.7 2413.0,1163.5 2410.5,1171.1 2407.2,1178.3 2403.2,1185.1 2398.5,1191.5 2393.1,1197.2 2387.0,1202.4 2380.5,1206.9 2373.4,1210.6 2365.9,1213.6 2358.1,1215.9 2350.0,1217.3 2341.7,1217.8 2333.3,1217.6 2324.9,1216.5 2316.6,1214.6 2308.5,1211.9 2300.6,1208.4 2293.0,1204.2 2285.8,1199.3 2279.1,1193.8 2272.9,1187.7 2267.3,1181.1 2262.4,1174.1 2258.1,1166.7 2254.6,1159.0 2251.9,1151.0 2249.9,1143.0 2248.7,1134.8 2248.3,1126.7 2248.7,1118.7 2249.9,1110.8 2251.9,1103.2 2254.6,1095.9 2258.1,1089.0 2262.2,1082.6 2267.0,1076.6 2272.4,1071.2 2278.3,1066.3 2284.7,1062.1 2291.6,1058.6 2298.8,1055.8 2306.4,1053.8 2314.1,1052.4 2322.0,1051.9 2330.1,1052.1 2338.1,1053.0 2346.1,1054.8 2354.0,1057.2 2361.6,1060.4 2369.0,1064.3 2376.1,1068.9 2382.8,1074.0 2389.0,1079.8 2394.6,1086.1 2399.7,1092.8 2404.2,1100.0 2408.0,1107.5 2411.1,1115.2 2413.4,1123.2 2414.9,1131.3 2415.6,1139.5 2415.6,1147.6" fill="none" stroke="#1d3425" stroke-width="1.8"/>
<polyline points="1871.2,167.5 1932.2,178.2 1950.4,201.7 1942.9,219.9" fill="none" stroke="#2b4426" stroke-width="4.6" stroke-linejoin="round" stroke-linecap="round"/>
<polyline points="1866.9,178.2 1883.0,193.1 1878.7,210.3" fill="none" stroke="#2b4426" stroke-width="4.6" stroke-linejoin="round" stroke-linecap="round"/>
<polyline points="1910.4,261.0 1978.2,276.6 1999.6,264.8" fill="none" stroke="#2b4426" stroke-width="4.6" stroke-linejoin="round" stroke-linecap="round"/>
<polyline points="1862.7,278.7 1924.7,292.7 1950.4,324.8 1935.4,356.9" fill="none" stroke="#2b4426" stroke-width="4.6" stroke-linejoin="round" stroke-linecap="round"/>
<polyline points="1837.0,346.2 1894.8,360.1" fill="none" stroke="#2b4426" stroke-width="4.6" stroke-linejoin="round" stroke-linecap="round"/>
<polyline points="1755.6,157.8 1739.6,154.6 1717.1,164.2 1636.5,350.4 1577.2,377.0" fill="none" stroke="#2b4426" stroke-width="4.6" stroke-linejoin="round" stroke-linecap="round"/>
<polyline points="1753.5,167.5 1734.2,166.4 1646.1,374.4 1562.8,412.9 1537.2,428.9" fill="none" stroke="#2b4426" stroke-width="4.6" stroke-linejoin="round" stroke-linecap="round"/>
<polyline points="1608.3,277.1 1536.5,308.8 1527.6,318.4" fill="none" stroke="#2b4426" stroke-width="4.6" stroke-linejoin="round" stroke-linecap="round"/>
<polyline points="2209.3,264.2 2256.8,274.5 2285.1,305.3 2299.2,328.4" fill="none" stroke="#2b4426" stroke-width="4.6" stroke-linejoin="round" stroke-linecap="round"/>
<polyline points="2282.5,559.5 2300.5,464.5 2315.9,456.8 2321.0,444.0" fill="none" stroke="#2b4426" stroke-width="4.6" stroke-linejoin="round" stroke-linecap="round"/>
<polyline points="2321.0,444.0 2359.5,492.8" fill="none" stroke="#2b4426" stroke-width="4.6" stroke-linejoin="round" stroke-linecap="round"/>
<polyline points="2421.2,469.6 2431.4,482.5 2421.2,559.5" fill="none" stroke="#2b4426" stroke-width="4.6" stroke-linejoin="round" stroke-linecap="round"/>
<polyline points="2459.7,472.2 2452.0,508.2 2441.7,559.5" fill="none" stroke="#2b4426" stroke-width="4.6" stroke-linejoin="round" stroke-linecap="round"/>
<polyline points="2084.7,411.9 2074.5,446.5 2038.5,468.4" fill="none" stroke="#2b4426" stroke-width="4.6" stroke-linejoin="round" stroke-linecap="round"/>
<polyline points="2033.4,349.0 2015.4,418.3" fill="none" stroke="#2b4426" stroke-width="4.6" stroke-linejoin="round" stroke-linecap="round"/>
<polyline points="2147.7,366.9 2136.1,418.3" fill="none" stroke="#2b4426" stroke-width="4.6" stroke-linejoin="round" stroke-linecap="round"/>
<polyline points="2166.9,302.7 2179.8,328.4 2195.2,351.5 2187.5,397.7" fill="none" stroke="#2b4426" stroke-width="4.6" stroke-linejoin="round" stroke-linecap="round"/>
<polyline points="1590.9,405.7 1575.2,417.1 1555.2,459.9 1533.8,471.3" fill="none" stroke="#2b4426" stroke-width="4.6" stroke-linejoin="round" stroke-linecap="round"/>
<polyline points="1733.5,445.6 1793.4,457.0" fill="none" stroke="#2b4426" stroke-width="4.6" stroke-linejoin="round" stroke-linecap="round"/>
<polyline points="1493.9,646.8 1456.8,665.3 1439.7,661.0" fill="none" stroke="#2b4426" stroke-width="4.6" stroke-linejoin="round" stroke-linecap="round"/>
<polyline points="1465.3,622.5 1513.8,633.9" fill="none" stroke="#2b4426" stroke-width="4.6" stroke-linejoin="round" stroke-linecap="round"/>
<polyline points="1799.1,574.0 1767.8,588.3 1696.4,623.9" fill="none" stroke="#2b4426" stroke-width="4.6" stroke-linejoin="round" stroke-linecap="round"/>
<polyline points="1730.7,705.2 1764.9,682.4 1799.1,608.2" fill="none" stroke="#2b4426" stroke-width="4.6" stroke-linejoin="round" stroke-linecap="round"/>
<polyline points="1396.9,719.5 1462.5,733.8 1479.6,742.3" fill="none" stroke="#2b4426" stroke-width="4.6" stroke-linejoin="round" stroke-linecap="round"/>
<polyline points="1357.0,665.3 1456.8,497.0 1485.3,414.2" fill="none" stroke="#2b4426" stroke-width="4.6" stroke-linejoin="round" stroke-linecap="round"/>
<polyline points="1433.9,896.8 1445.3,919.6 1556.6,951.0 1613.6,922.5 1636.4,859.7 1670.7,771.3" fill="none" stroke="#2b4426" stroke-width="4.6" stroke-linejoin="round" stroke-linecap="round"/>
<polyline points="1582.2,757.0 1619.3,741.4 1647.8,749.9 1733.4,704.3" fill="none" stroke="#2b4426" stroke-width="4.6" stroke-linejoin="round" stroke-linecap="round"/>
<polyline points="1702.0,882.5 1719.1,922.5 1900.0,973.8" fill="none" stroke="#2b4426" stroke-width="4.6" stroke-linejoin="round" stroke-linecap="round"/>
<polyline points="1827.5,814.1 1900.0,799.8" fill="none" stroke="#2b4426" stroke-width="4.6" stroke-linejoin="round" stroke-linecap="round"/>
<polyline points="1782.0,896.8 1847.5,882.5" fill="none" stroke="#2b4426" stroke-width="4.6" stroke-linejoin="round" stroke-linecap="round"/>
<polyline points="1653.5,819.8 1633.6,871.1 1610.7,925.3" fill="none" stroke="#2b4426" stroke-width="4.6" stroke-linejoin="round" stroke-linecap="round"/>
<polyline points="2222.4,650.1 2290.8,626.1 2306.3,554.2 2328.5,544.0 2357.6,540.5" fill="none" stroke="#2b4426" stroke-width="4.6" stroke-linejoin="round" stroke-linecap="round"/>
<polyline points="2232.7,694.6 2304.6,657.0 2321.7,615.9 2355.9,605.6" fill="none" stroke="#2b4426" stroke-width="4.6" stroke-linejoin="round" stroke-linecap="round"/>
<polyline points="2208.7,780.2 2301.1,739.1 2331.9,663.8" fill="none" stroke="#2b4426" stroke-width="4.6" stroke-linejoin="round" stroke-linecap="round"/>
<polyline points="2092.3,732.3 2143.6,793.9 2342.2,845.3 2386.7,828.2 2400.4,739.1 2376.5,708.3" fill="none" stroke="#2b4426" stroke-width="4.6" stroke-linejoin="round" stroke-linecap="round"/>
<polyline points="2403.9,598.8 2441.5,588.5 2455.2,520.0" fill="none" stroke="#2b4426" stroke-width="4.6" stroke-linejoin="round" stroke-linecap="round"/>
<polyline points="2236.1,906.9 2242.9,876.1 2342.2,845.3" fill="none" stroke="#2b4426" stroke-width="4.6" stroke-linejoin="round" stroke-linecap="round"/>
<polyline points="2051.2,859.0 2082.0,876.1 2061.5,965.1" fill="none" stroke="#2b4426" stroke-width="4.6" stroke-linejoin="round" stroke-linecap="round"/>
<polyline points="1958.8,622.7 2003.3,687.8 1965.6,896.6" fill="none" stroke="#2b4426" stroke-width="4.6" stroke-linejoin="round" stroke-linecap="round"/>
<polygon points="1745.6,176.2 1770.8,181.1 1762.4,200.9 1737.0,195.9" fill="#b9a000"/>
<polygon points="1760.5,189.7 1759.5,191.2 1758.0,192.5 1756.0,193.3 1753.9,193.7 1751.7,193.6 1749.8,192.9 1748.3,191.8 1747.3,190.4 1747.0,188.8 1747.4,187.2 1748.4,185.6 1750.0,184.4 1751.9,183.5 1754.0,183.2 1756.2,183.3 1758.1,184.0 1759.6,185.0 1760.5,186.5 1760.9,188.1" fill="#15150a"/>
<polygon points="1753.3,222.1 1752.0,224.3 1750.2,226.3 1747.8,227.9 1745.1,229.1 1742.1,229.8 1739.1,230.1 1736.2,229.7 1733.4,228.9 1731.1,227.6 1729.2,226.0 1727.8,223.9 1727.2,221.7 1727.1,219.4 1727.8,217.1 1729.1,214.9 1731.0,213.0 1733.3,211.4 1736.0,210.2 1738.9,209.5 1741.9,209.3 1744.9,209.6 1747.6,210.4 1750.0,211.6 1751.9,213.3 1753.2,215.3 1753.9,217.5 1753.9,219.8" fill="#b9a000"/>
<polygon points="1747.1,220.9 1746.1,222.4 1744.5,223.7 1742.6,224.6 1740.4,225.0 1738.3,224.8 1736.3,224.1 1734.8,223.0 1733.8,221.6 1733.5,219.9 1733.9,218.3 1734.9,216.7 1736.5,215.4 1738.5,214.6 1740.6,214.2 1742.8,214.3 1744.7,215.0 1746.2,216.1 1747.2,217.5 1747.5,219.2" fill="#15150a"/>
<polygon points="1739.7,254.0 1738.4,256.2 1736.5,258.2 1734.1,259.9 1731.4,261.1 1728.4,261.8 1725.4,262.0 1722.4,261.7 1719.6,260.9 1717.2,259.6 1715.3,257.8 1714.0,255.8 1713.3,253.5 1713.3,251.2 1714.0,248.8 1715.3,246.6 1717.2,244.6 1719.6,243.0 1722.3,241.8 1725.3,241.0 1728.3,240.8 1731.3,241.1 1734.0,242.0 1736.4,243.3 1738.3,245.0 1739.6,247.0 1740.3,249.3 1740.4,251.6" fill="#b9a000"/>
<polygon points="1733.5,252.7 1732.5,254.3 1730.9,255.6 1728.9,256.5 1726.7,256.8 1724.5,256.7 1722.6,256.0 1721.0,254.9 1720.1,253.4 1719.8,251.7 1720.2,250.0 1721.2,248.4 1722.8,247.1 1724.8,246.2 1726.9,245.9 1729.1,246.0 1731.1,246.7 1732.6,247.8 1733.6,249.3 1733.9,251.0" fill="#15150a"/>
<polygon points="1725.8,286.5 1724.5,288.8 1722.6,290.8 1720.2,292.5 1717.4,293.7 1714.4,294.5 1711.3,294.7 1708.3,294.4 1705.5,293.5 1703.1,292.2 1701.2,290.4 1699.8,288.3 1699.2,286.0 1699.2,283.6 1699.9,281.2 1701.2,278.9 1703.1,276.9 1705.5,275.2 1708.3,274.0 1711.3,273.2 1714.4,273.0 1717.4,273.4 1720.1,274.2 1722.5,275.5 1724.5,277.3 1725.8,279.4 1726.5,281.7 1726.5,284.1" fill="#b9a000"/>
<polygon points="1719.6,285.1 1718.5,286.8 1716.9,288.1 1714.9,289.0 1712.7,289.4 1710.5,289.2 1708.5,288.5 1707.0,287.4 1706.0,285.9 1705.7,284.1 1706.1,282.4 1707.2,280.8 1708.8,279.5 1710.8,278.6 1713.0,278.2 1715.2,278.3 1717.1,279.0 1718.7,280.2 1719.6,281.7 1720.0,283.4" fill="#15150a"/>
<polygon points="1711.7,319.7 1710.3,322.0 1708.4,324.1 1705.9,325.8 1703.1,327.1 1700.1,327.8 1696.9,328.1 1693.9,327.7 1691.1,326.8 1688.7,325.5 1686.7,323.7 1685.4,321.5 1684.7,319.2 1684.8,316.7 1685.5,314.2 1686.8,311.9 1688.8,309.9 1691.2,308.2 1694.0,306.9 1697.0,306.1 1700.1,305.9 1703.2,306.2 1706.0,307.1 1708.4,308.5 1710.3,310.3 1711.7,312.4 1712.4,314.7 1712.4,317.2" fill="#b9a000"/>
<polygon points="1705.3,318.3 1704.3,320.0 1702.6,321.3 1700.6,322.2 1698.4,322.6 1696.1,322.5 1694.1,321.8 1692.6,320.6 1691.6,319.0 1691.3,317.3 1691.8,315.5 1692.8,313.8 1694.5,312.5 1696.5,311.6 1698.7,311.2 1700.9,311.3 1702.9,312.0 1704.5,313.2 1705.4,314.8 1705.7,316.5" fill="#15150a"/>
<polygon points="1697.2,353.6 1695.8,356.0 1693.8,358.1 1691.4,359.8 1688.5,361.1 1685.4,361.9 1682.3,362.1 1679.2,361.8 1676.4,360.9 1673.9,359.5 1672.0,357.6 1670.7,355.4 1670.0,353.0 1670.0,350.5 1670.8,348.0 1672.2,345.6 1674.1,343.5 1676.6,341.8 1679.4,340.5 1682.5,339.7 1685.6,339.5 1688.7,339.8 1691.5,340.7 1693.9,342.1 1695.9,344.0 1697.2,346.1 1697.9,348.5 1697.9,351.1" fill="#b9a000"/>
<polygon points="1690.8,352.2 1689.7,353.9 1688.1,355.2 1686.0,356.2 1683.7,356.6 1681.5,356.4 1679.5,355.7 1677.9,354.5 1677.0,352.9 1676.7,351.1 1677.1,349.3 1678.2,347.6 1679.9,346.2 1681.9,345.3 1684.2,344.9 1686.4,345.0 1688.4,345.8 1690.0,347.0 1690.9,348.6 1691.2,350.3" fill="#15150a"/>
<polygon points="1682.4,388.2 1681.0,390.6 1679.0,392.8 1676.5,394.6 1673.6,395.9 1670.5,396.7 1667.3,396.9 1664.2,396.6 1661.4,395.6 1658.9,394.2 1656.9,392.3 1655.6,390.1 1654.9,387.6 1655.0,385.0 1655.7,382.5 1657.1,380.0 1659.2,377.9 1661.7,376.1 1664.5,374.8 1667.6,374.0 1670.8,373.8 1673.9,374.2 1676.7,375.1 1679.2,376.5 1681.1,378.4 1682.5,380.6 1683.2,383.1 1683.1,385.6" fill="#b9a000"/>
<polygon points="1676.0,386.8 1674.9,388.5 1673.2,389.9 1671.1,390.9 1668.8,391.3 1666.5,391.1 1664.5,390.4 1662.9,389.1 1662.0,387.5 1661.7,385.7 1662.1,383.8 1663.2,382.1 1664.9,380.7 1667.0,379.7 1669.3,379.3 1671.5,379.5 1673.6,380.2 1675.1,381.5 1676.1,383.1 1676.4,384.9" fill="#15150a"/>
<polygon points="1809.3,415.6 1808.0,418.0 1806.1,420.2 1803.6,422.1 1800.7,423.4 1797.6,424.2 1794.3,424.5 1791.2,424.1 1788.2,423.1 1785.7,421.7 1783.6,419.7 1782.1,417.4 1781.4,414.9 1781.3,412.3 1782.0,409.7 1783.3,407.2 1785.3,405.0 1787.7,403.2 1790.6,401.9 1793.7,401.1 1796.9,400.8 1800.1,401.2 1803.0,402.1 1805.6,403.6 1807.6,405.5 1809.1,407.8 1809.9,410.3 1810.0,412.9" fill="#b9a000"/>
<polygon points="1802.7,414.1 1801.7,415.8 1800.0,417.3 1797.9,418.3 1795.6,418.7 1793.3,418.5 1791.2,417.7 1789.6,416.5 1788.5,414.8 1788.2,412.9 1788.5,411.0 1789.6,409.3 1791.2,407.8 1793.3,406.9 1795.6,406.4 1797.9,406.6 1800.0,407.4 1801.7,408.6 1802.7,410.3 1803.1,412.2" fill="#15150a"/>
<polygon points="1822.9,380.2 1821.6,382.6 1819.7,384.8 1817.3,386.6 1814.4,387.9 1811.3,388.7 1808.1,388.9 1805.0,388.6 1802.1,387.6 1799.5,386.2 1797.5,384.3 1796.0,382.1 1795.3,379.6 1795.2,377.0 1795.8,374.5 1797.1,372.0 1799.1,369.9 1801.5,368.1 1804.3,366.8 1807.4,366.0 1810.6,365.8 1813.7,366.2 1816.6,367.1 1819.1,368.5 1821.2,370.4 1822.7,372.6 1823.4,375.0 1823.5,377.6" fill="#b9a000"/>
<polygon points="1816.4,378.8 1815.3,380.5 1813.7,381.9 1811.7,382.8 1809.4,383.3 1807.1,383.1 1805.0,382.3 1803.4,381.1 1802.3,379.5 1802.0,377.6 1802.3,375.8 1803.4,374.1 1805.0,372.7 1807.0,371.7 1809.3,371.3 1811.6,371.5 1813.7,372.2 1815.3,373.4 1816.4,375.1 1816.7,376.9" fill="#15150a"/>
<polygon points="1836.2,345.6 1835.0,348.0 1833.1,350.1 1830.6,351.8 1827.8,353.1 1824.8,353.9 1821.6,354.1 1818.5,353.8 1815.6,352.9 1813.1,351.5 1811.1,349.6 1809.6,347.4 1808.8,345.0 1808.8,342.5 1809.4,340.0 1810.7,337.6 1812.6,335.5 1815.0,333.8 1817.8,332.5 1820.8,331.7 1824.0,331.5 1827.0,331.9 1829.9,332.8 1832.4,334.2 1834.5,336.0 1835.9,338.1 1836.7,340.6 1836.8,343.1" fill="#b9a000"/>
<polygon points="1829.7,344.2 1828.7,345.9 1827.1,347.3 1825.1,348.2 1822.8,348.6 1820.6,348.4 1818.5,347.7 1816.9,346.5 1815.8,344.9 1815.5,343.1 1815.8,341.3 1816.9,339.6 1818.5,338.2 1820.5,337.3 1822.7,336.9 1825.0,337.1 1827.0,337.8 1828.7,339.0 1829.7,340.6 1830.1,342.4" fill="#15150a"/>
<polygon points="1849.3,311.7 1848.0,314.0 1846.1,316.1 1843.8,317.8 1841.0,319.1 1838.0,319.9 1834.8,320.1 1831.7,319.8 1828.9,318.9 1826.4,317.5 1824.4,315.7 1822.9,313.6 1822.1,311.2 1822.1,308.7 1822.7,306.3 1823.9,304.0 1825.8,301.9 1828.2,300.2 1830.9,298.9 1833.9,298.2 1837.0,298.0 1840.1,298.3 1842.9,299.2 1845.4,300.5 1847.5,302.3 1848.9,304.4 1849.7,306.8 1849.8,309.3" fill="#b9a000"/>
<polygon points="1842.8,310.3 1841.8,312.0 1840.2,313.4 1838.2,314.3 1836.0,314.7 1833.8,314.5 1831.7,313.8 1830.1,312.6 1829.1,311.1 1828.7,309.3 1829.0,307.5 1830.0,305.9 1831.6,304.5 1833.6,303.6 1835.9,303.2 1838.1,303.4 1840.1,304.1 1841.7,305.3 1842.8,306.8 1843.2,308.6" fill="#15150a"/>
<polygon points="1862.0,278.6 1860.8,280.8 1858.9,282.9 1856.6,284.5 1853.8,285.8 1850.9,286.6 1847.8,286.8 1844.7,286.4 1841.9,285.6 1839.4,284.2 1837.4,282.5 1835.9,280.4 1835.2,278.1 1835.1,275.7 1835.7,273.3 1836.9,271.0 1838.7,269.0 1841.1,267.3 1843.8,266.1 1846.8,265.3 1849.9,265.1 1852.9,265.4 1855.7,266.3 1858.2,267.6 1860.2,269.4 1861.6,271.4 1862.4,273.7 1862.6,276.1" fill="#b9a000"/>
<polygon points="1855.6,277.2 1854.7,278.8 1853.1,280.2 1851.1,281.1 1848.9,281.5 1846.7,281.3 1844.7,280.6 1843.1,279.4 1842.0,277.9 1841.7,276.2 1842.0,274.5 1843.0,272.9 1844.5,271.5 1846.5,270.6 1848.7,270.2 1850.9,270.4 1852.9,271.1 1854.5,272.2 1855.6,273.8 1856.0,275.5" fill="#15150a"/>
<polygon points="1874.5,246.1 1873.3,248.3 1871.5,250.3 1869.2,252.0 1866.4,253.2 1863.5,253.9 1860.4,254.1 1857.4,253.8 1854.6,253.0 1852.1,251.7 1850.1,249.9 1848.7,247.9 1847.9,245.6 1847.8,243.3 1848.4,240.9 1849.6,238.7 1851.4,236.7 1853.7,235.1 1856.4,233.9 1859.4,233.1 1862.4,232.9 1865.4,233.2 1868.2,234.1 1870.7,235.4 1872.7,237.1 1874.1,239.1 1874.9,241.4 1875.0,243.7" fill="#b9a000"/>
<polygon points="1868.2,244.8 1867.2,246.4 1865.7,247.7 1863.7,248.5 1861.5,248.9 1859.3,248.8 1857.3,248.1 1855.7,247.0 1854.7,245.5 1854.3,243.8 1854.6,242.1 1855.6,240.5 1857.2,239.2 1859.1,238.3 1861.3,238.0 1863.5,238.1 1865.5,238.8 1867.1,239.9 1868.1,241.4 1868.5,243.1" fill="#15150a"/>
<polygon points="1886.7,214.3 1885.5,216.5 1883.7,218.4 1881.5,220.0 1878.8,221.2 1875.9,222.0 1872.8,222.2 1869.8,221.9 1867.0,221.0 1864.6,219.8 1862.6,218.1 1861.2,216.1 1860.4,213.9 1860.3,211.5 1860.8,209.2 1862.0,207.1 1863.8,205.1 1866.1,203.5 1868.8,202.3 1871.7,201.6 1874.7,201.4 1877.7,201.7 1880.4,202.5 1882.9,203.8 1884.9,205.4 1886.3,207.4 1887.1,209.6 1887.3,212.0" fill="#b9a000"/>
<polygon points="1880.5,213.0 1879.5,214.5 1878.0,215.8 1876.1,216.7 1873.9,217.1 1871.7,216.9 1869.7,216.3 1868.2,215.2 1867.1,213.7 1866.8,212.1 1867.1,210.4 1868.0,208.8 1869.5,207.6 1871.5,206.7 1873.6,206.3 1875.8,206.5 1877.8,207.1 1879.3,208.2 1880.4,209.7 1880.8,211.3" fill="#15150a"/>
<polygon points="1606.4,432.0 1633.4,438.0 1623.2,461.3 1596.1,455.2" fill="#b9a000"/>
<polygon points="1621.8,448.1 1620.6,449.9 1618.9,451.4 1616.7,452.3 1614.4,452.8 1612.1,452.6 1610.1,451.8 1608.5,450.5 1607.5,448.8 1607.3,446.9 1607.8,445.0 1608.9,443.2 1610.7,441.7 1612.8,440.8 1615.1,440.3 1617.4,440.5 1619.4,441.3 1621.0,442.6 1622.0,444.3 1622.2,446.2" fill="#15150a"/>
<polygon points="1612.3,486.4 1610.8,489.0 1608.7,491.3 1606.1,493.2 1603.1,494.6 1599.8,495.4 1596.6,495.6 1593.4,495.2 1590.5,494.2 1588.0,492.7 1586.0,490.7 1584.7,488.3 1584.1,485.7 1584.2,482.9 1585.0,480.2 1586.5,477.7 1588.6,475.4 1591.3,473.5 1594.2,472.1 1597.4,471.3 1600.7,471.1 1603.8,471.5 1606.7,472.4 1609.2,474.0 1611.2,476.0 1612.5,478.3 1613.2,480.9 1613.1,483.7" fill="#b9a000"/>
<polygon points="1605.7,484.9 1604.5,486.7 1602.8,488.2 1600.6,489.2 1598.2,489.6 1595.9,489.4 1593.8,488.6 1592.3,487.3 1591.3,485.6 1591.1,483.6 1591.6,481.6 1592.7,479.8 1594.5,478.3 1596.7,477.3 1599.0,476.9 1601.3,477.1 1603.4,477.9 1605.0,479.2 1605.9,480.9 1606.2,482.9" fill="#15150a"/>
<polygon points="1595.9,524.0 1594.4,526.6 1592.2,529.0 1589.6,530.9 1586.6,532.4 1583.3,533.2 1580.0,533.4 1576.8,533.0 1573.8,532.0 1571.3,530.4 1569.3,528.4 1568.0,525.9 1567.4,523.2 1567.5,520.4 1568.4,517.7 1569.9,515.0 1572.1,512.7 1574.7,510.8 1577.7,509.4 1581.0,508.6 1584.3,508.3 1587.5,508.7 1590.4,509.7 1592.9,511.3 1594.9,513.3 1596.2,515.7 1596.8,518.4 1596.7,521.2" fill="#b9a000"/>
<polygon points="1589.3,522.4 1588.1,524.3 1586.3,525.8 1584.1,526.9 1581.7,527.3 1579.3,527.1 1577.3,526.3 1575.7,524.9 1574.7,523.2 1574.5,521.2 1575.0,519.1 1576.2,517.3 1578.0,515.8 1580.2,514.7 1582.5,514.3 1584.9,514.5 1586.9,515.3 1588.5,516.7 1589.5,518.4 1589.8,520.4" fill="#15150a"/>
<polygon points="1579.2,562.5 1577.6,565.2 1575.4,567.6 1572.7,569.6 1569.7,571.0 1566.4,571.9 1563.0,572.1 1559.8,571.7 1556.8,570.6 1554.3,569.0 1552.3,566.9 1551.0,564.4 1550.4,561.7 1550.5,558.8 1551.4,556.0 1552.9,553.3 1555.1,550.9 1557.8,548.9 1560.9,547.5 1564.1,546.6 1567.5,546.4 1570.7,546.8 1573.6,547.9 1576.2,549.5 1578.2,551.6 1579.5,554.0 1580.1,556.8 1580.0,559.6" fill="#b9a000"/>
<polygon points="1572.4,560.9 1571.2,562.8 1569.4,564.3 1567.2,565.4 1564.8,565.8 1562.4,565.6 1560.3,564.8 1558.7,563.4 1557.7,561.6 1557.5,559.5 1558.0,557.5 1559.3,555.6 1561.1,554.0 1563.3,553.0 1565.7,552.5 1568.1,552.7 1570.1,553.6 1571.8,555.0 1572.7,556.8 1573.0,558.8" fill="#15150a"/>
<polygon points="1562.0,601.9 1560.4,604.6 1558.2,607.1 1555.5,609.1 1552.4,610.6 1549.0,611.5 1545.6,611.7 1542.4,611.2 1539.4,610.2 1536.8,608.5 1534.8,606.3 1533.5,603.8 1532.9,601.0 1533.1,598.0 1534.0,595.1 1535.6,592.4 1537.8,590.0 1540.5,588.0 1543.6,586.5 1546.9,585.6 1550.3,585.4 1553.6,585.8 1556.5,586.9 1559.1,588.5 1561.1,590.7 1562.4,593.2 1563.0,596.0 1562.9,598.9" fill="#b9a000"/>
<polygon points="1555.2,600.2 1554.0,602.1 1552.1,603.7 1549.9,604.8 1547.4,605.3 1545.1,605.0 1542.9,604.2 1541.3,602.8 1540.4,600.9 1540.1,598.8 1540.7,596.7 1541.9,594.7 1543.8,593.2 1546.0,592.1 1548.5,591.6 1550.9,591.9 1553.0,592.7 1554.6,594.1 1555.5,596.0 1555.8,598.1" fill="#15150a"/>
<polygon points="1544.5,642.1 1542.9,644.9 1540.6,647.5 1537.8,649.5 1534.7,651.0 1531.3,651.9 1527.9,652.2 1524.6,651.7 1521.5,650.6 1519.0,648.9 1517.0,646.7 1515.6,644.1 1515.1,641.2 1515.2,638.2 1516.2,635.2 1517.8,632.4 1520.1,629.9 1522.8,627.9 1526.0,626.4 1529.3,625.5 1532.7,625.3 1536.0,625.7 1539.0,626.8 1541.6,628.5 1543.6,630.7 1544.9,633.3 1545.6,636.1 1545.4,639.1" fill="#b9a000"/>
<polygon points="1537.6,640.4 1536.4,642.4 1534.5,644.0 1532.2,645.1 1529.7,645.6 1527.3,645.4 1525.2,644.5 1523.6,643.0 1522.6,641.1 1522.4,639.0 1522.9,636.8 1524.2,634.8 1526.1,633.2 1528.4,632.1 1530.8,631.7 1533.2,631.9 1535.4,632.8 1537.0,634.2 1538.0,636.1 1538.2,638.2" fill="#15150a"/>
<polygon points="1526.6,683.4 1524.9,686.2 1522.6,688.8 1519.8,690.9 1516.6,692.5 1513.2,693.4 1509.7,693.6 1506.3,693.2 1503.3,692.0 1500.7,690.3 1498.7,688.0 1497.4,685.3 1496.8,682.4 1497.0,679.3 1497.9,676.2 1499.6,673.4 1501.9,670.8 1504.7,668.7 1507.9,667.2 1511.3,666.3 1514.7,666.1 1518.1,666.5 1521.1,667.6 1523.7,669.4 1525.7,671.6 1527.0,674.3 1527.7,677.2 1527.5,680.3" fill="#b9a000"/>
<polygon points="1519.6,681.6 1518.3,683.6 1516.4,685.3 1514.1,686.4 1511.6,686.9 1509.2,686.7 1507.0,685.8 1505.4,684.3 1504.4,682.3 1504.2,680.1 1504.8,677.9 1506.1,675.9 1508.0,674.2 1510.3,673.1 1512.8,672.6 1515.2,672.9 1517.4,673.8 1519.0,675.2 1520.0,677.2 1520.2,679.4" fill="#15150a"/>
<polygon points="1663.2,717.3 1661.6,720.3 1659.4,722.9 1656.6,725.1 1653.4,726.7 1650.0,727.6 1646.4,727.8 1643.0,727.4 1639.9,726.2 1637.2,724.4 1635.0,722.1 1633.6,719.3 1632.8,716.3 1632.9,713.1 1633.8,710.0 1635.3,707.1 1637.6,704.5 1640.4,702.4 1643.5,700.8 1647.0,699.9 1650.5,699.6 1653.9,700.1 1657.0,701.2 1659.7,703.0 1661.8,705.3 1663.3,708.0 1664.1,711.1 1664.0,714.2" fill="#b9a000"/>
<polygon points="1656.1,715.5 1654.8,717.6 1653.0,719.3 1650.6,720.5 1648.1,721.0 1645.6,720.7 1643.4,719.8 1641.7,718.2 1640.6,716.3 1640.3,714.0 1640.8,711.7 1642.1,709.6 1643.9,708.0 1646.2,706.8 1648.7,706.3 1651.2,706.6 1653.5,707.5 1655.2,709.0 1656.3,711.0 1656.6,713.3" fill="#15150a"/>
<polygon points="1679.8,675.1 1678.2,678.0 1676.0,680.6 1673.3,682.7 1670.1,684.3 1666.7,685.2 1663.3,685.4 1659.9,685.0 1656.8,683.8 1654.1,682.1 1651.9,679.8 1650.5,677.1 1649.8,674.2 1649.8,671.1 1650.6,668.0 1652.2,665.2 1654.4,662.6 1657.1,660.5 1660.3,659.0 1663.6,658.1 1667.1,657.9 1670.5,658.3 1673.6,659.4 1676.2,661.2 1678.4,663.4 1679.8,666.1 1680.6,669.0 1680.6,672.1" fill="#b9a000"/>
<polygon points="1672.7,673.4 1671.5,675.4 1669.7,677.1 1667.4,678.2 1664.9,678.7 1662.4,678.5 1660.2,677.5 1658.5,676.1 1657.4,674.1 1657.1,671.9 1657.6,669.7 1658.8,667.7 1660.7,666.0 1662.9,664.9 1665.4,664.4 1667.9,664.7 1670.1,665.6 1671.8,667.0 1672.9,669.0 1673.2,671.2" fill="#15150a"/>
<polygon points="1696.0,633.9 1694.4,636.8 1692.3,639.3 1689.6,641.3 1686.5,642.9 1683.1,643.8 1679.7,644.0 1676.3,643.5 1673.2,642.4 1670.6,640.7 1668.5,638.5 1667.0,635.9 1666.3,633.0 1666.3,630.0 1667.1,627.0 1668.6,624.2 1670.8,621.8 1673.5,619.7 1676.6,618.2 1679.9,617.3 1683.3,617.1 1686.7,617.5 1689.7,618.6 1692.4,620.3 1694.5,622.5 1696.0,625.1 1696.7,627.9 1696.7,631.0" fill="#b9a000"/>
<polygon points="1689.0,632.2 1687.8,634.2 1686.0,635.9 1683.7,637.0 1681.3,637.4 1678.8,637.2 1676.6,636.3 1674.9,634.8 1673.9,633.0 1673.6,630.8 1674.0,628.6 1675.2,626.7 1677.0,625.0 1679.3,623.9 1681.7,623.5 1684.2,623.7 1686.4,624.6 1688.1,626.0 1689.1,627.9 1689.4,630.1" fill="#15150a"/>
<polygon points="1711.8,593.7 1710.3,596.4 1708.2,598.9 1705.5,600.9 1702.4,602.4 1699.1,603.3 1695.7,603.5 1692.4,603.1 1689.4,602.0 1686.7,600.3 1684.6,598.2 1683.2,595.6 1682.4,592.8 1682.4,589.9 1683.2,587.0 1684.7,584.2 1686.8,581.8 1689.5,579.8 1692.5,578.3 1695.8,577.5 1699.2,577.2 1702.5,577.7 1705.6,578.7 1708.2,580.4 1710.3,582.5 1711.8,585.0 1712.5,587.8 1712.5,590.8" fill="#b9a000"/>
<polygon points="1704.9,592.0 1703.7,594.0 1701.9,595.6 1699.7,596.6 1697.3,597.1 1694.8,596.9 1692.7,596.0 1691.0,594.6 1689.9,592.7 1689.6,590.7 1690.1,588.5 1691.2,586.6 1693.0,585.0 1695.2,583.9 1697.7,583.5 1700.1,583.7 1702.2,584.6 1703.9,586.0 1705.0,587.8 1705.3,589.9" fill="#15150a"/>
<polygon points="1727.2,554.3 1725.8,557.0 1723.7,559.4 1721.1,561.4 1718.0,562.9 1714.8,563.7 1711.4,564.0 1708.1,563.5 1705.1,562.5 1702.5,560.9 1700.4,558.8 1698.9,556.3 1698.2,553.5 1698.2,550.7 1699.0,547.8 1700.4,545.1 1702.5,542.8 1705.1,540.8 1708.1,539.4 1711.4,538.5 1714.7,538.3 1718.0,538.7 1721.0,539.7 1723.6,541.3 1725.7,543.4 1727.2,545.9 1727.9,548.6 1728.0,551.5" fill="#b9a000"/>
<polygon points="1720.4,552.7 1719.2,554.6 1717.5,556.2 1715.3,557.2 1712.9,557.7 1710.5,557.5 1708.4,556.6 1706.7,555.2 1705.6,553.4 1705.3,551.4 1705.7,549.3 1706.9,547.4 1708.6,545.9 1710.8,544.8 1713.2,544.4 1715.6,544.6 1717.8,545.4 1719.4,546.8 1720.5,548.6 1720.8,550.6" fill="#15150a"/>
<polygon points="1742.3,515.9 1740.9,518.5 1738.9,520.9 1736.3,522.8 1733.3,524.2 1730.1,525.1 1726.7,525.3 1723.5,524.9 1720.5,523.9 1717.9,522.3 1715.8,520.2 1714.4,517.8 1713.6,515.1 1713.6,512.3 1714.3,509.5 1715.8,506.9 1717.8,504.6 1720.4,502.7 1723.4,501.3 1726.6,500.4 1729.9,500.2 1733.1,500.6 1736.1,501.6 1738.7,503.2 1740.8,505.2 1742.3,507.6 1743.0,510.3 1743.0,513.1" fill="#b9a000"/>
<polygon points="1735.6,514.3 1734.4,516.2 1732.7,517.7 1730.6,518.7 1728.2,519.2 1725.8,519.0 1723.7,518.2 1722.0,516.8 1721.0,515.0 1720.6,513.0 1721.1,511.0 1722.2,509.2 1723.9,507.6 1726.1,506.6 1728.4,506.2 1730.8,506.4 1732.9,507.2 1734.6,508.5 1735.6,510.3 1736.0,512.3" fill="#15150a"/>
<polygon points="1757.1,478.3 1755.7,480.9 1753.7,483.2 1751.1,485.1 1748.2,486.5 1745.0,487.3 1741.7,487.5 1738.5,487.1 1735.5,486.1 1732.9,484.6 1730.9,482.6 1729.4,480.2 1728.7,477.6 1728.7,474.8 1729.4,472.1 1730.8,469.6 1732.8,467.3 1735.4,465.4 1738.3,464.0 1741.5,463.2 1744.7,463.0 1747.9,463.4 1750.9,464.4 1753.5,465.9 1755.5,467.9 1757.0,470.2 1757.8,472.8 1757.8,475.6" fill="#b9a000"/>
<polygon points="1750.4,476.8 1749.3,478.6 1747.6,480.1 1745.5,481.1 1743.1,481.5 1740.8,481.3 1738.7,480.5 1737.0,479.2 1736.0,477.5 1735.6,475.5 1736.0,473.6 1737.1,471.7 1738.8,470.2 1741.0,469.2 1743.3,468.8 1745.7,469.0 1747.8,469.8 1749.4,471.1 1750.5,472.8 1750.8,474.8" fill="#15150a"/>
<polygon points="1913.7,678.8 1943.9,686.1 1935.3,713.3 1904.9,706.0" fill="#b9a000"/>
<polygon points="1932.3,697.8 1931.2,699.9 1929.5,701.6 1927.2,702.8 1924.7,703.3 1922.2,703.0 1919.8,702.1 1918.0,700.6 1916.7,698.6 1916.3,696.3 1916.6,694.1 1917.7,692.0 1919.4,690.3 1921.7,689.2 1924.2,688.7 1926.7,688.9 1929.0,689.8 1930.9,691.4 1932.1,693.3 1932.6,695.6" fill="#15150a"/>
<polygon points="1953.0,657.5 1951.7,660.4 1949.7,662.9 1947.1,665.0 1944.0,666.6 1940.6,667.5 1937.1,667.7 1933.7,667.3 1930.4,666.1 1927.6,664.4 1925.3,662.1 1923.6,659.5 1922.6,656.5 1922.4,653.4 1923.0,650.4 1924.3,647.5 1926.4,645.0 1928.9,642.9 1932.0,641.4 1935.3,640.5 1938.8,640.3 1942.2,640.7 1945.5,641.8 1948.3,643.5 1950.6,645.8 1952.3,648.4 1953.3,651.4 1953.6,654.4" fill="#b9a000"/>
<polygon points="1945.8,655.7 1944.7,657.8 1943.0,659.4 1940.8,660.6 1938.3,661.0 1935.8,660.8 1933.5,659.9 1931.6,658.4 1930.4,656.5 1929.9,654.3 1930.2,652.1 1931.3,650.0 1933.0,648.4 1935.2,647.3 1937.7,646.8 1940.2,647.0 1942.5,647.9 1944.3,649.4 1945.6,651.3 1946.1,653.5" fill="#15150a"/>
<polygon points="1966.1,616.3 1964.8,619.1 1962.8,621.6 1960.2,623.7 1957.2,625.2 1953.9,626.1 1950.4,626.3 1947.0,625.9 1943.8,624.8 1941.0,623.1 1938.7,620.9 1937.0,618.3 1936.0,615.4 1935.8,612.4 1936.4,609.4 1937.7,606.6 1939.7,604.2 1942.2,602.1 1945.2,600.6 1948.5,599.7 1952.0,599.5 1955.3,599.9 1958.5,601.0 1961.4,602.7 1963.7,604.9 1965.4,607.5 1966.4,610.3 1966.6,613.3" fill="#b9a000"/>
<polygon points="1958.9,614.6 1957.8,616.6 1956.2,618.2 1954.0,619.3 1951.5,619.8 1949.0,619.5 1946.7,618.7 1944.9,617.2 1943.7,615.3 1943.2,613.2 1943.5,611.0 1944.6,609.0 1946.2,607.4 1948.4,606.3 1950.9,605.9 1953.4,606.1 1955.6,607.0 1957.5,608.4 1958.7,610.3 1959.2,612.4" fill="#15150a"/>
<polygon points="1978.8,576.1 1977.5,578.8 1975.6,581.3 1973.1,583.3 1970.1,584.8 1966.8,585.6 1963.4,585.9 1960.0,585.4 1956.8,584.4 1954.0,582.7 1951.7,580.6 1950.1,578.0 1949.1,575.2 1948.9,572.3 1949.4,569.4 1950.7,566.7 1952.7,564.2 1955.2,562.2 1958.2,560.8 1961.4,559.9 1964.8,559.7 1968.2,560.1 1971.3,561.2 1974.1,562.8 1976.4,564.9 1978.1,567.4 1979.1,570.2 1979.3,573.2" fill="#b9a000"/>
<polygon points="1971.7,574.4 1970.7,576.4 1969.0,577.9 1966.9,579.0 1964.4,579.5 1962.0,579.3 1959.7,578.4 1957.9,577.0 1956.7,575.1 1956.2,573.1 1956.5,570.9 1957.5,569.0 1959.2,567.4 1961.3,566.4 1963.8,565.9 1966.2,566.1 1968.5,567.0 1970.3,568.4 1971.5,570.2 1972.0,572.3" fill="#15150a"/>
<polygon points="1991.3,536.8 1990.0,539.4 1988.1,541.8 1985.6,543.8 1982.7,545.3 1979.4,546.1 1976.1,546.4 1972.7,545.9 1969.6,544.9 1966.8,543.3 1964.5,541.2 1962.9,538.7 1961.9,536.0 1961.7,533.1 1962.2,530.3 1963.5,527.6 1965.4,525.2 1967.9,523.3 1970.8,521.9 1974.0,521.0 1977.4,520.8 1980.7,521.2 1983.8,522.2 1986.6,523.8 1988.9,525.9 1990.5,528.3 1991.5,531.1 1991.8,533.9" fill="#b9a000"/>
<polygon points="1984.3,535.1 1983.3,537.1 1981.6,538.6 1979.5,539.7 1977.1,540.1 1974.6,539.9 1972.4,539.1 1970.6,537.7 1969.4,535.9 1968.9,533.8 1969.2,531.8 1970.2,529.9 1971.8,528.3 1974.0,527.3 1976.4,526.8 1978.8,527.1 1981.0,527.9 1982.8,529.3 1984.0,531.1 1984.5,533.1" fill="#15150a"/>
<polygon points="2003.5,498.4 2002.2,501.0 2000.3,503.3 1997.9,505.2 1995.0,506.7 1991.8,507.5 1988.4,507.7 1985.1,507.3 1982.0,506.3 1979.3,504.8 1977.0,502.7 1975.4,500.3 1974.4,497.6 1974.2,494.8 1974.7,492.0 1975.9,489.4 1977.8,487.1 1980.3,485.2 1983.1,483.8 1986.3,483.0 1989.6,482.7 1992.9,483.1 1996.0,484.1 1998.8,485.7 2001.0,487.7 2002.7,490.1 2003.7,492.8 2003.9,495.6" fill="#b9a000"/>
<polygon points="1996.5,496.8 1995.5,498.6 1993.9,500.2 1991.8,501.2 1989.4,501.6 1987.0,501.4 1984.8,500.6 1983.0,499.3 1981.8,497.5 1981.3,495.5 1981.6,493.5 1982.6,491.6 1984.2,490.1 1986.3,489.1 1988.7,488.7 1991.1,488.9 1993.3,489.7 1995.1,491.0 1996.3,492.8 1996.8,494.8" fill="#15150a"/>
<polygon points="2015.4,460.8 2014.2,463.4 2012.3,465.6 2009.9,467.5 2007.0,468.9 2003.9,469.8 2000.6,470.0 1997.3,469.6 1994.2,468.6 1991.5,467.1 1989.2,465.1 1987.6,462.7 1986.6,460.1 1986.4,457.4 1986.9,454.7 1988.1,452.1 1989.9,449.8 1992.4,448.0 1995.2,446.6 1998.4,445.8 2001.6,445.5 2004.9,445.9 2008.0,446.9 2010.7,448.4 2012.9,450.4 2014.6,452.7 2015.6,455.4 2015.8,458.1" fill="#b9a000"/>
<polygon points="2008.5,459.3 2007.5,461.1 2005.9,462.6 2003.8,463.6 2001.5,464.0 1999.1,463.8 1996.9,463.0 1995.2,461.7 1994.0,460.0 1993.5,458.1 1993.7,456.1 1994.7,454.3 1996.3,452.8 1998.4,451.8 2000.7,451.4 2003.1,451.5 2005.3,452.3 2007.0,453.6 2008.2,455.4 2008.7,457.3" fill="#15150a"/>
<polygon points="2027.0,424.1 2025.8,426.6 2024.0,428.8 2021.6,430.7 2018.8,432.0 2015.7,432.9 2012.4,433.1 2009.1,432.7 2006.1,431.7 2003.4,430.2 2001.2,428.3 1999.5,426.0 1998.6,423.4 1998.3,420.8 1998.8,418.1 2000.0,415.6 2001.8,413.4 2004.2,411.6 2007.0,410.2 2010.1,409.4 2013.4,409.2 2016.6,409.5 2019.6,410.5 2022.3,412.0 2024.6,413.9 2026.2,416.2 2027.2,418.8 2027.5,421.4" fill="#b9a000"/>
<polygon points="2020.2,422.6 2019.2,424.4 2017.7,425.8 2015.6,426.8 2013.3,427.2 2010.9,427.0 2008.8,426.3 2007.0,425.0 2005.8,423.3 2005.3,421.4 2005.6,419.5 2006.5,417.7 2008.1,416.3 2010.2,415.3 2012.5,414.9 2014.8,415.0 2017.0,415.8 2018.7,417.1 2019.9,418.8 2020.4,420.6" fill="#15150a"/>
<polygon points="1896.0,396.3 1894.8,398.8 1892.9,401.0 1890.4,402.8 1887.6,404.1 1884.5,404.9 1881.3,405.2 1878.1,404.8 1875.1,403.9 1872.5,402.4 1870.4,400.5 1868.9,398.2 1868.1,395.7 1867.9,393.1 1868.5,390.5 1869.8,388.1 1871.7,385.9 1874.1,384.1 1876.9,382.8 1880.0,382.0 1883.2,381.8 1886.4,382.1 1889.3,383.1 1891.9,384.5 1894.0,386.4 1895.6,388.6 1896.4,391.1 1896.6,393.7" fill="#b9a000"/>
<polygon points="1889.4,394.9 1888.4,396.6 1886.8,398.1 1884.7,399.0 1882.4,399.4 1880.1,399.3 1878.0,398.5 1876.3,397.2 1875.2,395.6 1874.8,393.8 1875.1,391.9 1876.1,390.1 1877.7,388.7 1879.8,387.7 1882.1,387.3 1884.4,387.5 1886.5,388.3 1888.2,389.5 1889.3,391.1 1889.7,393.0" fill="#15150a"/>
<polygon points="1883.1,432.3 1881.8,434.8 1879.9,437.0 1877.4,438.9 1874.5,440.3 1871.4,441.1 1868.1,441.3 1864.9,440.9 1861.9,440.0 1859.3,438.5 1857.2,436.5 1855.7,434.2 1854.8,431.6 1854.7,429.0 1855.3,426.3 1856.6,423.8 1858.5,421.6 1861.0,419.8 1863.8,418.4 1867.0,417.6 1870.2,417.4 1873.4,417.7 1876.4,418.7 1879.0,420.2 1881.1,422.1 1882.6,424.4 1883.5,427.0 1883.7,429.6" fill="#b9a000"/>
<polygon points="1876.4,430.8 1875.3,432.6 1873.7,434.0 1871.6,435.0 1869.3,435.4 1867.0,435.3 1864.8,434.5 1863.2,433.2 1862.0,431.5 1861.6,429.6 1862.0,427.7 1863.0,425.9 1864.6,424.5 1866.7,423.5 1869.0,423.1 1871.4,423.2 1873.5,424.0 1875.2,425.3 1876.3,427.0 1876.7,428.9" fill="#15150a"/>
<polygon points="1869.8,469.0 1868.5,471.6 1866.6,473.9 1864.1,475.8 1861.2,477.2 1858.0,478.0 1854.7,478.2 1851.5,477.8 1848.4,476.9 1845.8,475.3 1843.7,473.3 1842.1,470.9 1841.3,468.3 1841.2,465.6 1841.8,462.9 1843.1,460.3 1845.1,458.1 1847.6,456.2 1850.5,454.8 1853.6,454.0 1856.9,453.8 1860.1,454.2 1863.1,455.1 1865.7,456.6 1867.9,458.6 1869.4,461.0 1870.3,463.6 1870.4,466.3" fill="#b9a000"/>
<polygon points="1863.1,467.5 1862.0,469.3 1860.4,470.8 1858.3,471.8 1855.9,472.3 1853.5,472.1 1851.4,471.3 1849.7,469.9 1848.6,468.2 1848.2,466.3 1848.5,464.3 1849.6,462.5 1851.2,461.0 1853.3,460.0 1855.7,459.6 1858.0,459.8 1860.2,460.6 1861.9,461.9 1863.0,463.6 1863.4,465.5" fill="#15150a"/>
<polygon points="1856.3,506.6 1855.0,509.2 1853.0,511.6 1850.5,513.5 1847.5,514.9 1844.3,515.8 1841.0,516.0 1837.7,515.6 1834.6,514.6 1832.0,513.0 1829.8,511.0 1828.3,508.5 1827.4,505.9 1827.3,503.1 1828.0,500.3 1829.3,497.7 1831.3,495.4 1833.8,493.5 1836.8,492.1 1840.0,491.2 1843.3,491.0 1846.5,491.4 1849.6,492.4 1852.2,493.9 1854.4,496.0 1855.9,498.4 1856.8,501.0 1856.9,503.8" fill="#b9a000"/>
<polygon points="1849.5,505.0 1848.4,506.9 1846.7,508.4 1844.6,509.5 1842.2,509.9 1839.8,509.7 1837.7,508.9 1835.9,507.5 1834.8,505.8 1834.4,503.8 1834.8,501.8 1835.9,499.9 1837.5,498.4 1839.7,497.4 1842.0,496.9 1844.4,497.1 1846.6,497.9 1848.3,499.3 1849.4,501.0 1849.8,503.0" fill="#15150a"/>
<polygon points="1842.5,545.1 1841.1,547.7 1839.1,550.1 1836.5,552.1 1833.5,553.6 1830.3,554.4 1826.9,554.7 1823.6,554.2 1820.5,553.2 1817.8,551.6 1815.7,549.5 1814.1,547.0 1813.3,544.3 1813.2,541.4 1813.9,538.6 1815.2,535.9 1817.3,533.5 1819.8,531.6 1822.8,530.1 1826.0,529.3 1829.4,529.0 1832.6,529.5 1835.7,530.5 1838.4,532.1 1840.6,534.2 1842.1,536.6 1843.0,539.4 1843.1,542.2" fill="#b9a000"/>
<polygon points="1835.6,543.4 1834.5,545.3 1832.8,546.9 1830.6,548.0 1828.2,548.4 1825.8,548.2 1823.6,547.4 1821.9,546.0 1820.8,544.2 1820.4,542.1 1820.7,540.1 1821.8,538.2 1823.5,536.6 1825.7,535.6 1828.1,535.1 1830.5,535.3 1832.6,536.2 1834.4,537.5 1835.5,539.3 1835.9,541.4" fill="#15150a"/>
<polygon points="1828.3,584.4 1826.9,587.1 1824.9,589.6 1822.3,591.6 1819.2,593.1 1815.9,594.0 1812.5,594.2 1809.2,593.8 1806.1,592.7 1803.4,591.0 1801.2,588.9 1799.6,586.3 1798.8,583.5 1798.7,580.6 1799.4,577.7 1800.8,575.0 1802.9,572.5 1805.5,570.6 1808.5,569.1 1811.7,568.2 1815.1,568.0 1818.4,568.4 1821.5,569.5 1824.2,571.1 1826.4,573.2 1828.0,575.8 1828.9,578.6 1829.0,581.5" fill="#b9a000"/>
<polygon points="1821.3,582.7 1820.2,584.7 1818.5,586.3 1816.3,587.3 1813.9,587.8 1811.4,587.6 1809.2,586.7 1807.5,585.3 1806.4,583.5 1806.0,581.4 1806.3,579.3 1807.5,577.3 1809.2,575.7 1811.4,574.7 1813.8,574.2 1816.2,574.4 1818.4,575.3 1820.2,576.7 1821.3,578.5 1821.7,580.6" fill="#15150a"/>
<polygon points="1813.8,624.6 1812.4,627.5 1810.3,630.0 1807.7,632.0 1804.6,633.5 1801.3,634.4 1797.8,634.7 1794.4,634.2 1791.3,633.1 1788.6,631.4 1786.4,629.2 1784.8,626.6 1784.0,623.7 1783.9,620.7 1784.6,617.8 1786.0,615.0 1788.1,612.5 1790.8,610.4 1793.8,608.9 1797.1,608.1 1800.6,607.8 1803.9,608.3 1807.0,609.3 1809.8,611.0 1812.0,613.2 1813.5,615.8 1814.4,618.7 1814.5,621.7" fill="#b9a000"/>
<polygon points="1806.8,622.9 1805.6,624.9 1803.9,626.6 1801.7,627.7 1799.2,628.1 1796.7,627.9 1794.5,627.0 1792.7,625.5 1791.6,623.7 1791.2,621.5 1791.6,619.4 1792.8,617.4 1794.5,615.8 1796.7,614.7 1799.2,614.2 1801.6,614.4 1803.8,615.3 1805.6,616.8 1806.7,618.6 1807.1,620.8" fill="#15150a"/>
<polygon points="1799.0,665.8 1797.5,668.7 1795.4,671.3 1792.7,673.4 1789.6,674.9 1786.2,675.9 1782.8,676.1 1779.3,675.6 1776.2,674.5 1773.4,672.8 1771.2,670.5 1769.6,667.8 1768.8,664.9 1768.8,661.8 1769.5,658.8 1770.9,655.9 1773.1,653.4 1775.7,651.3 1778.8,649.7 1782.2,648.8 1785.6,648.6 1789.0,649.1 1792.2,650.2 1794.9,651.9 1797.2,654.1 1798.7,656.8 1799.6,659.7 1799.7,662.8" fill="#b9a000"/>
<polygon points="1791.8,664.1 1790.7,666.1 1788.9,667.8 1786.7,668.9 1784.2,669.4 1781.7,669.2 1779.4,668.2 1777.7,666.8 1776.5,664.8 1776.1,662.6 1776.6,660.4 1777.7,658.4 1779.5,656.7 1781.7,655.6 1784.2,655.1 1786.7,655.4 1788.9,656.3 1790.7,657.8 1791.9,659.7 1792.2,661.9" fill="#15150a"/>
<polygon points="2115.9,423.1 2144.6,429.1 2138.0,452.7 2109.1,446.6" fill="#b9a000"/>
<polygon points="2134.3,439.4 2133.4,441.2 2131.9,442.6 2129.9,443.6 2127.5,444.1 2125.1,443.9 2122.9,443.1 2121.1,441.8 2119.8,440.1 2119.3,438.2 2119.4,436.2 2120.3,434.4 2121.9,432.9 2123.9,431.9 2126.2,431.5 2128.6,431.7 2130.8,432.5 2132.7,433.8 2133.9,435.5 2134.5,437.4" fill="#15150a"/>
<polygon points="2130.9,478.0 2129.7,480.6 2127.9,482.9 2125.6,484.8 2122.7,486.2 2119.5,487.0 2116.2,487.3 2112.9,486.9 2109.7,485.9 2106.9,484.3 2104.6,482.3 2102.8,479.9 2101.7,477.2 2101.4,474.5 2101.8,471.7 2102.9,469.1 2104.7,466.8 2107.1,464.9 2110.0,463.5 2113.1,462.7 2116.4,462.5 2119.7,462.9 2122.9,463.9 2125.7,465.4 2128.0,467.4 2129.8,469.8 2130.9,472.4 2131.2,475.2" fill="#b9a000"/>
<polygon points="2123.9,476.4 2122.9,478.2 2121.4,479.8 2119.3,480.8 2117.0,481.2 2114.5,481.0 2112.3,480.2 2110.4,478.9 2109.2,477.1 2108.6,475.2 2108.8,473.2 2109.7,471.3 2111.3,469.8 2113.3,468.8 2115.7,468.4 2118.1,468.6 2120.3,469.4 2122.2,470.7 2123.5,472.4 2124.0,474.4" fill="#15150a"/>
<polygon points="2120.2,515.9 2119.1,518.5 2117.2,520.9 2114.8,522.9 2111.9,524.3 2108.7,525.2 2105.4,525.4 2102.0,525.0 2098.8,524.0 2096.0,522.4 2093.6,520.3 2091.8,517.8 2090.8,515.1 2090.4,512.3 2090.9,509.5 2092.0,506.8 2093.8,504.5 2096.3,502.5 2099.1,501.1 2102.3,500.3 2105.7,500.0 2109.0,500.4 2112.2,501.5 2115.0,503.0 2117.4,505.1 2119.2,507.5 2120.2,510.2 2120.6,513.1" fill="#b9a000"/>
<polygon points="2113.1,514.3 2112.2,516.2 2110.6,517.7 2108.5,518.8 2106.1,519.2 2103.7,519.0 2101.4,518.2 2099.6,516.8 2098.3,515.0 2097.7,513.0 2097.9,511.0 2098.8,509.1 2100.4,507.5 2102.5,506.5 2104.9,506.1 2107.3,506.3 2109.6,507.1 2111.5,508.5 2112.7,510.2 2113.3,512.2" fill="#15150a"/>
<polygon points="2109.3,554.7 2108.2,557.4 2106.3,559.8 2103.9,561.8 2100.9,563.3 2097.7,564.2 2094.3,564.4 2090.9,564.0 2087.6,562.9 2084.8,561.3 2082.4,559.2 2080.6,556.6 2079.5,553.9 2079.2,551.0 2079.7,548.1 2080.8,545.4 2082.7,543.0 2085.1,541.0 2088.0,539.5 2091.3,538.7 2094.7,538.5 2098.0,538.9 2101.2,539.9 2104.1,541.5 2106.5,543.6 2108.3,546.1 2109.4,548.9 2109.7,551.8" fill="#b9a000"/>
<polygon points="2102.2,553.0 2101.2,555.0 2099.6,556.6 2097.5,557.6 2095.1,558.1 2092.6,557.9 2090.3,557.0 2088.4,555.6 2087.1,553.8 2086.6,551.7 2086.8,549.6 2087.7,547.7 2089.3,546.1 2091.5,545.1 2093.9,544.6 2096.3,544.8 2098.6,545.7 2100.5,547.1 2101.8,548.9 2102.4,550.9" fill="#15150a"/>
<polygon points="2098.2,594.4 2097.0,597.2 2095.1,599.7 2092.6,601.7 2089.7,603.2 2086.4,604.1 2082.9,604.3 2079.5,603.9 2076.2,602.8 2073.3,601.1 2070.9,598.9 2069.1,596.4 2068.1,593.5 2067.7,590.5 2068.2,587.6 2069.4,584.8 2071.3,582.4 2073.8,580.4 2076.7,578.9 2080.0,578.0 2083.4,577.8 2086.8,578.2 2090.0,579.3 2092.9,580.9 2095.3,583.1 2097.1,585.6 2098.2,588.5 2098.6,591.4" fill="#b9a000"/>
<polygon points="2090.9,592.7 2090.0,594.7 2088.3,596.3 2086.2,597.4 2083.8,597.8 2081.3,597.6 2078.9,596.7 2077.0,595.3 2075.8,593.4 2075.2,591.3 2075.4,589.2 2076.4,587.2 2078.0,585.6 2080.1,584.5 2082.6,584.1 2085.1,584.3 2087.4,585.2 2089.3,586.6 2090.6,588.5 2091.1,590.6" fill="#15150a"/>
<polygon points="2086.7,635.0 2085.5,637.9 2083.6,640.4 2081.1,642.5 2078.1,644.1 2074.8,645.0 2071.3,645.2 2067.8,644.7 2064.5,643.6 2061.6,641.9 2059.2,639.7 2057.4,637.0 2056.3,634.1 2056.0,631.1 2056.5,628.0 2057.7,625.2 2059.6,622.7 2062.1,620.6 2065.1,619.1 2068.4,618.2 2071.9,618.0 2075.3,618.4 2078.6,619.5 2081.5,621.2 2083.9,623.4 2085.7,626.1 2086.9,629.0 2087.2,632.0" fill="#b9a000"/>
<polygon points="2079.4,633.3 2078.5,635.3 2076.8,637.0 2074.6,638.1 2072.2,638.6 2069.6,638.3 2067.3,637.4 2065.4,635.9 2064.1,634.0 2063.5,631.9 2063.7,629.7 2064.7,627.7 2066.4,626.0 2068.6,624.9 2071.0,624.5 2073.5,624.7 2075.9,625.6 2077.8,627.0 2079.1,628.9 2079.7,631.1" fill="#15150a"/>
<polygon points="2075.1,676.6 2073.8,679.6 2071.9,682.2 2069.3,684.3 2066.3,685.9 2062.9,686.8 2059.4,687.0 2055.9,686.6 2052.6,685.4 2049.6,683.7 2047.2,681.4 2045.3,678.6 2044.3,675.7 2044.0,672.5 2044.4,669.5 2045.7,666.6 2047.6,664.0 2050.2,661.9 2053.2,660.3 2056.6,659.4 2060.1,659.2 2063.6,659.6 2066.9,660.8 2069.8,662.5 2072.3,664.8 2074.1,667.5 2075.2,670.4 2075.5,673.6" fill="#b9a000"/>
<polygon points="2067.7,674.9 2066.7,676.9 2065.0,678.6 2062.8,679.8 2060.3,680.2 2057.7,680.0 2055.4,679.1 2053.5,677.6 2052.1,675.6 2051.6,673.4 2051.8,671.1 2052.8,669.1 2054.5,667.4 2056.7,666.3 2059.2,665.8 2061.7,666.0 2064.1,666.9 2066.0,668.4 2067.3,670.4 2067.9,672.6" fill="#15150a"/>
<polygon points="2063.1,719.3 2061.8,722.3 2059.9,724.9 2057.3,727.1 2054.2,728.7 2050.8,729.7 2047.2,729.9 2043.6,729.4 2040.3,728.2 2037.3,726.4 2034.8,724.1 2033.0,721.3 2031.9,718.2 2031.6,715.0 2032.1,711.9 2033.4,708.9 2035.4,706.3 2038.0,704.1 2041.1,702.5 2044.4,701.6 2048.0,701.3 2051.5,701.8 2054.9,703.0 2057.8,704.8 2060.3,707.1 2062.1,709.9 2063.2,712.9 2063.6,716.1" fill="#b9a000"/>
<polygon points="2055.6,717.4 2054.6,719.6 2052.9,721.3 2050.7,722.4 2048.1,722.9 2045.6,722.7 2043.2,721.7 2041.2,720.2 2039.9,718.2 2039.3,715.9 2039.6,713.6 2040.6,711.5 2042.3,709.8 2044.5,708.6 2047.1,708.1 2049.6,708.4 2052.0,709.3 2054.0,710.9 2055.3,712.9 2055.9,715.1" fill="#15150a"/>
<polygon points="2210.3,754.5 2209.1,757.6 2207.2,760.3 2204.7,762.5 2201.6,764.2 2198.2,765.1 2194.6,765.4 2190.9,764.9 2187.5,763.7 2184.3,761.8 2181.7,759.4 2179.8,756.5 2178.5,753.4 2178.1,750.1 2178.5,746.9 2179.6,743.8 2181.5,741.1 2184.1,738.9 2187.1,737.3 2190.5,736.4 2194.1,736.1 2197.8,736.6 2201.2,737.8 2204.3,739.6 2206.9,742.0 2208.9,744.9 2210.2,748.0 2210.6,751.2" fill="#b9a000"/>
<polygon points="2202.6,752.6 2201.7,754.8 2200.0,756.6 2197.8,757.7 2195.2,758.2 2192.6,758.0 2190.1,757.0 2188.1,755.4 2186.6,753.3 2186.0,751.0 2186.1,748.7 2187.1,746.5 2188.7,744.7 2191.0,743.6 2193.5,743.1 2196.1,743.3 2198.6,744.3 2200.6,745.9 2202.1,747.9 2202.8,750.3" fill="#15150a"/>
<polygon points="2220.6,710.9 2219.5,713.8 2217.7,716.5 2215.1,718.7 2212.1,720.3 2208.7,721.2 2205.1,721.5 2201.5,721.0 2198.1,719.8 2195.0,718.0 2192.4,715.7 2190.5,712.9 2189.3,709.8 2188.8,706.6 2189.2,703.5 2190.3,700.5 2192.2,697.9 2194.7,695.7 2197.7,694.1 2201.1,693.2 2204.6,692.9 2208.2,693.4 2211.6,694.6 2214.7,696.4 2217.3,698.7 2219.3,701.5 2220.5,704.5 2221.0,707.7" fill="#b9a000"/>
<polygon points="2213.1,709.0 2212.1,711.1 2210.5,712.9 2208.3,714.0 2205.8,714.5 2203.2,714.3 2200.7,713.3 2198.7,711.8 2197.3,709.8 2196.6,707.5 2196.7,705.2 2197.7,703.1 2199.3,701.4 2201.5,700.2 2204.0,699.7 2206.6,700.0 2209.1,700.9 2211.1,702.5 2212.5,704.5 2213.2,706.7" fill="#15150a"/>
<polygon points="2230.8,668.3 2229.6,671.2 2227.8,673.8 2225.3,675.9 2222.4,677.5 2219.0,678.4 2215.5,678.7 2211.9,678.2 2208.5,677.0 2205.4,675.3 2202.9,673.0 2200.9,670.3 2199.7,667.3 2199.3,664.2 2199.6,661.1 2200.7,658.2 2202.6,655.6 2205.1,653.5 2208.0,651.9 2211.4,651.0 2214.9,650.8 2218.4,651.3 2221.8,652.4 2224.8,654.1 2227.4,656.4 2229.4,659.1 2230.6,662.1 2231.1,665.2" fill="#b9a000"/>
<polygon points="2223.3,666.5 2222.3,668.6 2220.7,670.2 2218.6,671.4 2216.1,671.9 2213.5,671.6 2211.1,670.7 2209.1,669.2 2207.7,667.2 2207.0,665.0 2207.1,662.8 2208.0,660.7 2209.7,659.0 2211.8,657.9 2214.3,657.4 2216.9,657.7 2219.3,658.6 2221.3,660.1 2222.7,662.0 2223.4,664.2" fill="#15150a"/>
<polygon points="2240.6,626.7 2239.5,629.5 2237.7,632.1 2235.3,634.1 2232.3,635.7 2229.0,636.6 2225.5,636.8 2222.0,636.4 2218.7,635.3 2215.6,633.5 2213.1,631.3 2211.2,628.7 2209.9,625.7 2209.5,622.7 2209.8,619.7 2210.9,616.9 2212.8,614.4 2215.2,612.3 2218.1,610.8 2221.4,609.9 2224.9,609.6 2228.4,610.1 2231.7,611.2 2234.7,612.9 2237.3,615.1 2239.2,617.7 2240.5,620.6 2240.9,623.7" fill="#b9a000"/>
<polygon points="2233.2,624.9 2232.3,627.0 2230.7,628.6 2228.6,629.7 2226.1,630.2 2223.6,630.0 2221.2,629.1 2219.2,627.6 2217.8,625.7 2217.1,623.5 2217.2,621.3 2218.1,619.3 2219.7,617.7 2221.9,616.6 2224.3,616.1 2226.9,616.3 2229.2,617.2 2231.2,618.7 2232.6,620.6 2233.3,622.7" fill="#15150a"/>
<polygon points="2250.3,586.1 2249.2,588.8 2247.4,591.3 2245.0,593.4 2242.1,594.9 2238.8,595.8 2235.4,596.0 2231.9,595.6 2228.6,594.5 2225.6,592.8 2223.1,590.6 2221.1,588.0 2219.9,585.2 2219.5,582.2 2219.8,579.3 2220.9,576.5 2222.7,574.1 2225.1,572.0 2228.0,570.6 2231.2,569.7 2234.7,569.4 2238.1,569.9 2241.4,570.9 2244.4,572.6 2246.9,574.7 2248.8,577.3 2250.1,580.1 2250.6,583.1" fill="#b9a000"/>
<polygon points="2242.9,584.4 2242.0,586.3 2240.5,588.0 2238.4,589.0 2235.9,589.5 2233.4,589.3 2231.0,588.4 2229.1,587.0 2227.7,585.1 2227.0,583.0 2227.1,580.9 2228.0,578.9 2229.6,577.3 2231.7,576.2 2234.1,575.7 2236.6,576.0 2239.0,576.8 2241.0,578.3 2242.4,580.1 2243.0,582.2" fill="#15150a"/>
<polygon points="2259.7,546.4 2258.6,549.1 2256.9,551.5 2254.5,553.5 2251.6,555.0 2248.4,555.9 2245.0,556.1 2241.5,555.7 2238.3,554.6 2235.3,553.0 2232.8,550.9 2230.9,548.3 2229.7,545.6 2229.2,542.7 2229.5,539.8 2230.6,537.1 2232.4,534.7 2234.7,532.7 2237.6,531.3 2240.8,530.4 2244.2,530.2 2247.6,530.6 2250.9,531.6 2253.8,533.2 2256.3,535.3 2258.2,537.8 2259.5,540.6 2260.0,543.5" fill="#b9a000"/>
<polygon points="2252.4,544.7 2251.6,546.7 2250.0,548.2 2247.9,549.3 2245.5,549.8 2243.0,549.5 2240.7,548.7 2238.7,547.3 2237.3,545.5 2236.7,543.4 2236.8,541.3 2237.7,539.4 2239.2,537.8 2241.3,536.8 2243.7,536.3 2246.2,536.5 2248.5,537.4 2250.5,538.8 2251.8,540.6 2252.5,542.6" fill="#15150a"/>
<polygon points="2268.9,507.6 2267.9,510.3 2266.1,512.6 2263.8,514.6 2261.0,516.0 2257.8,516.9 2254.4,517.1 2251.0,516.7 2247.7,515.7 2244.8,514.1 2242.3,512.0 2240.4,509.5 2239.2,506.8 2238.8,504.0 2239.1,501.2 2240.1,498.6 2241.8,496.2 2244.2,494.3 2247.0,492.8 2250.2,492.0 2253.5,491.8 2256.9,492.2 2260.1,493.2 2263.1,494.8 2265.5,496.8 2267.4,499.3 2268.7,502.0 2269.2,504.8" fill="#b9a000"/>
<polygon points="2261.7,506.0 2260.8,507.9 2259.3,509.4 2257.3,510.5 2254.9,510.9 2252.4,510.7 2250.1,509.9 2248.2,508.5 2246.8,506.7 2246.1,504.7 2246.2,502.7 2247.1,500.8 2248.6,499.3 2250.7,498.2 2253.0,497.8 2255.5,498.0 2257.8,498.8 2259.7,500.2 2261.1,501.9 2261.8,504.0" fill="#15150a"/>
<polygon points="2277.9,469.7 2276.9,472.3 2275.2,474.6 2272.9,476.5 2270.1,477.9 2266.9,478.8 2263.6,479.0 2260.2,478.6 2257.0,477.6 2254.1,476.1 2251.6,474.0 2249.7,471.6 2248.5,469.0 2248.1,466.2 2248.4,463.5 2249.4,460.9 2251.1,458.6 2253.4,456.7 2256.2,455.3 2259.3,454.5 2262.6,454.2 2266.0,454.6 2269.2,455.6 2272.1,457.1 2274.5,459.2 2276.4,461.5 2277.6,464.2 2278.1,466.9" fill="#b9a000"/>
<polygon points="2270.8,468.1 2269.9,470.0 2268.4,471.5 2266.4,472.5 2264.0,473.0 2261.6,472.8 2259.3,471.9 2257.4,470.6 2256.0,468.9 2255.4,466.9 2255.5,464.9 2256.3,463.1 2257.8,461.6 2259.8,460.6 2262.2,460.1 2264.6,460.3 2266.9,461.1 2268.8,462.4 2270.2,464.2 2270.9,466.1" fill="#15150a"/>
<polygon points="1413.9,640.3 1443.0,647.5 1430.4,674.8 1401.1,667.5" fill="#b9a000"/>
<polygon points="1429.4,659.2 1428.0,661.3 1426.1,662.9 1423.8,664.0 1421.3,664.5 1418.9,664.2 1416.8,663.3 1415.2,661.9 1414.3,660.0 1414.2,657.8 1414.8,655.6 1416.1,653.6 1418.1,652.0 1420.4,650.9 1422.9,650.4 1425.3,650.6 1427.4,651.5 1428.9,653.0 1429.8,654.9 1430.0,657.0" fill="#15150a"/>
<polygon points="1455.5,620.5 1453.8,623.3 1451.4,625.9 1448.5,628.0 1445.2,629.6 1441.7,630.5 1438.2,630.7 1434.8,630.3 1431.8,629.2 1429.2,627.4 1427.2,625.2 1425.9,622.5 1425.4,619.5 1425.6,616.5 1426.7,613.4 1428.4,610.6 1430.8,608.0 1433.7,605.9 1437.0,604.4 1440.4,603.5 1443.9,603.3 1447.3,603.7 1450.3,604.8 1452.9,606.5 1454.9,608.8 1456.2,611.4 1456.8,614.3 1456.5,617.4" fill="#b9a000"/>
<polygon points="1448.3,618.7 1447.0,620.6 1445.1,622.2 1442.8,623.3 1440.3,623.8 1437.9,623.6 1435.9,622.7 1434.3,621.2 1433.4,619.4 1433.2,617.3 1433.8,615.1 1435.2,613.2 1437.1,611.6 1439.3,610.5 1441.8,610.0 1444.2,610.3 1446.2,611.1 1447.8,612.6 1448.7,614.4 1448.9,616.5" fill="#15150a"/>
<polygon points="1473.9,580.8 1472.2,583.6 1469.9,586.1 1467.0,588.1 1463.8,589.7 1460.4,590.6 1456.9,590.8 1453.5,590.4 1450.5,589.3 1447.9,587.6 1445.9,585.4 1444.6,582.8 1444.1,579.9 1444.3,576.9 1445.4,573.9 1447.1,571.1 1449.4,568.6 1452.3,566.6 1455.5,565.1 1458.9,564.2 1462.4,564.0 1465.7,564.4 1468.7,565.5 1471.3,567.1 1473.3,569.3 1474.6,571.9 1475.1,574.8 1474.9,577.8" fill="#b9a000"/>
<polygon points="1466.8,579.0 1465.5,580.9 1463.6,582.5 1461.3,583.6 1458.9,584.0 1456.6,583.8 1454.5,582.9 1452.9,581.5 1452.0,579.7 1451.9,577.7 1452.5,575.6 1453.8,573.7 1455.6,572.1 1457.9,571.0 1460.3,570.6 1462.6,570.8 1464.7,571.6 1466.3,573.0 1467.2,574.9 1467.3,576.9" fill="#15150a"/>
<polygon points="1491.9,542.0 1490.3,544.7 1488.0,547.2 1485.1,549.2 1482.0,550.7 1478.5,551.6 1475.1,551.8 1471.8,551.4 1468.8,550.3 1466.2,548.6 1464.3,546.5 1463.0,543.9 1462.4,541.1 1462.6,538.2 1463.6,535.3 1465.3,532.6 1467.6,530.1 1470.4,528.1 1473.6,526.7 1477.0,525.8 1480.4,525.6 1483.7,526.0 1486.7,527.0 1489.2,528.7 1491.2,530.8 1492.5,533.3 1493.1,536.1 1492.9,539.0" fill="#b9a000"/>
<polygon points="1484.8,540.2 1483.6,542.1 1481.7,543.7 1479.5,544.7 1477.1,545.1 1474.8,544.9 1472.7,544.1 1471.2,542.7 1470.3,541.0 1470.1,538.9 1470.7,536.9 1471.9,535.0 1473.8,533.5 1476.0,532.5 1478.4,532.0 1480.7,532.2 1482.7,533.1 1484.3,534.4 1485.2,536.2 1485.4,538.2" fill="#15150a"/>
<polygon points="1509.5,504.0 1507.9,506.7 1505.6,509.1 1502.8,511.1 1499.7,512.5 1496.3,513.4 1492.9,513.6 1489.6,513.2 1486.7,512.2 1484.1,510.6 1482.2,508.5 1480.9,506.0 1480.3,503.2 1480.5,500.4 1481.5,497.5 1483.1,494.9 1485.4,492.5 1488.2,490.5 1491.3,489.1 1494.6,488.2 1498.0,488.0 1501.3,488.4 1504.2,489.4 1506.8,491.0 1508.7,493.1 1510.1,495.6 1510.6,498.3 1510.5,501.2" fill="#b9a000"/>
<polygon points="1502.5,502.3 1501.2,504.2 1499.4,505.7 1497.2,506.7 1494.9,507.1 1492.5,506.9 1490.5,506.1 1489.0,504.8 1488.1,503.1 1487.9,501.1 1488.4,499.1 1489.7,497.3 1491.5,495.8 1493.7,494.8 1496.1,494.3 1498.4,494.5 1500.4,495.3 1501.9,496.7 1502.8,498.4 1503.0,500.3" fill="#15150a"/>
<polygon points="1526.7,466.9 1525.1,469.5 1522.9,471.9 1520.2,473.8 1517.0,475.3 1513.7,476.1 1510.3,476.3 1507.1,475.9 1504.1,474.9 1501.6,473.4 1499.7,471.3 1498.4,468.9 1497.8,466.2 1498.0,463.4 1498.9,460.6 1500.6,458.0 1502.8,455.7 1505.5,453.8 1508.6,452.3 1511.9,451.5 1515.3,451.3 1518.5,451.7 1521.4,452.7 1523.9,454.2 1525.9,456.2 1527.2,458.7 1527.8,461.3 1527.6,464.1" fill="#b9a000"/>
<polygon points="1519.7,465.3 1518.5,467.1 1516.7,468.6 1514.6,469.6 1512.2,470.0 1509.9,469.8 1507.9,469.0 1506.4,467.7 1505.5,466.0 1505.3,464.1 1505.8,462.1 1507.1,460.3 1508.8,458.9 1511.0,457.9 1513.3,457.5 1515.6,457.6 1517.6,458.4 1519.2,459.7 1520.1,461.4 1520.3,463.3" fill="#15150a"/>
<polygon points="1543.6,430.6 1542.0,433.2 1539.8,435.5 1537.1,437.4 1534.0,438.8 1530.7,439.6 1527.4,439.9 1524.2,439.5 1521.2,438.5 1518.7,436.9 1516.8,434.9 1515.5,432.6 1514.9,429.9 1515.1,427.2 1516.0,424.5 1517.6,421.9 1519.8,419.7 1522.5,417.8 1525.5,416.4 1528.8,415.6 1532.1,415.3 1535.3,415.7 1538.2,416.7 1540.7,418.2 1542.7,420.2 1544.0,422.5 1544.6,425.2 1544.4,427.9" fill="#b9a000"/>
<polygon points="1536.6,429.0 1535.4,430.8 1533.7,432.2 1531.5,433.2 1529.2,433.6 1527.0,433.4 1525.0,432.7 1523.4,431.4 1522.5,429.7 1522.3,427.9 1522.9,426.0 1524.1,424.2 1525.8,422.8 1527.9,421.8 1530.3,421.4 1532.5,421.6 1534.5,422.3 1536.0,423.6 1536.9,425.2 1537.1,427.1" fill="#15150a"/>
<polygon points="1560.0,395.1 1558.5,397.6 1556.3,399.9 1553.6,401.7 1550.6,403.1 1547.4,403.9 1544.1,404.2 1540.9,403.8 1538.0,402.8 1535.5,401.3 1533.6,399.4 1532.3,397.0 1531.7,394.5 1531.8,391.8 1532.7,389.1 1534.3,386.6 1536.4,384.4 1539.1,382.6 1542.1,381.2 1545.3,380.4 1548.6,380.2 1551.8,380.5 1554.7,381.5 1557.1,383.0 1559.1,384.9 1560.4,387.2 1561.0,389.8 1560.9,392.4" fill="#b9a000"/>
<polygon points="1553.2,393.6 1552.0,395.3 1550.3,396.7 1548.1,397.7 1545.8,398.1 1543.6,397.9 1541.6,397.1 1540.1,395.9 1539.2,394.3 1539.0,392.4 1539.5,390.6 1540.7,388.9 1542.4,387.5 1544.5,386.5 1546.8,386.1 1549.0,386.3 1551.0,387.0 1552.5,388.2 1553.4,389.9 1553.7,391.7" fill="#15150a"/>
<polygon points="2308.7,786.5 2342.6,794.6 2336.6,825.0 2302.4,816.7" fill="#b9a000"/>
<polygon points="2331.1,807.6 2330.2,809.9 2328.6,811.7 2326.3,812.9 2323.7,813.5 2321.0,813.2 2318.5,812.2 2316.3,810.5 2314.8,808.4 2314.0,806.0 2314.1,803.5 2315.0,801.3 2316.6,799.5 2318.8,798.3 2321.4,797.8 2324.1,798.0 2326.7,799.0 2328.8,800.7 2330.4,802.8 2331.1,805.2" fill="#15150a"/>
<polygon points="2348.6,764.6 2347.5,767.8 2345.6,770.6 2343.0,772.9 2339.9,774.7 2336.3,775.7 2332.5,775.9 2328.7,775.4 2325.0,774.1 2321.7,772.2 2318.8,769.7 2316.7,766.7 2315.2,763.4 2314.6,760.0 2314.9,756.6 2316.0,753.4 2317.9,750.6 2320.5,748.3 2323.6,746.6 2327.1,745.6 2330.9,745.3 2334.7,745.8 2338.4,747.1 2341.7,749.0 2344.5,751.5 2346.7,754.5 2348.2,757.7 2348.8,761.2" fill="#b9a000"/>
<polygon points="2340.1,762.5 2339.3,764.7 2337.7,766.5 2335.5,767.7 2332.9,768.2 2330.2,767.9 2327.7,766.9 2325.6,765.3 2324.0,763.2 2323.3,760.9 2323.3,758.5 2324.2,756.3 2325.8,754.6 2328.0,753.4 2330.6,752.9 2333.2,753.1 2335.8,754.1 2337.9,755.7 2339.4,757.8 2340.2,760.1" fill="#15150a"/>
<polygon points="2357.3,720.5 2356.3,723.6 2354.4,726.4 2351.9,728.7 2348.8,730.3 2345.2,731.3 2341.5,731.6 2337.7,731.1 2334.1,729.8 2330.8,727.9 2328.0,725.5 2325.8,722.6 2324.4,719.4 2323.8,716.0 2324.0,712.7 2325.1,709.6 2327.0,706.9 2329.5,704.6 2332.6,702.9 2336.1,702.0 2339.8,701.7 2343.6,702.2 2347.2,703.4 2350.5,705.3 2353.3,707.7 2355.5,710.6 2356.9,713.8 2357.5,717.1" fill="#b9a000"/>
<polygon points="2349.0,718.5 2348.1,720.6 2346.5,722.4 2344.4,723.5 2341.8,724.0 2339.2,723.8 2336.7,722.8 2334.6,721.2 2333.1,719.2 2332.3,716.9 2332.4,714.6 2333.2,712.5 2334.8,710.7 2337.0,709.6 2339.5,709.1 2342.1,709.3 2344.6,710.3 2346.7,711.8 2348.3,713.9 2349.0,716.1" fill="#15150a"/>
<polygon points="2365.9,677.4 2364.8,680.5 2363.0,683.2 2360.5,685.4 2357.4,687.1 2354.0,688.0 2350.2,688.3 2346.5,687.8 2342.9,686.6 2339.6,684.8 2336.9,682.3 2334.7,679.5 2333.3,676.4 2332.7,673.1 2333.0,669.9 2334.0,666.9 2335.8,664.2 2338.3,662.0 2341.4,660.4 2344.8,659.4 2348.5,659.1 2352.2,659.6 2355.8,660.8 2359.1,662.6 2361.8,665.0 2364.0,667.8 2365.4,670.9 2366.1,674.2" fill="#b9a000"/>
<polygon points="2357.6,675.5 2356.8,677.6 2355.2,679.3 2353.1,680.4 2350.6,680.9 2348.0,680.7 2345.5,679.7 2343.4,678.2 2341.9,676.2 2341.1,674.0 2341.2,671.7 2342.0,669.7 2343.6,668.0 2345.7,666.8 2348.2,666.3 2350.8,666.6 2353.3,667.5 2355.4,669.0 2356.9,671.0 2357.7,673.2" fill="#15150a"/>
<polygon points="2374.2,635.4 2373.2,638.4 2371.4,641.0 2368.9,643.2 2365.9,644.8 2362.5,645.8 2358.8,646.0 2355.1,645.6 2351.5,644.4 2348.3,642.6 2345.5,640.3 2343.4,637.5 2342.0,634.4 2341.4,631.3 2341.7,628.1 2342.7,625.2 2344.5,622.5 2347.0,620.4 2350.0,618.8 2353.4,617.8 2357.0,617.6 2360.7,618.1 2364.2,619.2 2367.4,621.0 2370.2,623.3 2372.3,626.0 2373.8,629.1 2374.4,632.3" fill="#b9a000"/>
<polygon points="2366.1,633.5 2365.2,635.6 2363.7,637.2 2361.6,638.4 2359.1,638.8 2356.5,638.6 2354.1,637.7 2352.0,636.2 2350.5,634.3 2349.7,632.1 2349.8,629.9 2350.6,627.9 2352.2,626.2 2354.3,625.1 2356.7,624.6 2359.3,624.8 2361.8,625.7 2363.8,627.2 2365.3,629.1 2366.1,631.3" fill="#15150a"/>
<polygon points="2382.3,594.4 2381.3,597.3 2379.6,599.9 2377.1,602.0 2374.1,603.6 2370.8,604.5 2367.1,604.8 2363.5,604.3 2360.0,603.2 2356.7,601.4 2354.0,599.2 2351.9,596.5 2350.5,593.5 2349.9,590.4 2350.2,587.3 2351.2,584.4 2352.9,581.8 2355.4,579.7 2358.4,578.2 2361.7,577.3 2365.3,577.0 2368.9,577.5 2372.4,578.6 2375.6,580.3 2378.4,582.6 2380.5,585.2 2381.9,588.2 2382.5,591.3" fill="#b9a000"/>
<polygon points="2374.3,592.6 2373.5,594.6 2372.0,596.2 2369.9,597.3 2367.4,597.7 2364.9,597.5 2362.4,596.6 2360.4,595.2 2358.9,593.3 2358.2,591.2 2358.2,589.0 2359.0,587.0 2360.5,585.4 2362.6,584.3 2365.1,583.9 2367.6,584.1 2370.0,585.0 2372.1,586.4 2373.5,588.3 2374.3,590.4" fill="#15150a"/>
<polygon points="2390.3,554.3 2389.3,557.2 2387.6,559.7 2385.2,561.8 2382.2,563.3 2378.9,564.3 2375.3,564.5 2371.7,564.1 2368.2,562.9 2365.0,561.2 2362.3,559.0 2360.2,556.4 2358.8,553.5 2358.2,550.4 2358.5,547.4 2359.5,544.6 2361.2,542.1 2363.6,540.0 2366.5,538.5 2369.9,537.6 2373.4,537.4 2377.0,537.8 2380.5,538.9 2383.6,540.6 2386.3,542.8 2388.4,545.4 2389.8,548.3 2390.5,551.3" fill="#b9a000"/>
<polygon points="2382.3,552.5 2381.5,554.5 2380.0,556.1 2378.0,557.2 2375.6,557.6 2373.0,557.4 2370.6,556.5 2368.6,555.1 2367.1,553.3 2366.4,551.2 2366.4,549.1 2367.2,547.2 2368.7,545.6 2370.8,544.5 2373.2,544.1 2375.7,544.3 2378.1,545.1 2380.1,546.5 2381.6,548.4 2382.3,550.4" fill="#15150a"/>
<polygon points="2398.0,515.2 2397.1,518.0 2395.4,520.4 2393.0,522.5 2390.1,524.0 2386.8,524.9 2383.2,525.1 2379.7,524.7 2376.2,523.6 2373.1,522.0 2370.4,519.8 2368.3,517.2 2367.0,514.4 2366.4,511.4 2366.6,508.5 2367.5,505.7 2369.3,503.3 2371.6,501.2 2374.5,499.8 2377.8,498.9 2381.3,498.6 2384.9,499.0 2388.3,500.1 2391.4,501.7 2394.1,503.9 2396.2,506.5 2397.6,509.3 2398.2,512.2" fill="#b9a000"/>
<polygon points="2390.2,513.4 2389.4,515.4 2387.9,516.9 2385.9,518.0 2383.5,518.4 2381.0,518.2 2378.6,517.4 2376.6,516.0 2375.2,514.2 2374.4,512.2 2374.4,510.1 2375.2,508.2 2376.7,506.7 2378.7,505.6 2381.1,505.2 2383.6,505.4 2386.0,506.2 2388.0,507.6 2389.4,509.4 2390.2,511.4" fill="#15150a"/>
<polygon points="1367.7,697.5 1397.0,704.9 1383.8,733.1 1354.3,725.5" fill="#b9a000"/>
<polygon points="1383.0,717.0 1381.7,719.1 1379.7,720.8 1377.3,721.9 1374.8,722.4 1372.3,722.2 1370.2,721.2 1368.6,719.7 1367.8,717.7 1367.6,715.5 1368.3,713.2 1369.7,711.2 1371.7,709.5 1374.0,708.4 1376.6,707.9 1379.0,708.1 1381.1,709.0 1382.7,710.6 1383.6,712.5 1383.7,714.8" fill="#15150a"/>
<polygon points="1370.3,762.0 1368.4,765.1 1365.8,767.9 1362.8,770.2 1359.3,771.9 1355.7,772.8 1352.0,773.1 1348.5,772.6 1345.4,771.3 1342.7,769.4 1340.7,767.0 1339.5,764.1 1339.0,760.9 1339.3,757.6 1340.5,754.3 1342.4,751.2 1344.9,748.4 1348.0,746.2 1351.4,744.5 1355.0,743.6 1358.7,743.3 1362.1,743.8 1365.3,745.0 1367.9,746.9 1369.9,749.3 1371.2,752.2 1371.7,755.4 1371.4,758.7" fill="#b9a000"/>
<polygon points="1362.8,760.0 1361.4,762.2 1359.4,763.9 1356.9,765.1 1354.4,765.6 1351.9,765.3 1349.8,764.3 1348.2,762.8 1347.3,760.8 1347.2,758.5 1347.9,756.2 1349.3,754.0 1351.3,752.3 1353.7,751.1 1356.3,750.7 1358.7,750.9 1360.9,751.9 1362.4,753.4 1363.3,755.4 1363.5,757.7" fill="#15150a"/>
<polygon points="1349.6,806.1 1347.6,809.3 1345.1,812.2 1341.9,814.5 1338.4,816.2 1334.7,817.2 1331.0,817.5 1327.5,816.9 1324.3,815.7 1321.7,813.7 1319.7,811.2 1318.4,808.2 1317.9,804.9 1318.3,801.5 1319.5,798.2 1321.4,795.0 1324.0,792.2 1327.1,789.9 1330.6,788.2 1334.3,787.2 1338.0,786.9 1341.5,787.5 1344.6,788.7 1347.3,790.6 1349.3,793.1 1350.6,796.1 1351.1,799.3 1350.7,802.8" fill="#b9a000"/>
<polygon points="1342.0,804.1 1340.6,806.3 1338.5,808.1 1336.1,809.3 1333.5,809.7 1331.0,809.5 1328.8,808.5 1327.2,806.9 1326.3,804.8 1326.3,802.5 1327.0,800.1 1328.4,797.9 1330.5,796.2 1332.9,795.0 1335.5,794.5 1338.0,794.7 1340.1,795.7 1341.7,797.3 1342.6,799.4 1342.7,801.7" fill="#15150a"/>
<polygon points="1328.4,851.4 1326.4,854.6 1323.8,857.5 1320.6,859.9 1317.0,861.7 1313.3,862.7 1309.5,862.9 1306.0,862.4 1302.8,861.1 1300.1,859.1 1298.1,856.5 1296.8,853.4 1296.4,850.1 1296.8,846.6 1298.0,843.1 1300.0,839.9 1302.6,837.0 1305.8,834.6 1309.3,832.9 1313.0,831.9 1316.7,831.7 1320.3,832.2 1323.5,833.5 1326.2,835.4 1328.2,838.0 1329.5,841.0 1329.9,844.4 1329.6,847.9" fill="#b9a000"/>
<polygon points="1320.7,849.3 1319.2,851.5 1317.2,853.3 1314.7,854.5 1312.1,855.0 1309.5,854.8 1307.4,853.8 1305.8,852.1 1304.9,850.0 1304.8,847.6 1305.5,845.1 1307.0,842.9 1309.1,841.1 1311.6,839.9 1314.2,839.4 1316.7,839.7 1318.9,840.7 1320.5,842.3 1321.4,844.4 1321.4,846.8" fill="#15150a"/>
<polygon points="1412.1,846.7 1442.9,855.0 1429.5,885.7 1398.4,877.2" fill="#b9a000"/>
<polygon points="1428.4,868.1 1427.0,870.4 1425.0,872.2 1422.5,873.5 1419.9,874.0 1417.3,873.7 1415.1,872.7 1413.4,871.0 1412.4,868.8 1412.3,866.4 1413.0,863.9 1414.4,861.7 1416.4,859.8 1418.9,858.6 1421.5,858.1 1424.1,858.4 1426.3,859.4 1428.0,861.1 1428.9,863.2 1429.1,865.6" fill="#15150a"/>
<polygon points="1483.1,882.9 1481.3,886.3 1478.7,889.2 1475.6,891.7 1472.1,893.4 1468.3,894.5 1464.5,894.7 1460.8,894.2 1457.5,892.8 1454.7,890.8 1452.5,888.1 1451.1,885.0 1450.5,881.6 1450.8,878.0 1451.9,874.5 1453.8,871.2 1456.3,868.2 1459.4,865.8 1462.9,864.1 1466.7,863.0 1470.4,862.8 1474.1,863.3 1477.4,864.6 1480.2,866.7 1482.4,869.3 1483.8,872.4 1484.4,875.8 1484.2,879.4" fill="#b9a000"/>
<polygon points="1475.3,880.8 1473.9,883.0 1471.8,884.9 1469.4,886.2 1466.7,886.7 1464.1,886.4 1461.9,885.3 1460.2,883.7 1459.2,881.5 1459.0,879.0 1459.6,876.5 1461.1,874.3 1463.1,872.4 1465.5,871.2 1468.2,870.7 1470.8,871.0 1473.0,872.0 1474.7,873.7 1475.7,875.8 1475.9,878.3" fill="#15150a"/>
<polygon points="1530.5,895.7 1528.7,899.1 1526.2,902.1 1523.0,904.5 1519.5,906.3 1515.7,907.4 1511.9,907.6 1508.2,907.1 1504.9,905.7 1502.0,903.6 1499.8,901.0 1498.3,897.8 1497.7,894.4 1497.9,890.8 1499.0,887.2 1500.8,883.8 1503.3,880.9 1506.4,878.5 1509.9,876.7 1513.7,875.6 1517.5,875.4 1521.1,875.9 1524.5,877.3 1527.3,879.3 1529.5,882.0 1531.0,885.1 1531.7,888.5 1531.5,892.1" fill="#b9a000"/>
<polygon points="1522.6,893.5 1521.2,895.8 1519.2,897.7 1516.7,899.0 1514.0,899.5 1511.4,899.2 1509.2,898.2 1507.4,896.5 1506.4,894.3 1506.2,891.8 1506.8,889.3 1508.2,887.0 1510.2,885.1 1512.7,883.9 1515.3,883.4 1517.9,883.6 1520.2,884.7 1521.9,886.4 1522.9,888.6 1523.2,891.0" fill="#15150a"/>
<polygon points="1578.3,908.6 1576.5,912.0 1574.0,915.0 1570.9,917.5 1567.4,919.3 1563.6,920.4 1559.8,920.6 1556.1,920.1 1552.7,918.7 1549.8,916.6 1547.5,913.9 1546.0,910.7 1545.3,907.3 1545.5,903.6 1546.5,900.0 1548.3,896.7 1550.8,893.7 1553.9,891.2 1557.4,889.4 1561.1,888.4 1564.9,888.1 1568.6,888.7 1572.0,890.0 1574.9,892.1 1577.2,894.8 1578.7,897.9 1579.4,901.4 1579.3,905.0" fill="#b9a000"/>
<polygon points="1570.3,906.4 1569.0,908.8 1567.0,910.6 1564.5,911.9 1561.8,912.4 1559.2,912.1 1556.9,911.1 1555.1,909.4 1554.1,907.2 1553.8,904.7 1554.4,902.1 1555.8,899.8 1557.8,897.9 1560.2,896.7 1562.9,896.2 1565.5,896.5 1567.8,897.5 1569.6,899.2 1570.6,901.4 1570.9,903.9" fill="#15150a"/>
<polygon points="2011.1,267.3 2010.1,269.3 2008.6,271.1 2006.6,272.5 2004.3,273.6 2001.7,274.3 1999.0,274.4 1996.3,274.2 1993.8,273.4 1991.6,272.3 1989.7,270.7 1988.4,268.9 1987.6,266.9 1987.4,264.8 1987.8,262.7 1988.8,260.8 1990.3,259.0 1992.3,257.6 1994.7,256.5 1997.2,255.8 1999.9,255.6 2002.6,255.9 2005.1,256.7 2007.3,257.8 2009.2,259.3 2010.5,261.1 2011.3,263.1 2011.5,265.2" fill="#b9a000"/>
<polygon points="2004.8,266.0 2004.1,267.3 2003.0,268.3 2001.5,269.0 1999.8,269.3 1998.0,269.2 1996.4,268.6 1995.1,267.7 1994.3,266.6 1993.9,265.3 1994.1,263.9 1994.8,262.7 1996.0,261.6 1997.5,260.9 1999.2,260.6 2000.9,260.8 2002.5,261.3 2003.8,262.2 2004.7,263.3 2005.0,264.7" fill="#15150a"/>
<polygon points="2138.8,292.5 2137.9,294.5 2136.4,296.3 2134.5,297.8 2132.1,298.9 2129.5,299.5 2126.8,299.7 2124.1,299.4 2121.5,298.7 2119.1,297.5 2117.2,295.9 2115.8,294.1 2114.9,292.0 2114.6,289.9 2114.9,287.8 2115.9,285.7 2117.3,284.0 2119.3,282.5 2121.6,281.4 2124.2,280.7 2126.9,280.5 2129.6,280.8 2132.2,281.6 2134.5,282.8 2136.5,284.3 2137.9,286.1 2138.8,288.2 2139.1,290.3" fill="#b9a000"/>
<polygon points="2132.4,291.1 2131.7,292.4 2130.6,293.4 2129.1,294.2 2127.3,294.5 2125.6,294.3 2123.9,293.8 2122.6,292.9 2121.6,291.7 2121.2,290.3 2121.4,289.0 2122.0,287.7 2123.2,286.6 2124.7,285.9 2126.4,285.6 2128.1,285.8 2129.8,286.3 2131.1,287.2 2132.1,288.4 2132.5,289.7" fill="#15150a"/>
<polygon points="2178.8,300.3 2177.9,302.4 2176.4,304.2 2174.5,305.7 2172.1,306.8 2169.5,307.4 2166.8,307.6 2164.0,307.3 2161.4,306.6 2159.1,305.4 2157.1,303.8 2155.6,301.9 2154.7,299.9 2154.4,297.7 2154.7,295.6 2155.6,293.6 2157.1,291.8 2159.0,290.3 2161.3,289.2 2163.9,288.5 2166.6,288.3 2169.4,288.6 2172.0,289.4 2174.3,290.6 2176.3,292.1 2177.8,294.0 2178.7,296.0 2179.0,298.2" fill="#b9a000"/>
<polygon points="2172.3,299.0 2171.6,300.3 2170.5,301.3 2169.0,302.0 2167.3,302.3 2165.5,302.2 2163.8,301.7 2162.5,300.7 2161.5,299.5 2161.1,298.2 2161.2,296.8 2161.8,295.5 2163.0,294.5 2164.5,293.8 2166.2,293.5 2168.0,293.6 2169.6,294.1 2171.0,295.0 2171.9,296.2 2172.4,297.6" fill="#15150a"/>
<polygon points="2310.4,326.2 2309.5,328.3 2308.1,330.2 2306.2,331.7 2303.9,332.8 2301.3,333.5 2298.5,333.7 2295.7,333.4 2293.0,332.6 2290.6,331.4 2288.5,329.8 2286.9,327.9 2285.9,325.8 2285.5,323.6 2285.7,321.4 2286.5,319.3 2287.9,317.5 2289.8,316.0 2292.1,314.8 2294.8,314.2 2297.5,314.0 2300.3,314.3 2303.0,315.1 2305.4,316.3 2307.5,317.9 2309.1,319.7 2310.1,321.8 2310.6,324.0" fill="#b9a000"/>
<polygon points="2303.7,324.9 2303.1,326.2 2302.0,327.3 2300.5,328.0 2298.8,328.3 2297.0,328.2 2295.3,327.6 2293.8,326.7 2292.8,325.4 2292.3,324.0 2292.3,322.6 2293.0,321.3 2294.1,320.3 2295.5,319.5 2297.3,319.2 2299.1,319.3 2300.8,319.9 2302.2,320.8 2303.2,322.1 2303.8,323.5" fill="#15150a"/>
<polygon points="2000.1,300.0 1999.1,302.0 1997.5,303.8 1995.5,305.3 1993.2,306.4 1990.5,307.1 1987.8,307.3 1985.1,307.0 1982.6,306.2 1980.3,305.0 1978.5,303.5 1977.1,301.6 1976.3,299.6 1976.1,297.4 1976.6,295.3 1977.6,293.3 1979.1,291.5 1981.1,290.0 1983.5,288.9 1986.1,288.3 1988.8,288.1 1991.5,288.3 1994.0,289.1 1996.3,290.3 1998.1,291.8 1999.5,293.7 2000.3,295.7 2000.5,297.9" fill="#b9a000"/>
<polygon points="1993.7,298.7 1993.0,299.9 1991.8,301.0 1990.3,301.7 1988.6,302.0 1986.8,301.9 1985.2,301.3 1983.9,300.4 1983.1,299.2 1982.7,297.9 1982.9,296.5 1983.6,295.2 1984.8,294.2 1986.3,293.5 1988.0,293.2 1989.8,293.3 1991.4,293.8 1992.7,294.7 1993.6,295.9 1993.9,297.3" fill="#15150a"/>
<polygon points="2129.0,325.8 2128.0,327.9 2126.6,329.7 2124.6,331.2 2122.2,332.4 2119.6,333.0 2116.8,333.2 2114.1,332.9 2111.4,332.1 2109.1,330.9 2107.2,329.3 2105.7,327.4 2104.8,325.3 2104.5,323.2 2104.9,321.0 2105.8,318.9 2107.3,317.1 2109.3,315.6 2111.6,314.5 2114.2,313.8 2117.0,313.6 2119.7,313.9 2122.3,314.7 2124.7,315.9 2126.6,317.5 2128.1,319.4 2129.0,321.4 2129.3,323.6" fill="#b9a000"/>
<polygon points="2122.5,324.4 2121.8,325.7 2120.6,326.8 2119.1,327.5 2117.4,327.9 2115.6,327.7 2113.9,327.2 2112.6,326.2 2111.6,325.0 2111.2,323.6 2111.4,322.2 2112.0,320.9 2113.2,319.9 2114.7,319.1 2116.4,318.8 2118.2,319.0 2119.9,319.5 2121.2,320.4 2122.2,321.7 2122.6,323.0" fill="#15150a"/>
<polygon points="2169.3,333.9 2168.4,336.0 2166.9,337.8 2165.0,339.3 2162.6,340.5 2160.0,341.2 2157.2,341.4 2154.4,341.0 2151.8,340.3 2149.4,339.0 2147.4,337.4 2145.9,335.5 2145.0,333.4 2144.7,331.2 2145.0,329.0 2145.9,327.0 2147.4,325.1 2149.4,323.6 2151.7,322.5 2154.3,321.8 2157.1,321.6 2159.9,321.9 2162.5,322.7 2164.9,323.9 2166.8,325.5 2168.3,327.4 2169.3,329.5 2169.6,331.7" fill="#b9a000"/>
<polygon points="2162.8,332.5 2162.1,333.8 2161.0,334.9 2159.4,335.6 2157.7,335.9 2155.9,335.8 2154.2,335.2 2152.8,334.3 2151.9,333.1 2151.4,331.7 2151.6,330.3 2152.2,329.0 2153.4,327.9 2154.9,327.2 2156.6,326.9 2158.4,327.0 2160.1,327.6 2161.5,328.5 2162.4,329.7 2162.9,331.1" fill="#15150a"/>
<polygon points="2302.2,360.5 2301.4,362.6 2300.0,364.5 2298.0,366.1 2295.7,367.2 2293.0,367.9 2290.2,368.1 2287.4,367.8 2284.7,367.0 2282.2,365.7 2280.1,364.1 2278.5,362.2 2277.5,360.0 2277.1,357.8 2277.3,355.5 2278.1,353.4 2279.6,351.5 2281.5,350.0 2283.8,348.8 2286.5,348.2 2289.3,348.0 2292.1,348.3 2294.8,349.1 2297.3,350.3 2299.3,351.9 2300.9,353.9 2302.0,356.0 2302.4,358.3" fill="#b9a000"/>
<polygon points="2295.5,359.1 2294.9,360.4 2293.8,361.5 2292.3,362.3 2290.5,362.6 2288.7,362.5 2286.9,361.9 2285.5,360.9 2284.5,359.7 2284.0,358.3 2284.0,356.8 2284.6,355.5 2285.8,354.4 2287.3,353.6 2289.0,353.3 2290.8,353.5 2292.6,354.0 2294.0,355.0 2295.0,356.2 2295.6,357.7" fill="#15150a"/>
<polygon points="1988.8,333.3 1987.8,335.4 1986.2,337.2 1984.2,338.7 1981.8,339.8 1979.2,340.5 1976.4,340.7 1973.7,340.4 1971.1,339.6 1968.8,338.4 1967.0,336.8 1965.6,334.9 1964.8,332.8 1964.6,330.6 1965.1,328.5 1966.1,326.4 1967.7,324.6 1969.7,323.1 1972.1,322.0 1974.7,321.3 1977.5,321.1 1980.2,321.4 1982.7,322.2 1985.0,323.4 1986.9,325.0 1988.2,326.8 1989.0,328.9 1989.2,331.1" fill="#b9a000"/>
<polygon points="1982.4,331.9 1981.7,333.2 1980.5,334.3 1978.9,335.0 1977.2,335.3 1975.4,335.2 1973.8,334.6 1972.5,333.7 1971.6,332.5 1971.3,331.1 1971.5,329.7 1972.2,328.4 1973.4,327.3 1974.9,326.6 1976.7,326.3 1978.4,326.4 1980.1,327.0 1981.4,327.9 1982.2,329.1 1982.6,330.5" fill="#15150a"/>
<polygon points="2118.9,359.8 2118.0,361.9 2116.5,363.8 2114.5,365.3 2112.1,366.5 2109.4,367.2 2106.6,367.4 2103.9,367.1 2101.2,366.3 2098.8,365.0 2096.9,363.4 2095.4,361.4 2094.5,359.3 2094.3,357.1 2094.6,354.8 2095.6,352.8 2097.1,350.9 2099.1,349.4 2101.5,348.2 2104.1,347.5 2106.9,347.3 2109.7,347.6 2112.3,348.4 2114.6,349.7 2116.6,351.3 2118.1,353.2 2119.0,355.3 2119.3,357.6" fill="#b9a000"/>
<polygon points="2112.4,358.4 2111.7,359.7 2110.5,360.8 2109.0,361.6 2107.2,361.9 2105.4,361.7 2103.8,361.2 2102.4,360.2 2101.4,359.0 2101.0,357.6 2101.2,356.1 2101.8,354.8 2103.0,353.7 2104.6,353.0 2106.3,352.7 2108.1,352.8 2109.8,353.4 2111.1,354.3 2112.1,355.6 2112.5,357.0" fill="#15150a"/>
<polygon points="2159.7,368.1 2158.8,370.2 2157.3,372.1 2155.3,373.7 2152.9,374.8 2150.2,375.5 2147.4,375.7 2144.6,375.4 2141.9,374.6 2139.5,373.3 2137.6,371.7 2136.1,369.7 2135.1,367.6 2134.8,365.3 2135.1,363.1 2136.1,361.0 2137.6,359.1 2139.6,357.6 2142.0,356.4 2144.6,355.7 2147.4,355.6 2150.2,355.9 2152.8,356.7 2155.2,357.9 2157.2,359.5 2158.7,361.5 2159.7,363.6 2160.0,365.9" fill="#b9a000"/>
<polygon points="2153.1,366.7 2152.4,368.0 2151.2,369.1 2149.7,369.9 2147.9,370.2 2146.1,370.1 2144.4,369.5 2143.0,368.5 2142.1,367.3 2141.6,365.8 2141.8,364.4 2142.4,363.1 2143.6,362.0 2145.1,361.2 2146.9,360.9 2148.7,361.0 2150.4,361.6 2151.8,362.6 2152.7,363.8 2153.2,365.2" fill="#15150a"/>
<polygon points="2293.9,395.4 2293.1,397.6 2291.6,399.5 2289.7,401.1 2287.3,402.3 2284.6,403.0 2281.8,403.2 2278.9,402.9 2276.1,402.1 2273.7,400.8 2271.6,399.1 2270.0,397.1 2268.9,394.9 2268.5,392.6 2268.7,390.3 2269.6,388.2 2271.0,386.3 2273.0,384.7 2275.4,383.5 2278.0,382.8 2280.9,382.6 2283.7,382.9 2286.4,383.7 2288.9,385.0 2291.0,386.7 2292.6,388.7 2293.7,390.9 2294.1,393.2" fill="#b9a000"/>
<polygon points="2287.1,394.0 2286.5,395.4 2285.4,396.5 2283.8,397.3 2282.1,397.6 2280.2,397.4 2278.5,396.8 2277.0,395.9 2276.0,394.6 2275.5,393.1 2275.5,391.6 2276.2,390.3 2277.3,389.2 2278.8,388.4 2280.6,388.1 2282.4,388.2 2284.2,388.8 2285.6,389.8 2286.7,391.1 2287.2,392.5" fill="#15150a"/>
<polygon points="2356.9,338.2 2356.1,340.3 2354.7,342.1 2352.8,343.7 2350.5,344.8 2347.8,345.5 2345.0,345.7 2342.2,345.4 2339.5,344.6 2337.0,343.4 2334.9,341.8 2333.3,339.8 2332.2,337.7 2331.8,335.5 2332.0,333.3 2332.8,331.2 2334.2,329.3 2336.1,327.8 2338.4,326.7 2341.0,326.0 2343.8,325.8 2346.6,326.1 2349.3,326.9 2351.8,328.1 2353.9,329.7 2355.5,331.6 2356.6,333.8 2357.0,336.0" fill="#b9a000"/>
<polygon points="2350.2,336.8 2349.6,338.1 2348.5,339.2 2347.0,339.9 2345.2,340.3 2343.4,340.1 2341.7,339.6 2340.2,338.6 2339.2,337.4 2338.7,336.0 2338.7,334.5 2339.3,333.2 2340.4,332.1 2341.9,331.4 2343.6,331.1 2345.4,331.2 2347.1,331.8 2348.6,332.7 2349.7,334.0 2350.2,335.4" fill="#15150a"/>
<polygon points="2332.9,446.1 2332.0,448.4 2330.6,450.3 2328.6,452.0 2326.2,453.2 2323.5,453.9 2320.6,454.1 2317.7,453.8 2314.9,452.9 2312.3,451.6 2310.2,449.9 2308.5,447.8 2307.4,445.5 2307.0,443.1 2307.2,440.8 2308.0,438.6 2309.5,436.6 2311.5,435.0 2313.9,433.8 2316.6,433.0 2319.4,432.8 2322.3,433.2 2325.1,434.0 2327.7,435.3 2329.8,437.1 2331.5,439.1 2332.6,441.4 2333.1,443.8" fill="#b9a000"/>
<polygon points="2326.0,444.6 2325.3,446.0 2324.2,447.2 2322.6,448.0 2320.8,448.3 2319.0,448.2 2317.2,447.5 2315.7,446.5 2314.6,445.2 2314.1,443.7 2314.1,442.2 2314.7,440.8 2315.9,439.6 2317.4,438.8 2319.2,438.5 2321.1,438.7 2322.9,439.3 2324.4,440.3 2325.4,441.6 2326.0,443.1" fill="#15150a"/>
<polygon points="2400.9,346.9 2400.1,349.0 2398.7,350.8 2396.8,352.4 2394.5,353.5 2391.9,354.2 2389.1,354.4 2386.2,354.1 2383.5,353.3 2381.0,352.1 2378.8,350.4 2377.2,348.5 2376.1,346.4 2375.6,344.1 2375.8,341.9 2376.5,339.8 2377.9,338.0 2379.8,336.4 2382.1,335.3 2384.7,334.6 2387.5,334.4 2390.3,334.7 2393.1,335.5 2395.6,336.7 2397.7,338.3 2399.4,340.3 2400.5,342.4 2401.0,344.6" fill="#b9a000"/>
<polygon points="2394.1,345.5 2393.5,346.8 2392.4,347.9 2390.9,348.6 2389.2,348.9 2387.4,348.8 2385.6,348.2 2384.1,347.3 2383.1,346.0 2382.5,344.6 2382.5,343.2 2383.1,341.9 2384.2,340.8 2385.7,340.0 2387.4,339.7 2389.3,339.9 2391.0,340.4 2392.5,341.4 2393.5,342.6 2394.1,344.0" fill="#15150a"/>
<polygon points="2378.3,455.6 2377.4,457.8 2376.0,459.8 2374.1,461.5 2371.7,462.7 2368.9,463.4 2366.0,463.6 2363.1,463.3 2360.2,462.4 2357.7,461.1 2355.5,459.3 2353.8,457.2 2352.7,454.9 2352.2,452.5 2352.4,450.2 2353.2,447.9 2354.6,445.9 2356.6,444.3 2359.0,443.1 2361.7,442.4 2364.6,442.2 2367.5,442.5 2370.3,443.4 2372.9,444.7 2375.1,446.4 2376.8,448.5 2377.9,450.8 2378.4,453.2" fill="#b9a000"/>
<polygon points="2371.3,454.0 2370.7,455.5 2369.5,456.6 2368.0,457.4 2366.2,457.7 2364.3,457.6 2362.5,457.0 2361.0,456.0 2359.9,454.6 2359.3,453.1 2359.3,451.6 2359.9,450.1 2361.1,449.0 2362.6,448.2 2364.4,447.9 2366.3,448.0 2368.1,448.6 2369.6,449.7 2370.7,451.0 2371.3,452.5" fill="#15150a"/>
<polygon points="2445.6,355.7 2444.8,357.8 2443.5,359.7 2441.6,361.3 2439.3,362.4 2436.7,363.1 2433.8,363.3 2431.0,363.0 2428.2,362.2 2425.7,360.9 2423.5,359.3 2421.8,357.3 2420.7,355.2 2420.1,352.9 2420.3,350.7 2421.0,348.6 2422.4,346.7 2424.2,345.2 2426.5,344.0 2429.2,343.3 2432.0,343.1 2434.8,343.4 2437.6,344.2 2440.1,345.5 2442.3,347.1 2444.0,349.0 2445.1,351.2 2445.7,353.4" fill="#b9a000"/>
<polygon points="2438.8,354.3 2438.2,355.6 2437.1,356.7 2435.6,357.5 2433.9,357.8 2432.0,357.6 2430.3,357.1 2428.8,356.1 2427.7,354.8 2427.1,353.4 2427.1,352.0 2427.7,350.6 2428.7,349.5 2430.2,348.8 2432.0,348.5 2433.8,348.6 2435.6,349.2 2437.1,350.2 2438.2,351.4 2438.7,352.8" fill="#15150a"/>
<polygon points="2424.4,465.1 2423.6,467.4 2422.2,469.4 2420.3,471.1 2417.9,472.3 2415.1,473.1 2412.2,473.3 2409.2,472.9 2406.4,472.0 2403.8,470.7 2401.5,468.9 2399.8,466.8 2398.6,464.5 2398.1,462.1 2398.3,459.7 2399.1,457.5 2400.5,455.5 2402.4,453.8 2404.8,452.6 2407.5,451.9 2410.4,451.7 2413.4,452.0 2416.2,452.9 2418.8,454.2 2421.1,455.9 2422.8,458.0 2424.0,460.3 2424.5,462.7" fill="#b9a000"/>
<polygon points="2417.4,463.6 2416.8,465.0 2415.7,466.2 2414.1,467.0 2412.3,467.3 2410.4,467.2 2408.6,466.6 2407.0,465.5 2405.9,464.2 2405.3,462.7 2405.3,461.1 2405.9,459.7 2407.0,458.5 2408.6,457.7 2410.4,457.4 2412.3,457.6 2414.1,458.2 2415.6,459.2 2416.8,460.5 2417.4,462.1" fill="#15150a"/>
<polygon points="2490.7,364.6 2489.9,366.7 2488.6,368.6 2486.8,370.2 2484.5,371.3 2481.8,372.0 2479.0,372.2 2476.1,371.9 2473.3,371.1 2470.7,369.8 2468.5,368.2 2466.8,366.2 2465.6,364.1 2465.0,361.8 2465.1,359.5 2465.9,357.4 2467.2,355.5 2469.1,354.0 2471.4,352.8 2474.0,352.1 2476.8,351.9 2479.7,352.2 2482.5,353.0 2485.0,354.3 2487.2,355.9 2489.0,357.9 2490.2,360.0 2490.7,362.3" fill="#b9a000"/>
<polygon points="2483.8,363.2 2483.3,364.5 2482.2,365.6 2480.7,366.4 2478.9,366.7 2477.1,366.5 2475.3,366.0 2473.8,365.0 2472.7,363.7 2472.1,362.3 2472.0,360.8 2472.6,359.5 2473.6,358.4 2475.1,357.6 2476.9,357.3 2478.7,357.5 2480.5,358.0 2482.0,359.0 2483.2,360.3 2483.8,361.7" fill="#15150a"/>
<polygon points="2470.9,474.8 2470.2,477.1 2468.8,479.1 2466.9,480.8 2464.5,482.0 2461.7,482.8 2458.8,483.0 2455.8,482.6 2452.9,481.8 2450.3,480.4 2448.0,478.6 2446.2,476.5 2445.0,474.2 2444.5,471.7 2444.6,469.3 2445.3,467.1 2446.7,465.0 2448.7,463.4 2451.1,462.2 2453.8,461.4 2456.7,461.2 2459.7,461.6 2462.5,462.4 2465.2,463.8 2467.4,465.5 2469.2,467.6 2470.4,470.0 2471.0,472.4" fill="#b9a000"/>
<polygon points="2463.8,473.3 2463.3,474.7 2462.2,475.9 2460.6,476.7 2458.8,477.0 2456.9,476.9 2455.0,476.2 2453.5,475.2 2452.3,473.8 2451.7,472.3 2451.7,470.8 2452.3,469.3 2453.4,468.1 2454.9,467.3 2456.7,467.0 2458.7,467.2 2460.5,467.8 2462.1,468.8 2463.2,470.2 2463.8,471.7" fill="#15150a"/>
<polygon points="2090.6,904.0 2089.5,906.9 2087.7,909.5 2085.3,911.6 2082.5,913.1 2079.4,914.0 2076.1,914.2 2072.8,913.7 2069.8,912.6 2067.0,910.8 2064.7,908.5 2063.0,905.8 2062.0,902.9 2061.7,899.8 2062.2,896.7 2063.3,893.9 2065.1,891.3 2067.5,889.3 2070.3,887.7 2073.4,886.8 2076.6,886.6 2079.9,887.1 2082.9,888.2 2085.7,890.0 2088.0,892.3 2089.7,894.9 2090.7,897.9 2091.0,901.0" fill="#b9a000"/>
<polygon points="2082.9,902.0 2082.1,903.8 2080.7,905.3 2078.9,906.3 2076.9,906.7 2074.8,906.5 2072.8,905.7 2071.2,904.3 2070.1,902.6 2069.6,900.6 2069.8,898.7 2070.6,896.8 2072.0,895.4 2073.8,894.4 2075.9,894.0 2078.0,894.2 2079.9,895.0 2081.5,896.4 2082.6,898.1 2083.1,900.0" fill="#15150a"/>
<polygon points="2051.6,1054.1 2050.4,1057.3 2048.5,1060.0 2046.1,1062.3 2043.1,1063.9 2039.9,1064.9 2036.5,1065.1 2033.1,1064.6 2029.9,1063.3 2027.0,1061.4 2024.7,1058.9 2023.0,1056.0 2021.9,1052.8 2021.7,1049.4 2022.1,1046.1 2023.4,1043.0 2025.3,1040.3 2027.7,1038.1 2030.7,1036.4 2033.9,1035.5 2037.3,1035.3 2040.7,1035.8 2043.8,1037.0 2046.7,1038.9 2049.0,1041.4 2050.8,1044.3 2051.8,1047.5 2052.1,1050.8" fill="#b9a000"/>
<polygon points="2043.7,1052.0 2042.8,1053.9 2041.4,1055.5 2039.5,1056.6 2037.3,1057.0 2035.1,1056.8 2033.1,1055.9 2031.5,1054.4 2030.3,1052.5 2029.9,1050.4 2030.1,1048.3 2031.0,1046.3 2032.4,1044.7 2034.3,1043.7 2036.4,1043.2 2038.6,1043.5 2040.6,1044.4 2042.3,1045.8 2043.4,1047.7 2043.9,1049.8" fill="#15150a"/>
<polygon points="2141.5,917.1 2140.4,920.0 2138.6,922.6 2136.3,924.7 2133.5,926.2 2130.3,927.1 2127.0,927.3 2123.7,926.9 2120.6,925.7 2117.8,923.9 2115.5,921.6 2113.8,918.9 2112.7,915.9 2112.3,912.8 2112.7,909.7 2113.9,906.8 2115.6,904.3 2118.0,902.2 2120.8,900.6 2123.9,899.7 2127.2,899.5 2130.4,900.0 2133.5,901.2 2136.3,902.9 2138.6,905.2 2140.4,907.9 2141.5,910.9 2141.9,914.0" fill="#b9a000"/>
<polygon points="2133.7,915.0 2132.9,916.9 2131.6,918.4 2129.8,919.4 2127.7,919.8 2125.6,919.5 2123.6,918.7 2122.0,917.4 2120.8,915.6 2120.3,913.6 2120.5,911.6 2121.3,909.8 2122.7,908.3 2124.5,907.4 2126.5,906.9 2128.6,907.2 2130.6,908.0 2132.2,909.3 2133.4,911.1 2133.9,913.0" fill="#15150a"/>
<polygon points="2104.3,1068.5 2103.2,1071.6 2101.3,1074.4 2098.8,1076.7 2095.9,1078.3 2092.6,1079.3 2089.2,1079.5 2085.8,1079.0 2082.6,1077.7 2079.7,1075.8 2077.3,1073.3 2075.5,1070.3 2074.4,1067.1 2074.1,1063.7 2074.6,1060.4 2075.7,1057.3 2077.6,1054.5 2080.1,1052.2 2083.0,1050.6 2086.2,1049.6 2089.6,1049.4 2093.0,1049.9 2096.3,1051.2 2099.1,1053.1 2101.5,1055.6 2103.3,1058.5 2104.4,1061.8 2104.8,1065.1" fill="#b9a000"/>
<polygon points="2096.3,1066.3 2095.5,1068.2 2094.0,1069.8 2092.1,1070.9 2090.0,1071.3 2087.8,1071.1 2085.7,1070.2 2084.0,1068.7 2082.9,1066.8 2082.4,1064.7 2082.6,1062.5 2083.4,1060.5 2084.9,1059.0 2086.8,1057.9 2088.9,1057.5 2091.1,1057.7 2093.1,1058.6 2094.8,1060.1 2096.0,1062.0 2096.5,1064.1" fill="#15150a"/>
<polygon points="2192.8,930.2 2191.8,933.2 2190.0,935.8 2187.7,937.9 2184.9,939.5 2181.8,940.4 2178.4,940.6 2175.1,940.1 2172.0,938.9 2169.1,937.1 2166.8,934.8 2165.0,932.1 2163.8,929.0 2163.5,925.9 2163.8,922.8 2164.9,919.9 2166.6,917.3 2169.0,915.2 2171.8,913.7 2174.9,912.8 2178.2,912.5 2181.5,913.0 2184.6,914.2 2187.5,916.0 2189.8,918.3 2191.6,921.0 2192.8,924.0 2193.2,927.1" fill="#b9a000"/>
<polygon points="2185.0,928.2 2184.2,930.0 2182.9,931.5 2181.1,932.5 2179.0,933.0 2176.9,932.7 2174.9,931.9 2173.2,930.5 2172.0,928.8 2171.5,926.8 2171.6,924.8 2172.4,922.9 2173.8,921.4 2175.6,920.4 2177.7,920.0 2179.8,920.2 2181.8,921.1 2183.4,922.4 2184.6,924.2 2185.1,926.2" fill="#15150a"/>
<polygon points="2157.6,1082.9 2156.5,1086.1 2154.6,1088.9 2152.2,1091.2 2149.2,1092.9 2146.0,1093.9 2142.5,1094.1 2139.1,1093.6 2135.8,1092.3 2132.9,1090.3 2130.4,1087.8 2128.6,1084.8 2127.5,1081.5 2127.1,1078.1 2127.5,1074.8 2128.6,1071.6 2130.5,1068.8 2132.9,1066.6 2135.9,1064.9 2139.1,1063.9 2142.5,1063.7 2145.9,1064.2 2149.2,1065.5 2152.1,1067.5 2154.6,1070.0 2156.4,1072.9 2157.6,1076.2 2158.0,1079.6" fill="#b9a000"/>
<polygon points="2149.5,1080.7 2148.6,1082.7 2147.2,1084.3 2145.3,1085.4 2143.2,1085.8 2140.9,1085.6 2138.9,1084.7 2137.2,1083.2 2136.0,1081.3 2135.4,1079.1 2135.6,1076.9 2136.4,1074.9 2137.9,1073.3 2139.7,1072.3 2141.9,1071.8 2144.1,1072.1 2146.2,1073.0 2147.9,1074.5 2149.1,1076.4 2149.6,1078.5" fill="#15150a"/>
<polygon points="2244.1,943.4 2243.1,946.3 2241.3,949.0 2239.0,951.1 2236.2,952.7 2233.1,953.6 2229.7,953.8 2226.4,953.3 2223.2,952.1 2220.3,950.3 2217.9,948.0 2216.1,945.2 2214.9,942.2 2214.5,939.0 2214.8,935.9 2215.8,932.9 2217.5,930.3 2219.9,928.2 2222.7,926.6 2225.8,925.7 2229.1,925.5 2232.4,926.0 2235.6,927.2 2238.5,929.0 2240.9,931.3 2242.7,934.0 2243.9,937.1 2244.4,940.2" fill="#b9a000"/>
<polygon points="2236.2,941.3 2235.4,943.2 2234.1,944.7 2232.3,945.7 2230.2,946.1 2228.0,945.9 2226.0,945.0 2224.3,943.7 2223.1,941.9 2222.6,939.9 2222.7,937.9 2223.4,936.0 2224.8,934.5 2226.6,933.5 2228.7,933.1 2230.8,933.3 2232.8,934.1 2234.5,935.5 2235.7,937.3 2236.3,939.3" fill="#15150a"/>
<polygon points="2210.7,1097.4 2209.6,1100.6 2207.8,1103.4 2205.4,1105.7 2202.5,1107.4 2199.2,1108.4 2195.7,1108.6 2192.2,1108.1 2188.9,1106.8 2185.9,1104.8 2183.5,1102.2 2181.6,1099.2 2180.4,1095.9 2180.0,1092.5 2180.3,1089.1 2181.4,1085.9 2183.3,1083.1 2185.7,1080.8 2188.6,1079.2 2191.9,1078.2 2195.3,1078.0 2198.8,1078.5 2202.0,1079.8 2205.0,1081.8 2207.5,1084.3 2209.4,1087.3 2210.6,1090.6 2211.1,1094.0" fill="#b9a000"/>
<polygon points="2202.5,1095.1 2201.7,1097.1 2200.3,1098.8 2198.4,1099.9 2196.3,1100.3 2194.0,1100.0 2191.9,1099.1 2190.2,1097.6 2189.0,1095.7 2188.4,1093.5 2188.5,1091.3 2189.3,1089.3 2190.7,1087.7 2192.6,1086.6 2194.8,1086.2 2197.0,1086.4 2199.1,1087.3 2200.8,1088.8 2202.1,1090.8 2202.6,1092.9" fill="#15150a"/>
<polygon points="1685.4,777.3 1684.1,779.9 1682.1,782.3 1679.6,784.2 1676.8,785.7 1673.8,786.5 1670.6,786.7 1667.6,786.3 1664.8,785.2 1662.4,783.6 1660.5,781.5 1659.2,779.0 1658.5,776.3 1658.6,773.5 1659.3,770.6 1660.7,768.0 1662.6,765.7 1665.1,763.7 1667.9,762.3 1670.9,761.5 1674.0,761.3 1677.1,761.7 1679.8,762.8 1682.2,764.4 1684.2,766.4 1685.5,768.9 1686.2,771.6 1686.1,774.5" fill="#b9a000"/>
<polygon points="1678.4,775.4 1677.4,777.1 1675.9,778.5 1674.1,779.4 1672.1,779.8 1670.1,779.6 1668.4,778.8 1667.0,777.6 1666.2,776.0 1665.9,774.2 1666.3,772.4 1667.3,770.7 1668.7,769.4 1670.6,768.4 1672.5,768.1 1674.5,768.3 1676.3,769.0 1677.6,770.2 1678.5,771.8 1678.7,773.6" fill="#15150a"/>
<polygon points="1828.6,813.7 1827.3,816.4 1825.4,818.8 1823.0,820.8 1820.2,822.3 1817.1,823.1 1813.9,823.3 1810.8,822.9 1807.9,821.8 1805.4,820.1 1803.4,818.0 1801.9,815.4 1801.1,812.6 1801.1,809.7 1801.7,806.8 1803.0,804.1 1804.9,801.7 1807.3,799.8 1810.1,798.3 1813.2,797.5 1816.3,797.3 1819.4,797.7 1822.3,798.8 1824.8,800.4 1826.8,802.5 1828.3,805.1 1829.1,807.9 1829.2,810.8" fill="#b9a000"/>
<polygon points="1821.3,811.8 1820.4,813.5 1819.0,814.9 1817.2,815.8 1815.1,816.2 1813.1,816.0 1811.3,815.2 1809.9,814.0 1808.9,812.3 1808.6,810.5 1808.9,808.6 1809.8,806.9 1811.3,805.5 1813.1,804.6 1815.1,804.2 1817.1,804.4 1818.9,805.2 1820.4,806.4 1821.3,808.1 1821.6,809.9" fill="#15150a"/>
<polygon points="1874.6,825.4 1873.3,828.1 1871.4,830.5 1869.0,832.5 1866.2,834.0 1863.1,834.9 1860.0,835.1 1856.8,834.6 1853.9,833.5 1851.3,831.9 1849.3,829.7 1847.8,827.1 1847.0,824.3 1846.9,821.4 1847.5,818.5 1848.7,815.7 1850.6,813.3 1853.0,811.3 1855.8,809.9 1858.9,809.0 1862.0,808.8 1865.1,809.3 1868.1,810.3 1870.6,812.0 1872.7,814.1 1874.2,816.7 1875.0,819.5 1875.2,822.4" fill="#b9a000"/>
<polygon points="1867.3,823.5 1866.4,825.2 1864.9,826.6 1863.1,827.5 1861.1,827.9 1859.1,827.7 1857.2,826.9 1855.8,825.7 1854.8,824.0 1854.5,822.2 1854.7,820.3 1855.6,818.5 1857.1,817.1 1858.9,816.2 1860.9,815.8 1862.9,816.0 1864.7,816.8 1866.2,818.1 1867.2,819.7 1867.5,821.6" fill="#15150a"/>
<polygon points="2022.7,863.0 2021.6,865.8 2019.8,868.3 2017.4,870.4 2014.6,871.9 2011.5,872.8 2008.2,873.0 2005.0,872.5 2002.0,871.4 1999.3,869.7 1997.1,867.4 1995.5,864.8 1994.6,861.9 1994.3,858.9 1994.8,855.9 1996.0,853.1 1997.8,850.6 2000.2,848.6 2003.0,847.1 2006.0,846.2 2009.3,846.0 2012.4,846.5 2015.4,847.6 2018.1,849.3 2020.3,851.5 2022.0,854.1 2022.9,857.0 2023.2,860.0" fill="#b9a000"/>
<polygon points="2015.2,861.1 2014.4,862.8 2013.0,864.3 2011.2,865.2 2009.1,865.6 2007.0,865.4 2005.1,864.6 2003.6,863.3 2002.5,861.6 2002.1,859.7 2002.3,857.8 2003.2,856.0 2004.6,854.6 2006.4,853.6 2008.4,853.2 2010.5,853.4 2012.4,854.2 2013.9,855.5 2015.0,857.2 2015.4,859.1" fill="#15150a"/>
<polygon points="1668.6,821.5 1667.2,824.2 1665.2,826.6 1662.7,828.6 1659.9,830.1 1656.8,830.9 1653.6,831.1 1650.5,830.7 1647.7,829.6 1645.3,827.9 1643.4,825.8 1642.0,823.2 1641.4,820.4 1641.5,817.5 1642.2,814.6 1643.6,811.9 1645.6,809.5 1648.1,807.6 1651.0,806.1 1654.0,805.3 1657.2,805.1 1660.2,805.5 1663.0,806.6 1665.5,808.2 1667.4,810.4 1668.7,812.9 1669.4,815.7 1669.4,818.6" fill="#b9a000"/>
<polygon points="1661.5,819.6 1660.5,821.3 1659.0,822.7 1657.2,823.7 1655.1,824.0 1653.1,823.8 1651.4,823.1 1650.0,821.8 1649.1,820.2 1648.9,818.3 1649.3,816.4 1650.3,814.7 1651.8,813.3 1653.6,812.4 1655.6,812.0 1657.6,812.2 1659.4,813.0 1660.8,814.3 1661.6,815.9 1661.9,817.7" fill="#15150a"/>
<polygon points="1813.3,859.0 1812.0,861.7 1810.1,864.2 1807.6,866.3 1804.7,867.8 1801.6,868.6 1798.4,868.8 1795.3,868.4 1792.4,867.3 1789.8,865.6 1787.8,863.3 1786.3,860.7 1785.5,857.9 1785.5,854.9 1786.1,851.9 1787.5,849.1 1789.4,846.7 1791.8,844.7 1794.7,843.2 1797.8,842.3 1801.0,842.1 1804.1,842.6 1807.0,843.7 1809.5,845.4 1811.6,847.6 1813.1,850.1 1813.8,853.0 1813.9,856.0" fill="#b9a000"/>
<polygon points="1806.0,857.0 1805.0,858.8 1803.6,860.2 1801.7,861.2 1799.7,861.6 1797.7,861.4 1795.8,860.6 1794.4,859.3 1793.4,857.6 1793.1,855.7 1793.4,853.8 1794.4,852.0 1795.8,850.6 1797.7,849.6 1799.7,849.2 1801.7,849.5 1803.5,850.2 1805.0,851.5 1805.9,853.2 1806.3,855.1" fill="#15150a"/>
<polygon points="1859.8,871.0 1858.5,873.8 1856.6,876.3 1854.2,878.4 1851.3,879.9 1848.2,880.7 1845.0,881.0 1841.8,880.5 1838.8,879.4 1836.3,877.6 1834.2,875.4 1832.7,872.8 1831.9,869.9 1831.8,866.9 1832.4,863.9 1833.7,861.1 1835.6,858.6 1838.0,856.6 1840.9,855.1 1844.0,854.2 1847.2,854.0 1850.3,854.5 1853.3,855.6 1855.8,857.3 1857.9,859.5 1859.4,862.1 1860.3,865.0 1860.4,868.0" fill="#b9a000"/>
<polygon points="1852.4,869.0 1851.5,870.8 1850.0,872.3 1848.2,873.2 1846.1,873.6 1844.1,873.4 1842.2,872.6 1840.7,871.3 1839.8,869.6 1839.4,867.7 1839.7,865.8 1840.7,864.0 1842.1,862.6 1843.9,861.6 1846.0,861.2 1848.0,861.4 1849.9,862.2 1851.4,863.5 1852.3,865.2 1852.7,867.1" fill="#15150a"/>
<polygon points="2009.6,909.8 2008.4,912.7 2006.6,915.2 2004.2,917.3 2001.3,918.9 1998.2,919.8 1994.9,920.0 1991.6,919.5 1988.6,918.4 1985.9,916.6 1983.7,914.3 1982.0,911.6 1981.1,908.6 1980.9,905.5 1981.4,902.5 1982.6,899.6 1984.4,897.1 1986.8,895.0 1989.6,893.5 1992.8,892.6 1996.0,892.4 1999.2,892.8 2002.3,894.0 2005.0,895.7 2007.2,898.0 2008.8,900.7 2009.8,903.6 2010.1,906.7" fill="#b9a000"/>
<polygon points="2002.0,907.8 2001.1,909.6 1999.7,911.1 1997.9,912.1 1995.8,912.5 1993.7,912.2 1991.8,911.4 1990.2,910.1 1989.2,908.3 1988.7,906.4 1989.0,904.4 1989.8,902.6 1991.2,901.1 1993.1,900.1 1995.1,899.7 1997.2,900.0 1999.1,900.8 2000.7,902.1 2001.7,903.8 2002.2,905.8" fill="#15150a"/>
<polygon points="1651.4,866.8 1650.0,869.6 1647.9,872.0 1645.4,874.1 1642.5,875.6 1639.4,876.5 1636.2,876.7 1633.1,876.2 1630.2,875.1 1627.8,873.4 1625.8,871.2 1624.5,868.5 1623.9,865.7 1623.9,862.7 1624.7,859.7 1626.2,857.0 1628.2,854.5 1630.7,852.5 1633.6,851.0 1636.7,850.2 1639.9,849.9 1643.0,850.4 1645.8,851.5 1648.3,853.2 1650.2,855.4 1651.5,858.0 1652.2,860.8 1652.2,863.8" fill="#b9a000"/>
<polygon points="1644.2,864.8 1643.2,866.6 1641.7,868.0 1639.8,869.0 1637.7,869.4 1635.7,869.2 1633.9,868.4 1632.5,867.1 1631.7,865.4 1631.5,863.5 1631.9,861.6 1632.9,859.8 1634.4,858.4 1636.3,857.5 1638.3,857.1 1640.3,857.3 1642.1,858.1 1643.5,859.4 1644.3,861.0 1644.6,862.9" fill="#15150a"/>
<polygon points="1797.6,905.4 1796.3,908.2 1794.3,910.8 1791.8,912.9 1788.9,914.4 1785.8,915.3 1782.5,915.5 1779.3,915.0 1776.4,913.9 1773.8,912.1 1771.8,909.8 1770.3,907.2 1769.5,904.2 1769.5,901.2 1770.2,898.1 1771.5,895.3 1773.5,892.8 1776.0,890.7 1778.9,889.2 1782.0,888.3 1785.2,888.1 1788.4,888.6 1791.3,889.7 1793.9,891.4 1796.0,893.7 1797.4,896.3 1798.2,899.3 1798.3,902.3" fill="#b9a000"/>
<polygon points="1790.2,903.4 1789.3,905.2 1787.8,906.7 1785.9,907.6 1783.8,908.0 1781.8,907.8 1779.9,907.0 1778.5,905.7 1777.5,903.9 1777.2,902.0 1777.5,900.0 1778.5,898.2 1780.0,896.8 1781.8,895.8 1783.9,895.4 1785.9,895.6 1787.8,896.4 1789.3,897.8 1790.2,899.5 1790.5,901.4" fill="#15150a"/>
<polygon points="1844.6,917.8 1843.3,920.7 1841.4,923.2 1838.9,925.3 1836.0,926.9 1832.8,927.8 1829.6,928.0 1826.4,927.5 1823.4,926.3 1820.8,924.6 1818.7,922.3 1817.2,919.6 1816.4,916.6 1816.3,913.5 1816.9,910.5 1818.2,907.6 1820.2,905.1 1822.7,903.0 1825.6,901.5 1828.7,900.6 1831.9,900.4 1835.1,900.8 1838.1,902.0 1840.7,903.7 1842.8,906.0 1844.3,908.7 1845.1,911.6 1845.3,914.7" fill="#b9a000"/>
<polygon points="1837.1,915.8 1836.2,917.6 1834.7,919.1 1832.9,920.1 1830.8,920.5 1828.7,920.2 1826.9,919.4 1825.4,918.1 1824.4,916.3 1824.0,914.4 1824.4,912.4 1825.3,910.6 1826.8,909.1 1828.6,908.1 1830.7,907.7 1832.8,908.0 1834.6,908.8 1836.1,910.1 1837.1,911.8 1837.5,913.8" fill="#15150a"/>
<polygon points="1996.1,957.8 1994.9,960.7 1993.0,963.4 1990.6,965.5 1987.7,967.1 1984.5,968.0 1981.2,968.2 1977.9,967.7 1974.8,966.5 1972.1,964.7 1969.9,962.4 1968.2,959.6 1967.3,956.5 1967.0,953.4 1967.6,950.2 1968.8,947.3 1970.7,944.7 1973.1,942.6 1976.0,941.0 1979.1,940.1 1982.4,939.9 1985.7,940.4 1988.8,941.5 1991.5,943.3 1993.7,945.7 1995.4,948.4 1996.4,951.5 1996.6,954.6" fill="#b9a000"/>
<polygon points="1988.4,955.7 1987.5,957.6 1986.1,959.1 1984.2,960.1 1982.2,960.5 1980.0,960.3 1978.1,959.4 1976.5,958.0 1975.4,956.3 1975.0,954.3 1975.2,952.2 1976.1,950.4 1977.6,948.9 1979.4,947.9 1981.5,947.4 1983.6,947.7 1985.6,948.5 1987.1,949.9 1988.2,951.7 1988.6,953.7" fill="#15150a"/>
<polygon points="1483.7,754.3 1482.2,756.9 1480.2,759.3 1477.7,761.2 1474.8,762.6 1471.8,763.4 1468.7,763.6 1465.7,763.2 1463.0,762.1 1460.8,760.6 1459.0,758.5 1457.8,756.1 1457.4,753.4 1457.6,750.6 1458.4,747.8 1460.0,745.2 1462.0,742.9 1464.5,741.0 1467.4,739.6 1470.4,738.8 1473.5,738.6 1476.4,739.0 1479.1,740.1 1481.4,741.6 1483.1,743.7 1484.3,746.1 1484.8,748.8 1484.6,751.6" fill="#b9a000"/>
<polygon points="1476.9,752.5 1475.8,754.2 1474.3,755.5 1472.5,756.4 1470.5,756.8 1468.6,756.6 1466.9,755.9 1465.6,754.6 1464.9,753.1 1464.7,751.3 1465.2,749.5 1466.3,747.9 1467.8,746.6 1469.6,745.7 1471.6,745.3 1473.5,745.5 1475.2,746.2 1476.5,747.4 1477.2,749.0 1477.4,750.7" fill="#15150a"/>
<polygon points="1622.5,790.0 1621.1,792.7 1619.1,795.0 1616.6,797.0 1613.7,798.4 1610.7,799.3 1607.5,799.5 1604.5,799.0 1601.7,798.0 1599.4,796.3 1597.5,794.2 1596.2,791.7 1595.6,789.0 1595.7,786.1 1596.5,783.3 1597.9,780.6 1599.9,778.3 1602.4,776.4 1605.2,774.9 1608.3,774.1 1611.4,773.9 1614.4,774.3 1617.2,775.4 1619.6,777.0 1621.4,779.1 1622.7,781.6 1623.3,784.3 1623.3,787.1" fill="#b9a000"/>
<polygon points="1615.5,788.1 1614.5,789.8 1613.0,791.2 1611.1,792.1 1609.1,792.5 1607.2,792.3 1605.4,791.5 1604.1,790.3 1603.3,788.7 1603.1,786.9 1603.5,785.1 1604.5,783.4 1606.0,782.0 1607.8,781.1 1609.8,780.7 1611.7,780.9 1613.5,781.7 1614.8,782.9 1615.6,784.5 1615.9,786.3" fill="#15150a"/>
<polygon points="1416.5,795.2 1414.9,797.8 1412.8,800.2 1410.2,802.1 1407.3,803.6 1404.2,804.4 1401.1,804.6 1398.2,804.2 1395.5,803.1 1393.2,801.5 1391.5,799.4 1390.4,796.9 1389.9,794.2 1390.2,791.3 1391.1,788.5 1392.7,785.8 1394.8,783.5 1397.4,781.6 1400.3,780.1 1403.4,779.3 1406.4,779.1 1409.4,779.5 1412.1,780.6 1414.3,782.2 1416.1,784.3 1417.2,786.7 1417.7,789.5 1417.4,792.3" fill="#b9a000"/>
<polygon points="1409.6,793.3 1408.5,795.0 1407.0,796.4 1405.1,797.3 1403.1,797.7 1401.2,797.5 1399.5,796.7 1398.2,795.5 1397.5,793.9 1397.4,792.1 1397.9,790.2 1399.0,788.6 1400.6,787.2 1402.4,786.3 1404.4,785.9 1406.4,786.1 1408.0,786.8 1409.3,788.1 1410.0,789.7 1410.1,791.5" fill="#15150a"/>
<polygon points="1554.3,831.4 1552.8,834.1 1550.8,836.5 1548.2,838.5 1545.3,840.0 1542.2,840.9 1539.0,841.1 1536.0,840.6 1533.2,839.5 1530.9,837.9 1529.0,835.7 1527.8,833.1 1527.2,830.3 1527.4,827.4 1528.2,824.5 1529.7,821.8 1531.8,819.4 1534.3,817.4 1537.2,816.0 1540.3,815.1 1543.4,814.9 1546.5,815.4 1549.2,816.4 1551.6,818.1 1553.4,820.2 1554.7,822.8 1555.3,825.6 1555.1,828.5" fill="#b9a000"/>
<polygon points="1547.2,829.5 1546.2,831.2 1544.7,832.6 1542.8,833.6 1540.8,833.9 1538.8,833.7 1537.1,833.0 1535.7,831.7 1534.9,830.1 1534.8,828.2 1535.2,826.3 1536.3,824.6 1537.8,823.2 1539.6,822.3 1541.7,821.9 1543.6,822.1 1545.4,822.9 1546.7,824.1 1547.5,825.8 1547.7,827.6" fill="#15150a"/>
<polygon points="1792.7,756.7 1791.2,759.7 1789.1,762.4 1786.4,764.6 1783.2,766.2 1779.7,767.2 1776.2,767.4 1772.7,766.9 1769.5,765.7 1766.6,763.9 1764.4,761.5 1762.8,758.7 1762.0,755.6 1761.9,752.4 1762.7,749.2 1764.2,746.2 1766.3,743.6 1769.0,741.4 1772.2,739.8 1775.6,738.9 1779.2,738.6 1782.6,739.1 1785.8,740.3 1788.6,742.1 1790.9,744.4 1792.5,747.2 1793.4,750.3 1793.4,753.5" fill="#b9a000"/>
<polygon points="1784.7,754.7 1783.6,756.6 1782.0,758.1 1779.9,759.2 1777.6,759.6 1775.3,759.4 1773.3,758.5 1771.7,757.1 1770.6,755.3 1770.3,753.2 1770.7,751.2 1771.7,749.2 1773.4,747.7 1775.4,746.7 1777.7,746.2 1780.0,746.4 1782.0,747.3 1783.6,748.7 1784.7,750.5 1785.0,752.6" fill="#15150a"/>
<polygon points="1887.3,780.3 1885.9,783.4 1883.8,786.1 1881.1,788.3 1877.9,790.0 1874.5,790.9 1870.9,791.2 1867.3,790.7 1864.0,789.4 1861.1,787.6 1858.8,785.2 1857.1,782.3 1856.2,779.2 1856.0,775.9 1856.7,772.7 1858.1,769.6 1860.2,766.9 1862.9,764.7 1866.1,763.1 1869.5,762.1 1873.1,761.9 1876.6,762.4 1879.9,763.6 1882.8,765.4 1885.1,767.8 1886.8,770.7 1887.8,773.8 1888.0,777.1" fill="#b9a000"/>
<polygon points="1879.1,778.2 1878.1,780.2 1876.5,781.7 1874.4,782.8 1872.1,783.3 1869.8,783.0 1867.7,782.2 1866.0,780.7 1864.9,778.9 1864.5,776.8 1864.9,774.7 1865.9,772.7 1867.5,771.1 1869.5,770.1 1871.8,769.6 1874.1,769.9 1876.2,770.7 1877.9,772.2 1879.0,774.0 1879.4,776.1" fill="#15150a"/>
<polygon points="2061.3,823.6 2060.0,826.7 2058.0,829.5 2055.3,831.8 2052.2,833.5 2048.7,834.5 2045.0,834.8 2041.4,834.2 2037.9,833.0 2034.9,831.1 2032.4,828.6 2030.5,825.6 2029.4,822.4 2029.1,819.0 2029.6,815.7 2030.9,812.6 2032.9,809.8 2035.6,807.5 2038.7,805.9 2042.2,804.9 2045.8,804.6 2049.4,805.2 2052.9,806.4 2055.9,808.3 2058.4,810.8 2060.3,813.7 2061.4,816.9 2061.8,820.3" fill="#b9a000"/>
<polygon points="2052.8,821.4 2051.9,823.4 2050.3,825.1 2048.2,826.2 2045.9,826.6 2043.5,826.4 2041.4,825.5 2039.6,824.0 2038.4,822.1 2037.8,819.9 2038.1,817.8 2039.0,815.8 2040.6,814.1 2042.6,813.0 2044.9,812.6 2047.3,812.8 2049.5,813.7 2051.3,815.2 2052.5,817.1 2053.0,819.3" fill="#15150a"/>
<polygon points="2160.5,848.3 2159.3,851.5 2157.3,854.4 2154.7,856.7 2151.5,858.4 2148.0,859.4 2144.3,859.7 2140.6,859.1 2137.1,857.9 2134.0,855.9 2131.3,853.4 2129.4,850.4 2128.2,847.1 2127.8,843.7 2128.2,840.3 2129.4,837.1 2131.4,834.3 2134.0,832.0 2137.2,830.3 2140.7,829.3 2144.3,829.1 2148.0,829.6 2151.5,830.8 2154.6,832.8 2157.2,835.3 2159.2,838.2 2160.5,841.5 2160.9,844.9" fill="#b9a000"/>
<polygon points="2151.9,846.1 2151.0,848.2 2149.4,849.8 2147.4,850.9 2145.0,851.4 2142.6,851.2 2140.4,850.2 2138.5,848.7 2137.2,846.8 2136.6,844.6 2136.8,842.4 2137.7,840.4 2139.3,838.7 2141.3,837.6 2143.6,837.2 2146.0,837.4 2148.3,838.3 2150.1,839.8 2151.4,841.7 2152.0,843.9" fill="#15150a"/>
<polygon points="1865.2,165.8 1864.5,166.8 1863.4,167.5 1861.9,167.9 1860.5,167.9 1859.2,167.4 1858.2,166.6 1857.8,165.5 1858.0,164.4 1858.7,163.4 1859.8,162.6 1861.2,162.3 1862.7,162.3 1864.0,162.8 1864.9,163.6 1865.3,164.7" fill="#8a7a10"/>
<polygon points="1863.3,165.4 1862.8,166.0 1862.0,166.3 1861.0,166.4 1860.3,166.0 1859.8,165.4 1859.9,164.7 1860.3,164.1 1861.2,163.7 1862.1,163.7 1862.9,164.0 1863.3,164.6" fill="#241c08"/>
<polygon points="1945.5,220.1 1944.8,221.1 1943.6,221.9 1942.2,222.3 1940.7,222.3 1939.3,221.8 1938.4,220.9 1937.9,219.8 1938.0,218.6 1938.7,217.6 1939.9,216.8 1941.3,216.4 1942.8,216.5 1944.1,217.0 1945.1,217.8 1945.6,218.9" fill="#8a7a10"/>
<polygon points="1943.5,219.7 1943.0,220.3 1942.2,220.7 1941.2,220.7 1940.4,220.3 1939.9,219.7 1940.0,219.0 1940.4,218.3 1941.3,217.9 1942.2,217.9 1943.1,218.3 1943.5,218.9" fill="#241c08"/>
<polygon points="1914.1,262.0 1913.4,263.0 1912.3,263.8 1910.8,264.2 1909.3,264.2 1907.9,263.7 1907.0,262.8 1906.5,261.7 1906.6,260.5 1907.3,259.4 1908.5,258.6 1910.0,258.2 1911.5,258.3 1912.8,258.8 1913.8,259.7 1914.3,260.8" fill="#8a7a10"/>
<polygon points="1912.2,261.5 1911.7,262.2 1910.8,262.6 1909.9,262.6 1909.0,262.2 1908.6,261.6 1908.6,260.8 1909.1,260.2 1909.9,259.8 1910.9,259.8 1911.7,260.1 1912.2,260.8" fill="#241c08"/>
<polygon points="1612.4,278.0 1611.6,279.1 1610.4,279.9 1608.9,280.3 1607.4,280.2 1606.1,279.7 1605.2,278.8 1604.9,277.7 1605.2,276.5 1606.0,275.4 1607.2,274.6 1608.7,274.2 1610.2,274.3 1611.4,274.8 1612.3,275.7 1612.7,276.8" fill="#8a7a10"/>
<polygon points="1610.5,277.5 1609.9,278.2 1609.1,278.6 1608.1,278.6 1607.3,278.2 1606.9,277.6 1607.0,276.8 1607.6,276.2 1608.5,275.8 1609.4,275.8 1610.2,276.1 1610.6,276.8" fill="#241c08"/>
<polygon points="2212.2,264.9 2211.6,266.0 2210.5,266.8 2209.1,267.2 2207.5,267.1 2206.1,266.6 2205.0,265.7 2204.4,264.6 2204.4,263.4 2205.0,262.3 2206.1,261.5 2207.6,261.1 2209.1,261.1 2210.6,261.6 2211.7,262.5 2212.2,263.7" fill="#8a7a10"/>
<polygon points="2210.2,264.4 2209.7,265.1 2208.9,265.5 2207.9,265.5 2207.1,265.1 2206.5,264.5 2206.5,263.7 2206.9,263.0 2207.7,262.6 2208.7,262.6 2209.6,263.0 2210.1,263.6" fill="#241c08"/>
<polygon points="2088.6,412.5 2087.9,413.7 2086.7,414.6 2085.2,415.1 2083.6,415.0 2082.1,414.4 2081.0,413.4 2080.5,412.2 2080.5,410.9 2081.2,409.7 2082.4,408.8 2083.9,408.4 2085.5,408.4 2087.0,409.0 2088.1,410.0 2088.6,411.2" fill="#8a7a10"/>
<polygon points="2086.5,412.1 2086.0,412.8 2085.1,413.2 2084.1,413.2 2083.2,412.8 2082.7,412.1 2082.6,411.2 2083.1,410.5 2084.0,410.1 2085.0,410.1 2085.9,410.5 2086.5,411.2" fill="#241c08"/>
<polygon points="2043.3,469.9 2042.6,471.1 2041.4,472.0 2039.8,472.5 2038.2,472.4 2036.7,471.8 2035.6,470.8 2035.0,469.5 2035.1,468.1 2035.8,466.9 2037.1,466.0 2038.6,465.5 2040.3,465.6 2041.7,466.2 2042.8,467.2 2043.4,468.5" fill="#8a7a10"/>
<polygon points="2041.2,469.4 2040.7,470.1 2039.8,470.6 2038.7,470.6 2037.8,470.1 2037.3,469.4 2037.3,468.5 2037.8,467.8 2038.7,467.3 2039.7,467.3 2040.6,467.8 2041.2,468.5" fill="#241c08"/>
<polygon points="1680.7,487.9 1679.9,489.1 1678.6,490.0 1677.0,490.5 1675.4,490.4 1674.0,489.8 1673.0,488.8 1672.6,487.5 1672.9,486.1 1673.7,484.9 1675.0,484.0 1676.6,483.6 1678.2,483.6 1679.6,484.2 1680.5,485.2 1680.9,486.5" fill="#8a7a10"/>
<polygon points="1678.6,487.4 1678.1,488.1 1677.1,488.6 1676.1,488.6 1675.2,488.2 1674.8,487.4 1674.9,486.5 1675.5,485.8 1676.4,485.4 1677.4,485.3 1678.3,485.8 1678.7,486.5" fill="#241c08"/>
<polygon points="1498.5,648.2 1497.6,649.6 1496.2,650.5 1494.5,651.0 1492.9,650.9 1491.5,650.3 1490.5,649.1 1490.2,647.7 1490.5,646.2 1491.5,644.9 1492.9,643.9 1494.5,643.4 1496.2,643.5 1497.6,644.2 1498.5,645.3 1498.9,646.7" fill="#8a7a10"/>
<polygon points="1496.4,647.6 1495.8,648.5 1494.8,648.9 1493.7,648.9 1492.9,648.5 1492.4,647.6 1492.6,646.7 1493.2,645.9 1494.2,645.4 1495.3,645.4 1496.2,645.9 1496.6,646.7" fill="#241c08"/>
<polygon points="1455.2,835.0 1454.2,836.5 1452.7,837.6 1451.0,838.1 1449.2,838.0 1447.7,837.3 1446.7,836.0 1446.4,834.4 1446.8,832.8 1447.8,831.3 1449.3,830.2 1451.1,829.6 1452.8,829.8 1454.3,830.5 1455.3,831.8 1455.6,833.3" fill="#8a7a10"/>
<polygon points="1453.0,834.4 1452.3,835.3 1451.2,835.8 1450.1,835.8 1449.2,835.3 1448.8,834.4 1449.0,833.3 1449.7,832.4 1450.7,831.9 1451.8,831.9 1452.7,832.4 1453.2,833.3" fill="#241c08"/>
<polygon points="2116.4,860.1 2115.7,861.7 2114.3,862.8 2112.6,863.4 2110.7,863.2 2109.0,862.5 2107.8,861.2 2107.1,859.5 2107.2,857.8 2108.0,856.3 2109.3,855.2 2111.1,854.6 2112.9,854.7 2114.6,855.5 2115.9,856.8 2116.5,858.4" fill="#8a7a10"/>
<polygon points="2114.0,859.5 2113.5,860.4 2112.5,861.0 2111.3,861.0 2110.3,860.4 2109.7,859.5 2109.6,858.4 2110.2,857.4 2111.2,856.9 2112.3,856.9 2113.4,857.5 2114.0,858.4" fill="#241c08"/>
<polygon points="1778.4,175.2 1804.6,180.2 1803.8,183.9 1804.4,187.4 1806.2,190.7 1809.3,193.3 1813.2,195.2 1817.8,196.0 1822.6,195.9 1827.2,194.7 1831.2,192.6 1834.4,189.8 1836.5,186.4 1862.7,191.4 1769.3,427.7 1679.3,408.1" fill="none" stroke="#f2f2f2" stroke-width="2.3" stroke-linejoin="round"/>
<polygon points="1642.3,432.4 1669.1,438.3 1668.0,442.6 1668.4,446.8 1670.3,450.6 1673.4,453.8 1677.6,456.0 1682.5,457.1 1687.6,456.9 1692.7,455.6 1697.2,453.2 1700.8,449.8 1703.2,445.8 1731.2,452.0 1618.7,730.5 1523.5,706.6" fill="none" stroke="#f2f2f2" stroke-width="2.3" stroke-linejoin="round"/>
<polygon points="1908.2,379.2 1999.7,398.4 1896.7,712.5 1865.7,704.9 1866.6,699.9 1865.8,695.0 1863.6,690.5 1860.0,686.8 1855.3,684.2 1850.0,682.9 1844.4,683.0 1839.0,684.6 1834.2,687.4 1830.5,691.2 1828.1,695.8 1797.5,688.4" fill="none" stroke="#f2f2f2" stroke-width="2.3" stroke-linejoin="round"/>
<polygon points="2152.3,422.5 2181.8,428.7 2181.4,433.0 2182.6,437.2 2185.1,441.1 2188.8,444.3 2193.5,446.5 2198.7,447.6 2204.0,447.5 2209.0,446.1 2213.2,443.7 2216.3,440.3 2218.1,436.3 2248.0,442.5 2167.0,769.0 2062.7,743.8" fill="none" stroke="#f2f2f2" stroke-width="2.3" stroke-linejoin="round"/>
<polygon points="1532.8,368.3 1576.9,377.9 1455.0,642.4 1407.9,630.8" fill="none" stroke="#f2f2f2" stroke-width="2.3" stroke-linejoin="round"/>
<polyline points="1411.8,679.1 1435.3,685.0 1446.0,661.9" fill="none" stroke="#f2f2f2" stroke-width="2.3" stroke-linejoin="round"/>
<polygon points="2361.8,485.7 2412.2,496.4 2354.9,790.1 2300.4,777.0" fill="none" stroke="#f2f2f2" stroke-width="2.3" stroke-linejoin="round"/>
<polyline points="2317.7,829.4 2345.9,836.3 2350.5,812.3" fill="none" stroke="#f2f2f2" stroke-width="2.3" stroke-linejoin="round"/>
<polygon points="1341.2,729.8 1389.2,742.3 1326.1,877.5 1276.6,863.9" fill="none" stroke="#f2f2f2" stroke-width="2.3" stroke-linejoin="round"/>
<polyline points="1351.0,709.4 1362.0,686.5 1386.9,692.8" fill="none" stroke="#f2f2f2" stroke-width="2.3" stroke-linejoin="round"/>
<polygon points="1454.5,847.3 1598.4,885.7 1578.5,936.5 1432.9,896.7" fill="none" stroke="#f2f2f2" stroke-width="2.3" stroke-linejoin="round"/>
<polyline points="1396.1,858.6 1384.8,883.6 1411.3,890.8" fill="none" stroke="#f2f2f2" stroke-width="2.3" stroke-linejoin="round"/>
<polygon points="2034.7,259.2 2098.9,271.8 2091.5,295.7 2026.9,282.9" fill="none" stroke="#f2f2f2" stroke-width="2.3" stroke-linejoin="round"/>
<polyline points="2015.2,267.9 2030.8,271.0" fill="none" stroke="#f2f2f2" stroke-width="2.3" stroke-linejoin="round"/>
<polyline points="2095.2,283.7 2110.8,286.8" fill="none" stroke="#f2f2f2" stroke-width="2.3" stroke-linejoin="round"/>
<polygon points="2202.4,292.0 2268.2,304.9 2262.0,329.5 2195.7,316.3" fill="none" stroke="#f2f2f2" stroke-width="2.3" stroke-linejoin="round"/>
<polyline points="2183.0,301.0 2199.1,304.1" fill="none" stroke="#f2f2f2" stroke-width="2.3" stroke-linejoin="round"/>
<polyline points="2265.1,317.1 2281.5,320.4" fill="none" stroke="#f2f2f2" stroke-width="2.3" stroke-linejoin="round"/>
<polygon points="2023.9,291.8 2088.7,304.7 2081.2,329.1 2015.9,315.9" fill="none" stroke="#f2f2f2" stroke-width="2.3" stroke-linejoin="round"/>
<polyline points="2004.2,300.6 2019.9,303.8" fill="none" stroke="#f2f2f2" stroke-width="2.3" stroke-linejoin="round"/>
<polyline points="2085.0,316.8 2100.7,320.0" fill="none" stroke="#f2f2f2" stroke-width="2.3" stroke-linejoin="round"/>
<polygon points="2193.2,325.5 2259.7,338.7 2253.3,363.8 2186.4,350.3" fill="none" stroke="#f2f2f2" stroke-width="2.3" stroke-linejoin="round"/>
<polyline points="2173.6,334.6 2189.8,337.8" fill="none" stroke="#f2f2f2" stroke-width="2.3" stroke-linejoin="round"/>
<polyline points="2256.5,351.2 2273.0,354.5" fill="none" stroke="#f2f2f2" stroke-width="2.3" stroke-linejoin="round"/>
<polygon points="2012.9,324.9 2078.4,338.2 2070.6,363.1 2004.8,349.6" fill="none" stroke="#f2f2f2" stroke-width="2.3" stroke-linejoin="round"/>
<polyline points="1993.0,334.0 2008.9,337.2" fill="none" stroke="#f2f2f2" stroke-width="2.3" stroke-linejoin="round"/>
<polyline points="2074.5,350.6 2090.4,353.8" fill="none" stroke="#f2f2f2" stroke-width="2.3" stroke-linejoin="round"/>
<polygon points="2183.9,359.5 2251.0,373.1 2244.5,398.7 2176.9,384.9" fill="none" stroke="#f2f2f2" stroke-width="2.3" stroke-linejoin="round"/>
<polyline points="2164.0,368.8 2180.4,372.2" fill="none" stroke="#f2f2f2" stroke-width="2.3" stroke-linejoin="round"/>
<polyline points="2247.7,385.9 2264.4,389.3" fill="none" stroke="#f2f2f2" stroke-width="2.3" stroke-linejoin="round"/>
<polygon points="2322.0,358.2 2355.2,364.9 2343.2,419.1 2309.4,412.2" fill="none" stroke="#f2f2f2" stroke-width="2.3" stroke-linejoin="round"/>
<polyline points="2341.5,348.6 2338.6,361.6" fill="none" stroke="#f2f2f2" stroke-width="2.3" stroke-linejoin="round"/>
<polyline points="2326.3,415.7 2323.2,429.5" fill="none" stroke="#f2f2f2" stroke-width="2.3" stroke-linejoin="round"/>
<polygon points="2366.0,367.1 2399.6,373.8 2388.3,428.4 2354.2,421.4" fill="none" stroke="#f2f2f2" stroke-width="2.3" stroke-linejoin="round"/>
<polyline points="2385.6,357.4 2382.8,370.4" fill="none" stroke="#f2f2f2" stroke-width="2.3" stroke-linejoin="round"/>
<polyline points="2371.2,424.9 2368.3,438.8" fill="none" stroke="#f2f2f2" stroke-width="2.3" stroke-linejoin="round"/>
<polygon points="2410.9,376.0 2444.7,382.8 2434.1,437.8 2399.8,430.7" fill="none" stroke="#f2f2f2" stroke-width="2.3" stroke-linejoin="round"/>
<polyline points="2430.4,366.2 2427.8,379.4" fill="none" stroke="#f2f2f2" stroke-width="2.3" stroke-linejoin="round"/>
<polyline points="2416.9,434.2 2414.2,448.2" fill="none" stroke="#f2f2f2" stroke-width="2.3" stroke-linejoin="round"/>
<polygon points="2456.1,385.0 2490.2,391.8 2480.3,447.2 2445.7,440.1" fill="none" stroke="#f2f2f2" stroke-width="2.3" stroke-linejoin="round"/>
<polyline points="2475.5,375.2 2473.1,388.4" fill="none" stroke="#f2f2f2" stroke-width="2.3" stroke-linejoin="round"/>
<polyline points="2463.0,443.7 2460.4,457.8" fill="none" stroke="#f2f2f2" stroke-width="2.3" stroke-linejoin="round"/>
<polygon points="2047.7,931.9 2085.8,941.9 2066.4,1017.0 2027.6,1006.6" fill="none" stroke="#f2f2f2" stroke-width="2.3" stroke-linejoin="round"/>
<polyline points="2071.6,918.3 2066.7,936.9" fill="none" stroke="#f2f2f2" stroke-width="2.3" stroke-linejoin="round"/>
<polyline points="2047.0,1011.8 2042.0,1030.7" fill="none" stroke="#f2f2f2" stroke-width="2.3" stroke-linejoin="round"/>
<polygon points="2098.7,945.2 2137.2,955.2 2118.7,1031.0 2079.5,1020.5" fill="none" stroke="#f2f2f2" stroke-width="2.3" stroke-linejoin="round"/>
<polyline points="2122.6,931.5 2117.9,950.2" fill="none" stroke="#f2f2f2" stroke-width="2.3" stroke-linejoin="round"/>
<polyline points="2099.1,1025.8 2094.3,1044.9" fill="none" stroke="#f2f2f2" stroke-width="2.3" stroke-linejoin="round"/>
<polygon points="2150.2,958.6 2189.1,968.7 2171.5,1045.2 2131.9,1034.6" fill="none" stroke="#f2f2f2" stroke-width="2.3" stroke-linejoin="round"/>
<polyline points="2174.0,944.7 2169.6,963.7" fill="none" stroke="#f2f2f2" stroke-width="2.3" stroke-linejoin="round"/>
<polyline points="2151.7,1039.9 2147.2,1059.1" fill="none" stroke="#f2f2f2" stroke-width="2.3" stroke-linejoin="round"/>
<polygon points="2201.6,972.0 2240.8,982.2 2224.2,1059.3 2184.3,1048.6" fill="none" stroke="#f2f2f2" stroke-width="2.3" stroke-linejoin="round"/>
<polyline points="2225.4,958.0 2221.2,977.1" fill="none" stroke="#f2f2f2" stroke-width="2.3" stroke-linejoin="round"/>
<polyline points="2204.2,1053.9 2199.9,1073.4" fill="none" stroke="#f2f2f2" stroke-width="2.3" stroke-linejoin="round"/>
<polygon points="1713.0,766.8 1786.0,785.2 1774.6,817.5 1701.1,798.7" fill="none" stroke="#f2f2f2" stroke-width="2.3" stroke-linejoin="round"/>
<polyline points="1689.9,778.3 1707.1,782.7" fill="none" stroke="#f2f2f2" stroke-width="2.3" stroke-linejoin="round"/>
<polyline points="1780.3,801.3 1797.0,805.5" fill="none" stroke="#f2f2f2" stroke-width="2.3" stroke-linejoin="round"/>
<polygon points="1901.5,814.4 1977.3,833.5 1967.4,866.8 1891.1,847.3" fill="none" stroke="#f2f2f2" stroke-width="2.3" stroke-linejoin="round"/>
<polyline points="1879.3,826.4 1896.3,830.8" fill="none" stroke="#f2f2f2" stroke-width="2.3" stroke-linejoin="round"/>
<polyline points="1972.3,850.1 1990.0,854.6" fill="none" stroke="#f2f2f2" stroke-width="2.3" stroke-linejoin="round"/>
<polygon points="1696.6,810.8 1770.3,829.7 1758.7,862.8 1684.4,843.5" fill="none" stroke="#f2f2f2" stroke-width="2.3" stroke-linejoin="round"/>
<polyline points="1673.2,822.6 1690.5,827.0" fill="none" stroke="#f2f2f2" stroke-width="2.3" stroke-linejoin="round"/>
<polyline points="1764.5,846.2 1781.4,850.6" fill="none" stroke="#f2f2f2" stroke-width="2.3" stroke-linejoin="round"/>
<polygon points="1887.1,859.8 1963.7,879.5 1953.6,913.7 1876.4,893.5" fill="none" stroke="#f2f2f2" stroke-width="2.3" stroke-linejoin="round"/>
<polyline points="1864.6,872.1 1881.8,876.6" fill="none" stroke="#f2f2f2" stroke-width="2.3" stroke-linejoin="round"/>
<polyline points="1958.6,896.5 1976.5,901.1" fill="none" stroke="#f2f2f2" stroke-width="2.3" stroke-linejoin="round"/>
<polygon points="1679.7,855.8 1754.3,875.4 1742.3,909.3 1667.2,889.3" fill="none" stroke="#f2f2f2" stroke-width="2.3" stroke-linejoin="round"/>
<polyline points="1656.0,867.9 1673.5,872.5" fill="none" stroke="#f2f2f2" stroke-width="2.3" stroke-linejoin="round"/>
<polyline points="1748.3,892.3 1765.4,896.8" fill="none" stroke="#f2f2f2" stroke-width="2.3" stroke-linejoin="round"/>
<polygon points="1872.3,906.3 1949.7,926.6 1939.4,961.7 1861.3,940.9" fill="none" stroke="#f2f2f2" stroke-width="2.3" stroke-linejoin="round"/>
<polyline points="1849.5,919.0 1866.9,923.6" fill="none" stroke="#f2f2f2" stroke-width="2.3" stroke-linejoin="round"/>
<polyline points="1944.6,944.1 1962.6,948.8" fill="none" stroke="#f2f2f2" stroke-width="2.3" stroke-linejoin="round"/>
<polygon points="1511.9,744.1 1581.2,761.8 1568.2,793.5 1498.3,775.4" fill="none" stroke="#f2f2f2" stroke-width="2.3" stroke-linejoin="round"/>
<polyline points="1488.1,755.3 1505.1,759.7" fill="none" stroke="#f2f2f2" stroke-width="2.3" stroke-linejoin="round"/>
<polyline points="1574.7,777.6 1591.9,782.0" fill="none" stroke="#f2f2f2" stroke-width="2.3" stroke-linejoin="round"/>
<polygon points="1443.8,784.4 1514.4,802.9 1500.6,835.3 1429.5,816.4" fill="none" stroke="#f2f2f2" stroke-width="2.3" stroke-linejoin="round"/>
<polyline points="1420.8,796.2 1436.7,800.4" fill="none" stroke="#f2f2f2" stroke-width="2.3" stroke-linejoin="round"/>
<polyline points="1507.5,819.0 1523.6,823.2" fill="none" stroke="#f2f2f2" stroke-width="2.3" stroke-linejoin="round"/>
<polyline points="1788.1,736.3 1873.9,757.6" fill="none" stroke="#f2f2f2" stroke-width="2.3" stroke-linejoin="round"/>
<polyline points="1775.2,772.6 1861.7,794.4" fill="none" stroke="#f2f2f2" stroke-width="2.3" stroke-linejoin="round"/>
<polyline points="2054.8,801.6 2145.2,823.9" fill="none" stroke="#f2f2f2" stroke-width="2.3" stroke-linejoin="round"/>
<polyline points="2044.1,840.4 2135.3,863.3" fill="none" stroke="#f2f2f2" stroke-width="2.3" stroke-linejoin="round"/>
<path d="M358.80 580.90V595.29A6.85 7.41 0 0 0 372.51 595.29V580.90M391.93 580.90L379.36 596.60H394.90M390.79 590.71V602.70" fill="none" stroke="#f2f2f2" stroke-width="2.0" vector-effect="non-scaling-stroke" stroke-linecap="round" stroke-linejoin="round" transform="matrix(0.83839 0.18427 -0.29846 0.71328 1551.34 -57.85)"/>
<path d="M628.00 412.80V427.19A6.87 7.41 0 0 0 641.73 427.19V412.80M649.28 416.51Q651.57 412.80 656.15 412.80Q663.01 412.80 663.01 419.34Q663.01 422.61 658.89 425.88L648.60 434.60H663.70" fill="none" stroke="#f2f2f2" stroke-width="2.0" vector-effect="non-scaling-stroke" stroke-linecap="round" stroke-linejoin="round" transform="matrix(0.84921 0.17602 -0.23619 0.68861 1514.14 -41.07)"/>
<path d="M907.30 417.40V431.79A7.00 7.41 0 0 0 921.30 431.79V417.40M928.30 424.59L936.23 417.40V439.20M928.30 439.20H942.30" fill="none" stroke="#f2f2f2" stroke-width="2.0" vector-effect="non-scaling-stroke" stroke-linecap="round" stroke-linejoin="round" transform="matrix(0.89044 0.18485 -0.18906 0.71725 1461.60 -60.23)"/>
<path d="M182.40 512.10V528.23Q182.40 533.90 177.49 533.90Q174.29 533.90 172.80 531.72M200.53 512.10L188.80 527.80H203.30M199.46 521.91V533.90" fill="none" stroke="#f2f2f2" stroke-width="2.0" vector-effect="non-scaling-stroke" stroke-linecap="round" stroke-linejoin="round" transform="matrix(0.80261 0.17219 -0.31769 0.67493 1572.24 -33.01)"/>
<path d="M1187.83 651.90V668.03Q1187.83 673.70 1182.75 673.70Q1179.44 673.70 1177.90 671.52M1195.10 655.61Q1197.31 651.90 1201.72 651.90Q1208.34 651.90 1208.34 658.44Q1208.34 661.71 1204.37 664.98L1194.44 673.70H1209.00" fill="none" stroke="#f2f2f2" stroke-width="2.0" vector-effect="non-scaling-stroke" stroke-linecap="round" stroke-linejoin="round" transform="matrix(0.98082 0.22107 -0.15438 0.83028 1346.32 -160.99)"/>
<path d="M122.18 1119.70V1135.83Q122.18 1141.50 117.28 1141.50Q114.09 1141.50 112.60 1139.32M129.64 1119.70H141.77L134.96 1128.42Q142.20 1128.42 142.20 1134.96Q142.20 1141.50 135.39 1141.50Q131.13 1141.50 128.57 1139.32" fill="none" stroke="#f2f2f2" stroke-width="2.0" vector-effect="non-scaling-stroke" stroke-linecap="round" stroke-linejoin="round" transform="matrix(0.88963 0.23840 -0.42832 0.87881 1652.41 -216.05)"/>
<path d="M291.77 1188.70V1204.83Q291.77 1210.50 286.52 1210.50Q283.10 1210.50 281.50 1208.32M298.61 1195.89L306.37 1188.70V1210.50M298.61 1210.50H312.30" fill="none" stroke="#f2f2f2" stroke-width="2.0" vector-effect="non-scaling-stroke" stroke-linecap="round" stroke-linejoin="round" transform="matrix(0.93120 0.25630 -0.41152 0.93394 1623.95 -284.15)"/>
<path d="M642.92 884.15Q639.98 881.10 635.90 881.10Q627.30 881.10 627.30 892.00Q627.30 902.90 635.90 902.90Q639.98 902.90 642.92 899.85M649.72 888.29L657.41 881.10V902.90M649.72 902.90H663.30" fill="none" stroke="#f2f2f2" stroke-width="2.0" vector-effect="non-scaling-stroke" stroke-linecap="round" stroke-linejoin="round" transform="matrix(0.93238 0.22837 -0.29180 0.85034 1497.74 -183.34)"/>
<path d="M921.87 889.55Q919.05 886.50 915.14 886.50Q906.90 886.50 906.90 897.40Q906.90 908.30 915.14 908.30Q919.05 908.30 921.87 905.25M929.03 890.21Q931.20 886.50 935.54 886.50Q942.05 886.50 942.05 893.04Q942.05 896.31 938.14 899.58L928.38 908.30H942.70" fill="none" stroke="#f2f2f2" stroke-width="2.0" vector-effect="non-scaling-stroke" stroke-linecap="round" stroke-linejoin="round" transform="matrix(0.98314 0.24128 -0.23485 0.89098 1406.82 -229.87)"/>
<path d="M729.00 211.90V226.29A6.07 7.41 0 0 0 741.14 226.29V211.90M747.20 219.09L754.08 211.90V233.70M747.20 233.70H759.34M765.41 235.23H780.78M786.85 233.70L793.52 211.90L800.20 233.70M789.28 227.60H797.77M806.27 233.70V211.90H810.31Q817.59 211.90 817.59 222.80Q817.59 233.70 810.31 233.70ZM823.66 233.70V211.90H830.13Q836.00 211.90 836.00 216.91Q836.00 221.93 830.13 221.93H823.66M829.73 221.93L836.00 233.70" fill="none" stroke="#f2f2f2" stroke-width="2.0" vector-effect="non-scaling-stroke" stroke-linecap="round" stroke-linejoin="round" transform="matrix(0.83576 0.16177 -0.19609 0.64449 1510.69 -16.55)"/>
<path d="M908.49 224.81Q910.79 221.10 915.40 221.10Q922.31 221.10 922.31 227.64Q922.31 230.91 918.16 234.18L907.80 242.90H923.00" fill="none" stroke="#f2f2f2" stroke-width="2.0" vector-effect="non-scaling-stroke" stroke-linecap="round" stroke-linejoin="round" transform="matrix(0.85530 0.16606 -0.17534 0.65849 1489.37 -23.39)"/>
<path d="M147.73 673.91Q150.15 670.20 155.00 670.20Q162.27 670.20 162.27 676.74Q162.27 680.01 157.91 683.28L147.00 692.00H163.00" fill="none" stroke="#f2f2f2" stroke-width="2.0" vector-effect="non-scaling-stroke" stroke-linecap="round" stroke-linejoin="round" transform="matrix(0.82131 0.18633 -0.34490 0.71884 1585.46 -61.94)"/>
<path d="M147.00 726.19L156.07 719.00V740.80M147.00 740.80H163.00" fill="none" stroke="#f2f2f2" stroke-width="2.0" vector-effect="non-scaling-stroke" stroke-linecap="round" stroke-linejoin="round" transform="matrix(0.82867 0.19132 -0.35232 0.73431 1589.56 -73.64)"/>
<path d="M161.97 867.10H148.55L147.52 876.91Q150.87 875.17 154.74 875.17Q163.00 875.17 163.00 881.92Q163.00 888.90 154.74 888.90Q149.58 888.90 147.00 886.28" fill="none" stroke="#f2f2f2" stroke-width="2.0" vector-effect="non-scaling-stroke" stroke-linecap="round" stroke-linejoin="round" transform="matrix(0.85178 0.20755 -0.37638 0.78445 1605.36 -116.55)"/>
<path d="M159.94 907.20L147.00 922.90H163.00M158.76 917.01V929.00" fill="none" stroke="#f2f2f2" stroke-width="2.0" vector-effect="non-scaling-stroke" stroke-linecap="round" stroke-linejoin="round" transform="matrix(0.85826 0.21225 -0.38331 0.79891 1610.59 -130.27)"/>
<path d="M1076.80 855.39L1083.71 848.20V870.00M1076.80 870.00H1089.00" fill="none" stroke="#f2f2f2" stroke-width="2.0" vector-effect="non-scaling-stroke" stroke-linecap="round" stroke-linejoin="round" transform="matrix(1.00423 0.24300 -0.19556 0.89692 1351.12 -236.81)"/>
<path d="M240.40 968.30V990.10M247.71 972.01Q249.93 968.30 254.36 968.30Q261.00 968.30 261.00 974.84Q261.00 978.11 257.01 981.38L247.05 990.10H261.67M283.60 971.35Q280.72 968.30 276.73 968.30Q268.31 968.30 268.31 979.20Q268.31 990.10 276.73 990.10Q280.72 990.10 283.60 987.05M307.96 990.10V968.30H314.61Q321.03 968.30 321.03 974.19Q321.03 980.07 314.61 980.07H307.96M327.68 974.40V985.74Q327.68 990.10 332.55 990.10Q336.54 990.10 338.09 987.92M338.09 974.40V990.10M344.74 968.30V986.83Q344.74 990.10 349.17 990.10M355.81 968.30V986.83Q355.81 990.10 360.24 990.10M366.89 968.30V982.69A6.65 7.41 0 0 0 380.18 982.69V968.30M386.82 974.40V996.64M386.82 977.02Q389.04 974.40 392.36 974.40Q397.90 974.40 397.90 982.25Q397.90 990.10 392.36 990.10Q389.04 990.10 386.82 987.48" fill="none" stroke="#f2f2f2" stroke-width="2.0" vector-effect="non-scaling-stroke" stroke-linecap="round" stroke-linejoin="round" transform="matrix(0.89434 0.22627 -0.36606 0.84257 1585.62 -175.07)"/>
<path d="M392.51 1220.03Q390.03 1217.20 386.31 1217.20Q380.11 1217.20 380.11 1222.65Q380.11 1227.01 386.31 1228.10Q392.51 1229.19 392.51 1233.99Q392.51 1239.00 385.90 1239.00Q382.18 1239.00 379.70 1236.38M398.71 1239.00V1217.20H402.84Q410.27 1217.20 410.27 1228.10Q410.27 1239.00 402.84 1239.00ZM416.47 1239.00L423.29 1217.20L430.11 1239.00M418.95 1232.90H427.63M450.76 1216.11L436.30 1242.27M469.77 1220.03Q467.29 1217.20 463.57 1217.20Q457.37 1217.20 457.37 1222.65Q457.37 1227.01 463.57 1228.10Q469.77 1229.19 469.77 1233.99Q469.77 1239.00 463.16 1239.00Q459.44 1239.00 456.96 1236.38M490.22 1220.25Q487.54 1217.20 483.82 1217.20Q475.97 1217.20 475.97 1228.10Q475.97 1239.00 483.82 1239.00Q487.54 1239.00 490.22 1235.95M496.42 1217.20V1239.00H508.40" fill="none" stroke="#f2f2f2" stroke-width="2.0" vector-effect="non-scaling-stroke" stroke-linecap="round" stroke-linejoin="round" transform="matrix(0.96375 0.26823 -0.38799 0.97072 1583.28 -333.24)"/>
<path d="M559.14 1121.21Q561.59 1117.50 566.50 1117.50Q573.86 1117.50 573.86 1124.04Q573.86 1127.31 569.45 1130.58L558.40 1139.30H574.60" fill="none" stroke="#f2f2f2" stroke-width="2.0" vector-effect="non-scaling-stroke" stroke-linecap="round" stroke-linejoin="round" transform="matrix(0.96598 0.25864 -0.34425 0.94221 1530.59 -294.78)"/>
<path d="M619.20 1146.90V1161.29A6.03 7.41 0 0 0 631.27 1161.29V1146.90M637.90 1150.61Q639.92 1146.90 643.94 1146.90Q649.97 1146.90 649.97 1153.44Q649.97 1156.71 646.35 1159.98L637.30 1168.70H650.57M656.61 1170.23H671.89M677.93 1168.70L684.56 1146.90L691.20 1168.70M680.34 1162.60H688.79M697.24 1168.70V1146.90H701.26Q708.50 1146.90 708.50 1157.80Q708.50 1168.70 701.26 1168.70ZM714.53 1168.70V1146.90H720.97Q726.80 1146.90 726.80 1151.91Q726.80 1156.93 720.97 1156.93H714.53M720.57 1156.93L726.80 1168.70" fill="none" stroke="#f2f2f2" stroke-width="2.0" vector-effect="non-scaling-stroke" stroke-linecap="round" stroke-linejoin="round" transform="matrix(0.99252 0.26878 -0.32640 0.97339 1493.71 -336.72)"/>
<path d="M2035.7 263.0Q1999.6 255.9 1999.5 264.7" fill="none" stroke="#9a9a92" stroke-width="8.0" stroke-linecap="round"/><path d="M2035.2 262.4Q1999.1 255.3 1999.0 264.1" fill="none" stroke="#ededE6" stroke-width="5.8" stroke-linecap="round"/>
<path d="M2091.2 273.8Q2127.9 281.0 2126.9 289.8" fill="none" stroke="#9a9a92" stroke-width="8.0" stroke-linecap="round"/><path d="M2090.7 273.2Q2127.4 280.4 2126.4 289.2" fill="none" stroke="#ededE6" stroke-width="5.8" stroke-linecap="round"/>
<linearGradient id="rg0" gradientUnits="userSpaceOnUse" x1="2067.0" y1="249.7" x2="2059.7" y2="287.0"><stop offset="0" stop-color="#f3cd98"/><stop offset="0.3" stop-color="#fde6bb"/><stop offset="0.6" stop-color="#f0c68e"/><stop offset="1" stop-color="#b8834f"/></linearGradient>
<polygon points="2041.5,276.1 2041.5,274.4 2041.7,272.2 2042.0,269.6 2042.4,266.8 2043.0,263.9 2043.7,261.0 2044.4,258.3 2045.1,255.9 2045.8,254.0 2046.4,252.6 2047.0,251.8 2047.4,251.7 2085.0,259.0 2085.2,259.6 2085.3,260.7 2085.2,262.4 2085.0,264.6 2084.6,267.2 2084.1,270.0 2083.5,272.9 2082.8,275.7 2082.2,278.4 2081.5,280.8 2080.8,282.7 2080.2,284.1 2079.7,284.9 2079.3,285.1 2041.9,277.7 2041.6,277.2" fill="url(#rg0)"/>
<polygon points="2031.9,268.3 2032.0,266.4 2032.1,265.5 2032.2,264.5 2032.4,263.3 2032.6,262.1 2032.9,261.0 2033.2,259.9 2033.5,258.9 2033.7,258.1 2034.4,256.3 2034.8,255.4 2035.1,255.0 2036.6,252.9 2037.1,252.3 2039.7,250.7 2040.1,250.6 2043.3,249.8 2046.9,249.7 2050.7,250.2 2051.0,250.8 2051.2,252.1 2051.1,254.1 2050.9,256.7 2050.5,259.6 2050.0,262.9 2049.3,266.2 2048.6,269.6 2047.8,272.6 2046.9,275.4 2046.2,277.6 2045.4,279.2 2044.8,280.1 2044.3,280.3 2040.7,279.4 2037.4,277.9 2034.8,276.0 2033.0,273.5 2032.7,273.1 2032.0,270.0 2031.9,269.3" fill="url(#rg0)"/>
<polygon points="2075.7,284.8 2075.7,282.8 2076.0,280.3 2076.4,277.3 2077.0,274.0 2077.7,270.6 2078.5,267.2 2079.3,264.1 2080.1,261.3 2080.9,259.0 2081.6,257.4 2082.1,256.5 2082.6,256.4 2086.2,257.4 2089.5,258.8 2092.2,260.8 2094.0,263.2 2094.2,263.6 2094.9,266.8 2094.9,267.5 2094.9,269.7 2094.8,270.4 2094.7,271.3 2094.6,272.3 2094.4,273.4 2094.1,274.6 2093.8,275.8 2093.6,276.9 2093.3,277.9 2093.0,278.6 2092.3,280.5 2091.9,281.3 2091.6,281.8 2089.6,284.5 2087.0,286.0 2086.6,286.2 2083.4,287.0 2079.8,287.1 2076.0,286.6 2075.8,286.1" fill="url(#rg0)"/>
<polyline points="2052.6,252.6 2052.2,252.9 2051.9,253.4 2051.4,254.3 2051.0,255.5 2050.5,256.9 2050.0,258.5 2049.5,260.3 2049.0,262.3 2048.5,264.3 2048.1,266.4 2047.7,268.5 2047.4,270.5 2047.1,272.3 2046.9,274.0 2046.8,275.5 2046.8,276.8 2046.8,277.8 2046.9,278.4 2047.1,278.8" fill="none" stroke="#9c7048" stroke-width="0.9" opacity="0.7"/>
<path d="M2205.2 296.2Q2168.1 288.9 2166.8 297.7" fill="none" stroke="#9a9a92" stroke-width="8.0" stroke-linecap="round"/><path d="M2204.7 295.6Q2167.6 288.3 2166.3 297.1" fill="none" stroke="#ededE6" stroke-width="5.8" stroke-linecap="round"/>
<path d="M2262.5 307.4Q2300.3 314.9 2298.1 323.5" fill="none" stroke="#9a9a92" stroke-width="8.0" stroke-linecap="round"/><path d="M2262.0 306.8Q2299.8 314.3 2297.6 322.9" fill="none" stroke="#ededE6" stroke-width="5.8" stroke-linecap="round"/>
<linearGradient id="rg1" gradientUnits="userSpaceOnUse" x1="2237.4" y1="283.2" x2="2230.1" y2="320.5"><stop offset="0" stop-color="#f3cd98"/><stop offset="0.3" stop-color="#fde6bb"/><stop offset="0.6" stop-color="#f0c68e"/><stop offset="1" stop-color="#b8834f"/></linearGradient>
<polygon points="2211.3,310.7 2211.5,309.6 2211.8,307.9 2212.2,305.8 2212.7,303.2 2213.4,300.4 2214.1,297.4 2214.8,294.5 2215.4,291.7 2216.1,289.3 2216.6,287.3 2217.1,285.9 2217.4,285.0 2217.6,284.9 2256.4,292.4 2256.3,292.9 2256.1,294.0 2255.8,295.7 2255.3,297.9 2254.7,300.4 2254.0,303.2 2253.3,306.2 2252.6,309.1 2251.9,311.8 2251.3,314.2 2250.8,316.2 2250.4,317.6 2250.1,318.5 2250.0,318.8 2211.3,311.1" fill="url(#rg1)"/>
<polygon points="2201.4,303.3 2201.5,300.9 2201.5,300.4 2201.6,299.7 2201.8,298.9 2202.0,297.8 2202.3,296.7 2202.5,295.5 2202.8,294.3 2203.1,293.2 2203.4,292.2 2203.6,291.4 2203.8,290.8 2203.9,290.4 2204.9,288.2 2207.1,285.4 2207.2,285.3 2210.1,283.7 2213.4,282.9 2217.1,282.8 2221.0,283.3 2221.0,283.9 2220.8,285.2 2220.5,287.1 2220.0,289.7 2219.3,292.6 2218.6,295.9 2217.8,299.3 2217.0,302.6 2216.2,305.8 2215.5,308.6 2214.8,310.9 2214.3,312.6 2214.0,313.6 2213.8,313.8 2210.1,312.8 2206.7,311.3 2204.0,309.4 2202.2,306.9 2201.4,303.6" fill="url(#rg1)"/>
<polygon points="2246.6,320.3 2246.6,319.8 2246.8,318.6 2247.2,316.6 2247.8,314.1 2248.5,311.1 2249.3,307.8 2250.1,304.4 2250.9,301.0 2251.7,297.8 2252.4,294.9 2253.1,292.6 2253.5,290.9 2253.8,289.9 2253.9,289.7 2257.7,290.7 2261.1,292.2 2263.8,294.2 2265.7,296.7 2266.4,300.0 2266.3,302.6 2266.3,302.8 2266.1,303.9 2265.3,306.9 2265.0,308.1 2264.7,309.3 2264.5,310.4 2264.2,311.4 2263.8,312.8 2263.8,313.2 2263.7,313.3 2262.6,315.6 2260.4,318.4 2257.6,319.9 2254.2,320.7 2250.4,320.8" fill="url(#rg1)"/>
<polyline points="2223.1,285.8 2222.9,286.1 2222.7,286.7 2222.4,287.6 2222.1,288.8 2221.7,290.3 2221.2,292.0 2220.7,293.8 2220.2,295.8 2219.7,297.9 2219.3,300.0 2218.8,302.1 2218.3,304.1 2217.9,305.9 2217.6,307.6 2217.3,309.1 2217.0,310.4 2216.9,311.3 2216.8,312.0 2216.8,312.3" fill="none" stroke="#9c7048" stroke-width="0.9" opacity="0.7"/>
<polygon points="1756.2,161.3 1750.8,173.5 1754.5,195.5 1759.7,183.3" fill="#6c6c66"/>
<polygon points="1744.5,172.3 1750.8,173.5 1754.5,195.5 1748.3,194.3" fill="#9a9a92"/>
<polygon points="1749.9,160.1 1756.2,161.3 1750.8,173.5 1744.5,172.3" fill="#c8c8c0"/>
<polygon points="1751.3,154.4 1766.6,157.3 1759.0,175.0 1743.6,172.0" fill="#f8f8ec"/>
<polygon points="1766.6,157.3 1759.0,175.0 1759.6,179.3 1767.3,161.7" fill="#b4b4ac"/>
<polygon points="1743.6,172.0 1759.0,175.0 1759.6,179.3 1744.4,176.4" fill="#ededE2"/>
<polygon points="1742.6,192.6 1737.1,205.1 1741.0,226.7 1746.4,214.4" fill="#6c6c66"/>
<polygon points="1730.8,203.8 1737.1,205.1 1741.0,226.7 1734.8,225.5" fill="#9a9a92"/>
<polygon points="1736.2,191.3 1742.6,192.6 1737.1,205.1 1730.8,203.8" fill="#c8c8c0"/>
<polygon points="1737.7,185.7 1753.1,188.6 1745.3,206.7 1729.8,203.7" fill="#f8f8ec"/>
<polygon points="1753.1,188.6 1745.3,206.7 1746.0,211.0 1753.8,193.0" fill="#b4b4ac"/>
<polygon points="1729.8,203.7 1745.3,206.7 1746.0,211.0 1730.6,207.9" fill="#ededE2"/>
<polygon points="1728.7,224.5 1723.1,237.3 1727.3,258.7 1732.8,246.0" fill="#6c6c66"/>
<polygon points="1716.7,236.0 1723.1,237.3 1727.3,258.7 1721.0,257.4" fill="#9a9a92"/>
<polygon points="1722.3,223.2 1728.7,224.5 1723.1,237.3 1716.7,236.0" fill="#c8c8c0"/>
<polygon points="1723.7,217.6 1739.3,220.6 1731.3,239.1 1715.7,235.9" fill="#f8f8ec"/>
<polygon points="1739.3,220.6 1731.3,239.1 1732.1,243.3 1740.0,224.9" fill="#b4b4ac"/>
<polygon points="1715.7,235.9 1731.3,239.1 1732.1,243.3 1716.5,240.2" fill="#ededE2"/>
<polygon points="1714.5,257.1 1708.8,270.2 1713.3,291.2 1718.9,278.3" fill="#6c6c66"/>
<polygon points="1702.4,268.9 1708.8,270.2 1713.3,291.2 1706.9,289.9" fill="#9a9a92"/>
<polygon points="1708.0,255.8 1714.5,257.1 1708.8,270.2 1702.4,268.9" fill="#c8c8c0"/>
<polygon points="1709.5,250.1 1725.2,253.3 1717.0,272.1 1701.3,268.9" fill="#f8f8ec"/>
<polygon points="1725.2,253.3 1717.0,272.1 1717.9,276.3 1726.0,257.5" fill="#b4b4ac"/>
<polygon points="1701.3,268.9 1717.0,272.1 1717.9,276.3 1702.2,273.1" fill="#ededE2"/>
<polygon points="1700.0,290.5 1694.2,303.8 1699.0,324.5 1704.7,311.3" fill="#6c6c66"/>
<polygon points="1687.7,302.4 1694.2,303.8 1699.0,324.5 1692.6,323.2" fill="#9a9a92"/>
<polygon points="1693.5,289.1 1700.0,290.5 1694.2,303.8 1687.7,302.4" fill="#c8c8c0"/>
<polygon points="1694.9,283.4 1710.8,286.7 1702.5,305.9 1686.5,302.6" fill="#f8f8ec"/>
<polygon points="1710.8,286.7 1702.5,305.9 1703.4,310.0 1711.6,290.8" fill="#b4b4ac"/>
<polygon points="1686.5,302.6 1702.5,305.9 1703.4,310.0 1687.5,306.7" fill="#ededE2"/>
<polygon points="1685.2,324.5 1679.3,338.1 1684.4,358.5 1690.2,345.0" fill="#6c6c66"/>
<polygon points="1672.7,336.7 1679.3,338.1 1684.4,358.5 1677.9,357.1" fill="#9a9a92"/>
<polygon points="1678.6,323.1 1685.2,324.5 1679.3,338.1 1672.7,336.7" fill="#c8c8c0"/>
<polygon points="1680.1,317.4 1696.0,320.8 1687.6,340.4 1671.5,337.0" fill="#f8f8ec"/>
<polygon points="1696.0,320.8 1687.6,340.4 1688.5,344.4 1697.0,324.8" fill="#b4b4ac"/>
<polygon points="1671.5,337.0 1687.6,340.4 1688.5,344.4 1672.5,341.1" fill="#ededE2"/>
<polygon points="1670.1,359.3 1664.1,373.2 1669.4,393.2 1675.4,379.4" fill="#6c6c66"/>
<polygon points="1657.4,371.8 1664.1,373.2 1669.4,393.2 1662.9,391.8" fill="#9a9a92"/>
<polygon points="1663.5,357.9 1670.1,359.3 1664.1,373.2 1657.4,371.8" fill="#c8c8c0"/>
<polygon points="1664.9,352.2 1681.0,355.6 1672.3,375.7 1656.1,372.2" fill="#f8f8ec"/>
<polygon points="1681.0,355.6 1672.3,375.7 1673.4,379.6 1682.0,359.6" fill="#b4b4ac"/>
<polygon points="1656.1,372.2 1672.3,375.7 1673.4,379.6 1657.2,376.2" fill="#ededE2"/>
<polygon points="1771.6,153.1 1867.9,171.4 1770.8,416.7 1667.7,394.4" fill="#222"/>
<polygon points="1867.9,171.4 1867.8,186.0 1772.7,427.1 1770.8,416.7" fill="#0e0e0e"/>
<polygon points="1770.8,416.7 1772.7,427.1 1672.4,405.3 1667.7,394.4" fill="#121212"/>
<polygon points="1771.0,127.3 1861.0,144.2 1762.3,389.6 1666.0,369.0" fill="#333132"/>
<polygon points="1861.0,144.2 1870.3,169.9 1771.6,419.2 1762.3,389.6" fill="#151515"/>
<polygon points="1762.3,389.6 1771.6,419.2 1665.1,396.1 1666.0,369.0" fill="#1c1c1c"/>
<polygon points="1824.7,137.3 1823.8,138.9 1822.4,140.3 1820.6,141.4 1818.5,142.2 1816.3,142.6 1814.0,142.6 1811.9,142.2 1809.9,141.4 1808.4,140.3 1807.2,138.9 1806.6,137.3 1806.4,135.6 1806.9,133.9" fill="#2a2929"/>
<polyline points="1665.0,395.9 1771.6,418.9 1870.2,169.6" fill="none" stroke="#3c3c3c" stroke-width="1"/>
<polygon points="1877.7,184.5 1872.8,197.0 1874.6,218.9 1879.4,206.5" fill="#6c6c66"/>
<polygon points="1866.4,195.8 1872.8,197.0 1874.6,218.9 1868.2,217.6" fill="#9a9a92"/>
<polygon points="1871.3,183.3 1877.7,184.5 1872.8,197.0 1866.4,195.8" fill="#c8c8c0"/>
<polygon points="1877.8,178.5 1870.7,196.5 1871.0,200.9 1878.1,182.9" fill="#b4b4ac"/>
<polygon points="1862.1,175.6 1877.8,178.5 1870.7,196.5 1855.0,193.5" fill="#f8f8ec"/>
<polygon points="1855.0,193.5 1870.7,196.5 1871.0,200.9 1855.4,197.8" fill="#ededE2"/>
<polygon points="1865.2,216.5 1860.2,229.2 1862.2,250.8 1867.1,238.1" fill="#6c6c66"/>
<polygon points="1853.7,227.9 1860.2,229.2 1862.2,250.8 1855.8,249.5" fill="#9a9a92"/>
<polygon points="1858.7,215.2 1865.2,216.5 1860.2,229.2 1853.7,227.9" fill="#c8c8c0"/>
<polygon points="1865.2,210.4 1858.0,228.8 1858.4,233.1 1865.6,214.7" fill="#b4b4ac"/>
<polygon points="1849.5,207.4 1865.2,210.4 1858.0,228.8 1842.2,225.7" fill="#f8f8ec"/>
<polygon points="1842.2,225.7 1858.0,228.8 1858.4,233.1 1842.7,230.0" fill="#ededE2"/>
<polygon points="1852.5,249.0 1847.4,262.1 1849.6,283.3 1854.6,270.4" fill="#6c6c66"/>
<polygon points="1840.8,260.8 1847.4,262.1 1849.6,283.3 1843.1,282.0" fill="#9a9a92"/>
<polygon points="1845.9,247.7 1852.5,249.0 1847.4,262.1 1840.8,260.8" fill="#c8c8c0"/>
<polygon points="1852.5,243.0 1845.1,261.8 1845.6,266.0 1852.9,247.2" fill="#b4b4ac"/>
<polygon points="1836.6,239.9 1852.5,243.0 1845.1,261.8 1829.1,258.6" fill="#f8f8ec"/>
<polygon points="1829.1,258.6 1845.1,261.8 1845.6,266.0 1829.6,262.8" fill="#ededE2"/>
<polygon points="1839.5,282.3 1834.2,295.6 1836.7,316.5 1841.8,303.4" fill="#6c6c66"/>
<polygon points="1827.6,294.3 1834.2,295.6 1836.7,316.5 1830.1,315.2" fill="#9a9a92"/>
<polygon points="1832.8,281.0 1839.5,282.3 1834.2,295.6 1827.6,294.3" fill="#c8c8c0"/>
<polygon points="1839.4,276.3 1831.9,295.5 1832.4,299.6 1839.9,280.5" fill="#b4b4ac"/>
<polygon points="1823.4,273.1 1839.4,276.3 1831.9,295.5 1815.8,292.2" fill="#f8f8ec"/>
<polygon points="1815.8,292.2 1831.9,295.5 1832.4,299.6 1816.3,296.3" fill="#ededE2"/>
<polygon points="1826.1,316.4 1820.8,330.0 1823.5,350.5 1828.7,337.0" fill="#6c6c66"/>
<polygon points="1814.1,328.6 1820.8,330.0 1823.5,350.5 1816.9,349.1" fill="#9a9a92"/>
<polygon points="1819.5,315.0 1826.1,316.4 1820.8,330.0 1814.1,328.6" fill="#c8c8c0"/>
<polygon points="1826.1,310.3 1818.4,329.9 1819.0,333.9 1826.6,314.4" fill="#b4b4ac"/>
<polygon points="1809.9,307.0 1826.1,310.3 1818.4,329.9 1802.1,326.5" fill="#f8f8ec"/>
<polygon points="1802.1,326.5 1818.4,329.9 1819.0,333.9 1802.7,330.6" fill="#ededE2"/>
<polygon points="1812.5,351.1 1807.1,365.0 1810.1,385.2 1815.4,371.4" fill="#6c6c66"/>
<polygon points="1800.3,363.6 1807.1,365.0 1810.1,385.2 1803.4,383.8" fill="#9a9a92"/>
<polygon points="1805.8,349.7 1812.5,351.1 1807.1,365.0 1800.3,363.6" fill="#c8c8c0"/>
<polygon points="1812.5,345.0 1804.6,365.1 1805.2,369.0 1813.1,349.1" fill="#b4b4ac"/>
<polygon points="1796.1,341.6 1812.5,345.0 1804.6,365.1 1788.2,361.6" fill="#f8f8ec"/>
<polygon points="1788.2,361.6 1804.6,365.1 1805.2,369.0 1788.8,365.6" fill="#ededE2"/>
<polygon points="1798.6,386.7 1793.1,400.9 1796.3,420.6 1801.8,406.6" fill="#6c6c66"/>
<polygon points="1786.2,399.4 1793.1,400.9 1796.3,420.6 1789.6,419.2" fill="#9a9a92"/>
<polygon points="1791.8,385.2 1798.6,386.7 1793.1,400.9 1786.2,399.4" fill="#c8c8c0"/>
<polygon points="1798.6,380.5 1790.5,401.0 1791.2,404.9 1799.2,384.5" fill="#b4b4ac"/>
<polygon points="1782.1,377.0 1798.6,380.5 1790.5,401.0 1773.9,397.5" fill="#f8f8ec"/>
<polygon points="1773.9,397.5 1790.5,401.0 1791.2,404.9 1774.6,401.4" fill="#ededE2"/>
<path d="M2024.8 295.9Q1988.4 288.7 1988.3 297.3" fill="none" stroke="#9a9a92" stroke-width="8.0" stroke-linecap="round"/><path d="M2024.3 295.3Q1987.9 288.1 1987.8 296.7" fill="none" stroke="#ededE6" stroke-width="5.8" stroke-linecap="round"/>
<path d="M2080.8 307.1Q2117.9 314.5 2116.9 323.1" fill="none" stroke="#9a9a92" stroke-width="8.0" stroke-linecap="round"/><path d="M2080.3 306.5Q2117.4 313.9 2116.4 322.5" fill="none" stroke="#ededE6" stroke-width="5.8" stroke-linecap="round"/>
<linearGradient id="rg2" gradientUnits="userSpaceOnUse" x1="2056.4" y1="282.9" x2="2049.0" y2="320.1"><stop offset="0" stop-color="#f3cd98"/><stop offset="0.3" stop-color="#fde6bb"/><stop offset="0.6" stop-color="#f0c68e"/><stop offset="1" stop-color="#b8834f"/></linearGradient>
<polygon points="2030.6,307.6 2030.8,305.4 2031.1,302.9 2031.5,300.1 2032.1,297.1 2032.8,294.2 2033.5,291.5 2034.2,289.0 2034.9,287.1 2035.6,285.6 2036.1,284.8 2036.6,284.6 2074.5,292.2 2074.8,292.6 2074.9,293.7 2074.8,295.4 2074.6,297.6 2074.2,300.1 2073.7,302.9 2073.1,305.8 2072.5,308.7 2071.8,311.4 2071.1,313.8 2070.4,315.8 2069.8,317.2 2069.3,318.1 2068.9,318.3 2031.1,310.8 2030.8,310.3 2030.6,309.2" fill="url(#rg2)"/>
<polygon points="2021.0,301.4 2021.1,299.4 2021.1,298.6 2021.2,297.5 2021.4,296.4 2021.7,295.2 2021.9,294.0 2022.2,292.9 2022.5,291.9 2023.0,290.4 2023.5,289.2 2023.9,288.4 2024.2,287.9 2026.2,285.2 2028.8,283.7 2029.2,283.5 2032.5,282.7 2036.1,282.6 2039.9,283.1 2040.3,283.6 2040.4,284.9 2040.4,286.9 2040.2,289.4 2039.8,292.4 2039.3,295.6 2038.7,299.0 2037.9,302.3 2037.1,305.4 2036.2,308.2 2035.4,310.5 2034.7,312.2 2034.0,313.2 2033.5,313.4 2029.9,312.4 2026.6,310.9 2023.9,309.0 2021.8,306.2 2021.1,303.0 2021.0,302.3" fill="url(#rg2)"/>
<polygon points="2065.1,318.1 2065.2,316.2 2065.4,313.7 2065.8,310.8 2066.4,307.5 2067.1,304.0 2067.9,300.6 2068.7,297.4 2069.5,294.6 2070.3,292.3 2071.1,290.6 2071.7,289.7 2072.1,289.4 2075.8,290.5 2079.1,291.9 2081.8,293.9 2083.7,296.4 2083.9,296.8 2084.6,300.0 2084.6,300.6 2084.5,302.9 2084.5,303.6 2084.4,304.4 2084.3,305.5 2084.1,306.6 2083.8,307.8 2083.5,309.0 2083.2,310.1 2083.0,311.1 2082.7,311.9 2081.9,313.7 2081.6,314.6 2081.3,315.1 2079.3,317.8 2079.0,317.9 2076.2,319.5 2073.0,320.3 2069.3,320.4 2065.5,319.9 2065.2,319.4" fill="url(#rg2)"/>
<polyline points="2041.8,285.6 2041.5,285.9 2041.1,286.5 2040.6,287.4 2040.1,288.6 2039.6,290.0 2039.1,291.7 2038.6,293.6 2038.1,295.5 2037.6,297.6 2037.2,299.7 2036.8,301.7 2036.5,303.7 2036.3,305.6 2036.1,307.3 2036.0,308.8 2036.0,310.0 2036.0,310.9 2036.2,311.6 2036.4,311.9" fill="none" stroke="#9c7048" stroke-width="0.9" opacity="0.7"/>
<path d="M2196.0 330.1Q2158.4 322.6 2157.2 331.2" fill="none" stroke="#9a9a92" stroke-width="8.0" stroke-linecap="round"/><path d="M2195.5 329.5Q2157.9 322.0 2156.7 330.6" fill="none" stroke="#ededE6" stroke-width="5.8" stroke-linecap="round"/>
<path d="M2253.8 341.6Q2292.0 349.2 2289.8 357.7" fill="none" stroke="#9a9a92" stroke-width="8.0" stroke-linecap="round"/><path d="M2253.3 341.0Q2291.5 348.6 2289.3 357.1" fill="none" stroke="#ededE6" stroke-width="5.8" stroke-linecap="round"/>
<linearGradient id="rg3" gradientUnits="userSpaceOnUse" x1="2228.5" y1="317.2" x2="2221.1" y2="354.4"><stop offset="0" stop-color="#f3cd98"/><stop offset="0.3" stop-color="#fde6bb"/><stop offset="0.6" stop-color="#f0c68e"/><stop offset="1" stop-color="#b8834f"/></linearGradient>
<polygon points="2202.1,344.7 2202.3,343.7 2202.6,342.0 2203.0,339.9 2203.5,337.4 2204.1,334.5 2204.8,331.6 2205.5,328.6 2206.2,325.8 2206.9,323.3 2207.4,321.3 2207.9,319.8 2208.2,318.9 2208.4,318.7 2247.6,326.4 2247.6,326.9 2247.4,327.9 2247.0,329.6 2246.6,331.7 2246.0,334.3 2245.3,337.1 2244.6,340.0 2243.9,342.9 2243.2,345.7 2242.6,348.1 2242.0,350.2 2241.6,351.7 2241.3,352.6 2241.2,352.9 2202.2,345.1" fill="url(#rg3)"/>
<polygon points="2192.1,337.2 2192.2,334.8 2192.2,334.3 2192.3,333.7 2192.5,332.8 2192.7,331.8 2193.0,330.6 2193.2,329.4 2193.5,328.2 2194.1,326.1 2194.3,325.2 2194.5,324.6 2194.6,324.3 2195.7,322.0 2197.8,319.3 2198.0,319.1 2200.8,317.5 2204.2,316.7 2208.0,316.6 2211.9,317.1 2211.9,317.6 2211.7,318.9 2211.4,320.8 2210.9,323.3 2210.3,326.3 2209.6,329.5 2208.8,332.9 2207.9,336.3 2207.1,339.5 2206.4,342.3 2205.7,344.7 2205.2,346.4 2204.8,347.5 2204.6,347.8 2200.9,346.8 2197.5,345.3 2194.8,343.3 2192.9,340.8 2192.1,337.4" fill="url(#rg3)"/>
<polygon points="2237.7,354.5 2237.8,354.0 2238.0,352.9 2238.4,351.0 2238.9,348.5 2239.6,345.5 2240.4,342.2 2241.2,338.8 2242.1,335.3 2242.9,332.1 2243.6,329.2 2244.2,326.8 2244.7,325.0 2245.0,324.0 2245.2,323.7 2249.0,324.7 2252.4,326.2 2255.1,328.2 2257.0,330.8 2257.8,334.1 2257.7,336.7 2257.7,336.9 2257.6,337.3 2257.4,338.0 2257.0,339.9 2256.4,342.2 2256.1,343.4 2255.6,345.5 2255.2,347.0 2255.1,347.4 2255.0,347.5 2253.9,349.8 2251.7,352.6 2248.8,354.1 2245.4,354.9 2241.6,355.0" fill="url(#rg3)"/>
<polyline points="2214.0,319.7 2213.8,320.0 2213.6,320.7 2213.3,321.6 2212.9,322.9 2212.5,324.4 2212.1,326.1 2211.6,328.0 2211.1,330.0 2210.6,332.1 2210.1,334.2 2209.6,336.2 2209.1,338.2 2208.7,340.1 2208.4,341.8 2208.1,343.3 2207.9,344.5 2207.7,345.4 2207.7,346.0 2207.7,346.3" fill="none" stroke="#9c7048" stroke-width="0.9" opacity="0.7"/>
<path d="M2476.0 383.8Q2481.6 353.2 2478.0 361.8" fill="none" stroke="#9a9a92" stroke-width="8.0" stroke-linecap="round"/><path d="M2475.5 383.2Q2481.1 352.6 2477.5 361.2" fill="none" stroke="#ededE6" stroke-width="5.8" stroke-linecap="round"/>
<path d="M2467.3 431.6Q2461.4 463.8 2457.9 471.8" fill="none" stroke="#9a9a92" stroke-width="8.0" stroke-linecap="round"/><path d="M2466.8 431.0Q2460.9 463.2 2457.4 471.2" fill="none" stroke="#ededE6" stroke-width="5.8" stroke-linecap="round"/>
<linearGradient id="rg9" gradientUnits="userSpaceOnUse" x1="2490.4" y1="411.0" x2="2453.0" y2="404.2"><stop offset="0" stop-color="#f3cd98"/><stop offset="0.3" stop-color="#fde6bb"/><stop offset="0.6" stop-color="#f0c68e"/><stop offset="1" stop-color="#b8834f"/></linearGradient>
<polygon points="2454.6,422.9 2460.6,390.7 2461.1,388.8 2462.2,387.0 2463.9,385.4 2466.2,384.1 2468.9,383.2 2471.9,382.8 2475.1,382.7 2478.2,383.1 2481.2,383.9 2483.8,385.1 2485.9,386.6 2487.5,388.4 2488.4,390.3 2488.7,392.3 2482.9,424.7 2482.4,426.6 2481.3,428.3 2479.5,429.8 2477.2,431.0 2474.4,431.9 2471.4,432.3 2468.3,432.3 2465.2,431.9 2462.2,431.1 2459.6,429.9 2457.5,428.4 2455.9,426.7 2454.9,424.8" fill="url(#rg9)"/>
<polygon points="2457.9,393.0 2458.4,390.8 2459.3,387.7 2460.6,384.9 2461.8,383.0 2463.6,380.9 2465.3,379.4 2467.5,378.2 2469.2,377.4 2471.4,376.6 2473.9,376.2 2476.5,376.2 2479.0,376.5 2481.4,377.2 2483.6,378.2 2485.4,379.4 2486.8,380.6 2488.3,382.3 2489.2,384.2 2490.2,386.6 2490.8,391.7 2490.5,394.9 2490.0,397.1 2488.6,399.1 2486.6,400.9 2483.9,402.4 2480.7,403.4 2477.3,403.9 2473.7,403.9 2470.1,403.5 2466.7,402.6 2463.7,401.2 2461.2,399.4 2459.3,397.4 2458.2,395.2" fill="url(#rg9)"/>
<polygon points="2452.5,423.5 2452.8,420.3 2453.3,418.1 2454.6,416.1 2456.6,414.3 2459.3,412.8 2462.4,411.8 2466.0,411.3 2469.7,411.3 2473.3,411.7 2476.8,412.7 2479.9,414.1 2482.4,415.9 2484.3,417.9 2485.4,420.1 2485.7,422.4 2485.1,424.6 2484.3,427.7 2482.9,430.5 2481.6,432.4 2479.9,434.5 2478.1,436.0 2475.9,437.2 2474.2,438.0 2471.9,438.7 2469.5,439.1 2466.9,439.1 2464.3,438.7 2461.9,438.0 2459.7,437.1 2457.9,435.8 2456.6,434.6 2455.0,432.9 2454.0,431.1 2453.1,428.6 2452.8,426.5" fill="url(#rg9)"/>
<polyline points="2460.1,393.3 2460.8,392.0 2461.8,390.8 2463.2,389.8 2464.8,388.9 2466.6,388.2 2468.6,387.6 2470.7,387.3 2473.0,387.2 2475.2,387.3 2477.4,387.6 2479.5,388.2 2481.5,388.9 2483.3,389.8 2484.8,390.9 2486.1,392.1 2487.1,393.3 2487.7,394.7 2488.0,396.1 2487.9,397.5" fill="none" stroke="#9c7048" stroke-width="0.9" opacity="0.7"/>
<path d="M2430.3 374.7Q2436.3 344.3 2433.0 352.9" fill="none" stroke="#9a9a92" stroke-width="8.0" stroke-linecap="round"/><path d="M2429.8 374.1Q2435.8 343.7 2432.5 352.3" fill="none" stroke="#ededE6" stroke-width="5.8" stroke-linecap="round"/>
<path d="M2420.9 422.2Q2414.6 454.1 2411.4 462.2" fill="none" stroke="#9a9a92" stroke-width="8.0" stroke-linecap="round"/><path d="M2420.4 421.6Q2414.1 453.5 2410.9 461.6" fill="none" stroke="#ededE6" stroke-width="5.8" stroke-linecap="round"/>
<linearGradient id="rg8" gradientUnits="userSpaceOnUse" x1="2444.3" y1="402.0" x2="2407.0" y2="394.6"><stop offset="0" stop-color="#f3cd98"/><stop offset="0.3" stop-color="#fde6bb"/><stop offset="0.6" stop-color="#f0c68e"/><stop offset="1" stop-color="#b8834f"/></linearGradient>
<polygon points="2408.5,413.5 2408.9,411.6 2415.3,379.6 2416.4,377.8 2418.0,376.3 2420.2,375.0 2422.9,374.1 2425.8,373.6 2428.9,373.5 2432.0,373.9 2434.9,374.7 2437.6,375.9 2439.8,377.4 2441.4,379.2 2442.3,381.1 2442.7,383.1 2436.4,415.3 2436.1,417.2 2435.0,418.9 2433.3,420.4 2431.0,421.6 2428.4,422.5 2425.4,422.9 2422.3,423.0 2419.3,422.6 2416.3,421.7 2413.7,420.6 2411.6,419.1 2409.9,417.4 2408.9,415.5" fill="url(#rg8)"/>
<polygon points="2412.3,383.8 2412.7,381.6 2413.6,378.5 2415.0,375.8 2416.1,373.9 2417.9,371.8 2419.5,370.3 2421.7,369.0 2423.4,368.3 2425.5,367.5 2427.9,367.1 2430.5,367.1 2433.0,367.4 2435.4,368.0 2437.6,369.0 2439.3,370.3 2440.7,371.4 2442.3,373.1 2443.2,375.0 2444.2,377.4 2444.5,379.5 2444.8,382.5 2444.4,385.6 2444.0,387.9 2442.7,389.9 2440.8,391.7 2438.2,393.2 2435.1,394.2 2431.7,394.8 2428.1,394.8 2424.6,394.3 2421.2,393.4 2418.2,392.1 2415.7,390.3 2413.8,388.3 2412.7,386.1" fill="url(#rg8)"/>
<polygon points="2406.4,414.1 2406.8,411.0 2407.2,408.8 2408.4,406.7 2410.3,404.9 2412.9,403.5 2416.0,402.4 2419.4,401.9 2423.1,401.9 2426.7,402.3 2430.1,403.3 2433.2,404.7 2435.8,406.4 2437.7,408.5 2438.8,410.7 2439.2,412.9 2438.7,415.1 2437.8,418.3 2436.4,421.1 2435.3,423.0 2433.5,425.1 2431.8,426.6 2429.6,427.7 2427.9,428.6 2425.7,429.3 2423.3,429.6 2420.8,429.6 2418.2,429.3 2415.8,428.6 2413.7,427.6 2411.8,426.4 2410.6,425.2 2408.9,423.5 2407.9,421.7 2407.0,419.2 2406.7,417.1" fill="url(#rg8)"/>
<polyline points="2414.3,384.1 2414.9,382.9 2415.9,381.7 2417.2,380.6 2418.7,379.7 2420.5,378.9 2422.5,378.4 2424.6,378.1 2426.8,378.0 2429.0,378.1 2431.1,378.4 2433.3,378.9 2435.2,379.6 2437.0,380.6 2438.6,381.6 2439.9,382.8 2440.9,384.1 2441.5,385.5 2441.9,386.9 2441.9,388.2" fill="none" stroke="#9c7048" stroke-width="0.9" opacity="0.7"/>
<path d="M2013.7 329.5Q1976.9 322.0 1976.9 330.6" fill="none" stroke="#9a9a92" stroke-width="8.0" stroke-linecap="round"/><path d="M2013.2 328.9Q1976.4 321.4 1976.4 330.0" fill="none" stroke="#ededE6" stroke-width="5.8" stroke-linecap="round"/>
<path d="M2070.2 341.0Q2107.7 348.6 2106.8 357.0" fill="none" stroke="#9a9a92" stroke-width="8.0" stroke-linecap="round"/><path d="M2069.7 340.4Q2107.2 348.0 2106.3 356.4" fill="none" stroke="#ededE6" stroke-width="5.8" stroke-linecap="round"/>
<linearGradient id="rg4" gradientUnits="userSpaceOnUse" x1="2045.7" y1="316.6" x2="2038.1" y2="353.8"><stop offset="0" stop-color="#f3cd98"/><stop offset="0.3" stop-color="#fde6bb"/><stop offset="0.6" stop-color="#f0c68e"/><stop offset="1" stop-color="#b8834f"/></linearGradient>
<polygon points="2019.5,341.4 2019.7,339.3 2020.0,336.8 2020.4,333.9 2021.0,331.0 2021.7,328.1 2022.4,325.3 2023.1,322.8 2023.8,320.8 2024.5,319.3 2025.1,318.4 2025.6,318.2 2063.9,325.9 2064.2,326.3 2064.3,327.4 2064.2,329.0 2064.0,331.2 2063.7,333.7 2063.2,336.5 2062.6,339.4 2061.9,342.3 2061.2,345.1 2060.5,347.5 2059.8,349.5 2059.2,351.0 2058.6,352.0 2058.2,352.2 2020.1,344.5 2019.7,344.1 2019.5,343.0" fill="url(#rg4)"/>
<polygon points="2009.8,335.0 2009.9,333.8 2010.0,332.2 2010.1,331.2 2010.3,330.0 2010.5,328.9 2010.8,327.7 2011.0,326.5 2011.3,325.6 2011.7,324.7 2012.3,322.9 2012.7,322.0 2013.1,321.5 2015.0,318.8 2017.7,317.2 2018.2,317.0 2021.5,316.2 2025.1,316.1 2028.9,316.6 2029.3,317.1 2029.5,318.4 2029.5,320.3 2029.3,322.8 2029.0,325.7 2028.4,329.0 2027.8,332.4 2027.0,335.7 2026.2,338.9 2025.3,341.7 2024.5,344.0 2023.7,345.8 2023.0,346.9 2022.5,347.2 2018.8,346.1 2015.5,344.6 2012.8,342.7 2012.5,342.3 2010.7,339.8 2009.9,336.6 2009.8,336.0" fill="url(#rg4)"/>
<polygon points="2054.4,352.2 2054.4,350.3 2054.7,347.8 2055.1,344.9 2055.6,341.6 2056.3,338.1 2057.1,334.7 2057.9,331.5 2058.8,328.6 2059.6,326.2 2060.3,324.5 2061.0,323.5 2061.4,323.2 2065.2,324.2 2068.5,325.7 2071.2,327.7 2073.1,330.2 2073.3,330.6 2074.1,333.8 2074.1,334.4 2074.0,336.7 2074.0,337.4 2073.9,338.2 2073.8,339.3 2073.6,340.4 2073.3,341.6 2073.0,342.8 2072.7,343.9 2072.4,344.9 2072.2,345.7 2071.1,348.4 2070.8,349.0 2068.7,351.6 2068.4,351.9 2065.7,353.4 2062.3,354.2 2058.7,354.3 2054.8,353.8 2054.5,353.4" fill="url(#rg4)"/>
<polyline points="2030.8,319.2 2030.5,319.5 2030.1,320.2 2029.6,321.1 2029.1,322.4 2028.6,323.8 2028.1,325.5 2027.6,327.4 2027.1,329.4 2026.6,331.5 2026.1,333.6 2025.8,335.7 2025.5,337.6 2025.2,339.5 2025.0,341.2 2024.9,342.6 2024.9,343.8 2025.0,344.8 2025.2,345.4 2025.4,345.7" fill="none" stroke="#9c7048" stroke-width="0.9" opacity="0.7"/>
<path d="M2384.9 365.7Q2391.3 335.5 2388.4 344.1" fill="none" stroke="#9a9a92" stroke-width="8.0" stroke-linecap="round"/><path d="M2384.4 365.1Q2390.8 334.9 2387.9 343.5" fill="none" stroke="#ededE6" stroke-width="5.8" stroke-linecap="round"/>
<path d="M2374.9 412.8Q2368.2 444.5 2365.4 452.6" fill="none" stroke="#9a9a92" stroke-width="8.0" stroke-linecap="round"/><path d="M2374.4 412.2Q2367.7 443.9 2364.9 452.0" fill="none" stroke="#ededE6" stroke-width="5.8" stroke-linecap="round"/>
<linearGradient id="rg7" gradientUnits="userSpaceOnUse" x1="2398.6" y1="393.0" x2="2361.4" y2="385.1"><stop offset="0" stop-color="#f3cd98"/><stop offset="0.3" stop-color="#fde6bb"/><stop offset="0.6" stop-color="#f0c68e"/><stop offset="1" stop-color="#b8834f"/></linearGradient>
<polygon points="2362.8,404.3 2363.1,402.4 2370.0,370.6 2370.9,368.8 2372.5,367.2 2374.7,365.9 2377.2,365.0 2380.1,364.5 2383.2,364.4 2386.2,364.8 2389.1,365.6 2391.8,366.8 2394.0,368.3 2395.6,370.1 2396.7,372.0 2397.0,374.0 2396.7,375.9 2390.1,407.8 2389.1,409.6 2387.4,411.1 2385.3,412.3 2382.7,413.2 2379.8,413.6 2376.8,413.7 2373.7,413.3 2370.8,412.5 2368.2,411.3 2366.0,409.8 2364.3,408.1 2363.3,406.2" fill="url(#rg7)"/>
<polygon points="2367.0,374.8 2367.3,372.5 2368.2,369.5 2370.7,364.8 2372.5,362.8 2374.1,361.2 2376.2,360.0 2377.9,359.2 2380.0,358.5 2382.4,358.1 2384.9,358.0 2387.4,358.3 2389.8,359.0 2391.9,359.9 2393.7,361.2 2395.0,362.3 2396.6,364.1 2397.6,365.9 2398.5,368.3 2398.9,370.4 2399.1,373.4 2398.7,376.5 2398.3,378.7 2397.2,380.8 2395.3,382.6 2392.8,384.1 2389.8,385.1 2386.5,385.7 2383.0,385.7 2379.5,385.3 2376.2,384.3 2373.1,383.0 2370.6,381.2 2368.7,379.2 2367.5,377.0" fill="url(#rg7)"/>
<polygon points="2360.8,404.9 2361.2,401.7 2361.5,399.5 2362.6,397.4 2364.4,395.6 2366.9,394.2 2369.9,393.1 2373.3,392.6 2376.8,392.5 2380.4,393.0 2383.9,393.9 2386.9,395.3 2389.5,397.1 2391.5,399.1 2392.7,401.3 2393.1,403.6 2392.8,405.8 2391.8,408.9 2390.4,411.7 2389.3,413.6 2387.5,415.7 2385.9,417.2 2383.8,418.4 2382.0,419.2 2379.9,419.9 2377.5,420.3 2375.0,420.3 2372.5,419.9 2370.1,419.3 2368.0,418.3 2366.1,417.1 2364.9,415.9 2363.3,414.2 2362.2,412.4 2361.4,409.9 2360.9,407.9" fill="url(#rg7)"/>
<polyline points="2368.9,375.0 2369.5,373.7 2370.4,372.6 2371.6,371.5 2373.1,370.6 2374.8,369.8 2376.8,369.3 2378.8,368.9 2380.9,368.8 2383.1,368.9 2385.3,369.2 2387.4,369.8 2389.3,370.5 2391.1,371.4 2392.7,372.5 2394.0,373.7 2395.1,374.9 2395.8,376.3 2396.1,377.7 2396.2,379.1" fill="none" stroke="#9c7048" stroke-width="0.9" opacity="0.7"/>
<path d="M2340.3 356.8Q2347.1 326.8 2344.5 335.4" fill="none" stroke="#9a9a92" stroke-width="8.0" stroke-linecap="round"/><path d="M2339.8 356.2Q2346.6 326.2 2344.0 334.8" fill="none" stroke="#ededE6" stroke-width="5.8" stroke-linecap="round"/>
<path d="M2329.7 403.6Q2322.6 435.1 2320.1 443.2" fill="none" stroke="#9a9a92" stroke-width="8.0" stroke-linecap="round"/><path d="M2329.2 403.0Q2322.1 434.5 2319.6 442.6" fill="none" stroke="#ededE6" stroke-width="5.8" stroke-linecap="round"/>
<linearGradient id="rg6" gradientUnits="userSpaceOnUse" x1="2353.6" y1="384.2" x2="2316.5" y2="375.8"><stop offset="0" stop-color="#f3cd98"/><stop offset="0.3" stop-color="#fde6bb"/><stop offset="0.6" stop-color="#f0c68e"/><stop offset="1" stop-color="#b8834f"/></linearGradient>
<polygon points="2317.9,395.1 2318.1,393.2 2325.4,361.6 2326.3,359.8 2327.8,358.2 2329.8,356.9 2332.3,356.0 2335.2,355.5 2338.2,355.4 2341.2,355.8 2344.1,356.6 2346.7,357.8 2348.9,359.3 2350.6,361.1 2351.7,363.0 2352.1,365.0 2351.9,366.9 2344.8,398.6 2343.9,400.4 2342.4,401.9 2340.3,403.2 2337.8,404.0 2334.9,404.5 2332.0,404.5 2328.9,404.1 2326.1,403.3 2323.4,402.1 2321.2,400.7 2319.5,398.9 2318.4,397.1" fill="url(#rg6)"/>
<polygon points="2322.5,365.8 2322.7,363.6 2323.7,360.6 2324.7,358.5 2326.1,355.9 2327.9,353.9 2329.4,352.4 2331.4,351.1 2333.2,350.4 2335.2,349.6 2337.6,349.2 2340.0,349.1 2342.5,349.4 2344.9,350.1 2347.0,351.0 2348.8,352.3 2350.0,353.4 2351.7,355.1 2352.7,357.0 2353.6,359.3 2354.0,361.5 2354.2,364.4 2353.5,369.8 2352.4,371.8 2350.6,373.7 2348.2,375.1 2345.3,376.2 2342.1,376.7 2338.6,376.8 2335.1,376.4 2331.8,375.4 2328.8,374.1 2326.2,372.3 2324.3,370.3 2323.0,368.1" fill="url(#rg6)"/>
<polygon points="2315.8,395.7 2316.1,393.6 2316.5,390.4 2317.5,388.3 2319.3,386.5 2321.7,385.0 2324.6,384.0 2327.9,383.4 2331.4,383.3 2335.0,383.8 2338.4,384.8 2341.4,386.1 2344.1,387.9 2346.0,389.9 2347.3,392.2 2347.8,394.4 2347.5,396.6 2346.6,399.7 2345.5,401.8 2344.1,404.4 2342.2,406.5 2340.8,408.0 2338.7,409.2 2336.9,410.0 2334.8,410.7 2332.5,411.1 2330.1,411.1 2327.6,410.7 2325.2,410.1 2323.0,409.1 2321.2,407.9 2319.8,406.5 2318.4,405.0 2317.3,403.2 2316.5,400.8 2316.0,398.7" fill="url(#rg6)"/>
<polyline points="2324.2,366.1 2324.8,364.8 2325.7,363.6 2326.8,362.5 2328.3,361.6 2329.9,360.8 2331.8,360.3 2333.8,359.9 2335.9,359.8 2338.0,359.9 2340.2,360.2 2342.3,360.8 2344.2,361.5 2346.0,362.4 2347.6,363.5 2348.9,364.6 2350.0,365.9 2350.7,367.3 2351.2,368.7 2351.2,370.1" fill="none" stroke="#9c7048" stroke-width="0.9" opacity="0.7"/>
<path d="M2186.5 364.6Q2148.6 356.9 2147.4 365.3" fill="none" stroke="#9a9a92" stroke-width="8.0" stroke-linecap="round"/><path d="M2186.0 364.0Q2148.1 356.3 2146.9 364.7" fill="none" stroke="#ededE6" stroke-width="5.8" stroke-linecap="round"/>
<path d="M2245.0 376.4Q2283.6 384.2 2281.4 392.6" fill="none" stroke="#9a9a92" stroke-width="8.0" stroke-linecap="round"/><path d="M2244.5 375.8Q2283.1 383.6 2280.9 392.0" fill="none" stroke="#ededE6" stroke-width="5.8" stroke-linecap="round"/>
<linearGradient id="rg5" gradientUnits="userSpaceOnUse" x1="2219.4" y1="351.9" x2="2211.9" y2="389.1"><stop offset="0" stop-color="#f3cd98"/><stop offset="0.3" stop-color="#fde6bb"/><stop offset="0.6" stop-color="#f0c68e"/><stop offset="1" stop-color="#b8834f"/></linearGradient>
<polygon points="2192.8,379.4 2192.9,378.4 2193.1,376.8 2193.6,374.7 2194.1,372.2 2194.7,369.4 2195.4,366.4 2196.1,363.4 2196.8,360.6 2197.5,358.1 2198.1,355.9 2198.5,354.4 2198.9,353.4 2199.1,353.2 2238.7,361.1 2238.7,361.5 2238.5,362.5 2238.1,364.1 2237.7,366.3 2237.1,368.8 2236.4,371.6 2235.7,374.5 2235.0,377.5 2234.3,380.3 2233.7,382.8 2233.1,384.9 2232.7,386.4 2232.4,387.4 2232.2,387.8 2192.8,379.7" fill="url(#rg5)"/>
<polygon points="2182.6,371.8 2182.7,369.3 2182.8,368.9 2182.8,368.2 2183.0,367.4 2183.2,366.4 2183.5,365.2 2183.7,364.0 2184.0,362.8 2184.3,361.6 2184.6,360.6 2184.8,359.8 2185.0,359.1 2185.2,358.8 2186.2,356.5 2186.3,356.3 2188.6,353.5 2191.4,351.9 2194.8,351.2 2198.7,351.1 2202.6,351.6 2202.6,352.1 2202.5,353.2 2202.2,355.1 2201.7,357.6 2201.1,360.5 2200.3,363.8 2199.5,367.2 2198.7,370.6 2197.9,373.8 2197.1,376.7 2196.5,379.1 2195.9,381.0 2195.5,382.1 2195.3,382.5 2191.5,381.4 2188.1,379.9 2185.3,377.9 2183.4,375.4 2182.7,372.0" fill="url(#rg5)"/>
<polygon points="2228.7,389.3 2228.7,388.9 2228.9,387.8 2229.3,386.0 2229.9,383.5 2230.5,380.6 2231.3,377.3 2232.1,373.8 2233.0,370.4 2233.8,367.1 2234.6,364.1 2235.2,361.7 2235.7,359.8 2236.1,358.7 2236.2,358.4 2240.1,359.4 2243.5,361.0 2246.3,363.0 2248.2,365.6 2248.9,368.9 2248.8,371.5 2248.8,371.6 2248.6,372.7 2248.4,373.6 2247.9,375.8 2247.6,376.9 2247.0,379.3 2246.8,380.3 2246.5,381.2 2246.4,381.8 2246.2,382.2 2246.2,382.4 2245.1,384.7 2242.8,387.5 2239.9,389.0 2236.5,389.8 2232.7,389.9" fill="url(#rg5)"/>
<polyline points="2204.7,354.2 2204.5,354.6 2204.3,355.3 2204.0,356.3 2203.6,357.6 2203.2,359.1 2202.7,360.9 2202.2,362.8 2201.7,364.8 2201.2,366.9 2200.7,369.0 2200.2,371.1 2199.8,373.1 2199.4,375.0 2199.0,376.6 2198.8,378.1 2198.5,379.3 2198.4,380.2 2198.4,380.7 2198.4,381.0" fill="none" stroke="#9c7048" stroke-width="0.9" opacity="0.7"/>
<polygon points="1565.2,351.1 1420.2,660.8 1434.7,683.8 1575.0,379.5" fill="#121212"/>
<polygon points="1523.5,342.1 1565.2,351.1 1420.2,660.8 1375.1,649.5" fill="#353333"/>
<polygon points="1375.1,649.5 1420.2,660.8 1434.7,683.8 1390.7,672.7" fill="#1d1d1d"/>
<polygon points="1550.8,381.7 1542.6,385.4 1546.2,391.7" fill="#161616"/>
<polygon points="1508.7,372.5 1512.2,378.8 1504.0,382.5" fill="#161616"/>
<polygon points="1533.8,418.1 1525.5,421.9 1529.0,428.3" fill="#161616"/>
<polygon points="1491.3,408.7 1494.7,415.0 1486.4,418.8" fill="#161616"/>
<polygon points="1516.3,455.3 1507.9,459.2 1511.5,465.8" fill="#161616"/>
<polygon points="1473.4,445.6 1476.9,452.2 1468.4,456.0" fill="#161616"/>
<polygon points="1498.5,493.4 1490.0,497.4 1493.5,504.1" fill="#161616"/>
<polygon points="1455.2,483.4 1458.6,490.1 1450.1,494.1" fill="#161616"/>
<polygon points="1480.3,532.4 1471.6,536.4 1475.1,543.3" fill="#161616"/>
<polygon points="1436.5,522.1 1440.0,529.0 1431.3,533.0" fill="#161616"/>
<polygon points="1461.6,572.3 1452.8,576.4 1456.3,583.5" fill="#161616"/>
<polygon points="1417.4,561.7 1420.8,568.7 1412.1,572.8" fill="#161616"/>
<polygon points="1442.4,613.1 1433.6,617.3 1437.1,624.6" fill="#161616"/>
<polygon points="1397.9,602.2 1401.3,609.4 1392.4,613.6" fill="#161616"/>
<polygon points="1516.9,289.0 1512.3,298.3 1539.1,369.9 1543.3,360.9" fill="#6a5838"/>
<polygon points="1501.1,295.9 1512.3,298.3 1539.1,369.9 1528.5,367.6" fill="#857050"/>
<polygon points="1505.7,286.7 1516.9,289.0 1512.3,298.3 1501.1,295.9" fill="#f2da9a"/>
<polygon points="1498.5,326.3 1493.8,335.8 1522.0,406.0 1526.3,396.8" fill="#6a5838"/>
<polygon points="1482.5,333.4 1493.8,335.8 1522.0,406.0 1511.3,403.6" fill="#857050"/>
<polygon points="1487.3,323.9 1498.5,326.3 1493.8,335.8 1482.5,333.4" fill="#f2da9a"/>
<polygon points="1479.7,364.4 1474.9,374.2 1504.5,442.9 1508.9,433.6" fill="#6a5838"/>
<polygon points="1463.5,371.7 1474.9,374.2 1504.5,442.9 1493.7,440.5" fill="#857050"/>
<polygon points="1468.3,362.0 1479.7,364.4 1474.9,374.2 1463.5,371.7" fill="#f2da9a"/>
<polygon points="1460.5,403.5 1455.5,413.5 1486.6,480.7 1491.1,471.1" fill="#6a5838"/>
<polygon points="1444.0,410.9 1455.5,413.5 1486.6,480.7 1475.7,478.2" fill="#857050"/>
<polygon points="1449.0,401.0 1460.5,403.5 1455.5,413.5 1444.0,410.9" fill="#f2da9a"/>
<polygon points="1440.7,443.5 1435.7,453.8 1468.3,519.3 1472.9,509.5" fill="#6a5838"/>
<polygon points="1424.0,451.1 1435.7,453.8 1468.3,519.3 1457.3,516.8" fill="#857050"/>
<polygon points="1429.1,440.9 1440.7,443.5 1435.7,453.8 1424.0,451.1" fill="#f2da9a"/>
<polygon points="1403.6,492.3 1415.3,495.1 1449.5,558.9 1438.4,556.2" fill="#857050"/>
<polygon points="1420.5,484.6 1415.3,495.1 1449.5,558.9 1454.3,548.9" fill="#6a5838"/>
<polygon points="1408.7,481.9 1420.5,484.6 1415.3,495.1 1403.6,492.3" fill="#f2da9a"/>
<polygon points="1382.6,534.6 1394.5,537.4 1430.3,599.4 1419.1,596.7" fill="#857050"/>
<polygon points="1399.8,526.6 1394.5,537.4 1430.3,599.4 1435.2,589.1" fill="#6a5838"/>
<polygon points="1387.9,523.8 1399.8,526.6 1394.5,537.4 1382.6,534.6" fill="#f2da9a"/>
<polygon points="1361.0,577.9 1373.1,580.8 1410.7,640.8 1399.4,638.0" fill="#857050"/>
<polygon points="1378.5,569.8 1373.1,580.8 1410.7,640.8 1415.7,630.3" fill="#6a5838"/>
<polygon points="1366.5,566.9 1378.5,569.8 1373.1,580.8 1361.0,577.9" fill="#f2da9a"/>
<polygon points="1615.0,421.0 1608.6,435.5 1615.0,454.7 1621.3,440.5" fill="#6c6c66"/>
<polygon points="1601.9,434.0 1608.6,435.5 1615.0,454.7 1608.4,453.3" fill="#9a9a92"/>
<polygon points="1608.3,419.6 1615.0,421.0 1608.6,435.5 1601.9,434.0" fill="#c8c8c0"/>
<polygon points="1609.6,413.8 1626.1,417.4 1616.9,438.3 1600.4,434.6" fill="#f8f8ec"/>
<polygon points="1626.1,417.4 1616.9,438.3 1618.2,442.1 1627.3,421.3" fill="#b4b4ac"/>
<polygon points="1600.4,434.6 1616.9,438.3 1618.2,442.1 1601.7,438.4" fill="#ededE2"/>
<polygon points="1598.6,458.0 1592.1,472.8 1598.9,491.6 1605.3,477.0" fill="#6c6c66"/>
<polygon points="1585.3,471.2 1592.1,472.8 1598.9,491.6 1592.2,490.1" fill="#9a9a92"/>
<polygon points="1591.8,456.5 1598.6,458.0 1592.1,472.8 1585.3,471.2" fill="#c8c8c0"/>
<polygon points="1593.2,450.8 1609.8,454.5 1600.4,475.8 1583.7,472.0" fill="#f8f8ec"/>
<polygon points="1609.8,454.5 1600.4,475.8 1601.7,479.5 1611.1,458.3" fill="#b4b4ac"/>
<polygon points="1583.7,472.0 1600.4,475.8 1601.7,479.5 1585.1,475.8" fill="#ededE2"/>
<polygon points="1581.9,495.9 1575.2,511.0 1582.3,529.3 1588.9,514.4" fill="#6c6c66"/>
<polygon points="1568.3,509.4 1575.2,511.0 1582.3,529.3 1575.6,527.8" fill="#9a9a92"/>
<polygon points="1575.0,494.3 1581.9,495.9 1575.2,511.0 1568.3,509.4" fill="#c8c8c0"/>
<polygon points="1576.3,488.6 1593.1,492.4 1583.5,514.2 1566.6,510.3" fill="#f8f8ec"/>
<polygon points="1593.1,492.4 1583.5,514.2 1584.9,517.8 1594.5,496.1" fill="#b4b4ac"/>
<polygon points="1566.6,510.3 1583.5,514.2 1584.9,517.8 1568.1,514.0" fill="#ededE2"/>
<polygon points="1564.7,534.6 1557.9,550.0 1565.4,567.9 1572.1,552.7" fill="#6c6c66"/>
<polygon points="1550.9,548.4 1557.9,550.0 1565.4,567.9 1558.6,566.3" fill="#9a9a92"/>
<polygon points="1557.8,533.0 1564.7,534.6 1557.9,550.0 1550.9,548.4" fill="#c8c8c0"/>
<polygon points="1559.1,527.2 1576.0,531.1 1566.2,553.5 1549.2,549.5" fill="#f8f8ec"/>
<polygon points="1576.0,531.1 1566.2,553.5 1567.7,557.0 1577.5,534.7" fill="#b4b4ac"/>
<polygon points="1549.2,549.5 1566.2,553.5 1567.7,557.0 1550.7,553.0" fill="#ededE2"/>
<polygon points="1547.1,574.2 1540.1,590.0 1548.1,607.4 1554.9,591.8" fill="#6c6c66"/>
<polygon points="1533.1,588.3 1540.1,590.0 1548.1,607.4 1541.2,605.7" fill="#9a9a92"/>
<polygon points="1540.2,572.5 1547.1,574.2 1540.1,590.0 1533.1,588.3" fill="#c8c8c0"/>
<polygon points="1541.5,566.8 1558.6,570.8 1548.5,593.7 1531.3,589.6" fill="#f8f8ec"/>
<polygon points="1558.6,570.8 1548.5,593.7 1550.1,597.1 1560.1,574.3" fill="#b4b4ac"/>
<polygon points="1531.3,589.6 1548.5,593.7 1550.1,597.1 1532.9,593.0" fill="#ededE2"/>
<polygon points="1529.2,614.7 1522.0,630.9 1530.4,647.8 1537.4,631.8" fill="#6c6c66"/>
<polygon points="1514.9,629.2 1522.0,630.9 1530.4,647.8 1523.4,646.0" fill="#9a9a92"/>
<polygon points="1522.1,613.0 1529.2,614.7 1522.0,630.9 1514.9,629.2" fill="#c8c8c0"/>
<polygon points="1523.4,607.3 1540.7,611.4 1530.4,634.9 1513.0,630.6" fill="#f8f8ec"/>
<polygon points="1540.7,611.4 1530.4,634.9 1532.0,638.2 1542.3,614.8" fill="#b4b4ac"/>
<polygon points="1513.0,630.6 1530.4,634.9 1532.0,638.2 1514.7,634.0" fill="#ededE2"/>
<polygon points="1510.8,656.3 1503.4,672.8 1512.3,689.1 1519.4,672.7" fill="#6c6c66"/>
<polygon points="1496.3,671.1 1503.4,672.8 1512.3,689.1 1505.2,687.3" fill="#9a9a92"/>
<polygon points="1503.6,654.5 1510.8,656.3 1503.4,672.8 1496.3,671.1" fill="#c8c8c0"/>
<polygon points="1504.9,648.8 1522.4,653.0 1511.8,677.0 1494.3,672.7" fill="#f8f8ec"/>
<polygon points="1522.4,653.0 1511.8,677.0 1513.5,680.2 1524.0,656.3" fill="#b4b4ac"/>
<polygon points="1494.3,672.7 1511.8,677.0 1513.5,680.2 1496.0,675.9" fill="#ededE2"/>
<polygon points="1632.7,410.6 1735.9,433.2 1618.0,724.5 1507.1,696.7" fill="#222"/>
<polygon points="1735.9,433.2 1737.1,446.3 1622.0,732.1 1618.0,724.5" fill="#0e0e0e"/>
<polygon points="1618.0,724.5 1622.0,732.1 1514.1,705.0 1507.1,696.7" fill="#121212"/>
<polygon points="1629.0,388.4 1725.5,409.3 1605.3,701.9 1501.5,676.1" fill="#333132"/>
<polygon points="1725.5,409.3 1738.5,431.4 1618.8,727.5 1605.3,701.9" fill="#151515"/>
<polygon points="1605.3,701.9 1618.8,727.5 1504.2,698.8 1501.5,676.1" fill="#1c1c1c"/>
<polygon points="1686.5,400.8 1685.4,402.7 1683.8,404.3 1681.8,405.6 1679.6,406.6 1677.1,407.0 1674.7,407.0 1672.4,406.5 1670.3,405.5 1668.7,404.2 1667.5,402.5 1666.9,400.6 1666.9,398.6 1667.4,396.7" fill="#2a2929"/>
<polyline points="1504.0,698.6 1618.7,727.3 1738.4,431.1" fill="none" stroke="#3c3c3c" stroke-width="1"/>
<polygon points="1745.5,449.8 1739.6,464.5 1743.8,483.5 1749.6,469.0" fill="#6c6c66"/>
<polygon points="1732.6,463.0 1739.6,464.5 1743.8,483.5 1737.0,482.0" fill="#9a9a92"/>
<polygon points="1738.6,448.2 1745.5,449.8 1739.6,464.5 1732.6,463.0" fill="#c8c8c0"/>
<polygon points="1745.3,443.6 1736.8,464.9 1737.6,468.7 1746.1,447.4" fill="#b4b4ac"/>
<polygon points="1728.5,439.9 1745.3,443.6 1736.8,464.9 1719.8,461.1" fill="#f8f8ec"/>
<polygon points="1719.8,461.1 1736.8,464.9 1737.6,468.7 1720.7,464.9" fill="#ededE2"/>
<polygon points="1730.4,487.6 1724.3,502.7 1728.9,521.2 1734.8,506.3" fill="#6c6c66"/>
<polygon points="1717.3,501.1 1724.3,502.7 1728.9,521.2 1722.0,519.7" fill="#9a9a92"/>
<polygon points="1723.4,486.0 1730.4,487.6 1724.3,502.7 1717.3,501.1" fill="#c8c8c0"/>
<polygon points="1730.2,481.4 1721.5,503.2 1722.4,506.8 1731.1,485.1" fill="#b4b4ac"/>
<polygon points="1713.2,477.6 1730.2,481.4 1721.5,503.2 1704.3,499.3" fill="#f8f8ec"/>
<polygon points="1704.3,499.3 1721.5,503.2 1722.4,506.8 1705.3,503.0" fill="#ededE2"/>
<polygon points="1714.9,526.3 1708.7,541.7 1713.6,559.8 1719.6,544.5" fill="#6c6c66"/>
<polygon points="1701.6,540.1 1708.7,541.7 1713.6,559.8 1706.6,558.2" fill="#9a9a92"/>
<polygon points="1707.9,524.6 1714.9,526.3 1708.7,541.7 1701.6,540.1" fill="#c8c8c0"/>
<polygon points="1714.7,520.1 1705.8,542.4 1706.7,545.9 1715.6,523.7" fill="#b4b4ac"/>
<polygon points="1697.5,516.2 1714.7,520.1 1705.8,542.4 1688.5,538.4" fill="#f8f8ec"/>
<polygon points="1688.5,538.4 1705.8,542.4 1706.7,545.9 1689.5,542.0" fill="#ededE2"/>
<polygon points="1699.1,565.8 1692.7,581.7 1698.0,599.2 1704.1,583.6" fill="#6c6c66"/>
<polygon points="1685.6,580.0 1692.7,581.7 1698.0,599.2 1690.9,597.5" fill="#9a9a92"/>
<polygon points="1692.0,564.2 1699.1,565.8 1692.7,581.7 1685.6,580.0" fill="#c8c8c0"/>
<polygon points="1698.8,559.7 1689.7,582.5 1690.7,585.9 1699.8,563.2" fill="#b4b4ac"/>
<polygon points="1681.5,555.6 1698.8,559.7 1689.7,582.5 1672.2,578.4" fill="#f8f8ec"/>
<polygon points="1672.2,578.4 1689.7,582.5 1690.7,585.9 1673.3,581.8" fill="#ededE2"/>
<polygon points="1682.9,606.4 1676.4,622.6 1682.0,639.6 1688.3,623.6" fill="#6c6c66"/>
<polygon points="1669.2,620.8 1676.4,622.6 1682.0,639.6 1674.9,637.9" fill="#9a9a92"/>
<polygon points="1675.7,604.7 1682.9,606.4 1676.4,622.6 1669.2,620.8" fill="#c8c8c0"/>
<polygon points="1682.6,600.2 1673.3,623.5 1674.4,626.9 1683.7,603.6" fill="#b4b4ac"/>
<polygon points="1665.1,596.0 1682.6,600.2 1673.3,623.5 1655.6,619.3" fill="#f8f8ec"/>
<polygon points="1655.6,619.3 1673.3,623.5 1674.4,626.9 1656.8,622.7" fill="#ededE2"/>
<polygon points="1666.3,647.9 1659.6,664.5 1665.6,680.9 1672.1,664.5" fill="#6c6c66"/>
<polygon points="1652.4,662.7 1659.6,664.5 1665.6,680.9 1658.4,679.1" fill="#9a9a92"/>
<polygon points="1659.0,646.1 1666.3,647.9 1659.6,664.5 1652.4,662.7" fill="#c8c8c0"/>
<polygon points="1666.0,641.7 1656.4,665.6 1657.6,668.8 1667.1,645.0" fill="#b4b4ac"/>
<polygon points="1648.3,637.4 1666.0,641.7 1656.4,665.6 1638.6,661.2" fill="#f8f8ec"/>
<polygon points="1638.6,661.2 1656.4,665.6 1657.6,668.8 1639.8,664.5" fill="#ededE2"/>
<polygon points="1649.3,690.4 1642.5,707.4 1648.8,723.2 1655.5,706.4" fill="#6c6c66"/>
<polygon points="1635.1,705.5 1642.5,707.4 1648.8,723.2 1641.6,721.4" fill="#9a9a92"/>
<polygon points="1641.9,688.6 1649.3,690.4 1642.5,707.4 1635.1,705.5" fill="#c8c8c0"/>
<polygon points="1649.0,684.2 1639.2,708.7 1640.4,711.8 1650.2,687.4" fill="#b4b4ac"/>
<polygon points="1631.1,679.8 1649.0,684.2 1639.2,708.7 1621.1,704.2" fill="#f8f8ec"/>
<polygon points="1621.1,704.2 1639.2,708.7 1640.4,711.8 1622.5,707.3" fill="#ededE2"/>
<polygon points="1886.6,367.3 1881.4,381.4 1883.1,401.4 1888.2,387.5" fill="#6c6c66"/>
<polygon points="1874.5,379.9 1881.4,381.4 1883.1,401.4 1876.4,400.0" fill="#9a9a92"/>
<polygon points="1879.7,365.8 1886.6,367.3 1881.4,381.4 1874.5,379.9" fill="#c8c8c0"/>
<polygon points="1898.2,363.6 1890.8,383.9 1891.1,387.9 1898.5,367.6" fill="#b4b4ac"/>
<polygon points="1881.5,360.1 1898.2,363.6 1890.8,383.9 1874.0,380.4" fill="#f8f8ec"/>
<polygon points="1874.0,380.4 1890.8,383.9 1891.1,387.9 1874.4,384.3" fill="#ededE2"/>
<polygon points="1873.3,403.4 1868.1,417.8 1870.0,437.4 1875.2,423.2" fill="#6c6c66"/>
<polygon points="1861.1,416.3 1868.1,417.8 1870.0,437.4 1863.2,435.9" fill="#9a9a92"/>
<polygon points="1866.4,401.9 1873.3,403.4 1868.1,417.8 1861.1,416.3" fill="#c8c8c0"/>
<polygon points="1885.1,399.7 1877.5,420.5 1877.9,424.4 1885.4,403.7" fill="#b4b4ac"/>
<polygon points="1868.2,396.2 1885.1,399.7 1877.5,420.5 1860.5,416.9" fill="#f8f8ec"/>
<polygon points="1860.5,416.9 1877.5,420.5 1877.9,424.4 1860.9,420.8" fill="#ededE2"/>
<polygon points="1859.8,440.4 1854.4,455.1 1856.6,474.3 1861.9,459.7" fill="#6c6c66"/>
<polygon points="1847.4,453.5 1854.4,455.1 1856.6,474.3 1849.7,472.7" fill="#9a9a92"/>
<polygon points="1852.8,438.8 1859.8,440.4 1854.4,455.1 1847.4,453.5" fill="#c8c8c0"/>
<polygon points="1871.6,436.7 1863.9,458.0 1864.3,461.8 1872.0,440.6" fill="#b4b4ac"/>
<polygon points="1854.6,433.1 1871.6,436.7 1863.9,458.0 1846.8,454.3" fill="#f8f8ec"/>
<polygon points="1846.8,454.3 1863.9,458.0 1864.3,461.8 1847.2,458.1" fill="#ededE2"/>
<polygon points="1846.0,478.2 1840.5,493.2 1842.9,511.9 1848.3,497.1" fill="#6c6c66"/>
<polygon points="1833.4,491.6 1840.5,493.2 1842.9,511.9 1836.0,510.4" fill="#9a9a92"/>
<polygon points="1838.9,476.6 1846.0,478.2 1840.5,493.2 1833.4,491.6" fill="#c8c8c0"/>
<polygon points="1857.9,474.6 1850.0,496.4 1850.4,500.1 1858.3,478.4" fill="#b4b4ac"/>
<polygon points="1840.7,470.8 1857.9,474.6 1850.0,496.4 1832.7,492.5" fill="#f8f8ec"/>
<polygon points="1832.7,492.5 1850.0,496.4 1850.4,500.1 1833.2,496.2" fill="#ededE2"/>
<polygon points="1831.8,516.8 1826.2,532.2 1828.9,550.5 1834.4,535.3" fill="#6c6c66"/>
<polygon points="1819.0,530.6 1826.2,532.2 1828.9,550.5 1821.9,548.9" fill="#9a9a92"/>
<polygon points="1824.7,515.2 1831.8,516.8 1826.2,532.2 1819.0,530.6" fill="#c8c8c0"/>
<polygon points="1843.8,513.3 1835.7,535.6 1836.3,539.2 1844.3,517.0" fill="#b4b4ac"/>
<polygon points="1826.4,509.4 1843.8,513.3 1835.7,535.6 1818.2,531.6" fill="#f8f8ec"/>
<polygon points="1818.2,531.6 1835.7,535.6 1836.3,539.2 1818.8,535.2" fill="#ededE2"/>
<polygon points="1817.3,556.4 1811.5,572.2 1814.6,589.9 1820.2,574.3" fill="#6c6c66"/>
<polygon points="1804.3,570.5 1811.5,572.2 1814.6,589.9 1807.5,588.3" fill="#9a9a92"/>
<polygon points="1810.1,554.8 1817.3,556.4 1811.5,572.2 1804.3,570.5" fill="#c8c8c0"/>
<polygon points="1829.4,553.0 1821.2,575.8 1821.7,579.3 1830.0,556.5" fill="#b4b4ac"/>
<polygon points="1811.8,549.0 1829.4,553.0 1821.2,575.8 1803.5,571.7" fill="#f8f8ec"/>
<polygon points="1803.5,571.7 1821.2,575.8 1821.7,579.3 1804.1,575.2" fill="#ededE2"/>
<polygon points="1802.5,596.9 1796.6,613.1 1799.9,630.3 1805.7,614.3" fill="#6c6c66"/>
<polygon points="1789.2,611.4 1796.6,613.1 1799.9,630.3 1792.7,628.6" fill="#9a9a92"/>
<polygon points="1795.2,595.2 1802.5,596.9 1796.6,613.1 1789.2,611.4" fill="#c8c8c0"/>
<polygon points="1814.7,593.6 1806.2,616.9 1806.9,620.3 1815.3,597.0" fill="#b4b4ac"/>
<polygon points="1796.9,589.4 1814.7,593.6 1806.2,616.9 1788.3,612.7" fill="#f8f8ec"/>
<polygon points="1788.3,612.7 1806.2,616.9 1806.9,620.3 1789.0,616.1" fill="#ededE2"/>
<polygon points="1787.3,638.4 1781.2,655.0 1784.9,671.6 1790.8,655.3" fill="#6c6c66"/>
<polygon points="1773.8,653.2 1781.2,655.0 1784.9,671.6 1777.7,669.8" fill="#9a9a92"/>
<polygon points="1779.9,636.7 1787.3,638.4 1781.2,655.0 1773.8,653.2" fill="#c8c8c0"/>
<polygon points="1799.6,635.1 1790.9,659.0 1791.6,662.3 1800.3,638.5" fill="#b4b4ac"/>
<polygon points="1781.7,630.9 1799.6,635.1 1790.9,659.0 1772.9,654.7" fill="#f8f8ec"/>
<polygon points="1772.9,654.7 1790.9,659.0 1791.6,662.3 1773.6,658.0" fill="#ededE2"/>
<polygon points="1895.7,375.3 2001.3,397.4 1907.2,684.5 1793.5,657.3" fill="#222"/>
<polygon points="2001.3,397.4 1999.7,410.9 1907.7,692.6 1907.2,684.5" fill="#0e0e0e"/>
<polygon points="1907.2,684.5 1907.7,692.6 1797.2,666.0 1793.5,657.3" fill="#121212"/>
<polygon points="1996.7,372.9 2003.7,395.7 1908.3,687.5 1901.1,661.1" fill="#151515"/>
<polygon points="1897.9,352.4 1996.7,372.9 1901.1,661.1 1794.6,635.8" fill="#333132"/>
<polygon points="1901.1,661.1 1908.3,687.5 1790.7,659.3 1794.6,635.8" fill="#1c1c1c"/>
<polygon points="1858.2,650.8 1858.6,648.5 1858.5,646.1 1857.6,643.9 1856.3,642.0 1854.4,640.4 1852.1,639.3 1849.6,638.7 1846.9,638.6 1844.3,639.1 1841.9,640.2 1839.8,641.7 1838.1,643.6 1837.0,645.8" fill="#2a2929"/>
<polyline points="1790.7,659.1 1908.3,687.3 2003.8,395.4" fill="none" stroke="#3c3c3c" stroke-width="1"/>
<polygon points="2019.3,395.0 2014.7,409.4 2014.1,429.2 2018.6,415.0" fill="#6c6c66"/>
<polygon points="2007.6,407.9 2014.7,409.4 2014.1,429.2 2007.1,427.7" fill="#9a9a92"/>
<polygon points="2012.3,393.6 2019.3,395.0 2014.7,409.4 2007.6,407.9" fill="#c8c8c0"/>
<polygon points="2019.5,388.9 2012.8,409.6 2012.7,413.5 2019.4,392.8" fill="#b4b4ac"/>
<polygon points="2002.4,385.3 2019.5,388.9 2012.8,409.6 1995.6,406.0" fill="#f8f8ec"/>
<polygon points="1995.6,406.0 2012.8,409.6 2012.7,413.5 1995.6,409.9" fill="#ededE2"/>
<polygon points="2007.4,431.9 2002.7,446.7 2002.3,466.0 2006.9,451.5" fill="#6c6c66"/>
<polygon points="1995.5,445.1 2002.7,446.7 2002.3,466.0 1995.2,464.5" fill="#9a9a92"/>
<polygon points="2000.3,430.4 2007.4,431.9 2002.7,446.7 1995.5,445.1" fill="#c8c8c0"/>
<polygon points="2007.6,425.8 2000.8,447.0 2000.7,450.8 2007.5,429.6" fill="#b4b4ac"/>
<polygon points="1990.3,422.1 2007.6,425.8 2000.8,447.0 1983.4,443.2" fill="#f8f8ec"/>
<polygon points="1983.4,443.2 2000.8,447.0 2000.7,450.8 1983.4,447.1" fill="#ededE2"/>
<polygon points="1995.2,469.7 1990.4,484.8 1990.2,503.7 1994.9,488.8" fill="#6c6c66"/>
<polygon points="1983.2,483.2 1990.4,484.8 1990.2,503.7 1983.1,502.1" fill="#9a9a92"/>
<polygon points="1988.1,468.2 1995.2,469.7 1990.4,484.8 1983.2,483.2" fill="#c8c8c0"/>
<polygon points="1995.4,463.5 1988.4,485.2 1988.4,489.0 1995.4,467.3" fill="#b4b4ac"/>
<polygon points="1978.0,459.7 1995.4,463.5 1988.4,485.2 1970.9,481.4" fill="#f8f8ec"/>
<polygon points="1970.9,481.4 1988.4,485.2 1988.4,489.0 1970.9,485.1" fill="#ededE2"/>
<polygon points="1982.8,508.4 1977.8,523.8 1977.8,542.2 1982.7,527.0" fill="#6c6c66"/>
<polygon points="1970.5,522.1 1977.8,523.8 1977.8,542.2 1970.7,540.6" fill="#9a9a92"/>
<polygon points="1975.5,506.8 1982.8,508.4 1977.8,523.8 1970.5,522.1" fill="#c8c8c0"/>
<polygon points="1983.0,502.1 1975.8,524.4 1975.8,528.0 1982.9,505.8" fill="#b4b4ac"/>
<polygon points="1965.3,498.3 1983.0,502.1 1975.8,524.4 1958.0,520.4" fill="#f8f8ec"/>
<polygon points="1958.0,520.4 1975.8,524.4 1975.8,528.0 1958.1,524.1" fill="#ededE2"/>
<polygon points="1970.0,547.9 1964.9,563.7 1965.2,581.6 1970.2,566.0" fill="#6c6c66"/>
<polygon points="1957.6,562.0 1964.9,563.7 1965.2,581.6 1958.0,579.9" fill="#9a9a92"/>
<polygon points="1962.7,546.3 1970.0,547.9 1964.9,563.7 1957.6,562.0" fill="#c8c8c0"/>
<polygon points="1970.2,541.7 1962.9,564.4 1962.9,568.0 1970.2,545.3" fill="#b4b4ac"/>
<polygon points="1952.4,537.7 1970.2,541.7 1962.9,564.4 1944.9,560.3" fill="#f8f8ec"/>
<polygon points="1944.9,560.3 1962.9,564.4 1962.9,568.0 1945.0,563.9" fill="#ededE2"/>
<polygon points="1957.0,588.4 1951.8,604.5 1952.3,621.9 1957.4,606.0" fill="#6c6c66"/>
<polygon points="1944.3,602.8 1951.8,604.5 1952.3,621.9 1945.0,620.2" fill="#9a9a92"/>
<polygon points="1949.6,586.7 1957.0,588.4 1951.8,604.5 1944.3,602.8" fill="#c8c8c0"/>
<polygon points="1957.1,582.2 1949.6,605.4 1949.7,608.9 1957.2,585.7" fill="#b4b4ac"/>
<polygon points="1939.1,578.0 1957.1,582.2 1949.6,605.4 1931.5,601.3" fill="#f8f8ec"/>
<polygon points="1931.5,601.3 1949.6,605.4 1949.7,608.9 1931.6,604.7" fill="#ededE2"/>
<polygon points="1943.6,629.9 1938.3,646.4 1939.0,663.2 1944.3,646.9" fill="#6c6c66"/>
<polygon points="1930.8,644.6 1938.3,646.4 1939.0,663.2 1931.7,661.5" fill="#9a9a92"/>
<polygon points="1936.1,628.1 1943.6,629.9 1938.3,646.4 1930.8,644.6" fill="#c8c8c0"/>
<polygon points="1943.7,623.6 1936.0,647.5 1936.2,650.8 1943.9,627.0" fill="#b4b4ac"/>
<polygon points="1925.5,619.4 1943.7,623.6 1936.0,647.5 1917.7,643.1" fill="#f8f8ec"/>
<polygon points="1917.7,643.1 1936.0,647.5 1936.2,650.8 1917.9,646.5" fill="#ededE2"/>
<polygon points="1929.9,672.3 1924.5,689.3 1925.5,705.5 1930.8,688.8" fill="#6c6c66"/>
<polygon points="1916.9,687.5 1924.5,689.3 1925.5,705.5 1918.0,703.7" fill="#9a9a92"/>
<polygon points="1922.4,670.5 1929.9,672.3 1924.5,689.3 1916.9,687.5" fill="#c8c8c0"/>
<polygon points="1930.0,666.1 1922.1,690.5 1922.4,693.7 1930.2,669.4" fill="#b4b4ac"/>
<polygon points="1911.6,661.7 1930.0,666.1 1922.1,690.5 1903.6,686.1" fill="#f8f8ec"/>
<polygon points="1903.6,686.1 1922.1,690.5 1922.4,693.7 1903.9,689.3" fill="#ededE2"/>
<polygon points="2135.1,411.8 2131.0,426.4 2128.3,446.1 2132.4,431.7" fill="#6c6c66"/>
<polygon points="2123.8,424.9 2131.0,426.4 2128.3,446.1 2121.2,444.6" fill="#9a9a92"/>
<polygon points="2128.0,410.3 2135.1,411.8 2131.0,426.4 2123.8,424.9" fill="#c8c8c0"/>
<polygon points="2147.4,408.1 2141.5,429.1 2140.9,433.0 2146.8,412.0" fill="#b4b4ac"/>
<polygon points="2130.1,404.5 2147.4,408.1 2141.5,429.1 2124.1,425.5" fill="#f8f8ec"/>
<polygon points="2124.1,425.5 2141.5,429.1 2140.9,433.0 2123.6,429.4" fill="#ededE2"/>
<polygon points="2266.3,439.1 2262.6,454.0 2257.6,473.5 2261.2,458.7" fill="#74746e"/>
<polygon points="2262.6,454.0 2270.0,455.6 2264.9,475.0 2257.6,473.5" fill="#9a9a92"/>
<polygon points="2266.3,439.1 2273.6,440.7 2270.0,455.6 2262.6,454.0" fill="#c8c8c0"/>
<polygon points="2256.5,430.8 2251.2,452.2 2250.3,456.0 2255.6,434.7" fill="#c0c0b8"/>
<polygon points="2256.5,430.8 2274.2,434.4 2269.0,455.9 2251.2,452.2" fill="#f8f8ec"/>
<polygon points="2251.2,452.2 2269.0,455.9 2268.0,459.8 2250.3,456.0" fill="#ededE2"/>
<polygon points="2124.5,449.1 2120.2,464.0 2117.7,483.2 2121.9,468.5" fill="#6c6c66"/>
<polygon points="2113.0,462.5 2120.2,464.0 2117.7,483.2 2110.6,481.7" fill="#9a9a92"/>
<polygon points="2117.3,447.6 2124.5,449.1 2120.2,464.0 2113.0,462.5" fill="#c8c8c0"/>
<polygon points="2136.9,445.4 2130.8,467.0 2130.3,470.8 2136.3,449.3" fill="#b4b4ac"/>
<polygon points="2119.4,441.7 2136.9,445.4 2130.8,467.0 2113.3,463.2" fill="#f8f8ec"/>
<polygon points="2113.3,463.2 2130.8,467.0 2130.3,470.8 2112.8,467.0" fill="#ededE2"/>
<polygon points="2257.0,477.2 2253.3,492.4 2248.4,511.4 2252.0,496.4" fill="#74746e"/>
<polygon points="2253.3,492.4 2260.8,494.0 2255.7,513.0 2248.4,511.4" fill="#9a9a92"/>
<polygon points="2257.0,477.2 2264.4,478.8 2260.8,494.0 2253.3,492.4" fill="#c8c8c0"/>
<polygon points="2247.2,468.8 2241.7,490.7 2240.8,494.4 2246.2,472.6" fill="#c0c0b8"/>
<polygon points="2247.2,468.8 2265.0,472.5 2259.7,494.5 2241.7,490.7" fill="#f8f8ec"/>
<polygon points="2241.7,490.7 2259.7,494.5 2258.7,498.3 2240.8,494.4" fill="#ededE2"/>
<polygon points="2113.6,487.2 2109.3,502.5 2106.9,521.3 2111.2,506.2" fill="#6c6c66"/>
<polygon points="2101.9,500.9 2109.3,502.5 2106.9,521.3 2099.7,519.7" fill="#9a9a92"/>
<polygon points="2106.3,485.7 2113.6,487.2 2109.3,502.5 2101.9,500.9" fill="#c8c8c0"/>
<polygon points="2126.1,483.6 2119.9,505.7 2119.4,509.4 2125.6,487.4" fill="#b4b4ac"/>
<polygon points="2108.5,479.8 2126.1,483.6 2119.9,505.7 2102.2,501.8" fill="#f8f8ec"/>
<polygon points="2102.2,501.8 2119.9,505.7 2119.4,509.4 2101.7,505.5" fill="#ededE2"/>
<polygon points="2247.5,516.2 2243.7,531.8 2238.9,550.2 2242.7,534.8" fill="#74746e"/>
<polygon points="2243.7,531.8 2251.3,533.4 2246.4,551.9 2238.9,550.2" fill="#9a9a92"/>
<polygon points="2247.5,516.2 2255.1,517.8 2251.3,533.4 2243.7,531.8" fill="#c8c8c0"/>
<polygon points="2237.6,507.6 2232.0,530.1 2231.1,533.7 2236.6,511.4" fill="#c0c0b8"/>
<polygon points="2237.6,507.6 2255.6,511.5 2250.2,534.0 2232.0,530.1" fill="#f8f8ec"/>
<polygon points="2232.0,530.1 2250.2,534.0 2249.2,537.7 2231.1,533.7" fill="#ededE2"/>
<polygon points="2102.5,526.3 2098.0,541.9 2095.9,560.2 2100.3,544.8" fill="#6c6c66"/>
<polygon points="2090.6,540.3 2098.0,541.9 2095.9,560.2 2088.6,558.5" fill="#9a9a92"/>
<polygon points="2095.1,524.7 2102.5,526.3 2098.0,541.9 2090.6,540.3" fill="#c8c8c0"/>
<polygon points="2115.1,522.7 2108.8,545.3 2108.3,548.9 2114.6,526.4" fill="#b4b4ac"/>
<polygon points="2097.3,518.8 2115.1,522.7 2108.8,545.3 2090.8,541.3" fill="#f8f8ec"/>
<polygon points="2090.8,541.3 2108.8,545.3 2108.3,548.9 2090.4,544.9" fill="#ededE2"/>
<polygon points="2237.8,556.1 2234.0,572.0 2229.3,590.0 2233.1,574.2" fill="#74746e"/>
<polygon points="2234.0,572.0 2241.6,573.7 2236.8,591.6 2229.3,590.0" fill="#9a9a92"/>
<polygon points="2237.8,556.1 2245.4,557.7 2241.6,573.7 2234.0,572.0" fill="#c8c8c0"/>
<polygon points="2227.7,547.4 2222.1,570.4 2221.2,574.0 2226.9,551.1" fill="#c0c0b8"/>
<polygon points="2227.7,547.4 2246.0,551.5 2240.5,574.5 2222.1,570.4" fill="#f8f8ec"/>
<polygon points="2222.1,570.4 2240.5,574.5 2239.5,578.1 2221.2,574.0" fill="#ededE2"/>
<polygon points="2091.1,566.3 2086.5,582.2 2084.6,600.0 2089.0,584.2" fill="#6c6c66"/>
<polygon points="2079.0,580.5 2086.5,582.2 2084.6,600.0 2077.2,598.3" fill="#9a9a92"/>
<polygon points="2083.6,564.6 2091.1,566.3 2086.5,582.2 2079.0,580.5" fill="#c8c8c0"/>
<polygon points="2103.8,562.8 2097.3,585.9 2096.9,589.4 2103.4,566.3" fill="#b4b4ac"/>
<polygon points="2085.8,558.7 2103.8,562.8 2097.3,585.9 2079.2,581.8" fill="#f8f8ec"/>
<polygon points="2079.2,581.8 2097.3,585.9 2096.9,589.4 2078.8,585.3" fill="#ededE2"/>
<polygon points="2227.9,596.9 2223.9,613.3 2219.4,630.6 2223.3,614.5" fill="#74746e"/>
<polygon points="2223.9,613.3 2231.7,615.0 2227.0,632.4 2219.4,630.6" fill="#9a9a92"/>
<polygon points="2227.9,596.9 2235.6,598.6 2231.7,615.0 2223.9,613.3" fill="#c8c8c0"/>
<polygon points="2217.7,588.2 2211.9,611.7 2211.0,615.2 2216.8,591.7" fill="#c0c0b8"/>
<polygon points="2217.7,588.2 2236.2,592.3 2230.5,615.9 2211.9,611.7" fill="#f8f8ec"/>
<polygon points="2211.9,611.7 2230.5,615.9 2229.6,619.4 2211.0,615.2" fill="#ededE2"/>
<polygon points="2079.4,607.2 2074.7,623.5 2073.0,640.7 2077.6,624.6" fill="#6c6c66"/>
<polygon points="2067.2,621.8 2074.7,623.5 2073.0,640.7 2065.5,639.0" fill="#9a9a92"/>
<polygon points="2071.9,605.4 2079.4,607.2 2074.7,623.5 2067.2,621.8" fill="#c8c8c0"/>
<polygon points="2092.3,603.7 2085.6,627.4 2085.2,630.8 2091.9,607.2" fill="#b4b4ac"/>
<polygon points="2074.1,599.6 2092.3,603.7 2085.6,627.4 2067.3,623.2" fill="#f8f8ec"/>
<polygon points="2067.3,623.2 2085.6,627.4 2085.2,630.8 2067.0,626.6" fill="#ededE2"/>
<polygon points="2217.8,638.7 2213.7,655.5 2209.3,672.3 2213.3,655.8" fill="#74746e"/>
<polygon points="2213.7,655.5 2221.5,657.3 2216.9,674.1 2209.3,672.3" fill="#9a9a92"/>
<polygon points="2217.8,638.7 2225.5,640.5 2221.5,657.3 2213.7,655.5" fill="#c8c8c0"/>
<polygon points="2207.4,630.0 2201.5,654.1 2200.6,657.4 2206.6,633.3" fill="#c0c0b8"/>
<polygon points="2207.4,630.0 2226.1,634.2 2220.3,658.4 2201.5,654.1" fill="#f8f8ec"/>
<polygon points="2201.5,654.1 2220.3,658.4 2219.4,661.7 2200.6,657.4" fill="#ededE2"/>
<polygon points="2067.5,649.1 2062.7,665.9 2061.1,682.4 2065.8,665.9" fill="#6c6c66"/>
<polygon points="2055.0,664.1 2062.7,665.9 2061.1,682.4 2053.6,680.7" fill="#9a9a92"/>
<polygon points="2059.8,647.3 2067.5,649.1 2062.7,665.9 2055.0,664.1" fill="#c8c8c0"/>
<polygon points="2080.5,645.7 2073.6,670.0 2073.3,673.3 2080.1,649.1" fill="#b4b4ac"/>
<polygon points="2062.0,641.5 2080.5,645.7 2073.6,670.0 2055.1,665.6" fill="#f8f8ec"/>
<polygon points="2055.1,665.6 2073.6,670.0 2073.3,673.3 2054.8,668.9" fill="#ededE2"/>
<polygon points="2207.3,681.6 2203.2,698.8 2198.9,714.9 2203.0,698.0" fill="#74746e"/>
<polygon points="2203.2,698.8 2211.1,700.6 2206.6,716.8 2198.9,714.9" fill="#9a9a92"/>
<polygon points="2207.3,681.6 2215.2,683.4 2211.1,700.6 2203.2,698.8" fill="#c8c8c0"/>
<polygon points="2196.9,672.7 2190.8,697.4 2190.0,700.6 2196.0,676.0" fill="#c0c0b8"/>
<polygon points="2196.9,672.7 2215.7,677.1 2209.8,701.9 2190.8,697.4" fill="#f8f8ec"/>
<polygon points="2190.8,697.4 2209.8,701.9 2208.9,705.1 2190.0,700.6" fill="#ededE2"/>
<polygon points="2055.2,692.0 2050.3,709.2 2049.0,725.2 2053.8,708.2" fill="#6c6c66"/>
<polygon points="2042.6,707.4 2050.3,709.2 2049.0,725.2 2041.4,723.3" fill="#9a9a92"/>
<polygon points="2047.5,690.2 2055.2,692.0 2050.3,709.2 2042.6,707.4" fill="#c8c8c0"/>
<polygon points="2068.3,688.7 2061.3,713.6 2061.0,716.8 2068.0,692.0" fill="#b4b4ac"/>
<polygon points="2049.7,684.3 2068.3,688.7 2061.3,713.6 2042.6,709.1" fill="#f8f8ec"/>
<polygon points="2042.6,709.1 2061.3,713.6 2061.0,716.8 2042.4,712.3" fill="#ededE2"/>
<polygon points="2196.7,725.5 2192.4,743.1 2188.3,758.6 2192.5,741.3" fill="#74746e"/>
<polygon points="2192.4,743.1 2200.4,745.0 2196.1,760.5 2188.3,758.6" fill="#9a9a92"/>
<polygon points="2196.7,725.5 2204.6,727.4 2200.4,745.0 2192.4,743.1" fill="#c8c8c0"/>
<polygon points="2186.0,716.6 2179.8,741.9 2179.0,745.0 2185.3,719.7" fill="#c0c0b8"/>
<polygon points="2186.0,716.6 2205.2,721.1 2199.0,746.5 2179.8,741.9" fill="#f8f8ec"/>
<polygon points="2179.8,741.9 2199.0,746.5 2198.2,749.6 2179.0,745.0" fill="#ededE2"/>
<polygon points="2144.1,419.4 2254.6,442.5 2181.2,740.5 2061.7,712.0" fill="#222"/>
<polygon points="2181.2,740.5 2178.3,748.0 2062.2,720.2 2061.7,712.0" fill="#121212"/>
<polygon points="2069.3,691.3 2059.0,714.1 2142.9,416.8 2152.0,397.0" fill="#1a1a1a"/>
<polygon points="2255.5,418.4 2257.0,440.6 2182.5,743.6 2181.3,717.8" fill="#151515"/>
<polygon points="2152.0,397.0 2255.5,418.4 2181.3,717.8 2069.3,691.3" fill="#333132"/>
<polygon points="2181.3,717.8 2182.5,743.6 2059.0,714.1 2069.3,691.3" fill="#1c1c1c"/>
<polygon points="2213.8,409.6 2213.0,411.6 2211.6,413.2 2209.8,414.6 2207.6,415.5 2205.1,416.0 2202.6,416.0 2200.1,415.5 2197.9,414.5 2195.9,413.1 2194.4,411.4 2193.4,409.5 2193.1,407.4 2193.3,405.4" fill="#2a2929"/>
<polyline points="2059.0,713.9 2182.6,743.4 2257.1,440.4" fill="none" stroke="#3c3c3c" stroke-width="1"/>
<polygon points="1392.6,677.3 1307.1,857.7 1325.5,876.5 1407.9,700.0" fill="#121212"/>
<polygon points="1347.4,666.0 1392.6,677.3 1307.1,857.7 1260.1,844.9" fill="#353333"/>
<polygon points="1260.1,844.9 1307.1,857.7 1325.5,876.5 1279.7,864.0" fill="#1d1d1d"/>
<polygon points="1374.9,714.6 1365.7,719.0 1369.1,726.7" fill="#161616"/>
<polygon points="1329.3,702.9 1332.7,710.6 1323.5,715.0" fill="#161616"/>
<polygon points="1353.8,759.0 1344.5,763.5 1347.9,771.5" fill="#161616"/>
<polygon points="1307.8,747.0 1311.2,754.8 1301.8,759.3" fill="#161616"/>
<polygon points="1332.3,804.5 1322.8,809.2 1326.2,817.3" fill="#161616"/>
<polygon points="1285.8,792.2 1289.1,800.2 1279.6,804.8" fill="#161616"/>
<polygon points="1309.1,639.8 1321.3,642.8 1362.8,699.9 1351.3,697.0" fill="#857050"/>
<polygon points="1327.0,631.4 1321.3,642.8 1362.8,699.9 1368.0,689.1" fill="#6a5838"/>
<polygon points="1314.8,628.4 1327.0,631.4 1321.3,642.8 1309.1,639.8" fill="#f2da9a"/>
<polygon points="1285.9,686.0 1298.2,689.1 1341.7,744.0 1330.1,741.0" fill="#857050"/>
<polygon points="1304.0,677.4 1298.2,689.1 1341.7,744.0 1347.0,732.8" fill="#6a5838"/>
<polygon points="1291.7,674.3 1304.0,677.4 1298.2,689.1 1285.9,686.0" fill="#f2da9a"/>
<polygon points="1262.0,733.4 1274.5,736.6 1320.1,789.1 1308.4,786.0" fill="#857050"/>
<polygon points="1280.5,724.6 1274.5,736.6 1320.1,789.1 1325.5,777.7" fill="#6a5838"/>
<polygon points="1268.1,721.4 1280.5,724.6 1274.5,736.6 1262.0,733.4" fill="#f2da9a"/>
<polygon points="1237.5,782.0 1250.1,785.4 1297.9,835.4 1286.1,832.2" fill="#857050"/>
<polygon points="1256.3,773.0 1250.1,785.4 1297.9,835.4 1303.5,823.7" fill="#6a5838"/>
<polygon points="1243.7,769.7 1256.3,773.0 1250.1,785.4 1237.5,782.0" fill="#f2da9a"/>
<polygon points="2372.5,460.7 2301.0,801.9 2292.1,822.5 2362.6,488.0" fill="#181818"/>
<polygon points="2372.5,460.7 2420.8,470.7 2354.0,814.7 2301.0,801.9" fill="#353333"/>
<polygon points="2301.0,801.9 2354.0,814.7 2343.6,835.0 2292.1,822.5" fill="#1d1d1d"/>
<polygon points="2414.2,504.6 2406.3,508.6 2412.1,515.6" fill="#161616"/>
<polygon points="2365.4,494.2 2371.0,501.2 2363.1,505.2" fill="#161616"/>
<polygon points="2406.4,544.8 2398.4,549.0 2404.2,556.1" fill="#161616"/>
<polygon points="2357.1,534.2 2362.7,541.3 2354.7,545.4" fill="#161616"/>
<polygon points="2398.4,586.0 2390.3,590.3 2396.1,597.6" fill="#161616"/>
<polygon points="2348.5,575.1 2354.2,582.4 2346.1,586.6" fill="#161616"/>
<polygon points="2390.2,628.3 2382.0,632.6 2387.9,640.2" fill="#161616"/>
<polygon points="2339.7,617.0 2345.5,624.4 2337.3,628.8" fill="#161616"/>
<polygon points="2381.8,671.6 2373.5,676.0 2379.4,683.7" fill="#161616"/>
<polygon points="2330.7,659.9 2336.5,667.6 2328.2,672.0" fill="#161616"/>
<polygon points="2373.2,715.9 2364.7,720.5 2370.7,728.4" fill="#161616"/>
<polygon points="2321.5,704.0 2327.4,711.8 2318.9,716.3" fill="#161616"/>
<polygon points="2364.3,761.4 2355.8,766.1 2361.8,774.2" fill="#161616"/>
<polygon points="2312.1,749.1 2318.0,757.1 2309.4,761.8" fill="#161616"/>
<polygon points="2413.9,409.8 2411.9,420.1 2385.5,488.8 2387.5,479.0" fill="#7c6848"/>
<polygon points="2411.9,420.1 2424.9,422.7 2397.8,491.4 2385.5,488.8" fill="#857050"/>
<polygon points="2413.9,409.8 2427.0,412.4 2424.9,422.7 2411.9,420.1" fill="#f2da9a"/>
<polygon points="2405.7,451.1 2403.5,461.7 2377.4,528.7 2379.5,518.6" fill="#7c6848"/>
<polygon points="2403.5,461.7 2416.8,464.4 2389.8,531.3 2377.4,528.7" fill="#857050"/>
<polygon points="2405.7,451.1 2418.9,453.8 2416.8,464.4 2403.5,461.7" fill="#f2da9a"/>
<polygon points="2397.2,493.5 2395.0,504.3 2369.1,569.5 2371.2,559.1" fill="#7c6848"/>
<polygon points="2395.0,504.3 2408.4,507.1 2381.6,572.2 2369.1,569.5" fill="#857050"/>
<polygon points="2397.2,493.5 2410.5,496.3 2408.4,507.1 2395.0,504.3" fill="#f2da9a"/>
<polygon points="2388.5,536.9 2386.3,548.0 2360.6,611.3 2362.7,600.6" fill="#7c6848"/>
<polygon points="2386.3,548.0 2399.8,551.0 2373.2,614.1 2360.6,611.3" fill="#857050"/>
<polygon points="2388.5,536.9 2402.0,539.8 2399.8,551.0 2386.3,548.0" fill="#f2da9a"/>
<polygon points="2379.6,581.5 2377.3,593.0 2351.8,654.1 2354.1,643.2" fill="#7c6848"/>
<polygon points="2377.3,593.0 2391.0,596.0 2364.7,657.0 2351.8,654.1" fill="#857050"/>
<polygon points="2379.6,581.5 2393.3,584.6 2391.0,596.0 2377.3,593.0" fill="#f2da9a"/>
<polygon points="2370.4,627.4 2368.1,639.1 2342.9,698.0 2345.2,686.8" fill="#7c6848"/>
<polygon points="2368.1,639.1 2382.0,642.2 2355.9,701.0 2342.9,698.0" fill="#857050"/>
<polygon points="2370.4,627.4 2384.3,630.5 2382.0,642.2 2368.1,639.1" fill="#f2da9a"/>
<polygon points="2361.0,674.4 2358.6,686.4 2333.7,743.0 2336.1,731.5" fill="#7c6848"/>
<polygon points="2358.6,686.4 2372.7,689.7 2346.9,746.1 2333.7,743.0" fill="#857050"/>
<polygon points="2361.0,674.4 2375.0,677.6 2372.7,689.7 2358.6,686.4" fill="#f2da9a"/>
<polygon points="2351.3,722.7 2348.9,735.1 2324.3,789.1 2326.7,777.4" fill="#7c6848"/>
<polygon points="2348.9,735.1 2363.1,738.4 2337.6,792.3 2324.3,789.1" fill="#857050"/>
<polygon points="2351.3,722.7 2365.5,726.0 2363.1,738.4 2348.9,735.1" fill="#f2da9a"/>
<path d="M1506.1 754.6Q1466.9 744.6 1470.9 750.9" fill="none" stroke="#9a9a92" stroke-width="8.0" stroke-linecap="round"/><path d="M1505.6 754.0Q1466.4 744.0 1470.4 750.3" fill="none" stroke="#ededE6" stroke-width="5.8" stroke-linecap="round"/>
<path d="M1566.5 770.1Q1606.4 780.3 1609.4 786.4" fill="none" stroke="#9a9a92" stroke-width="8.0" stroke-linecap="round"/><path d="M1566.0 769.5Q1605.9 779.7 1608.9 785.8" fill="none" stroke="#ededE6" stroke-width="5.8" stroke-linecap="round"/>
<linearGradient id="rg20" gradientUnits="userSpaceOnUse" x1="1540.9" y1="743.9" x2="1531.5" y2="780.7"><stop offset="0" stop-color="#f3cd98"/><stop offset="0.3" stop-color="#fde6bb"/><stop offset="0.6" stop-color="#f0c68e"/><stop offset="1" stop-color="#b8834f"/></linearGradient>
<polygon points="1509.2,763.3 1509.5,760.3 1510.1,757.1 1511.0,753.9 1512.2,750.9 1513.5,748.2 1514.9,745.9 1516.4,744.3 1517.8,743.2 1519.2,742.9 1560.0,753.3 1561.1,753.7 1562.0,754.8 1562.6,756.5 1562.9,758.7 1562.9,761.4 1562.5,764.4 1561.9,767.5 1561.0,770.7 1559.9,773.7 1558.7,776.4 1557.3,778.6 1555.9,780.3 1554.5,781.4 1553.3,781.8 1512.5,771.3 1511.3,771.0 1510.3,769.9 1509.6,768.2 1509.3,766.0" fill="url(#rg20)"/>
<polygon points="1500.1,757.7 1500.2,755.9 1500.6,754.0 1501.1,752.2 1501.8,750.4 1502.6,748.8 1503.6,747.1 1504.8,745.3 1506.0,743.9 1507.2,743.1 1510.0,741.6 1511.3,741.2 1514.8,740.6 1518.8,740.7 1522.8,741.4 1524.2,741.9 1525.2,743.1 1526.0,745.1 1526.4,747.7 1526.4,750.8 1526.1,754.3 1525.4,757.9 1524.3,761.6 1523.0,765.0 1521.5,768.1 1519.9,770.7 1518.2,772.7 1516.5,774.0 1515.0,774.4 1513.6,774.0 1509.7,772.7 1506.3,770.9 1503.5,768.6 1502.6,767.6 1501.0,765.0 1500.4,763.6 1500.1,761.8 1500.1,759.5" fill="url(#rg20)"/>
<polygon points="1546.2,774.1 1546.5,770.6 1547.3,766.9 1548.3,763.1 1549.6,759.6 1551.1,756.4 1552.7,753.8 1554.4,751.8 1556.0,750.6 1557.5,750.2 1561.4,751.5 1562.7,752.0 1566.2,753.8 1568.9,756.0 1569.8,757.1 1571.4,759.7 1571.9,761.1 1572.1,762.9 1572.2,765.4 1572.2,767.0 1572.0,768.7 1571.7,770.6 1571.1,772.5 1570.5,774.2 1569.7,775.8 1568.9,777.2 1567.5,779.3 1566.4,780.7 1565.3,781.6 1562.5,783.1 1561.2,783.5 1557.7,784.2 1553.7,784.1 1549.6,783.3 1548.3,783.0 1547.3,781.8 1546.5,779.9 1546.2,777.2" fill="url(#rg20)"/>
<polyline points="1524.9,744.3 1524.0,744.5 1523.0,745.0 1521.9,745.9 1520.9,747.1 1519.9,748.6 1518.9,750.4 1518.0,752.3 1517.2,754.4 1516.4,756.6 1515.8,758.9 1515.4,761.2 1515.1,763.4 1515.0,765.4 1515.0,767.3 1515.2,769.0 1515.6,770.4 1516.1,771.6 1516.7,772.4 1517.5,772.8" fill="none" stroke="#9c7048" stroke-width="0.9" opacity="0.7"/>
<path d="M1437.7 795.7Q1399.1 785.6 1403.6 791.6" fill="none" stroke="#9a9a92" stroke-width="8.0" stroke-linecap="round"/><path d="M1437.2 795.1Q1398.6 785.0 1403.1 791.0" fill="none" stroke="#ededE6" stroke-width="5.8" stroke-linecap="round"/>
<path d="M1498.2 811.6Q1537.6 821.9 1541.1 827.8" fill="none" stroke="#9a9a92" stroke-width="8.0" stroke-linecap="round"/><path d="M1497.7 811.0Q1537.1 821.3 1540.6 827.2" fill="none" stroke="#ededE6" stroke-width="5.8" stroke-linecap="round"/>
<linearGradient id="rg21" gradientUnits="userSpaceOnUse" x1="1472.7" y1="785.3" x2="1463.0" y2="822.0"><stop offset="0" stop-color="#f3cd98"/><stop offset="0.3" stop-color="#fde6bb"/><stop offset="0.6" stop-color="#f0c68e"/><stop offset="1" stop-color="#b8834f"/></linearGradient>
<polygon points="1440.2,804.8 1440.5,801.8 1441.1,798.6 1442.0,795.4 1443.2,792.3 1444.6,789.5 1446.1,787.2 1447.7,785.5 1449.3,784.4 1450.8,784.0 1452.1,784.3 1493.0,794.9 1494.0,795.9 1494.7,797.6 1495.1,799.8 1495.2,802.5 1494.9,805.4 1494.3,808.6 1493.4,811.8 1492.2,814.8 1490.9,817.6 1489.4,820.0 1487.9,821.8 1486.4,822.9 1485.0,823.4 1483.7,823.2 1442.7,812.3 1441.6,811.4 1440.8,809.7 1440.3,807.5" fill="url(#rg21)"/>
<polygon points="1431.1,800.9 1431.3,799.0 1431.4,797.2 1431.8,795.4 1432.3,793.5 1433.0,791.6 1433.8,790.0 1434.7,788.4 1436.0,786.5 1437.3,785.0 1438.7,784.1 1441.4,782.6 1442.9,782.2 1446.4,781.6 1450.4,781.7 1454.4,782.4 1456.0,782.8 1457.2,784.0 1458.1,785.9 1458.6,788.5 1458.7,791.6 1458.4,795.0 1457.7,798.7 1456.7,802.4 1455.3,805.9 1453.7,809.1 1452.0,811.8 1450.1,813.9 1448.3,815.2 1446.6,815.7 1445.0,815.4 1441.1,814.1 1437.7,812.3 1435.0,810.0 1433.9,809.0 1432.3,806.3 1431.6,805.0 1431.2,803.1" fill="url(#rg21)"/>
<polygon points="1477.2,816.0 1477.5,812.4 1478.2,808.7 1479.3,804.9 1480.7,801.3 1482.2,798.1 1484.0,795.4 1485.8,793.3 1487.6,792.0 1489.2,791.5 1490.7,791.8 1494.6,793.2 1498.1,795.0 1500.8,797.3 1501.8,798.3 1503.4,801.0 1504.0,802.3 1504.3,804.1 1504.3,806.3 1504.3,808.2 1504.2,810.0 1503.8,811.9 1503.2,813.8 1502.6,815.6 1501.8,817.2 1500.9,818.6 1499.6,820.7 1498.3,822.2 1497.1,823.2 1494.3,824.7 1493.0,825.2 1489.4,825.8 1485.4,825.7 1479.8,824.6 1478.6,823.5 1477.8,821.7 1477.3,819.1" fill="url(#rg21)"/>
<polyline points="1456.5,785.3 1455.5,785.6 1454.4,786.2 1453.3,787.2 1452.1,788.4 1451.0,790.0 1450.0,791.8 1449.0,793.8 1448.1,795.9 1447.4,798.2 1446.8,800.5 1446.4,802.8 1446.1,805.0 1446.0,807.0 1446.1,808.9 1446.4,810.6 1446.8,812.0 1447.4,813.0 1448.1,813.8" fill="none" stroke="#9c7048" stroke-width="0.9" opacity="0.7"/>
<path d="M1710.2 777.8Q1669.8 767.6 1672.3 773.8" fill="none" stroke="#9a9a92" stroke-width="8.0" stroke-linecap="round"/><path d="M1709.7 777.2Q1669.3 767.0 1671.8 773.2" fill="none" stroke="#ededE6" stroke-width="5.8" stroke-linecap="round"/>
<path d="M1772.6 793.6Q1813.8 804.1 1815.1 810.0" fill="none" stroke="#9a9a92" stroke-width="8.0" stroke-linecap="round"/><path d="M1772.1 793.0Q1813.3 803.5 1814.6 809.4" fill="none" stroke="#ededE6" stroke-width="5.8" stroke-linecap="round"/>
<linearGradient id="rg14" gradientUnits="userSpaceOnUse" x1="1745.9" y1="767.3" x2="1736.6" y2="804.1"><stop offset="0" stop-color="#f3cd98"/><stop offset="0.3" stop-color="#fde6bb"/><stop offset="0.6" stop-color="#f0c68e"/><stop offset="1" stop-color="#b8834f"/></linearGradient>
<polygon points="1715.0,789.5 1715.1,786.8 1715.6,783.8 1716.2,780.5 1717.1,777.3 1718.2,774.2 1719.3,771.5 1720.5,769.2 1721.6,767.4 1722.7,766.4 1723.7,766.0 1765.9,776.6 1766.6,777.0 1767.1,778.0 1767.3,779.7 1767.3,781.9 1767.1,784.6 1766.7,787.6 1766.0,790.8 1765.1,794.0 1764.1,797.0 1763.0,799.8 1761.9,802.1 1760.8,803.9 1759.8,805.0 1758.9,805.5 1716.8,794.7 1716.0,794.4 1715.4,793.4 1715.0,791.8" fill="url(#rg14)"/>
<polygon points="1704.9,782.6 1705.0,781.0 1705.2,779.2 1705.6,777.4 1706.1,775.5 1706.7,773.6 1707.4,772.0 1708.1,770.7 1708.8,769.6 1710.7,767.1 1711.6,766.2 1714.6,764.6 1715.5,764.3 1719.2,763.6 1723.2,763.7 1727.4,764.5 1728.3,764.9 1729.0,766.1 1729.3,768.1 1729.4,770.7 1729.2,773.8 1728.7,777.3 1727.9,781.0 1726.9,784.6 1725.7,788.2 1724.5,791.3 1723.1,794.0 1721.8,796.0 1720.5,797.4 1719.4,797.9 1715.3,796.5 1714.4,796.2 1710.8,794.4 1708.0,792.0 1706.1,789.2 1705.6,788.4 1705.3,787.0 1704.9,784.0" fill="url(#rg14)"/>
<polygon points="1753.3,801.0 1753.6,797.9 1754.2,794.3 1755.0,790.5 1756.0,786.8 1757.1,783.2 1758.4,780.0 1759.7,777.2 1761.0,775.2 1762.2,773.9 1763.2,773.5 1767.3,774.8 1768.1,775.2 1771.8,777.0 1774.7,779.3 1776.6,782.2 1777.0,783.0 1777.5,786.4 1777.6,787.4 1777.6,788.8 1777.5,790.3 1777.2,792.1 1776.8,794.0 1776.3,795.9 1775.7,797.7 1775.1,799.4 1774.4,800.7 1773.8,801.8 1771.8,804.3 1771.0,805.3 1770.3,805.6 1768.0,806.8 1767.2,807.2 1763.5,807.9 1759.4,807.8 1755.2,807.0 1754.3,806.7 1753.7,805.5 1753.4,803.6" fill="url(#rg14)"/>
<polyline points="1729.6,767.4 1729.0,767.6 1728.2,768.2 1727.4,769.1 1726.6,770.4 1725.8,771.9 1725.0,773.7 1724.2,775.7 1723.4,777.9 1722.8,780.1 1722.2,782.4 1721.7,784.7 1721.3,786.9 1721.1,789.0 1720.9,790.9 1721.0,792.6 1721.1,794.0 1721.4,795.1 1721.7,795.9 1722.2,796.3" fill="none" stroke="#9c7048" stroke-width="0.9" opacity="0.7"/>
<path d="M1693.5 822.5Q1652.7 812.0 1655.3 817.9" fill="none" stroke="#9a9a92" stroke-width="8.0" stroke-linecap="round"/><path d="M1693.0 821.9Q1652.2 811.4 1654.8 817.3" fill="none" stroke="#ededE6" stroke-width="5.8" stroke-linecap="round"/>
<path d="M1756.5 838.8Q1798.2 849.6 1799.6 855.2" fill="none" stroke="#9a9a92" stroke-width="8.0" stroke-linecap="round"/><path d="M1756.0 838.2Q1797.7 849.0 1799.1 854.6" fill="none" stroke="#ededE6" stroke-width="5.8" stroke-linecap="round"/>
<linearGradient id="rg16" gradientUnits="userSpaceOnUse" x1="1729.7" y1="812.2" x2="1720.2" y2="849.0"><stop offset="0" stop-color="#f3cd98"/><stop offset="0.3" stop-color="#fde6bb"/><stop offset="0.6" stop-color="#f0c68e"/><stop offset="1" stop-color="#b8834f"/></linearGradient>
<polygon points="1698.2,834.7 1698.3,832.0 1698.8,829.0 1699.5,825.7 1700.3,822.4 1701.4,819.3 1702.6,816.5 1703.8,814.1 1705.0,812.2 1706.1,811.1 1707.1,810.6 1749.8,821.6 1750.5,821.8 1751.1,822.8 1751.3,824.4 1751.4,826.6 1751.2,829.3 1750.7,832.3 1750.0,835.5 1749.2,838.7 1748.1,841.8 1747.0,844.7 1745.9,847.1 1744.8,849.0 1743.7,850.2 1742.8,850.7 1742.0,850.5 1699.3,839.5 1698.7,838.5 1698.3,836.9" fill="url(#rg16)"/>
<polygon points="1688.0,827.6 1688.1,826.0 1688.4,824.2 1688.8,822.3 1689.3,820.3 1689.9,818.5 1690.6,816.8 1691.3,815.4 1692.1,814.3 1694.0,811.8 1694.9,810.8 1697.9,809.3 1698.9,808.8 1702.6,808.2 1706.7,808.3 1710.9,809.1 1711.9,809.4 1712.6,810.5 1713.0,812.4 1713.1,815.0 1712.9,818.1 1712.4,821.6 1711.6,825.3 1710.6,829.0 1709.4,832.6 1708.0,835.9 1706.7,838.7 1705.3,840.8 1704.0,842.2 1702.8,842.9 1701.8,842.6 1697.7,841.2 1694.1,839.4 1691.2,837.0 1690.6,836.1 1688.8,833.3 1688.5,832.0 1688.1,828.9" fill="url(#rg16)"/>
<polygon points="1737.0,846.6 1737.2,843.4 1737.8,839.9 1738.6,836.1 1739.6,832.3 1740.8,828.6 1742.1,825.3 1743.5,822.5 1744.8,820.3 1746.0,818.9 1747.1,818.4 1752.1,820.0 1755.8,821.9 1758.7,824.2 1760.6,827.1 1761.0,827.9 1761.2,829.3 1761.7,832.4 1761.7,833.7 1761.6,835.3 1761.3,837.1 1760.9,839.0 1760.4,840.9 1759.8,842.7 1759.1,844.4 1758.5,845.9 1757.8,847.0 1755.8,849.5 1755.0,850.5 1754.2,851.0 1751.1,852.5 1747.3,853.2 1743.2,853.1 1739.0,852.3 1738.0,852.0 1737.4,851.0 1737.0,849.1" fill="url(#rg16)"/>
<polyline points="1713.1,812.0 1712.4,812.3 1711.7,813.0 1710.9,814.0 1710.0,815.3 1709.2,816.9 1708.3,818.8 1707.5,820.8 1706.7,823.0 1706.1,825.3 1705.5,827.6 1705.0,829.9 1704.6,832.2 1704.4,834.2 1704.2,836.1 1704.3,837.8 1704.4,839.2 1704.7,840.2 1705.1,841.0 1705.6,841.3" fill="none" stroke="#9c7048" stroke-width="0.9" opacity="0.7"/>
<radialGradient id="cg0" gradientUnits="userSpaceOnUse" cx="1820.8" cy="740.2" r="55" fx="1828.8" fy="733.2"><stop offset="0" stop-color="#e07a34"/><stop offset="0.6" stop-color="#c2622a"/><stop offset="1" stop-color="#7a3a14"/></radialGradient>
<path d="M1777.6 752.7L1785.7 740.7" stroke="#a8a8a0" stroke-width="8" stroke-linecap="round"/><path d="M1872.0 776.3L1857.8 758.6" stroke="#a8a8a0" stroke-width="8" stroke-linecap="round"/>
<polygon points="1779.4,732.7 1779.9,730.5 1781.0,728.6 1782.9,726.9 1785.4,725.5 1788.5,724.5 1792.3,723.9 1797.8,722.9 1801.4,722.7 1806.1,722.4 1809.5,722.5 1813.0,722.8 1816.1,723.1 1819.1,723.6 1822.2,724.2 1825.3,725.1 1828.4,726.1 1831.5,727.3 1834.4,728.6 1837.1,730.1 1839.6,731.6 1842.5,733.5 1845.3,735.5 1847.8,737.5 1851.5,740.8 1853.9,743.2 1857.9,747.5 1860.0,750.3 1861.5,753.0 1862.2,755.5 1862.2,757.8 1861.5,759.9 1860.1,761.7 1858.0,763.3 1855.4,764.5 1852.1,765.4 1846.4,766.5 1843.2,767.0 1838.1,767.4 1835.1,767.5 1831.8,767.4 1828.2,767.2 1825.4,767.0 1822.4,766.5 1819.4,765.8 1816.3,765.0 1813.3,764.0 1810.3,762.8 1807.5,761.5 1804.8,760.1 1802.2,758.6 1800.0,757.1 1796.7,754.8 1794.3,752.9 1790.7,749.6 1788.2,747.2 1784.5,743.0 1782.3,740.3 1780.6,737.6 1779.7,735.1" fill="url(#cg0)"/>
<polygon points="1370.6,864.3 1565.5,917.2 1577.1,934.8 1387.3,883.0" fill="#1d1d1d"/>
<polygon points="1392.0,817.4 1584.8,868.7 1565.5,917.2 1370.6,864.3" fill="#353333"/>
<polygon points="1584.8,868.7 1565.5,917.2 1577.1,934.8 1595.7,887.5" fill="#121212"/>
<polygon points="1411.9,875.4 1421.5,870.6 1425.3,879.1" fill="#161616"/>
<polygon points="1432.8,828.3 1436.6,836.5 1446.1,831.8" fill="#161616"/>
<polygon points="1460.3,888.6 1469.9,883.7 1473.8,892.2" fill="#161616"/>
<polygon points="1480.8,841.0 1484.6,849.3 1494.1,844.5" fill="#161616"/>
<polygon points="1509.3,901.8 1518.8,897.0 1522.9,905.5" fill="#161616"/>
<polygon points="1529.1,853.9 1533.2,862.2 1542.6,857.4" fill="#161616"/>
<polygon points="1355.3,802.2 1368.2,805.6 1408.5,854.6 1396.5,851.4" fill="#857050"/>
<polygon points="1374.0,793.1 1368.2,805.6 1408.5,854.6 1413.8,842.8" fill="#6a5838"/>
<polygon points="1361.2,789.7 1374.0,793.1 1368.2,805.6 1355.3,802.2" fill="#f2da9a"/>
<polygon points="1406.5,815.8 1419.5,819.2 1456.7,867.6 1444.5,864.3" fill="#857050"/>
<polygon points="1425.2,806.6 1419.5,819.2 1456.7,867.6 1461.8,855.6" fill="#6a5838"/>
<polygon points="1412.2,803.2 1425.2,806.6 1419.5,819.2 1406.5,815.8" fill="#f2da9a"/>
<polygon points="1458.3,829.5 1471.4,833.0 1505.3,880.7 1493.0,877.4" fill="#857050"/>
<polygon points="1476.9,820.2 1471.4,833.0 1505.3,880.7 1510.3,868.6" fill="#6a5838"/>
<polygon points="1463.8,816.8 1476.9,820.2 1471.4,833.0 1458.3,829.5" fill="#f2da9a"/>
<polygon points="1510.5,843.4 1523.8,846.9 1554.3,893.9 1541.9,890.6" fill="#857050"/>
<polygon points="1529.2,834.0 1523.8,846.9 1554.3,893.9 1559.3,881.7" fill="#6a5838"/>
<polygon points="1516.0,830.5 1529.2,834.0 1523.8,846.9 1510.5,843.4" fill="#f2da9a"/>
<path d="M1676.4 868.3Q1635.1 857.5 1637.9 863.1" fill="none" stroke="#9a9a92" stroke-width="8.0" stroke-linecap="round"/><path d="M1675.9 867.7Q1634.6 856.9 1637.4 862.5" fill="none" stroke="#ededE6" stroke-width="5.8" stroke-linecap="round"/>
<path d="M1740.1 885.1Q1782.2 896.2 1783.8 901.6" fill="none" stroke="#9a9a92" stroke-width="8.0" stroke-linecap="round"/><path d="M1739.6 884.5Q1781.7 895.6 1783.3 901.0" fill="none" stroke="#ededE6" stroke-width="5.8" stroke-linecap="round"/>
<linearGradient id="rg18" gradientUnits="userSpaceOnUse" x1="1713.0" y1="858.3" x2="1703.3" y2="895.1"><stop offset="0" stop-color="#f3cd98"/><stop offset="0.3" stop-color="#fde6bb"/><stop offset="0.6" stop-color="#f0c68e"/><stop offset="1" stop-color="#b8834f"/></linearGradient>
<polygon points="1681.0,881.0 1681.2,878.4 1681.6,875.3 1682.2,872.0 1683.2,868.7 1684.2,865.5 1685.4,862.6 1686.7,860.1 1687.9,858.2 1689.1,856.9 1690.2,856.3 1691.0,856.5 1734.1,867.8 1734.7,868.7 1735.0,870.2 1735.0,872.4 1734.8,875.1 1734.4,878.1 1733.7,881.3 1732.8,884.6 1731.8,887.8 1730.6,890.7 1729.4,893.2 1728.3,895.2 1727.2,896.5 1726.2,897.1 1725.4,897.0 1682.2,885.6 1681.5,884.8 1681.1,883.2" fill="url(#rg18)"/>
<polygon points="1670.8,873.6 1670.9,872.0 1671.1,870.2 1671.5,868.3 1672.1,866.4 1672.7,864.5 1673.4,862.8 1674.2,861.3 1674.9,860.1 1676.8,857.6 1677.8,856.6 1681.8,854.5 1685.6,853.9 1689.7,854.0 1694.0,854.8 1695.0,855.0 1695.7,856.1 1696.2,857.9 1696.3,860.4 1696.1,863.5 1695.6,867.0 1694.8,870.8 1693.8,874.5 1692.6,878.2 1691.2,881.6 1689.8,884.5 1688.4,886.7 1687.0,888.2 1685.8,889.0 1684.8,888.8 1680.6,887.4 1677.0,885.5 1674.0,883.1 1673.4,882.2 1671.6,879.4 1671.2,878.1 1670.9,874.9" fill="url(#rg18)"/>
<polygon points="1720.2,893.3 1720.4,890.2 1721.0,886.6 1721.8,882.8 1722.8,878.9 1724.0,875.1 1725.4,871.7 1726.8,868.8 1728.2,866.5 1729.5,865.0 1730.6,864.4 1731.5,864.6 1735.7,866.0 1739.4,867.9 1742.3,870.3 1744.2,873.2 1744.7,874.0 1745.0,875.2 1745.4,878.5 1745.4,879.8 1745.3,881.3 1745.0,883.1 1744.6,885.0 1744.1,887.0 1743.5,888.9 1742.8,890.6 1742.1,892.1 1741.4,893.3 1739.4,895.8 1738.5,896.9 1737.8,897.4 1734.6,899.0 1730.8,899.6 1726.6,899.5 1725.7,899.4 1721.4,898.6 1720.7,897.6 1720.3,895.8" fill="url(#rg18)"/>
<polyline points="1696.2,857.8 1695.5,858.2 1694.7,858.9 1693.9,860.0 1693.0,861.4 1692.1,863.0 1691.2,865.0 1690.4,867.1 1689.6,869.3 1688.9,871.6 1688.3,874.0 1687.8,876.3 1687.5,878.6 1687.2,880.6 1687.1,882.5 1687.2,884.2 1687.3,885.5 1687.7,886.5 1688.1,887.2" fill="none" stroke="#9c7048" stroke-width="0.9" opacity="0.7"/>
<path d="M1901.7 826.4Q1860.0 815.8 1861.0 821.7" fill="none" stroke="#9a9a92" stroke-width="8.0" stroke-linecap="round"/><path d="M1901.2 825.8Q1859.5 815.2 1860.5 821.1" fill="none" stroke="#ededE6" stroke-width="5.8" stroke-linecap="round"/>
<path d="M1966.5 842.8Q2009.0 853.6 2008.8 859.3" fill="none" stroke="#9a9a92" stroke-width="8.0" stroke-linecap="round"/><path d="M1966.0 842.2Q2008.5 853.0 2008.3 858.7" fill="none" stroke="#ededE6" stroke-width="5.8" stroke-linecap="round"/>
<linearGradient id="rg15" gradientUnits="userSpaceOnUse" x1="1938.6" y1="816.1" x2="1929.3" y2="853.0"><stop offset="0" stop-color="#f3cd98"/><stop offset="0.3" stop-color="#fde6bb"/><stop offset="0.6" stop-color="#f0c68e"/><stop offset="1" stop-color="#b8834f"/></linearGradient>
<polygon points="1907.8,840.9 1908.0,838.7 1908.4,836.0 1909.0,832.9 1909.8,829.6 1910.6,826.3 1911.5,823.2 1912.5,820.3 1913.4,817.9 1914.3,816.0 1915.1,814.9 1915.7,814.4 1959.5,825.4 1959.8,825.7 1960.0,826.6 1959.9,828.3 1959.7,830.5 1959.2,833.2 1958.6,836.2 1957.8,839.4 1957.0,842.7 1956.1,845.8 1955.2,848.7 1954.3,851.1 1953.5,853.0 1952.9,854.2 1952.3,854.8 1908.5,843.6 1908.1,843.4 1907.9,842.5" fill="url(#rg15)"/>
<polygon points="1896.9,832.8 1897.0,831.5 1897.2,829.6 1897.3,828.5 1897.6,827.2 1897.9,825.9 1898.2,824.6 1898.6,823.3 1899.0,822.1 1899.4,821.1 1900.2,819.2 1900.7,818.1 1901.2,817.5 1903.5,814.6 1904.0,814.2 1907.2,812.6 1911.0,811.9 1915.2,812.1 1919.5,812.9 1920.0,813.1 1920.3,814.3 1920.3,816.2 1920.0,818.8 1919.6,821.9 1918.9,825.4 1918.0,829.1 1917.1,832.9 1916.0,836.5 1914.9,839.8 1913.8,842.6 1912.8,844.8 1912.0,846.2 1911.3,846.9 1907.1,845.5 1906.6,845.2 1902.8,843.3 1899.8,841.0 1897.8,838.0 1897.6,837.3 1896.9,833.8" fill="url(#rg15)"/>
<polygon points="1947.8,855.1 1947.9,853.2 1948.2,850.6 1948.7,847.5 1949.4,843.9 1950.3,840.1 1951.3,836.2 1952.3,832.5 1953.4,829.2 1954.4,826.4 1955.3,824.2 1956.1,822.8 1956.8,822.2 1961.0,823.6 1964.8,825.5 1965.2,825.8 1968.2,828.1 1970.3,831.0 1971.0,834.8 1971.1,835.4 1971.0,836.3 1970.9,838.7 1970.8,839.6 1970.6,840.7 1970.3,841.9 1970.0,843.2 1969.7,844.5 1969.3,845.8 1969.0,847.0 1968.6,848.0 1968.3,848.8 1967.3,851.0 1966.9,851.7 1964.5,854.6 1964.1,855.0 1960.9,856.6 1957.1,857.3 1952.8,857.1 1948.4,856.3 1948.0,856.1" fill="url(#rg15)"/>
<polyline points="1921.9,815.8 1921.5,816.1 1921.0,816.8 1920.4,817.8 1919.8,819.2 1919.2,820.8 1918.5,822.6 1917.8,824.7 1917.2,826.9 1916.5,829.2 1915.9,831.6 1915.4,833.9 1915.0,836.1 1914.6,838.2 1914.3,840.1 1914.1,841.8 1914.1,843.2 1914.1,844.2 1914.2,845.0 1914.5,845.3" fill="none" stroke="#9c7048" stroke-width="0.9" opacity="0.7"/>
<path d="M1887.1 872.5Q1844.9 861.7 1846.0 867.3" fill="none" stroke="#9a9a92" stroke-width="8.0" stroke-linecap="round"/><path d="M1886.6 871.9Q1844.4 861.1 1845.5 866.7" fill="none" stroke="#ededE6" stroke-width="5.8" stroke-linecap="round"/>
<path d="M1952.6 889.5Q1995.6 900.6 1995.5 906.0" fill="none" stroke="#9a9a92" stroke-width="8.0" stroke-linecap="round"/><path d="M1952.1 888.9Q1995.1 900.0 1995.0 905.4" fill="none" stroke="#ededE6" stroke-width="5.8" stroke-linecap="round"/>
<linearGradient id="rg17" gradientUnits="userSpaceOnUse" x1="1924.5" y1="862.6" x2="1915.0" y2="899.4"><stop offset="0" stop-color="#f3cd98"/><stop offset="0.3" stop-color="#fde6bb"/><stop offset="0.6" stop-color="#f0c68e"/><stop offset="1" stop-color="#b8834f"/></linearGradient>
<polygon points="1893.2,887.5 1893.4,885.4 1893.8,882.7 1894.4,879.6 1895.1,876.3 1896.0,873.0 1896.9,869.7 1897.9,866.8 1898.9,864.3 1899.8,862.3 1900.6,861.0 1901.2,860.5 1945.5,871.9 1945.9,872.0 1946.1,872.9 1946.0,874.5 1945.8,876.6 1945.3,879.3 1944.7,882.3 1944.0,885.6 1943.1,888.9 1942.2,892.1 1941.3,895.0 1940.4,897.6 1939.6,899.6 1938.8,900.9 1938.3,901.6 1937.9,901.5 1893.5,890.0 1893.3,889.1" fill="url(#rg17)"/>
<polygon points="1882.2,879.2 1882.3,877.9 1882.5,875.9 1882.6,874.8 1882.9,873.5 1883.2,872.2 1883.5,870.9 1883.9,869.6 1884.3,868.4 1884.7,867.4 1885.5,865.5 1886.0,864.3 1886.5,863.6 1888.9,860.7 1889.4,860.2 1892.6,858.6 1896.5,858.0 1900.7,858.1 1905.1,858.9 1905.7,859.1 1905.9,860.2 1906.0,862.0 1905.8,864.5 1905.3,867.7 1904.6,871.2 1903.8,874.9 1902.8,878.8 1901.7,882.5 1900.6,885.8 1899.5,888.7 1898.4,891.0 1897.5,892.6 1896.8,893.3 1896.2,893.2 1892.0,891.8 1888.2,889.8 1885.1,887.4 1883.1,884.4 1882.9,883.7 1882.2,880.1" fill="url(#rg17)"/>
<polygon points="1933.7,902.0 1933.7,900.2 1934.0,897.7 1934.5,894.6 1935.2,891.0 1936.0,887.2 1937.1,883.2 1938.1,879.5 1939.2,876.0 1940.3,873.1 1941.3,870.8 1942.1,869.3 1942.8,868.6 1947.0,870.0 1947.5,870.2 1951.3,872.1 1954.4,874.5 1956.4,877.5 1957.2,881.3 1957.3,881.9 1957.3,882.8 1957.1,885.2 1957.0,886.1 1956.8,887.2 1956.5,888.4 1956.2,889.7 1955.9,891.1 1955.5,892.4 1955.2,893.6 1954.8,894.6 1954.5,895.5 1953.4,897.7 1953.0,898.5 1952.7,898.9 1950.2,901.9 1946.9,903.5 1943.1,904.1 1938.8,903.9 1934.3,903.1 1933.9,903.0" fill="url(#rg17)"/>
<polyline points="1907.5,862.0 1907.1,862.3 1906.5,863.1 1906.0,864.2 1905.3,865.6 1904.7,867.3 1904.0,869.2 1903.3,871.3 1902.6,873.6 1902.0,875.9 1901.4,878.3 1900.8,880.6 1900.4,882.9 1900.0,885.0 1899.7,886.9 1899.6,888.5 1899.5,889.9 1899.6,890.9 1899.7,891.6 1900.0,891.9" fill="none" stroke="#9c7048" stroke-width="0.9" opacity="0.7"/>
<radialGradient id="cg1" gradientUnits="userSpaceOnUse" cx="2097.6" cy="808.7" r="55" fx="2105.6" fy="801.7"><stop offset="0" stop-color="#e07a34"/><stop offset="0.6" stop-color="#c2622a"/><stop offset="1" stop-color="#7a3a14"/></radialGradient>
<path d="M2045.4 819.4L2059.2 808.4" stroke="#a8a8a0" stroke-width="8" stroke-linecap="round"/><path d="M2144.4 844.1L2134.9 827.2" stroke="#a8a8a0" stroke-width="8" stroke-linecap="round"/>
<polygon points="2054.2,802.9 2054.8,800.7 2056.2,798.7 2058.2,796.9 2061.0,795.4 2064.4,794.2 2070.3,792.8 2073.7,792.1 2078.9,791.5 2082.1,791.1 2085.7,791.0 2089.2,791.2 2092.3,791.3 2095.5,791.6 2098.7,792.1 2102.0,792.9 2105.3,793.7 2108.5,794.8 2111.5,796.0 2114.4,797.3 2117.2,798.8 2120.4,800.5 2123.3,802.4 2127.2,805.3 2130.2,807.6 2134.5,811.5 2137.3,814.2 2139.4,817.0 2140.8,819.6 2141.4,822.1 2141.3,824.5 2140.4,826.7 2138.8,828.6 2136.5,830.3 2133.6,831.6 2130.0,832.7 2124.4,834.2 2120.9,834.8 2115.9,835.5 2112.7,835.8 2109.2,835.8 2105.8,835.9 2102.8,835.7 2099.6,835.3 2096.4,834.8 2093.2,834.1 2090.0,833.2 2086.9,832.1 2083.9,831.0 2081.1,829.7 2078.5,828.3 2075.3,826.5 2072.4,824.7 2069.9,822.8 2065.8,819.6 2063.4,817.3 2059.1,813.1 2056.8,810.5 2055.2,807.9 2054.3,805.3" fill="url(#cg1)"/>
<path d="M1872.1 919.9Q1829.5 908.7 1830.7 913.9" fill="none" stroke="#9a9a92" stroke-width="8.0" stroke-linecap="round"/><path d="M1871.6 919.3Q1829.0 908.1 1830.2 913.3" fill="none" stroke="#ededE6" stroke-width="5.8" stroke-linecap="round"/>
<path d="M1938.3 937.3Q1981.8 948.8 1981.8 953.8" fill="none" stroke="#9a9a92" stroke-width="8.0" stroke-linecap="round"/><path d="M1937.8 936.7Q1981.3 948.2 1981.3 953.2" fill="none" stroke="#ededE6" stroke-width="5.8" stroke-linecap="round"/>
<linearGradient id="rg19" gradientUnits="userSpaceOnUse" x1="1909.9" y1="910.2" x2="1900.3" y2="947.0"><stop offset="0" stop-color="#f3cd98"/><stop offset="0.3" stop-color="#fde6bb"/><stop offset="0.6" stop-color="#f0c68e"/><stop offset="1" stop-color="#b8834f"/></linearGradient>
<polygon points="1878.2,935.4 1878.4,933.3 1878.7,930.6 1879.3,927.5 1880.1,924.2 1881.0,920.8 1881.9,917.5 1882.9,914.5 1883.9,911.8 1884.9,909.8 1885.7,908.4 1886.4,907.7 1886.9,907.8 1931.6,919.5 1931.8,920.3 1931.8,921.8 1931.6,924.0 1931.1,926.6 1930.5,929.6 1929.8,932.9 1928.9,936.3 1928.0,939.5 1927.0,942.6 1926.1,945.2 1925.2,947.3 1924.5,948.8 1923.9,949.5 1923.5,949.5 1878.6,937.6 1878.3,936.9" fill="url(#rg19)"/>
<polygon points="1867.1,926.8 1867.2,925.5 1867.4,923.4 1867.5,922.3 1867.8,921.1 1868.1,919.7 1868.4,918.3 1868.8,917.0 1869.2,915.8 1869.7,914.7 1870.5,912.9 1871.0,911.7 1871.5,910.8 1873.9,908.0 1874.5,907.4 1877.7,905.8 1881.6,905.2 1885.9,905.3 1886.5,905.4 1890.9,906.3 1891.2,907.2 1891.3,909.0 1891.1,911.5 1890.7,914.6 1890.0,918.1 1889.1,921.9 1888.1,925.8 1887.0,929.5 1885.9,933.0 1884.7,936.0 1883.6,938.5 1882.7,940.1 1881.9,941.0 1881.3,941.0 1877.0,939.5 1873.2,937.5 1870.1,935.0 1868.0,932.0 1867.8,931.4 1867.1,927.6" fill="url(#rg19)"/>
<polygon points="1919.1,948.5 1919.4,946.0 1919.9,942.9 1920.6,939.3 1921.5,935.5 1922.5,931.5 1923.6,927.6 1924.7,924.1 1925.8,921.0 1926.8,918.6 1927.7,916.9 1928.4,916.1 1928.9,916.2 1933.2,917.6 1937.1,919.6 1940.2,922.1 1942.3,925.2 1942.4,925.8 1943.2,929.5 1943.1,930.4 1942.9,932.9 1942.8,933.8 1942.7,934.9 1942.4,936.1 1942.1,937.5 1941.7,938.8 1941.4,940.2 1941.0,941.4 1940.6,942.5 1940.3,943.3 1939.2,945.5 1938.8,946.4 1938.5,946.9 1935.9,949.9 1932.6,951.5 1928.7,952.1 1928.3,952.1 1923.9,952.0 1919.4,951.1 1919.1,950.2" fill="url(#rg19)"/>
<polyline points="1892.7,909.3 1892.3,909.7 1891.7,910.5 1891.1,911.7 1890.5,913.2 1889.8,914.9 1889.1,916.9 1888.4,919.1 1887.7,921.4 1887.0,923.8 1886.4,926.2 1885.9,928.6 1885.4,930.8 1885.0,932.9 1884.8,934.8 1884.6,936.4 1884.6,937.7 1884.6,938.7 1884.8,939.3" fill="none" stroke="#9c7048" stroke-width="0.9" opacity="0.7"/>
<path d="M2222.2 977.0Q2231.6 934.3 2229.5 939.4" fill="none" stroke="#9a9a92" stroke-width="8.0" stroke-linecap="round"/><path d="M2221.7 976.4Q2231.1 933.7 2229.0 938.8" fill="none" stroke="#ededE6" stroke-width="5.8" stroke-linecap="round"/>
<path d="M2207.4 1043.8Q2197.5 1089.1 2195.6 1093.1" fill="none" stroke="#9a9a92" stroke-width="8.0" stroke-linecap="round"/><path d="M2206.9 1043.2Q2197.0 1088.5 2195.1 1092.5" fill="none" stroke="#ededE6" stroke-width="5.8" stroke-linecap="round"/>
<linearGradient id="rg13" gradientUnits="userSpaceOnUse" x1="2233.4" y1="1014.2" x2="2196.3" y2="1006.1"><stop offset="0" stop-color="#f3cd98"/><stop offset="0.3" stop-color="#fde6bb"/><stop offset="0.6" stop-color="#f0c68e"/><stop offset="1" stop-color="#b8834f"/></linearGradient>
<polygon points="2194.1,1029.8 2194.1,1028.7 2204.2,983.6 2205.0,982.6 2206.6,981.9 2208.8,981.5 2211.6,981.4 2214.8,981.6 2218.3,982.1 2221.9,982.9 2225.3,983.9 2228.5,985.1 2231.2,986.5 2233.4,987.9 2234.9,989.3 2235.6,990.6 2235.5,991.8 2225.7,1037.1 2224.8,1037.9 2223.2,1038.6 2220.9,1038.9 2218.1,1038.9 2214.9,1038.6 2211.4,1038.1 2207.9,1037.3 2204.5,1036.2 2201.3,1035.0 2198.6,1033.7 2196.4,1032.3 2194.8,1031.0" fill="url(#rg13)"/>
<polygon points="2200.9,987.7 2200.9,986.3 2202.2,982.0 2204.1,978.2 2206.5,975.1 2207.3,974.2 2210.2,972.3 2211.5,971.7 2213.3,971.3 2216.2,971.1 2217.9,971.0 2219.8,971.1 2221.8,971.4 2223.9,971.9 2225.9,972.5 2227.8,973.2 2229.4,974.0 2231.7,975.4 2233.4,976.5 2234.6,977.7 2236.4,980.6 2237.1,981.9 2238.0,985.8 2238.0,990.0 2237.9,991.4 2237.3,995.8 2236.3,996.9 2234.4,997.7 2231.8,998.2 2228.5,998.3 2224.8,998.0 2220.8,997.4 2216.7,996.5 2212.8,995.3 2209.2,993.9 2206.0,992.4 2203.5,990.8 2201.8,989.2" fill="url(#rg13)"/>
<polygon points="2191.6,1030.3 2191.6,1029.1 2192.3,1024.5 2193.2,1023.5 2195.1,1022.8 2197.7,1022.3 2200.9,1022.3 2204.7,1022.6 2208.8,1023.2 2213.0,1024.2 2217.0,1025.4 2220.8,1026.8 2224.0,1028.4 2226.5,1030.0 2228.3,1031.6 2229.1,1033.0 2229.0,1034.3 2227.7,1038.7 2225.8,1042.6 2223.4,1045.8 2222.6,1046.7 2219.6,1048.6 2218.3,1049.1 2216.4,1049.4 2213.5,1049.8 2211.8,1049.8 2209.9,1049.6 2207.9,1049.2 2205.8,1048.8 2203.7,1048.1 2201.8,1047.4 2200.2,1046.6 2198.9,1045.8 2196.2,1044.0 2194.9,1042.9 2194.3,1041.9 2192.5,1038.6 2191.6,1034.7" fill="url(#rg13)"/>
<polyline points="2202.6,989.9 2203.1,989.2 2204.0,988.7 2205.2,988.2 2206.8,987.9 2208.6,987.7 2210.7,987.8 2213.0,987.9 2215.5,988.2 2218.0,988.7 2220.5,989.3 2223.0,990.0 2225.3,990.8 2227.5,991.7 2229.5,992.6 2231.1,993.6 2232.5,994.6 2233.5,995.6 2234.2,996.5 2234.4,997.4" fill="none" stroke="#9c7048" stroke-width="0.9" opacity="0.7"/>
<path d="M2066.2 936.4Q2077.2 894.8 2076.4 900.2" fill="none" stroke="#9a9a92" stroke-width="8.0" stroke-linecap="round"/><path d="M2065.7 935.8Q2076.7 894.2 2075.9 899.6" fill="none" stroke="#ededE6" stroke-width="5.8" stroke-linecap="round"/>
<path d="M2049.0 1001.6Q2037.4 1045.7 2036.9 1050.0" fill="none" stroke="#9a9a92" stroke-width="8.0" stroke-linecap="round"/><path d="M2048.5 1001.0Q2036.9 1045.1 2036.4 1049.4" fill="none" stroke="#ededE6" stroke-width="5.8" stroke-linecap="round"/>
<linearGradient id="rg10" gradientUnits="userSpaceOnUse" x1="2076.1" y1="973.6" x2="2039.3" y2="963.9"><stop offset="0" stop-color="#b8834f"/><stop offset="0.4" stop-color="#f0c68e"/><stop offset="0.7" stop-color="#fde6bb"/><stop offset="1" stop-color="#f3cd98"/></linearGradient>
<polygon points="2036.5,986.8 2048.3,942.9 2048.8,941.9 2050.1,941.1 2052.0,940.6 2054.5,940.4 2057.5,940.5 2060.8,941.0 2064.2,941.8 2067.6,942.8 2070.7,944.0 2073.6,945.4 2075.8,946.8 2077.5,948.2 2078.5,949.6 2078.7,950.8 2067.2,995.0 2066.6,995.9 2065.4,996.6 2063.4,997.0 2060.9,997.1 2057.9,996.9 2054.6,996.3 2051.2,995.5 2047.9,994.5 2044.7,993.3 2041.9,992.0 2039.6,990.6 2037.8,989.3 2036.8,988.0" fill="url(#rg10)"/>
<polygon points="2045.0,945.5 2046.4,941.4 2047.0,940.2 2049.0,936.5 2051.4,933.6 2052.6,932.8 2055.4,931.1 2057.0,930.7 2059.0,930.5 2061.5,930.4 2063.3,930.5 2065.2,930.7 2067.2,931.2 2069.2,931.8 2071.1,932.5 2072.7,933.3 2074.1,934.2 2076.5,935.8 2077.9,937.0 2078.7,938.1 2080.3,941.1 2081.0,944.9 2081.2,946.2 2081.1,950.4 2080.3,954.8 2079.6,955.9 2078.1,956.8 2075.8,957.4 2072.9,957.5 2069.5,957.3 2065.7,956.8 2061.8,955.9 2057.9,954.7 2054.3,953.4 2051.1,951.8 2048.4,950.2 2046.4,948.5 2045.3,947.0" fill="url(#rg10)"/>
<polygon points="2033.9,991.5 2034.1,987.2 2035.0,982.8 2035.5,981.7 2037.0,980.8 2039.2,980.3 2042.1,980.2 2045.6,980.4 2049.4,981.0 2053.5,981.9 2057.4,983.1 2061.2,984.6 2064.5,986.1 2067.2,987.8 2069.2,989.4 2070.3,990.9 2070.6,992.2 2069.1,996.5 2067.1,1000.4 2066.5,1001.4 2064.1,1004.4 2061.1,1006.3 2060.0,1006.9 2058.4,1007.2 2055.3,1007.5 2053.8,1007.5 2052.0,1007.4 2050.1,1007.1 2048.1,1006.6 2046.1,1006.0 2044.2,1005.3 2042.5,1004.5 2041.1,1003.7 2038.7,1001.9 2037.3,1000.8 2036.5,999.7 2034.9,996.6 2034.6,995.5" fill="url(#rg10)"/>
<polyline points="2046.8,948.3 2047.4,947.7 2048.4,947.2 2049.8,946.8 2051.4,946.6 2053.3,946.6 2055.4,946.7 2057.7,947.0 2060.1,947.4 2062.5,948.0 2064.9,948.7 2067.3,949.5 2069.5,950.4 2071.5,951.3 2073.2,952.3 2074.7,953.4 2075.9,954.4 2076.7,955.3 2077.1,956.3 2077.2,957.1" fill="none" stroke="#9c7048" stroke-width="0.9" opacity="0.7"/>
<path d="M2170.1 963.5Q2180.0 921.1 2178.4 926.3" fill="none" stroke="#9a9a92" stroke-width="8.0" stroke-linecap="round"/><path d="M2169.6 962.9Q2179.5 920.5 2177.9 925.7" fill="none" stroke="#ededE6" stroke-width="5.8" stroke-linecap="round"/>
<path d="M2154.5 1029.7Q2144.0 1074.6 2142.6 1078.7" fill="none" stroke="#9a9a92" stroke-width="8.0" stroke-linecap="round"/><path d="M2154.0 1029.1Q2143.5 1074.0 2142.1 1078.1" fill="none" stroke="#ededE6" stroke-width="5.8" stroke-linecap="round"/>
<linearGradient id="rg12" gradientUnits="userSpaceOnUse" x1="2180.9" y1="1000.7" x2="2143.9" y2="992.0"><stop offset="0" stop-color="#f3cd98"/><stop offset="0.3" stop-color="#fde6bb"/><stop offset="0.6" stop-color="#f0c68e"/><stop offset="1" stop-color="#b8834f"/></linearGradient>
<polygon points="2141.5,1014.7 2152.2,970.0 2152.9,969.0 2154.3,968.3 2156.5,967.8 2159.2,967.7 2162.3,967.9 2165.7,968.4 2169.2,969.1 2172.6,970.2 2175.8,971.4 2178.6,972.8 2180.8,974.2 2182.3,975.6 2183.1,976.9 2183.1,978.1 2172.8,1023.0 2172.0,1023.9 2170.5,1024.5 2168.3,1024.9 2165.6,1024.9 2162.5,1024.7 2159.1,1024.1 2155.6,1023.3 2152.2,1022.3 2149.0,1021.1 2146.2,1019.8 2144.0,1018.4 2142.4,1017.1 2141.6,1015.8" fill="url(#rg12)"/>
<polygon points="2148.8,972.7 2150.2,968.5 2152.1,964.6 2152.9,963.6 2155.2,960.6 2158.2,958.8 2159.4,958.1 2161.1,957.8 2164.1,957.5 2165.7,957.4 2167.5,957.5 2169.5,957.8 2171.6,958.3 2173.6,958.9 2175.5,959.6 2177.1,960.4 2179.2,961.8 2181.0,962.9 2182.3,964.1 2182.9,965.2 2184.7,968.3 2185.5,972.1 2185.5,976.3 2185.5,977.7 2184.8,982.1 2183.9,983.2 2182.2,984.1 2179.7,984.5 2176.5,984.7 2172.9,984.4 2169.0,983.9 2165.0,983.0 2161.1,981.8 2157.4,980.4 2154.3,978.8 2151.7,977.2 2149.9,975.6 2148.9,974.1" fill="url(#rg12)"/>
<polygon points="2139.0,1019.5 2139.0,1015.1 2139.8,1010.6 2140.6,1009.5 2142.3,1008.8 2144.7,1008.3 2147.9,1008.2 2151.6,1008.5 2155.6,1009.1 2159.7,1010.1 2163.7,1011.3 2167.5,1012.7 2170.7,1014.3 2173.3,1015.9 2175.1,1017.5 2176.1,1018.9 2176.1,1020.2 2174.8,1024.6 2172.8,1028.5 2170.4,1031.7 2169.6,1032.5 2166.7,1034.5 2165.4,1035.0 2163.7,1035.3 2160.7,1035.6 2159.1,1035.6 2157.2,1035.5 2155.2,1035.2 2153.1,1034.7 2151.1,1034.0 2149.2,1033.3 2147.5,1032.6 2146.2,1031.8 2143.6,1029.9 2142.3,1028.8 2141.6,1027.8 2139.8,1024.6 2139.1,1020.7" fill="url(#rg12)"/>
<polyline points="2150.5,976.3 2150.9,975.6 2151.7,975.0 2152.9,974.5 2154.4,974.2 2156.1,974.0 2158.2,974.0 2160.4,974.2 2162.8,974.5 2165.2,974.9 2167.7,975.5 2170.2,976.2 2172.5,977.0 2174.7,977.9 2176.7,978.9 2178.4,979.8 2179.8,980.8 2180.9,981.8 2181.6,982.8 2181.9,983.7" fill="none" stroke="#9c7048" stroke-width="0.9" opacity="0.7"/>
<path d="M2117.9 949.9Q2128.4 907.9 2127.1 913.2" fill="none" stroke="#9a9a92" stroke-width="8.0" stroke-linecap="round"/><path d="M2117.4 949.3Q2127.9 907.3 2126.6 912.6" fill="none" stroke="#ededE6" stroke-width="5.8" stroke-linecap="round"/>
<path d="M2101.5 1015.6Q2090.4 1060.0 2089.5 1064.3" fill="none" stroke="#9a9a92" stroke-width="8.0" stroke-linecap="round"/><path d="M2101.0 1015.0Q2089.9 1059.4 2089.0 1063.7" fill="none" stroke="#ededE6" stroke-width="5.8" stroke-linecap="round"/>
<linearGradient id="rg11" gradientUnits="userSpaceOnUse" x1="2128.2" y1="987.1" x2="2091.3" y2="977.9"><stop offset="0" stop-color="#b8834f"/><stop offset="0.4" stop-color="#f0c68e"/><stop offset="0.7" stop-color="#fde6bb"/><stop offset="1" stop-color="#f3cd98"/></linearGradient>
<polygon points="2088.7,1000.7 2100.0,956.4 2100.6,955.4 2101.9,954.6 2104.0,954.1 2106.6,954.0 2109.6,954.1 2113.0,954.6 2116.4,955.4 2119.8,956.4 2123.0,957.6 2125.8,959.0 2128.1,960.4 2129.7,961.8 2130.5,963.2 2130.6,964.4 2119.7,1008.9 2119.1,1009.8 2117.7,1010.5 2115.6,1010.9 2113.0,1010.9 2109.9,1010.7 2106.6,1010.2 2103.2,1009.4 2099.8,1008.4 2096.6,1007.1 2093.8,1005.8 2091.5,1004.5 2089.9,1003.1 2088.9,1001.8" fill="url(#rg11)"/>
<polygon points="2096.7,959.0 2098.1,954.8 2100.0,951.1 2100.7,950.0 2103.1,947.1 2106.0,945.2 2107.1,944.6 2108.8,944.2 2111.8,944.0 2113.3,943.9 2115.1,943.9 2117.1,944.2 2119.1,944.7 2121.1,945.3 2123.0,946.0 2124.7,946.8 2126.0,947.6 2128.5,949.3 2129.8,950.5 2130.5,951.6 2132.2,954.7 2133.0,958.4 2133.1,959.7 2133.1,964.0 2132.3,968.4 2131.5,969.5 2129.9,970.4 2127.5,970.9 2124.5,971.0 2120.9,970.8 2117.1,970.2 2113.1,969.4 2109.2,968.2 2105.6,966.8 2102.4,965.2 2099.8,963.6 2097.9,962.0 2096.8,960.5" fill="url(#rg11)"/>
<polygon points="2086.2,1005.5 2086.3,1001.1 2087.1,996.6 2087.8,995.5 2089.3,994.7 2091.7,994.3 2094.7,994.1 2098.3,994.4 2102.2,995.0 2106.3,995.9 2110.3,997.1 2114.1,998.6 2117.3,1000.1 2120.0,1001.8 2121.9,1003.4 2122.9,1004.9 2123.1,1006.2 2121.7,1010.5 2119.7,1014.4 2119.0,1015.4 2116.6,1018.4 2113.6,1020.3 2112.5,1020.9 2110.8,1021.1 2107.7,1021.5 2106.2,1021.5 2104.3,1021.4 2102.4,1021.0 2100.3,1020.6 2098.3,1020.0 2096.4,1019.2 2094.8,1018.5 2093.4,1017.6 2090.9,1015.9 2089.6,1014.7 2088.8,1013.7 2087.1,1010.5 2086.4,1006.7" fill="url(#rg11)"/>
<polyline points="2098.6,961.9 2099.3,961.3 2100.4,960.8 2101.8,960.4 2103.5,960.3 2105.5,960.2 2107.7,960.4 2110.0,960.7 2112.4,961.1 2114.9,961.7 2117.3,962.4 2119.6,963.2 2121.8,964.1 2123.8,965.0 2125.6,966.0 2127.0,967.0 2128.1,968.0 2128.9,969.0 2129.2,969.9" fill="none" stroke="#9c7048" stroke-width="0.9" opacity="0.7"/>
<path d="M1407.6 1298.4L1390.5 1311.7L1396 1328L1415.3 1326.2z" fill="#00d400"/>
<ellipse cx="1407" cy="1322.5" rx="8.5" ry="5.5" transform="rotate(35 1407 1322.5)" fill="#009a00"/>
<ellipse cx="1404.5" cy="1320.5" rx="4" ry="3" transform="rotate(35 1404.5 1320.5)" fill="#10ff10"/>
<circle cx="1388.5" cy="1356" r="8.8" fill="#00006e"/>
<path d="M1384.1 1307.4L1366.5 1329.6L1366.1 1339L1370 1347.6L1380.2 1351.9L1391.3 1352.7L1401.6 1349.3L1406.7 1341.6L1407.2 1333L1399.9 1320.2z" fill="#0000c8"/>
<path d="M1384.1 1307.4L1366.5 1329.6L1366.1 1339L1370 1347.6L1380.2 1351.9L1376 1330z" fill="#0000a8"/>
<path d="M1399 1349.7L1432.4 1357.4L1427.3 1374.1L1387.1 1363.9z" fill="#e80000"/>
<path d="M1434.6 1348.9L1465.8 1374.6L1425.6 1382.7z" fill="#ff0c0c"/>
</svg>
</div>
<div class="abs" style="left:2508px;top:51px;width:1px;height:1374px;background:#a0a0a0"></div>
<div class="abs" style="left:2509px;top:51px;width:6px;height:1374px;background:#dcdcdc"></div>
<div class="abs" style="left:2515px;top:51px;width:103px;height:1374px;background:#f0f0f0"></div>
<div class="abs" style="left:2515px;top:51px;width:103px;height:29.5px;background:#bababa"></div>
<svg class="abs" style="left:2515px;top:51px" width="103" height="1374" viewBox="2515 51 103 1374"><text x="2520" y="71.7" font-size="17.3" fill="#000" font-family='"Liberation Sans", sans-serif'>Appearance</text><rect x="2525" y="91.9" width="20" height="19.8" fill="#483e2d"/><circle cx="2557.9" cy="101.8" r="8.1" fill="#5a5a5a"/><path d="M2551.9 101.8q6 -6.5 12 0q-6 6.5 -12 0z" fill="#fff"/><circle cx="2557.9" cy="101.8" r="2.3" fill="#5a5a5a"/><circle cx="2557.9" cy="101.8" r="1.1" fill="#fff"/><text transform="translate(2571.7 107.8) scale(0.93 1)" font-size="15.5" fill="#000" font-family='"Liberation Sans", sans-serif'>Board</text><rect x="2525" y="115.9" width="20" height="19.8" fill="#b09a00"/><circle cx="2557.9" cy="125.8" r="8.1" fill="#5a5a5a"/><path d="M2551.9 125.8q6 -6.5 12 0q-6 6.5 -12 0z" fill="#fff"/><circle cx="2557.9" cy="125.8" r="2.3" fill="#5a5a5a"/><circle cx="2557.9" cy="125.8" r="1.1" fill="#fff"/><text transform="translate(2571.7 131.8) scale(0.93 1)" font-size="15.5" fill="#000" font-family='"Liberation Sans", sans-serif'>F.Cu</text><rect x="2525" y="139.9" width="20" height="19.8" fill="#b09a00"/><circle cx="2557.9" cy="149.8" r="8.1" fill="#5a5a5a"/><path d="M2551.9 149.8q6 -6.5 12 0q-6 6.5 -12 0z" fill="#fff"/><circle cx="2557.9" cy="149.8" r="2.3" fill="#5a5a5a"/><circle cx="2557.9" cy="149.8" r="1.1" fill="#fff"/><text transform="translate(2571.7 155.8) scale(0.93 1)" font-size="15.5" fill="#000" font-family='"Liberation Sans", sans-serif'>B.Cu</text><circle cx="2557.9" cy="173.8" r="8.1" fill="#5a5a5a"/><path d="M2551.9 173.8q6 -6.5 12 0q-6 6.5 -12 0z" fill="#fff"/><circle cx="2557.9" cy="173.8" r="2.3" fill="#5a5a5a"/><circle cx="2557.9" cy="173.8" r="1.1" fill="#fff"/><text transform="translate(2571.7 179.8) scale(0.93 1)" font-size="15.5" fill="#000" font-family='"Liberation Sans", sans-serif'>Adhesi</text><rect x="2525" y="187.9" width="20" height="19.8" fill="#7f7f7f"/><circle cx="2557.9" cy="197.8" r="8.1" fill="#5a5a5a"/><path d="M2551.9 197.8q6 -6.5 12 0q-6 6.5 -12 0z" fill="#fff"/><circle cx="2557.9" cy="197.8" r="2.3" fill="#5a5a5a"/><circle cx="2557.9" cy="197.8" r="1.1" fill="#fff"/><text transform="translate(2571.7 203.8) scale(0.93 1)" font-size="15.5" fill="#000" font-family='"Liberation Sans", sans-serif'>Solder</text><rect x="2525" y="211.9" width="20" height="19.8" fill="#e6e6e6"/><circle cx="2557.9" cy="221.8" r="8.1" fill="#5a5a5a"/><path d="M2551.9 221.8q6 -6.5 12 0q-6 6.5 -12 0z" fill="#fff"/><circle cx="2557.9" cy="221.8" r="2.3" fill="#5a5a5a"/><circle cx="2557.9" cy="221.8" r="1.1" fill="#fff"/><text transform="translate(2571.7 227.8) scale(0.93 1)" font-size="15.5" fill="#000" font-family='"Liberation Sans", sans-serif'>F.Silksc</text><rect x="2525" y="235.9" width="20" height="19.8" fill="#e6e6e6"/><circle cx="2557.9" cy="245.8" r="8.1" fill="#5a5a5a"/><path d="M2551.9 245.8q6 -6.5 12 0q-6 6.5 -12 0z" fill="#fff"/><circle cx="2557.9" cy="245.8" r="2.3" fill="#5a5a5a"/><circle cx="2557.9" cy="245.8" r="1.1" fill="#fff"/><text transform="translate(2571.7 251.8) scale(0.93 1)" font-size="15.5" fill="#000" font-family='"Liberation Sans", sans-serif'>B.Silksc</text><rect x="2525" y="259.9" width="20" height="19.8" fill="#2e4a3c"/><circle cx="2557.9" cy="269.8" r="8.1" fill="#5a5a5a"/><path d="M2551.9 269.8q6 -6.5 12 0q-6 6.5 -12 0z" fill="#fff"/><circle cx="2557.9" cy="269.8" r="2.3" fill="#5a5a5a"/><circle cx="2557.9" cy="269.8" r="1.1" fill="#fff"/><text transform="translate(2571.7 275.8) scale(0.93 1)" font-size="15.5" fill="#000" font-family='"Liberation Sans", sans-serif'>F.Mask</text><rect x="2525" y="283.9" width="20" height="19.8" fill="#2e4a3c"/><circle cx="2557.9" cy="293.8" r="8.1" fill="#5a5a5a"/><path d="M2551.9 293.8q6 -6.5 12 0q-6 6.5 -12 0z" fill="#fff"/><circle cx="2557.9" cy="293.8" r="2.3" fill="#5a5a5a"/><circle cx="2557.9" cy="293.8" r="1.1" fill="#fff"/><text transform="translate(2571.7 299.8) scale(0.93 1)" font-size="15.5" fill="#000" font-family='"Liberation Sans", sans-serif'>B.Mask</text><rect x="2525" y="307.9" width="20" height="19.8" fill="#fafafa"/><path d="M2535 307.9h10v9.9h-10zM2525 317.8h10v9.9h-10z" fill="#d8d8d8"/><circle cx="2557.9" cy="317.8" r="8.1" fill="#5a5a5a"/><path d="M2551.9 317.8q6 -6.5 12 0q-6 6.5 -12 0z" fill="#fff"/><circle cx="2557.9" cy="317.8" r="2.3" fill="#5a5a5a"/><circle cx="2557.9" cy="317.8" r="1.1" fill="#fff"/><text transform="translate(2571.7 323.8) scale(0.93 1)" font-size="15.5" fill="#000" font-family='"Liberation Sans", sans-serif'>User.D</text><rect x="2525" y="331.9" width="20" height="19.8" fill="#fafafa"/><path d="M2535 331.9h10v9.9h-10zM2525 341.8h10v9.9h-10z" fill="#d8d8d8"/><circle cx="2557.9" cy="341.8" r="8.1" fill="#5a5a5a"/><path d="M2551.9 341.8q6 -6.5 12 0q-6 6.5 -12 0z" fill="#fff"/><circle cx="2557.9" cy="341.8" r="2.3" fill="#5a5a5a"/><circle cx="2557.9" cy="341.8" r="1.1" fill="#fff"/><text transform="translate(2571.7 347.8) scale(0.93 1)" font-size="15.5" fill="#000" font-family='"Liberation Sans", sans-serif'>User.C</text><rect x="2525" y="355.9" width="20" height="19.8" fill="#fafafa"/><path d="M2535 355.9h10v9.9h-10zM2525 365.8h10v9.9h-10z" fill="#d8d8d8"/><circle cx="2557.9" cy="365.8" r="8.1" fill="#5a5a5a"/><path d="M2551.9 365.8q6 -6.5 12 0q-6 6.5 -12 0z" fill="#fff"/><circle cx="2557.9" cy="365.8" r="2.3" fill="#5a5a5a"/><circle cx="2557.9" cy="365.8" r="1.1" fill="#fff"/><text transform="translate(2571.7 371.8) scale(0.93 1)" font-size="15.5" fill="#000" font-family='"Liberation Sans", sans-serif'>User.Ec</text><rect x="2525" y="379.9" width="20" height="19.8" fill="#fafafa"/><path d="M2535 379.9h10v9.9h-10zM2525 389.8h10v9.9h-10z" fill="#d8d8d8"/><circle cx="2557.9" cy="389.8" r="8.1" fill="#5a5a5a"/><path d="M2551.9 389.8q6 -6.5 12 0q-6 6.5 -12 0z" fill="#fff"/><circle cx="2557.9" cy="389.8" r="2.3" fill="#5a5a5a"/><circle cx="2557.9" cy="389.8" r="1.1" fill="#fff"/><text transform="translate(2571.7 395.8) scale(0.93 1)" font-size="15.5" fill="#000" font-family='"Liberation Sans", sans-serif'>User.Ec</text><circle cx="2557.9" cy="423.4" r="8.1" fill="#5a5a5a"/><path d="M2551.9 423.4q6 -6.5 12 0q-6 6.5 -12 0z" fill="#fff"/><circle cx="2557.9" cy="423.4" r="2.3" fill="#5a5a5a"/><circle cx="2557.9" cy="423.4" r="1.1" fill="#fff"/><text transform="translate(2571.7 429.4) scale(0.93 1)" font-size="15.5" fill="#000" font-family='"Liberation Sans", sans-serif'>Through</text><circle cx="2557.9" cy="447.2" r="8.1" fill="#5a5a5a"/><path d="M2551.9 447.2q6 -6.5 12 0q-6 6.5 -12 0z" fill="#fff"/><circle cx="2557.9" cy="447.2" r="2.3" fill="#5a5a5a"/><circle cx="2557.9" cy="447.2" r="1.1" fill="#fff"/><text transform="translate(2571.7 453.2) scale(0.93 1)" font-size="15.5" fill="#000" font-family='"Liberation Sans", sans-serif'>SMD M</text><circle cx="2557.9" cy="470.8" r="8.1" fill="#5a5a5a"/><path d="M2551.9 470.8q6 -6.5 12 0q-6 6.5 -12 0z" fill="#fff"/><circle cx="2557.9" cy="470.8" r="2.3" fill="#5a5a5a"/><circle cx="2557.9" cy="470.8" r="1.1" fill="#fff"/><text transform="translate(2571.7 476.8) scale(0.93 1)" font-size="15.5" fill="#000" font-family='"Liberation Sans", sans-serif'>Virtual</text><circle cx="2557.9" cy="495.2" r="8.1" fill="#5a5a5a"/><path d="M2551.9 495.2q6 -6.5 12 0q-6 6.5 -12 0z" fill="#fff"/><circle cx="2557.9" cy="495.2" r="2.3" fill="#5a5a5a"/><circle cx="2557.9" cy="495.2" r="1.1" fill="#fff"/><text transform="translate(2571.7 501.2) scale(0.93 1)" font-size="15.5" fill="#000" font-family='"Liberation Sans", sans-serif'>Models</text><circle cx="2557.9" cy="519.6" r="8.1" fill="#c4c4c4"/><circle cx="2557.9" cy="519.6" r="5.8" fill="#e9e9e9"/><path d="M2553.9 523.6l8 -8" stroke="#6a6a6a" stroke-width="1.8"/><text transform="translate(2571.7 525.6) scale(0.93 1)" font-size="15.5" fill="#000" font-family='"Liberation Sans", sans-serif'>Models</text><circle cx="2557.9" cy="543.5" r="8.1" fill="#c4c4c4"/><circle cx="2557.9" cy="543.5" r="5.8" fill="#e9e9e9"/><path d="M2553.9 547.5l8 -8" stroke="#6a6a6a" stroke-width="1.8"/><text transform="translate(2571.7 549.5) scale(0.93 1)" font-size="15.5" fill="#000" font-family='"Liberation Sans", sans-serif'>Model</text><circle cx="2557.9" cy="576.6" r="8.1" fill="#5a5a5a"/><path d="M2551.9 576.6q6 -6.5 12 0q-6 6.5 -12 0z" fill="#fff"/><circle cx="2557.9" cy="576.6" r="2.3" fill="#5a5a5a"/><circle cx="2557.9" cy="576.6" r="1.1" fill="#fff"/><text transform="translate(2571.7 582.6) scale(0.93 1)" font-size="15.5" fill="#000" font-family='"Liberation Sans", sans-serif'>Values</text><circle cx="2557.9" cy="599.6" r="8.1" fill="#5a5a5a"/><path d="M2551.9 599.6q6 -6.5 12 0q-6 6.5 -12 0z" fill="#fff"/><circle cx="2557.9" cy="599.6" r="2.3" fill="#5a5a5a"/><circle cx="2557.9" cy="599.6" r="1.1" fill="#fff"/><text transform="translate(2571.7 605.6) scale(0.93 1)" font-size="15.5" fill="#000" font-family='"Liberation Sans", sans-serif'>Referen</text><circle cx="2557.9" cy="624.0" r="8.1" fill="#5a5a5a"/><path d="M2551.9 624.0q6 -6.5 12 0q-6 6.5 -12 0z" fill="#fff"/><circle cx="2557.9" cy="624.0" r="2.3" fill="#5a5a5a"/><circle cx="2557.9" cy="624.0" r="1.1" fill="#fff"/><text transform="translate(2571.7 630.0) scale(0.93 1)" font-size="15.5" fill="#000" font-family='"Liberation Sans", sans-serif'>Footpr</text><circle cx="2557.9" cy="648.4" r="8.1" fill="#c4c4c4"/><circle cx="2557.9" cy="648.4" r="5.8" fill="#e9e9e9"/><path d="M2553.9 652.4l8 -8" stroke="#6a6a6a" stroke-width="1.8"/><text transform="translate(2571.7 654.4) scale(0.93 1)" font-size="15.5" fill="#000" font-family='"Liberation Sans", sans-serif'>Off-bo</text><circle cx="2557.9" cy="681.0" r="8.1" fill="#5a5a5a"/><path d="M2551.9 681.0q6 -6.5 12 0q-6 6.5 -12 0z" fill="#fff"/><circle cx="2557.9" cy="681.0" r="2.3" fill="#5a5a5a"/><circle cx="2557.9" cy="681.0" r="1.1" fill="#fff"/><text transform="translate(2571.7 687.0) scale(0.93 1)" font-size="15.5" fill="#000" font-family='"Liberation Sans", sans-serif'>3D Axis</text><rect x="2524.7" y="695" width="20.3" height="20" fill="#cacae6"/><rect x="2524.7" y="719" width="20.3" height="19.5" fill="#626280"/><text transform="translate(2575.4 711.4) scale(0.93 1)" font-size="15.5" fill="#000" font-family='"Liberation Sans", sans-serif'>Background</text><text transform="translate(2575.4 735.8) scale(0.93 1)" font-size="15.5" fill="#000" font-family='"Liberation Sans", sans-serif'>Background</text><rect x="2522.8" y="1247.7" width="18.7" height="18.7" rx="3" fill="#fff" stroke="#333" stroke-width="1.2"/><text transform="translate(2546.4 1263.8) scale(0.93 1)" font-size="15.5" fill="#000" font-family='"Liberation Sans", sans-serif'>Use board</text><rect x="2522.8" y="1279.7" width="18.7" height="18.7" rx="3" fill="#fff" stroke="#333" stroke-width="1.2"/><text transform="translate(2546.4 1295.8) scale(0.93 1)" font-size="15.5" fill="#000" font-family='"Liberation Sans", sans-serif'>Use board</text><rect x="2518" y="1304" width="100" height="1" fill="#a0a0a0"/><text transform="translate(2520.5 1330.2) scale(0.93 1)" font-size="15.5" fill="#000" font-family='"Liberation Sans", sans-serif'>Presets (Ctrl+Tab)</text><rect x="2520.8" y="1341.8" width="110" height="31" fill="#fcfcfc" stroke="#c2c2c2" stroke-width="1"/><text transform="translate(2525 1362) scale(0.93 1)" font-size="15.5" fill="#000" font-family='"Liberation Sans", sans-serif'>---</text><text transform="translate(2520.5 1397.5) scale(0.93 1)" font-size="15.5" fill="#000" font-family='"Liberation Sans", sans-serif'>Viewports (Shift+Tab)</text><rect x="2520.8" y="1408" width="110" height="31" fill="#fcfcfc" stroke="#c2c2c2" stroke-width="1"/></svg>
</body></html>
